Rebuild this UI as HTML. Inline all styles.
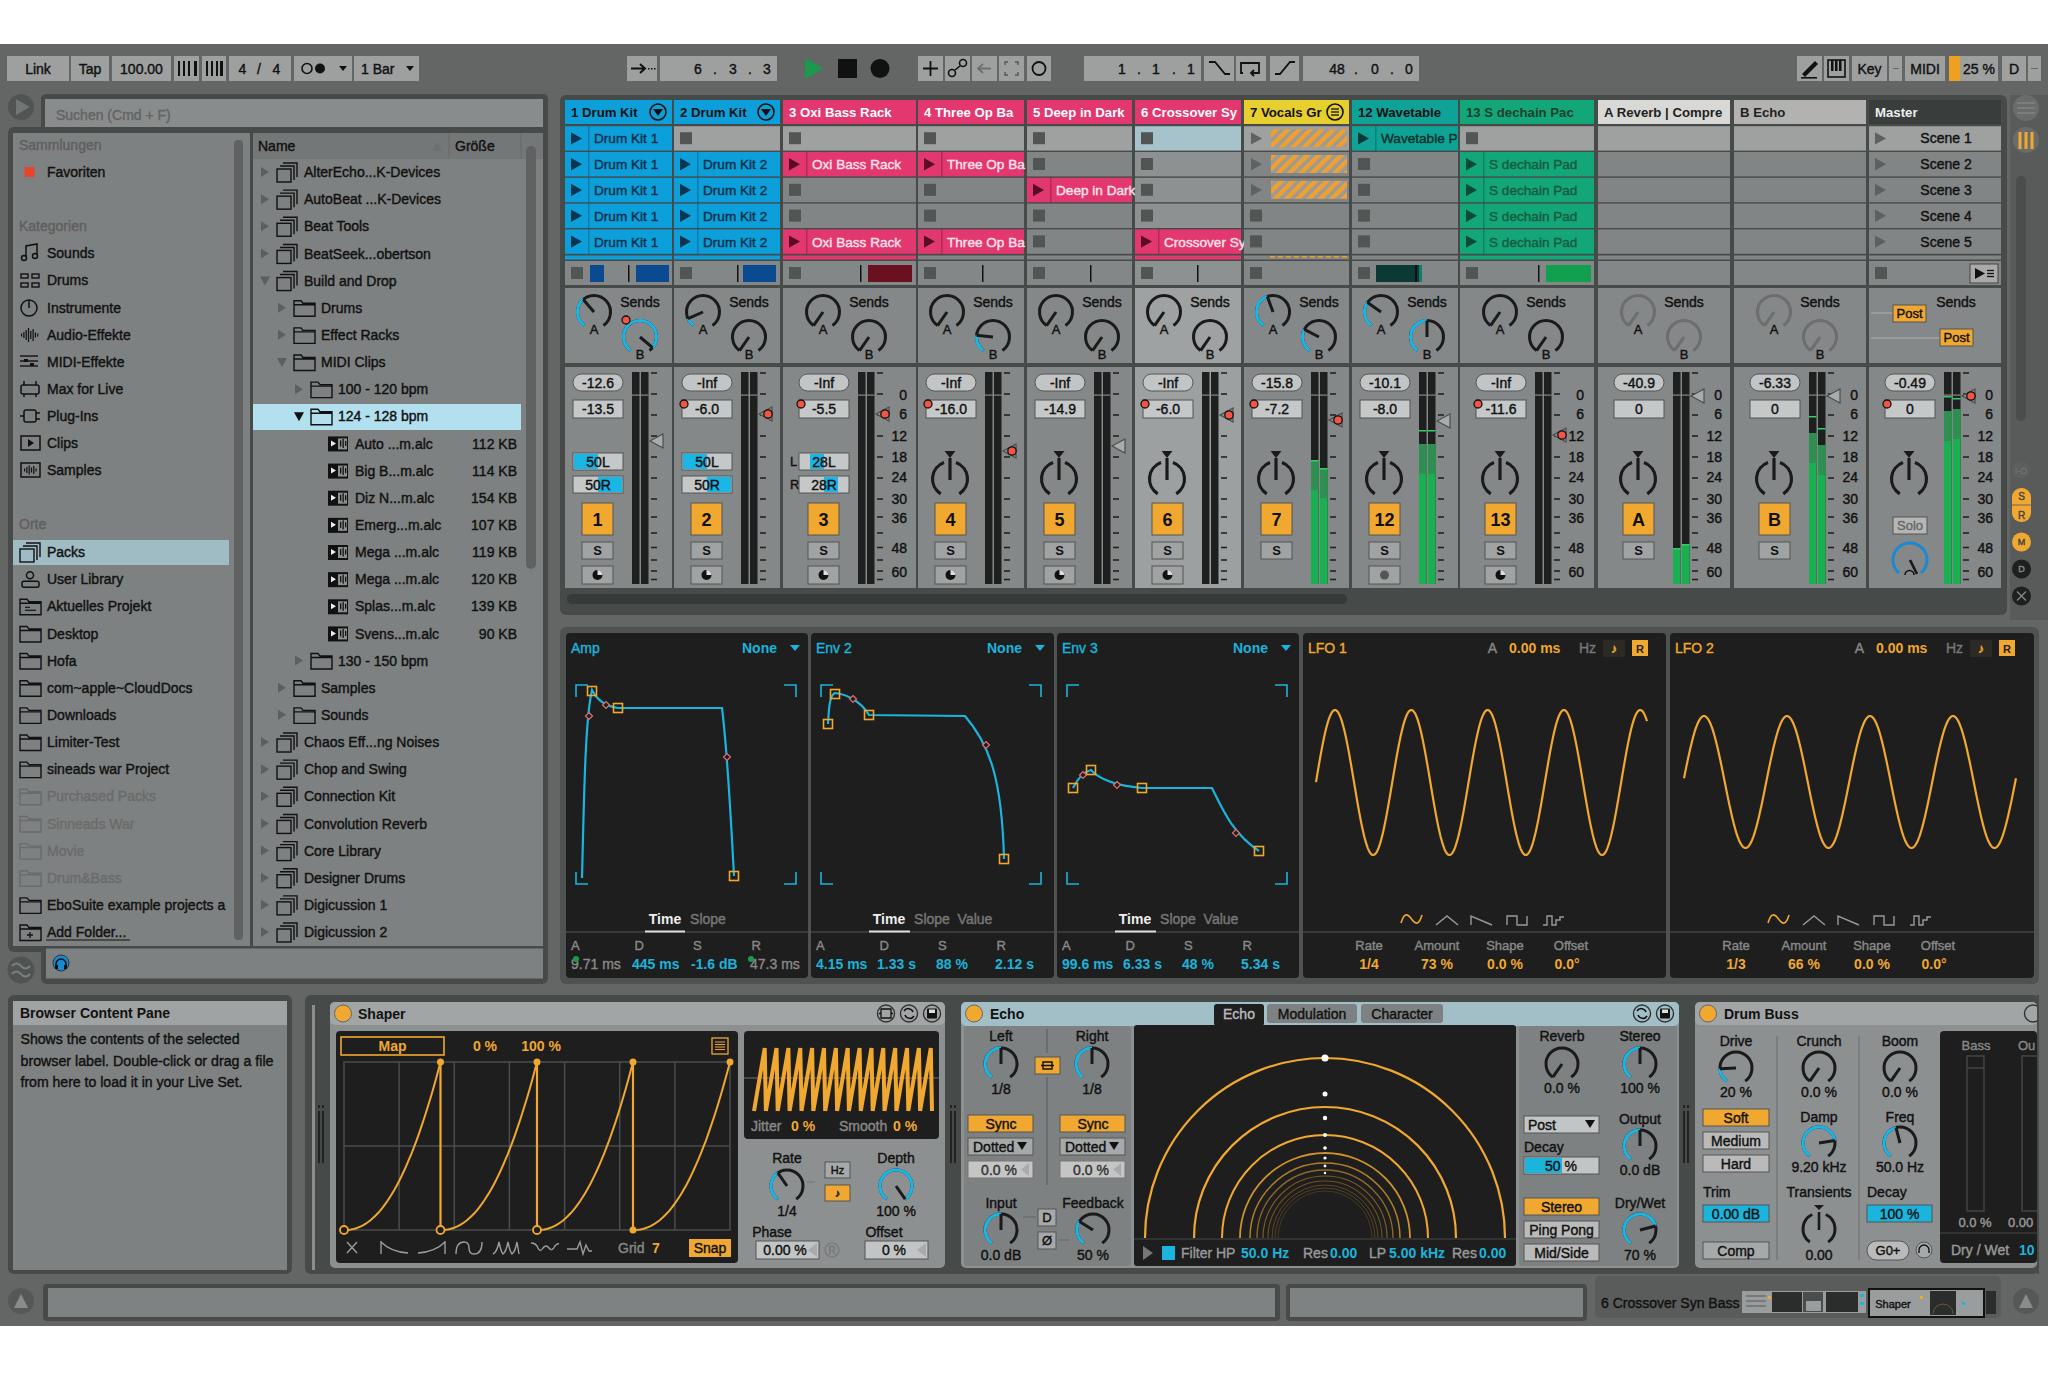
<!DOCTYPE html>
<html><head><meta charset="utf-8"><title>Live</title>
<style>
html,body{margin:0;padding:0;background:#fff;overflow:hidden;width:2048px;height:1374px}
svg{display:block;font-family:"Liberation Sans", sans-serif}
</style></head><body>
<svg width="2048" height="1374" viewBox="0 0 2048 1374">
<rect x="0" y="0" width="2048" height="1374" fill="#ffffff"/>
<rect x="0" y="44" width="2048" height="1282" fill="#636665" />
<rect x="7" y="56" width="62" height="25" fill="#9ea0a0" />
<text x="38.0" y="73.5" font-size="14" fill="#111" stroke="#111" stroke-width="0.4" font-weight="normal" text-anchor="middle" style="white-space:pre" >Link</text>
<rect x="71" y="56" width="38" height="25" fill="#9ea0a0" />
<text x="90.0" y="73.5" font-size="14" fill="#111" stroke="#111" stroke-width="0.4" font-weight="normal" text-anchor="middle" style="white-space:pre" >Tap</text>
<rect x="112" y="56" width="59" height="25" fill="#9ea0a0" />
<text x="141.5" y="73.5" font-size="14" fill="#111" stroke="#111" stroke-width="0.4" font-weight="normal" text-anchor="middle" style="white-space:pre" >100.00</text>
<rect x="174" y="56" width="25" height="25" fill="#9ea0a0" />
<rect x="202" y="56" width="24" height="25" fill="#9ea0a0" />
<rect x="178" y="61" width="2" height="15" fill="#111" />
<rect x="183" y="61" width="2" height="15" fill="#111" />
<rect x="188" y="61" width="2" height="15" fill="#111" />
<rect x="194" y="61" width="3" height="15" fill="#111" />
<rect x="206" y="61" width="2" height="15" fill="#111" />
<rect x="211" y="61" width="2" height="15" fill="#111" />
<rect x="216" y="61" width="2" height="15" fill="#111" />
<rect x="220" y="61" width="3" height="15" fill="#111" />
<rect x="229" y="56" width="62" height="25" fill="#9ea0a0" />
<text x="242.5" y="73.5" font-size="14" fill="#111" stroke="#111" stroke-width="0.4" font-weight="normal" text-anchor="middle" style="white-space:pre" >4</text>
<text x="259" y="73.5" font-size="14" fill="#111" stroke="#111" stroke-width="0.4" font-weight="normal" text-anchor="middle" style="white-space:pre" >/</text>
<text x="276.5" y="73.5" font-size="14" fill="#111" stroke="#111" stroke-width="0.4" font-weight="normal" text-anchor="middle" style="white-space:pre" >4</text>
<rect x="294" y="56" width="58" height="25" fill="#9ea0a0" />
<circle cx="307" cy="68.5" r="5" fill="none" stroke="#111" stroke-width="1.6" />
<circle cx="320" cy="68.5" r="5" fill="#111" />
<path d="M339,66 L347,66 L343,71 Z" stroke="none" stroke-width="1" fill="#111" />
<rect x="354" y="56" width="65" height="25" fill="#9ea0a0" />
<text x="361" y="73.5" font-size="14" fill="#111" stroke="#111" stroke-width="0.4" font-weight="normal" text-anchor="start" style="white-space:pre" >1 Bar</text>
<path d="M406,66 L414,66 L410,71 Z" stroke="none" stroke-width="1" fill="#111" />
<rect x="627" y="56" width="30" height="25" fill="#9ea0a0" />
<path d="M631,68.5 L645,68.5 M640,64 L645,68.5 L640,73" stroke="#111" stroke-width="2" fill="none" />
<rect x="648" y="68" width="1.5" height="1.5" fill="#111" />
<rect x="651" y="68" width="1.5" height="1.5" fill="#111" />
<rect x="654" y="68" width="1.5" height="1.5" fill="#111" />
<rect x="660" y="56" width="117" height="25" fill="#9ea0a0" />
<text x="698" y="73.5" font-size="14" fill="#111" stroke="#111" stroke-width="0.4" font-weight="normal" text-anchor="middle" style="white-space:pre" >6</text>
<text x="715" y="73.5" font-size="14" fill="#111" stroke="#111" stroke-width="0.4" font-weight="normal" text-anchor="middle" style="white-space:pre" >.</text>
<text x="733" y="73.5" font-size="14" fill="#111" stroke="#111" stroke-width="0.4" font-weight="normal" text-anchor="middle" style="white-space:pre" >3</text>
<text x="750" y="73.5" font-size="14" fill="#111" stroke="#111" stroke-width="0.4" font-weight="normal" text-anchor="middle" style="white-space:pre" >.</text>
<text x="767" y="73.5" font-size="14" fill="#111" stroke="#111" stroke-width="0.4" font-weight="normal" text-anchor="middle" style="white-space:pre" >3</text>
<path d="M805,58 L823,68.5 L805,79 Z" stroke="none" stroke-width="1" fill="#1a9a4a" />
<rect x="838" y="59" width="19" height="19" fill="#111" />
<circle cx="880" cy="68.5" r="9.5" fill="#111" />
<rect x="918" y="56" width="25" height="25" fill="#9ea0a0" />
<path d="M923,68.5 L938,68.5 M930.5,61 L930.5,76" stroke="#111" stroke-width="1.8" fill="none" />
<rect x="945" y="56" width="25" height="25" fill="#9ea0a0" />
<circle cx="952" cy="73" r="3.5" fill="none" stroke="#111" stroke-width="1.6" />
<circle cx="963" cy="63" r="3.5" fill="none" stroke="#111" stroke-width="1.6" />
<line x1="955" y1="70" x2="960" y2="66" stroke="#111" stroke-width="1.6" />
<rect x="972" y="56" width="25" height="25" fill="#9ea0a0" />
<path d="M978,68.5 L991,68.5 M983,64 L978,68.5 L983,73" stroke="#6f6f6f" stroke-width="1.8" fill="none" />
<rect x="999" y="56" width="25" height="25" fill="#9ea0a0" />
<path d="M1005,65 L1005,62 L1008,62 M1015,62 L1018,62 L1018,65 M1018,72 L1018,75 L1015,75 M1008,75 L1005,75 L1005,72" stroke="#555" stroke-width="1.4" fill="none" />
<rect x="1027" y="56" width="24" height="25" fill="#9ea0a0" />
<circle cx="1039" cy="68.5" r="6.5" fill="none" stroke="#111" stroke-width="1.8" />
<rect x="1084" y="56" width="117" height="25" fill="#9ea0a0" />
<text x="1122" y="73.5" font-size="14" fill="#111" stroke="#111" stroke-width="0.4" font-weight="normal" text-anchor="middle" style="white-space:pre" >1</text>
<text x="1139" y="73.5" font-size="14" fill="#111" stroke="#111" stroke-width="0.4" font-weight="normal" text-anchor="middle" style="white-space:pre" >.</text>
<text x="1156" y="73.5" font-size="14" fill="#111" stroke="#111" stroke-width="0.4" font-weight="normal" text-anchor="middle" style="white-space:pre" >1</text>
<text x="1174" y="73.5" font-size="14" fill="#111" stroke="#111" stroke-width="0.4" font-weight="normal" text-anchor="middle" style="white-space:pre" >.</text>
<text x="1191" y="73.5" font-size="14" fill="#111" stroke="#111" stroke-width="0.4" font-weight="normal" text-anchor="middle" style="white-space:pre" >1</text>
<rect x="1204" y="56" width="30" height="25" fill="#9ea0a0" />
<path d="M1209,62 L1215,62 L1225,74 L1230,74" stroke="#111" stroke-width="1.8" fill="none" />
<rect x="1236" y="56" width="30" height="25" fill="#9ea0a0" />
<path d="M1243,73 L1241,73 L1241,63 L1259,63 L1259,73 L1251,73 M1254,70 L1251,73 L1254,76" stroke="#111" stroke-width="1.8" fill="none" />
<rect x="1270" y="56" width="29" height="25" fill="#9ea0a0" />
<path d="M1275,74 L1280,74 L1290,62 L1295,62" stroke="#111" stroke-width="1.8" fill="none" />
<rect x="1303" y="56" width="116" height="25" fill="#9ea0a0" />
<text x="1337" y="73.5" font-size="14" fill="#111" stroke="#111" stroke-width="0.4" font-weight="normal" text-anchor="middle" style="white-space:pre" >48</text>
<text x="1356" y="73.5" font-size="14" fill="#111" stroke="#111" stroke-width="0.4" font-weight="normal" text-anchor="middle" style="white-space:pre" >.</text>
<text x="1375" y="73.5" font-size="14" fill="#111" stroke="#111" stroke-width="0.4" font-weight="normal" text-anchor="middle" style="white-space:pre" >0</text>
<text x="1392" y="73.5" font-size="14" fill="#111" stroke="#111" stroke-width="0.4" font-weight="normal" text-anchor="middle" style="white-space:pre" >.</text>
<text x="1409" y="73.5" font-size="14" fill="#111" stroke="#111" stroke-width="0.4" font-weight="normal" text-anchor="middle" style="white-space:pre" >0</text>
<rect x="1797" y="56" width="25" height="25" fill="#9ea0a0" />
<path d="M1802,74 L1815,61 L1818,64 L1805,77 Z" stroke="none" stroke-width="1" fill="#111" />
<rect x="1801" y="77" width="16" height="1.6" fill="#111" />
<rect x="1824" y="56" width="25" height="25" fill="#9ea0a0" />
<rect x="1828" y="60" width="17" height="17" fill="none" stroke="#111" stroke-width="1.6" />
<rect x="1831" y="60" width="2.5" height="11" fill="#111" />
<rect x="1835" y="60" width="2.5" height="11" fill="#111" />
<rect x="1839" y="60" width="2.5" height="11" fill="#111" />
<rect x="1852" y="56" width="35" height="25" fill="#9ea0a0" />
<text x="1869.5" y="73.5" font-size="14" fill="#111" stroke="#111" stroke-width="0.4" font-weight="normal" text-anchor="middle" style="white-space:pre" >Key</text>
<rect x="1889" y="56" width="13" height="25" fill="#9ea0a0" />
<rect x="1893" y="68" width="6" height="1" fill="#666" />
<rect x="1905" y="56" width="40" height="25" fill="#9ea0a0" />
<text x="1925.0" y="73.5" font-size="14" fill="#111" stroke="#111" stroke-width="0.4" font-weight="normal" text-anchor="middle" style="white-space:pre" >MIDI</text>
<rect x="1949" y="56" width="49" height="25" fill="#9ea0a0" />
<rect x="1949" y="56" width="11" height="25" fill="#f0a020" />
<text x="1979" y="73.5" font-size="14" fill="#111" stroke="#111" stroke-width="0.4" font-weight="normal" text-anchor="middle" style="white-space:pre" >25 %</text>
<rect x="2002" y="56" width="24" height="25" fill="#9ea0a0" />
<text x="2014.0" y="73.5" font-size="14" fill="#111" stroke="#111" stroke-width="0.4" font-weight="normal" text-anchor="middle" style="white-space:pre" >D</text>
<rect x="2028" y="56" width="13" height="25" fill="#9ea0a0" />
<rect x="2031" y="68" width="7" height="1" fill="#666" />
<circle cx="21" cy="107" r="13" fill="#505453" />
<path d="M16,99 L30,107 L16,115 Z" stroke="none" stroke-width="1" fill="#717574" />
<rect x="41" y="94" width="507" height="39" fill="#464a49" rx="5" />
<rect x="45" y="99" width="498" height="31" fill="#898c8c" />
<text x="56" y="120.0" font-size="14" fill="#636463" stroke="#636463" stroke-width="0.4" font-weight="normal" text-anchor="start" style="white-space:pre" >Suchen (Cmd + F)</text>
<rect x="8" y="127" width="540" height="825" fill="#464a49" rx="6" />
<rect x="41" y="900" width="507" height="84" fill="#464a49" rx="6" />
<rect x="41" y="900" width="507" height="20" fill="#464a49" />
<rect x="41" y="127" width="507" height="10" fill="#464a49" />
<rect x="13" y="133" width="237" height="813" fill="#7e8181" />
<rect x="253" y="133" width="290" height="813" fill="#7e8181" />
<rect x="253" y="133" width="290" height="26" fill="#747777" />
<line x1="449" y1="133" x2="449" y2="159" stroke="#6e6f6f" stroke-width="2" />
<line x1="521" y1="133" x2="521" y2="159" stroke="#6e6f6f" stroke-width="2" />
<text x="258" y="151.0" font-size="14" fill="#111" stroke="#111" stroke-width="0.4" font-weight="normal" text-anchor="start" style="white-space:pre" >Name</text>
<text x="455" y="151.0" font-size="14" fill="#111" stroke="#111" stroke-width="0.4" font-weight="normal" text-anchor="start" style="white-space:pre" >Größe</text>
<path d="M432,151 L442,151 L437,142 Z" stroke="none" stroke-width="1" fill="#6e6f6f" />
<rect x="234" y="140" width="9" height="800" fill="#5f6261" rx="4" />
<rect x="526" y="146" width="10" height="423" fill="#5f6261" rx="5" />
<rect x="46" y="948.5" width="497" height="30" fill="#7e8181" />
<circle cx="21" cy="970" r="13.5" fill="#4f5352" />
<path d="M12,966 q4.5,-5 9,0 t9,0 M12,974 q4.5,-5 9,0 t9,0" stroke="#7b7f7e" stroke-width="2" fill="none" />
<circle cx="61" cy="963" r="8" fill="#1a8ad0" stroke="#333" stroke-width="1" />
<path d="M56,967 v-3 a5,5 0 0 1 10,0 v3" stroke="#111" stroke-width="1.6" fill="none" />
<rect x="55" y="965" width="3" height="4" fill="#111" />
<rect x="64" y="965" width="3" height="4" fill="#111" />
<rect x="253" y="404" width="268" height="26" fill="#b3e0ee" />
<rect x="13" y="540" width="216" height="25" fill="#9fbcc4" />
<path d="M261,167.0 L269,172.0 L261,177.0 Z" stroke="none" stroke-width="1" fill="#5d5e5e" />
<path d="M283,163.0 h14 v14 M280,166.0 h14 v14" stroke="#111" stroke-width="1.4" fill="none" />
<rect x="277" y="169.0" width="14" height="13" fill="none" stroke="#111" stroke-width="1.4" />
<text x="304" y="177.0" font-size="14" fill="#111" stroke="#111" stroke-width="0.4" font-weight="normal" text-anchor="start" style="white-space:pre" >AlterEcho...K-Devices</text>
<path d="M261,194.143 L269,199.143 L261,204.143 Z" stroke="none" stroke-width="1" fill="#5d5e5e" />
<path d="M283,190.143 h14 v14 M280,193.143 h14 v14" stroke="#111" stroke-width="1.4" fill="none" />
<rect x="277" y="196.143" width="14" height="13" fill="none" stroke="#111" stroke-width="1.4" />
<text x="304" y="204.2" font-size="14" fill="#111" stroke="#111" stroke-width="0.4" font-weight="normal" text-anchor="start" style="white-space:pre" >AutoBeat ...K-Devices</text>
<path d="M261,221.286 L269,226.286 L261,231.286 Z" stroke="none" stroke-width="1" fill="#5d5e5e" />
<path d="M283,217.286 h14 v14 M280,220.286 h14 v14" stroke="#111" stroke-width="1.4" fill="none" />
<rect x="277" y="223.286" width="14" height="13" fill="none" stroke="#111" stroke-width="1.4" />
<text x="304" y="231.3" font-size="14" fill="#111" stroke="#111" stroke-width="0.4" font-weight="normal" text-anchor="start" style="white-space:pre" >Beat Tools</text>
<path d="M261,248.429 L269,253.429 L261,258.429 Z" stroke="none" stroke-width="1" fill="#5d5e5e" />
<path d="M283,244.429 h14 v14 M280,247.429 h14 v14" stroke="#111" stroke-width="1.4" fill="none" />
<rect x="277" y="250.429" width="14" height="13" fill="none" stroke="#111" stroke-width="1.4" />
<text x="304" y="258.5" font-size="14" fill="#111" stroke="#111" stroke-width="0.4" font-weight="normal" text-anchor="start" style="white-space:pre" >BeatSeek...obertson</text>
<path d="M260,276.572 L270,276.572 L265,285.572 Z" stroke="none" stroke-width="1" fill="#5d5e5e" />
<path d="M283,271.572 h14 v14 M280,274.572 h14 v14" stroke="#111" stroke-width="1.4" fill="none" />
<rect x="277" y="277.572" width="14" height="13" fill="none" stroke="#111" stroke-width="1.4" />
<text x="304" y="285.6" font-size="14" fill="#111" stroke="#111" stroke-width="0.4" font-weight="normal" text-anchor="start" style="white-space:pre" >Build and Drop</text>
<path d="M278,302.71500000000003 L286,307.71500000000003 L278,312.71500000000003 Z" stroke="none" stroke-width="1" fill="#5d5e5e" />
<path d="M294,300.71500000000003 h7 l2,2.5 h12 v13 h-21 z M294,304.71500000000003 h21" stroke="#111" stroke-width="1.4" fill="none" />
<text x="321" y="312.8" font-size="14" fill="#111" stroke="#111" stroke-width="0.4" font-weight="normal" text-anchor="start" style="white-space:pre" >Drums</text>
<path d="M278,329.858 L286,334.858 L278,339.858 Z" stroke="none" stroke-width="1" fill="#5d5e5e" />
<path d="M294,327.858 h7 l2,2.5 h12 v13 h-21 z M294,331.858 h21" stroke="#111" stroke-width="1.4" fill="none" />
<text x="321" y="339.9" font-size="14" fill="#111" stroke="#111" stroke-width="0.4" font-weight="normal" text-anchor="start" style="white-space:pre" >Effect Racks</text>
<path d="M277,358.001 L287,358.001 L282,367.001 Z" stroke="none" stroke-width="1" fill="#5d5e5e" />
<path d="M294,355.001 h7 l2,2.5 h12 v13 h-21 z M294,359.001 h21" stroke="#111" stroke-width="1.4" fill="none" />
<text x="321" y="367.0" font-size="14" fill="#111" stroke="#111" stroke-width="0.4" font-weight="normal" text-anchor="start" style="white-space:pre" >MIDI Clips</text>
<path d="M295,384.144 L303,389.144 L295,394.144 Z" stroke="none" stroke-width="1" fill="#5d5e5e" />
<path d="M311,382.144 h7 l2,2.5 h12 v13 h-21 z M311,386.144 h21" stroke="#111" stroke-width="1.4" fill="none" />
<text x="338" y="394.2" font-size="14" fill="#111" stroke="#111" stroke-width="0.4" font-weight="normal" text-anchor="start" style="white-space:pre" >100 - 120 bpm</text>
<path d="M294,412.28700000000003 L304,412.28700000000003 L299,421.28700000000003 Z" stroke="none" stroke-width="1" fill="#111" />
<path d="M311,409.28700000000003 h7 l2,2.5 h12 v13 h-21 z M311,413.28700000000003 h21" stroke="#111" stroke-width="1.4" fill="none" />
<text x="338" y="421.3" font-size="14" fill="#111" stroke="#111" stroke-width="0.4" font-weight="normal" text-anchor="start" style="white-space:pre" >124 - 128 bpm</text>
<rect x="328" y="436.43" width="20" height="15" fill="#111" />
<path d="M331,440.43 L336,443.43 L331,446.43 Z" stroke="none" stroke-width="1" fill="#eee" />
<rect x="338" y="438.43" width="9" height="11" fill="#8e8f8f" />
<rect x="340" y="440.43" width="1.3" height="6" fill="#111" />
<rect x="342.5" y="438.93" width="1.3" height="9" fill="#111" />
<rect x="345" y="440.93" width="1.3" height="5" fill="#111" />
<text x="355" y="448.5" font-size="14" fill="#111" stroke="#111" stroke-width="0.4" font-weight="normal" text-anchor="start" style="white-space:pre" >Auto ...m.alc</text>
<text x="517" y="448.5" font-size="14" fill="#111" stroke="#111" stroke-width="0.4" font-weight="normal" text-anchor="end" style="white-space:pre" >112 KB</text>
<rect x="328" y="463.573" width="20" height="15" fill="#111" />
<path d="M331,467.573 L336,470.573 L331,473.573 Z" stroke="none" stroke-width="1" fill="#eee" />
<rect x="338" y="465.573" width="9" height="11" fill="#8e8f8f" />
<rect x="340" y="467.573" width="1.3" height="6" fill="#111" />
<rect x="342.5" y="466.073" width="1.3" height="9" fill="#111" />
<rect x="345" y="468.073" width="1.3" height="5" fill="#111" />
<text x="355" y="475.6" font-size="14" fill="#111" stroke="#111" stroke-width="0.4" font-weight="normal" text-anchor="start" style="white-space:pre" >Big B...m.alc</text>
<text x="517" y="475.6" font-size="14" fill="#111" stroke="#111" stroke-width="0.4" font-weight="normal" text-anchor="end" style="white-space:pre" >114 KB</text>
<rect x="328" y="490.716" width="20" height="15" fill="#111" />
<path d="M331,494.716 L336,497.716 L331,500.716 Z" stroke="none" stroke-width="1" fill="#eee" />
<rect x="338" y="492.716" width="9" height="11" fill="#8e8f8f" />
<rect x="340" y="494.716" width="1.3" height="6" fill="#111" />
<rect x="342.5" y="493.216" width="1.3" height="9" fill="#111" />
<rect x="345" y="495.216" width="1.3" height="5" fill="#111" />
<text x="355" y="502.8" font-size="14" fill="#111" stroke="#111" stroke-width="0.4" font-weight="normal" text-anchor="start" style="white-space:pre" >Diz N...m.alc</text>
<text x="517" y="502.8" font-size="14" fill="#111" stroke="#111" stroke-width="0.4" font-weight="normal" text-anchor="end" style="white-space:pre" >154 KB</text>
<rect x="328" y="517.859" width="20" height="15" fill="#111" />
<path d="M331,521.859 L336,524.859 L331,527.859 Z" stroke="none" stroke-width="1" fill="#eee" />
<rect x="338" y="519.859" width="9" height="11" fill="#8e8f8f" />
<rect x="340" y="521.859" width="1.3" height="6" fill="#111" />
<rect x="342.5" y="520.359" width="1.3" height="9" fill="#111" />
<rect x="345" y="522.359" width="1.3" height="5" fill="#111" />
<text x="355" y="529.9" font-size="14" fill="#111" stroke="#111" stroke-width="0.4" font-weight="normal" text-anchor="start" style="white-space:pre" >Emerg...m.alc</text>
<text x="517" y="529.9" font-size="14" fill="#111" stroke="#111" stroke-width="0.4" font-weight="normal" text-anchor="end" style="white-space:pre" >107 KB</text>
<rect x="328" y="545.002" width="20" height="15" fill="#111" />
<path d="M331,549.002 L336,552.002 L331,555.002 Z" stroke="none" stroke-width="1" fill="#eee" />
<rect x="338" y="547.002" width="9" height="11" fill="#8e8f8f" />
<rect x="340" y="549.002" width="1.3" height="6" fill="#111" />
<rect x="342.5" y="547.502" width="1.3" height="9" fill="#111" />
<rect x="345" y="549.502" width="1.3" height="5" fill="#111" />
<text x="355" y="557.0" font-size="14" fill="#111" stroke="#111" stroke-width="0.4" font-weight="normal" text-anchor="start" style="white-space:pre" >Mega ...m.alc</text>
<text x="517" y="557.0" font-size="14" fill="#111" stroke="#111" stroke-width="0.4" font-weight="normal" text-anchor="end" style="white-space:pre" >119 KB</text>
<rect x="328" y="572.145" width="20" height="15" fill="#111" />
<path d="M331,576.145 L336,579.145 L331,582.145 Z" stroke="none" stroke-width="1" fill="#eee" />
<rect x="338" y="574.145" width="9" height="11" fill="#8e8f8f" />
<rect x="340" y="576.145" width="1.3" height="6" fill="#111" />
<rect x="342.5" y="574.645" width="1.3" height="9" fill="#111" />
<rect x="345" y="576.645" width="1.3" height="5" fill="#111" />
<text x="355" y="584.2" font-size="14" fill="#111" stroke="#111" stroke-width="0.4" font-weight="normal" text-anchor="start" style="white-space:pre" >Mega ...m.alc</text>
<text x="517" y="584.2" font-size="14" fill="#111" stroke="#111" stroke-width="0.4" font-weight="normal" text-anchor="end" style="white-space:pre" >120 KB</text>
<rect x="328" y="599.288" width="20" height="15" fill="#111" />
<path d="M331,603.288 L336,606.288 L331,609.288 Z" stroke="none" stroke-width="1" fill="#eee" />
<rect x="338" y="601.288" width="9" height="11" fill="#8e8f8f" />
<rect x="340" y="603.288" width="1.3" height="6" fill="#111" />
<rect x="342.5" y="601.788" width="1.3" height="9" fill="#111" />
<rect x="345" y="603.788" width="1.3" height="5" fill="#111" />
<text x="355" y="611.3" font-size="14" fill="#111" stroke="#111" stroke-width="0.4" font-weight="normal" text-anchor="start" style="white-space:pre" >Splas...m.alc</text>
<text x="517" y="611.3" font-size="14" fill="#111" stroke="#111" stroke-width="0.4" font-weight="normal" text-anchor="end" style="white-space:pre" >139 KB</text>
<rect x="328" y="626.431" width="20" height="15" fill="#111" />
<path d="M331,630.431 L336,633.431 L331,636.431 Z" stroke="none" stroke-width="1" fill="#eee" />
<rect x="338" y="628.431" width="9" height="11" fill="#8e8f8f" />
<rect x="340" y="630.431" width="1.3" height="6" fill="#111" />
<rect x="342.5" y="628.931" width="1.3" height="9" fill="#111" />
<rect x="345" y="630.931" width="1.3" height="5" fill="#111" />
<text x="355" y="638.5" font-size="14" fill="#111" stroke="#111" stroke-width="0.4" font-weight="normal" text-anchor="start" style="white-space:pre" >Svens...m.alc</text>
<text x="517" y="638.5" font-size="14" fill="#111" stroke="#111" stroke-width="0.4" font-weight="normal" text-anchor="end" style="white-space:pre" >90 KB</text>
<path d="M295,655.5740000000001 L303,660.5740000000001 L295,665.5740000000001 Z" stroke="none" stroke-width="1" fill="#5d5e5e" />
<path d="M311,653.5740000000001 h7 l2,2.5 h12 v13 h-21 z M311,657.5740000000001 h21" stroke="#111" stroke-width="1.4" fill="none" />
<text x="338" y="665.6" font-size="14" fill="#111" stroke="#111" stroke-width="0.4" font-weight="normal" text-anchor="start" style="white-space:pre" >130 - 150 bpm</text>
<path d="M278,682.717 L286,687.717 L278,692.717 Z" stroke="none" stroke-width="1" fill="#5d5e5e" />
<path d="M294,680.717 h7 l2,2.5 h12 v13 h-21 z M294,684.717 h21" stroke="#111" stroke-width="1.4" fill="none" />
<text x="321" y="692.8" font-size="14" fill="#111" stroke="#111" stroke-width="0.4" font-weight="normal" text-anchor="start" style="white-space:pre" >Samples</text>
<path d="M278,709.86 L286,714.86 L278,719.86 Z" stroke="none" stroke-width="1" fill="#5d5e5e" />
<path d="M294,707.86 h7 l2,2.5 h12 v13 h-21 z M294,711.86 h21" stroke="#111" stroke-width="1.4" fill="none" />
<text x="321" y="719.9" font-size="14" fill="#111" stroke="#111" stroke-width="0.4" font-weight="normal" text-anchor="start" style="white-space:pre" >Sounds</text>
<path d="M261,737.003 L269,742.003 L261,747.003 Z" stroke="none" stroke-width="1" fill="#5d5e5e" />
<path d="M283,733.003 h14 v14 M280,736.003 h14 v14" stroke="#111" stroke-width="1.4" fill="none" />
<rect x="277" y="739.003" width="14" height="13" fill="none" stroke="#111" stroke-width="1.4" />
<text x="304" y="747.0" font-size="14" fill="#111" stroke="#111" stroke-width="0.4" font-weight="normal" text-anchor="start" style="white-space:pre" >Chaos Eff...ng Noises</text>
<path d="M261,764.146 L269,769.146 L261,774.146 Z" stroke="none" stroke-width="1" fill="#5d5e5e" />
<path d="M283,760.146 h14 v14 M280,763.146 h14 v14" stroke="#111" stroke-width="1.4" fill="none" />
<rect x="277" y="766.146" width="14" height="13" fill="none" stroke="#111" stroke-width="1.4" />
<text x="304" y="774.2" font-size="14" fill="#111" stroke="#111" stroke-width="0.4" font-weight="normal" text-anchor="start" style="white-space:pre" >Chop and Swing</text>
<path d="M261,791.289 L269,796.289 L261,801.289 Z" stroke="none" stroke-width="1" fill="#5d5e5e" />
<path d="M283,787.289 h14 v14 M280,790.289 h14 v14" stroke="#111" stroke-width="1.4" fill="none" />
<rect x="277" y="793.289" width="14" height="13" fill="none" stroke="#111" stroke-width="1.4" />
<text x="304" y="801.3" font-size="14" fill="#111" stroke="#111" stroke-width="0.4" font-weight="normal" text-anchor="start" style="white-space:pre" >Connection Kit</text>
<path d="M261,818.432 L269,823.432 L261,828.432 Z" stroke="none" stroke-width="1" fill="#5d5e5e" />
<path d="M283,814.432 h14 v14 M280,817.432 h14 v14" stroke="#111" stroke-width="1.4" fill="none" />
<rect x="277" y="820.432" width="14" height="13" fill="none" stroke="#111" stroke-width="1.4" />
<text x="304" y="828.5" font-size="14" fill="#111" stroke="#111" stroke-width="0.4" font-weight="normal" text-anchor="start" style="white-space:pre" >Convolution Reverb</text>
<path d="M261,845.575 L269,850.575 L261,855.575 Z" stroke="none" stroke-width="1" fill="#5d5e5e" />
<path d="M283,841.575 h14 v14 M280,844.575 h14 v14" stroke="#111" stroke-width="1.4" fill="none" />
<rect x="277" y="847.575" width="14" height="13" fill="none" stroke="#111" stroke-width="1.4" />
<text x="304" y="855.6" font-size="14" fill="#111" stroke="#111" stroke-width="0.4" font-weight="normal" text-anchor="start" style="white-space:pre" >Core Library</text>
<path d="M261,872.7180000000001 L269,877.7180000000001 L261,882.7180000000001 Z" stroke="none" stroke-width="1" fill="#5d5e5e" />
<path d="M283,868.7180000000001 h14 v14 M280,871.7180000000001 h14 v14" stroke="#111" stroke-width="1.4" fill="none" />
<rect x="277" y="874.7180000000001" width="14" height="13" fill="none" stroke="#111" stroke-width="1.4" />
<text x="304" y="882.8" font-size="14" fill="#111" stroke="#111" stroke-width="0.4" font-weight="normal" text-anchor="start" style="white-space:pre" >Designer Drums</text>
<path d="M261,899.861 L269,904.861 L261,909.861 Z" stroke="none" stroke-width="1" fill="#5d5e5e" />
<path d="M283,895.861 h14 v14 M280,898.861 h14 v14" stroke="#111" stroke-width="1.4" fill="none" />
<rect x="277" y="901.861" width="14" height="13" fill="none" stroke="#111" stroke-width="1.4" />
<text x="304" y="909.9" font-size="14" fill="#111" stroke="#111" stroke-width="0.4" font-weight="normal" text-anchor="start" style="white-space:pre" >Digicussion 1</text>
<path d="M261,927.004 L269,932.004 L261,937.004 Z" stroke="none" stroke-width="1" fill="#5d5e5e" />
<path d="M283,923.004 h14 v14 M280,926.004 h14 v14" stroke="#111" stroke-width="1.4" fill="none" />
<rect x="277" y="929.004" width="14" height="13" fill="none" stroke="#111" stroke-width="1.4" />
<text x="304" y="937.0" font-size="14" fill="#111" stroke="#111" stroke-width="0.4" font-weight="normal" text-anchor="start" style="white-space:pre" >Digicussion 2</text>
<text x="19" y="150.0" font-size="14" fill="#5e5f5f" stroke="#5e5f5f" stroke-width="0.4" font-weight="normal" text-anchor="start" style="white-space:pre" >Sammlungen</text>
<text x="19" y="231.0" font-size="14" fill="#5e5f5f" stroke="#5e5f5f" stroke-width="0.4" font-weight="normal" text-anchor="start" style="white-space:pre" >Kategorien</text>
<text x="19" y="529.0" font-size="14" fill="#5e5f5f" stroke="#5e5f5f" stroke-width="0.4" font-weight="normal" text-anchor="start" style="white-space:pre" >Orte</text>
<rect x="24.5" y="167" width="10" height="10" fill="#e8442a" />
<text x="47" y="177.0" font-size="14" fill="#111" stroke="#111" stroke-width="0.4" font-weight="normal" text-anchor="start" style="white-space:pre" >Favoriten</text>
<path d="M26,257 v-11 l11,-2 v11" stroke="#111" stroke-width="1.5" fill="none" />
<circle cx="24" cy="258" r="2.5" fill="none" stroke="#111" stroke-width="1.5" />
<circle cx="35" cy="256" r="2.5" fill="none" stroke="#111" stroke-width="1.5" />
<text x="47" y="258.0" font-size="14" fill="#111" stroke="#111" stroke-width="0.4" font-weight="normal" text-anchor="start" style="white-space:pre" >Sounds</text>
<rect x="21" y="274" width="7" height="4" fill="none" stroke="#111" stroke-width="1.4" />
<rect x="21" y="283" width="7" height="4" fill="none" stroke="#111" stroke-width="1.4" />
<rect x="32" y="274" width="7" height="4" fill="none" stroke="#111" stroke-width="1.4" />
<rect x="32" y="283" width="7" height="4" fill="none" stroke="#111" stroke-width="1.4" />
<text x="47" y="285.0" font-size="14" fill="#111" stroke="#111" stroke-width="0.4" font-weight="normal" text-anchor="start" style="white-space:pre" >Drums</text>
<circle cx="29" cy="308" r="8" fill="none" stroke="#111" stroke-width="1.5" />
<line x1="29" y1="300" x2="29" y2="308" stroke="#111" stroke-width="1.5" />
<text x="47" y="313.0" font-size="14" fill="#111" stroke="#111" stroke-width="0.4" font-weight="normal" text-anchor="start" style="white-space:pre" >Instrumente</text>
<rect x="21.0" y="333.5" width="1.2" height="3" fill="#111" />
<rect x="23.3" y="332.0" width="1.2" height="6" fill="#111" />
<rect x="25.6" y="330.0" width="1.2" height="10" fill="#111" />
<rect x="27.9" y="328.0" width="1.2" height="14" fill="#111" />
<rect x="30.2" y="331.0" width="1.2" height="8" fill="#111" />
<rect x="32.5" y="329.0" width="1.2" height="12" fill="#111" />
<rect x="34.8" y="332.5" width="1.2" height="5" fill="#111" />
<rect x="37.099999999999994" y="333.5" width="1.2" height="3" fill="#111" />
<text x="47" y="340.0" font-size="14" fill="#111" stroke="#111" stroke-width="0.4" font-weight="normal" text-anchor="start" style="white-space:pre" >Audio-Effekte</text>
<line x1="20" y1="356" x2="38" y2="356" stroke="#111" stroke-width="1.4" />
<line x1="20" y1="361" x2="38" y2="361" stroke="#111" stroke-width="1.4" />
<line x1="20" y1="366" x2="38" y2="366" stroke="#111" stroke-width="1.4" />
<rect x="24" y="359" width="4" height="3" fill="#111" />
<rect x="30" y="363" width="4" height="3" fill="#111" />
<text x="47" y="367.0" font-size="14" fill="#111" stroke="#111" stroke-width="0.4" font-weight="normal" text-anchor="start" style="white-space:pre" >MIDI-Effekte</text>
<rect x="21" y="385" width="18" height="9" fill="none" rx="2" stroke="#111" stroke-width="1.5" />
<line x1="24" y1="381" x2="24" y2="385" stroke="#111" stroke-width="1.5" />
<line x1="36" y1="381" x2="36" y2="385" stroke="#111" stroke-width="1.5" />
<line x1="24" y1="394" x2="24" y2="397" stroke="#111" stroke-width="1.5" />
<line x1="36" y1="394" x2="36" y2="397" stroke="#111" stroke-width="1.5" />
<text x="47" y="394.0" font-size="14" fill="#111" stroke="#111" stroke-width="0.4" font-weight="normal" text-anchor="start" style="white-space:pre" >Max for Live</text>
<rect x="24" y="410" width="12" height="12" fill="none" rx="2" stroke="#111" stroke-width="1.5" />
<line x1="20" y1="416" x2="24" y2="416" stroke="#111" stroke-width="1.5" />
<line x1="36" y1="413" x2="40" y2="413" stroke="#111" stroke-width="1.5" />
<line x1="36" y1="419" x2="40" y2="419" stroke="#111" stroke-width="1.5" />
<text x="47" y="421.0" font-size="14" fill="#111" stroke="#111" stroke-width="0.4" font-weight="normal" text-anchor="start" style="white-space:pre" >Plug-Ins</text>
<rect x="21" y="436" width="19" height="14" fill="none" stroke="#111" stroke-width="1.5" />
<path d="M28,439 L34,443 L28,447 Z" stroke="none" stroke-width="1" fill="#111" />
<text x="47" y="448.0" font-size="14" fill="#111" stroke="#111" stroke-width="0.4" font-weight="normal" text-anchor="start" style="white-space:pre" >Clips</text>
<rect x="21" y="463" width="19" height="14" fill="none" stroke="#111" stroke-width="1.5" />
<rect x="24.0" y="468.5" width="1.2" height="3" fill="#111" />
<rect x="26.3" y="467.0" width="1.2" height="6" fill="#111" />
<rect x="28.6" y="465.5" width="1.2" height="9" fill="#111" />
<rect x="30.9" y="467.5" width="1.2" height="5" fill="#111" />
<rect x="33.2" y="466.0" width="1.2" height="8" fill="#111" />
<rect x="35.5" y="468.5" width="1.2" height="3" fill="#111" />
<text x="47" y="475.0" font-size="14" fill="#111" stroke="#111" stroke-width="0.4" font-weight="normal" text-anchor="start" style="white-space:pre" >Samples</text>
<path d="M26,543.002 h14 v14 M23,546.002 h14 v14" stroke="#111" stroke-width="1.4" fill="none" />
<rect x="20" y="549.002" width="14" height="13" fill="none" stroke="#111" stroke-width="1.4" />
<text x="47" y="557.0" font-size="14" fill="#111" stroke="#111" stroke-width="0.4" font-weight="normal" text-anchor="start" style="white-space:pre" >Packs</text>
<circle cx="30" cy="575.145" r="3.5" fill="none" stroke="#111" stroke-width="1.5" />
<rect x="22" y="581.145" width="17" height="6" fill="none" rx="2" stroke="#111" stroke-width="1.5" />
<text x="47" y="584.2" font-size="14" fill="#111" stroke="#111" stroke-width="0.4" font-weight="normal" text-anchor="start" style="white-space:pre" >User Library</text>
<path d="M20,599.288 h7 l2,2.5 h12 v13 h-21 z M20,603.288 h21" stroke="#111" stroke-width="1.4" fill="none" />
<line x1="25" y1="607.288" x2="30" y2="607.288" stroke="#111" stroke-width="1.2" />
<line x1="25" y1="610.288" x2="36" y2="610.288" stroke="#111" stroke-width="1.2" />
<text x="47" y="611.3" font-size="14" fill="#111" stroke="#111" stroke-width="0.4" font-weight="normal" text-anchor="start" style="white-space:pre" >Aktuelles Projekt</text>
<path d="M20,626.431 h7 l2,2.5 h12 v13 h-21 z M20,630.431 h21" stroke="#111" stroke-width="1.4" fill="none" />
<text x="47" y="638.5" font-size="14" fill="#111" stroke="#111" stroke-width="0.4" font-weight="normal" text-anchor="start" style="white-space:pre" >Desktop</text>
<path d="M20,653.5740000000001 h7 l2,2.5 h12 v13 h-21 z M20,657.5740000000001 h21" stroke="#111" stroke-width="1.4" fill="none" />
<text x="47" y="665.6" font-size="14" fill="#111" stroke="#111" stroke-width="0.4" font-weight="normal" text-anchor="start" style="white-space:pre" >Hofa</text>
<path d="M20,680.717 h7 l2,2.5 h12 v13 h-21 z M20,684.717 h21" stroke="#111" stroke-width="1.4" fill="none" />
<text x="47" y="692.8" font-size="14" fill="#111" stroke="#111" stroke-width="0.4" font-weight="normal" text-anchor="start" style="white-space:pre" >com~apple~CloudDocs</text>
<path d="M20,707.86 h7 l2,2.5 h12 v13 h-21 z M20,711.86 h21" stroke="#111" stroke-width="1.4" fill="none" />
<text x="47" y="719.9" font-size="14" fill="#111" stroke="#111" stroke-width="0.4" font-weight="normal" text-anchor="start" style="white-space:pre" >Downloads</text>
<path d="M20,735.003 h7 l2,2.5 h12 v13 h-21 z M20,739.003 h21" stroke="#111" stroke-width="1.4" fill="none" />
<text x="47" y="747.0" font-size="14" fill="#111" stroke="#111" stroke-width="0.4" font-weight="normal" text-anchor="start" style="white-space:pre" >Limiter-Test</text>
<path d="M20,762.146 h7 l2,2.5 h12 v13 h-21 z M20,766.146 h21" stroke="#111" stroke-width="1.4" fill="none" />
<text x="47" y="774.2" font-size="14" fill="#111" stroke="#111" stroke-width="0.4" font-weight="normal" text-anchor="start" style="white-space:pre" >sineads war Project</text>
<path d="M20,789.289 h7 l2,2.5 h12 v13 h-21 z M20,793.289 h21" stroke="#6a6b6b" stroke-width="1.4" fill="none" />
<text x="47" y="801.3" font-size="14" fill="#6a6b6b" stroke="#6a6b6b" stroke-width="0.4" font-weight="normal" text-anchor="start" style="white-space:pre" >Purchased Packs</text>
<path d="M20,816.432 h7 l2,2.5 h12 v13 h-21 z M20,820.432 h21" stroke="#6a6b6b" stroke-width="1.4" fill="none" />
<text x="47" y="828.5" font-size="14" fill="#6a6b6b" stroke="#6a6b6b" stroke-width="0.4" font-weight="normal" text-anchor="start" style="white-space:pre" >Sinneads War</text>
<path d="M20,843.575 h7 l2,2.5 h12 v13 h-21 z M20,847.575 h21" stroke="#6a6b6b" stroke-width="1.4" fill="none" />
<text x="47" y="855.6" font-size="14" fill="#6a6b6b" stroke="#6a6b6b" stroke-width="0.4" font-weight="normal" text-anchor="start" style="white-space:pre" >Movie</text>
<path d="M20,870.7180000000001 h7 l2,2.5 h12 v13 h-21 z M20,874.7180000000001 h21" stroke="#6a6b6b" stroke-width="1.4" fill="none" />
<text x="47" y="882.8" font-size="14" fill="#6a6b6b" stroke="#6a6b6b" stroke-width="0.4" font-weight="normal" text-anchor="start" style="white-space:pre" >Drum&amp;Bass</text>
<path d="M20,897.861 h7 l2,2.5 h12 v13 h-21 z M20,901.861 h21" stroke="#111" stroke-width="1.4" fill="none" />
<text x="47" y="909.9" font-size="14" fill="#111" stroke="#111" stroke-width="0.4" font-weight="normal" text-anchor="start" style="white-space:pre" >EboSuite example projects a</text>
<path d="M20,925.004 h7 l2,2.5 h12 v13 h-21 z M20,929.004 h21" stroke="#111" stroke-width="1.4" fill="none" />
<path d="M27,935.004 h6 M30,932.004 v6" stroke="#111" stroke-width="1.3" fill="none" />
<text x="47" y="937.0" font-size="14" fill="#111" stroke="#111" stroke-width="0.4" font-weight="normal" text-anchor="start" style="white-space:pre" >Add Folder...</text>
<line x1="46" y1="940" x2="130" y2="940" stroke="#111" stroke-width="1.2" />
<rect x="560" y="95" width="1447" height="520" fill="#464a49" rx="6" />
<rect x="2010" y="95" width="38" height="525" fill="#585b5a" />
<defs><pattern id="hatch" patternUnits="userSpaceOnUse" width="8" height="8" patternTransform="rotate(45)"><rect width="8" height="8" fill="#9a9a96"/><rect width="4.5" height="8" fill="#f0a030"/></pattern></defs>
<rect x="565" y="100" width="107" height="24" fill="#0d9fd9" />
<text x="571" y="117.3" font-size="13.2" fill="#111" font-weight="bold" text-anchor="start" style="white-space:pre" >1 Drum Kit</text>
<circle cx="658" cy="112" r="8" fill="none" stroke="#111" stroke-width="1.6" />
<path d="M653,109 L663,109 L658,116 Z" stroke="none" stroke-width="1" fill="#111" />
<rect x="565" y="126.2" width="107" height="24.4" fill="#0d9fd9" />
<rect x="588" y="126.2" width="1.5" height="24.4" fill="#00000038" />
<path d="M571,132.2 L582,138.4 L571,144.6 Z" stroke="none" stroke-width="1" fill="#0b3550" />
<text x="594" y="143.3" font-size="13.6" fill="#0b2f48" stroke="#0b2f48" stroke-width="0.4" font-weight="normal" text-anchor="start" style="white-space:pre" >Drum Kit 1</text>
<rect x="565" y="152" width="107" height="24.4" fill="#0d9fd9" />
<rect x="588" y="152" width="1.5" height="24.4" fill="#00000038" />
<path d="M571,158 L582,164.2 L571,170.4 Z" stroke="none" stroke-width="1" fill="#0b3550" />
<text x="594" y="169.1" font-size="13.6" fill="#0b2f48" stroke="#0b2f48" stroke-width="0.4" font-weight="normal" text-anchor="start" style="white-space:pre" >Drum Kit 1</text>
<rect x="565" y="177.8" width="107" height="24.4" fill="#0d9fd9" />
<rect x="588" y="177.8" width="1.5" height="24.4" fill="#00000038" />
<path d="M571,183.8 L582,190.0 L571,196.20000000000002 Z" stroke="none" stroke-width="1" fill="#0b3550" />
<text x="594" y="194.9" font-size="13.6" fill="#0b2f48" stroke="#0b2f48" stroke-width="0.4" font-weight="normal" text-anchor="start" style="white-space:pre" >Drum Kit 1</text>
<rect x="565" y="203.6" width="107" height="24.4" fill="#0d9fd9" />
<rect x="588" y="203.6" width="1.5" height="24.4" fill="#00000038" />
<path d="M571,209.6 L582,215.79999999999998 L571,222.0 Z" stroke="none" stroke-width="1" fill="#0b3550" />
<text x="594" y="220.7" font-size="13.6" fill="#0b2f48" stroke="#0b2f48" stroke-width="0.4" font-weight="normal" text-anchor="start" style="white-space:pre" >Drum Kit 1</text>
<rect x="565" y="229.4" width="107" height="24.4" fill="#0d9fd9" />
<rect x="588" y="229.4" width="1.5" height="24.4" fill="#00000038" />
<path d="M571,235.4 L582,241.6 L571,247.8 Z" stroke="none" stroke-width="1" fill="#0b3550" />
<text x="594" y="246.5" font-size="13.6" fill="#0b2f48" stroke="#0b2f48" stroke-width="0.4" font-weight="normal" text-anchor="start" style="white-space:pre" >Drum Kit 1</text>
<rect x="565" y="255.5" width="107" height="4" fill="#0d9fd9" />
<rect x="565" y="261" width="107" height="24" fill="#848787" />
<rect x="571" y="267" width="12" height="12" fill="#515554" />
<rect x="565" y="288" width="107" height="75" fill="#858888" />
<rect x="565" y="367" width="107" height="221" fill="#858888" />
<rect x="674" y="100" width="106" height="24" fill="#0d9fd9" />
<text x="680" y="117.3" font-size="13.2" fill="#111" font-weight="bold" text-anchor="start" style="white-space:pre" >2 Drum Kit</text>
<circle cx="766" cy="112" r="8" fill="none" stroke="#111" stroke-width="1.6" />
<path d="M761,109 L771,109 L766,116 Z" stroke="none" stroke-width="1" fill="#111" />
<rect x="674" y="126.2" width="106" height="24.4" fill="#9ea1a0" />
<rect x="680" y="132.2" width="12" height="12" fill="#515554" />
<rect x="674" y="152" width="106" height="24.4" fill="#0d9fd9" />
<rect x="697" y="152" width="1.5" height="24.4" fill="#00000038" />
<path d="M680,158 L691,164.2 L680,170.4 Z" stroke="none" stroke-width="1" fill="#0b3550" />
<text x="703" y="169.1" font-size="13.6" fill="#0b2f48" stroke="#0b2f48" stroke-width="0.4" font-weight="normal" text-anchor="start" style="white-space:pre" >Drum Kit 2</text>
<rect x="674" y="177.8" width="106" height="24.4" fill="#0d9fd9" />
<rect x="697" y="177.8" width="1.5" height="24.4" fill="#00000038" />
<path d="M680,183.8 L691,190.0 L680,196.20000000000002 Z" stroke="none" stroke-width="1" fill="#0b3550" />
<text x="703" y="194.9" font-size="13.6" fill="#0b2f48" stroke="#0b2f48" stroke-width="0.4" font-weight="normal" text-anchor="start" style="white-space:pre" >Drum Kit 2</text>
<rect x="674" y="203.6" width="106" height="24.4" fill="#0d9fd9" />
<rect x="697" y="203.6" width="1.5" height="24.4" fill="#00000038" />
<path d="M680,209.6 L691,215.79999999999998 L680,222.0 Z" stroke="none" stroke-width="1" fill="#0b3550" />
<text x="703" y="220.7" font-size="13.6" fill="#0b2f48" stroke="#0b2f48" stroke-width="0.4" font-weight="normal" text-anchor="start" style="white-space:pre" >Drum Kit 2</text>
<rect x="674" y="229.4" width="106" height="24.4" fill="#0d9fd9" />
<rect x="697" y="229.4" width="1.5" height="24.4" fill="#00000038" />
<path d="M680,235.4 L691,241.6 L680,247.8 Z" stroke="none" stroke-width="1" fill="#0b3550" />
<text x="703" y="246.5" font-size="13.6" fill="#0b2f48" stroke="#0b2f48" stroke-width="0.4" font-weight="normal" text-anchor="start" style="white-space:pre" >Drum Kit 2</text>
<rect x="674" y="255.5" width="106" height="4" fill="#0d9fd9" />
<rect x="674" y="261" width="106" height="24" fill="#848787" />
<rect x="680" y="267" width="12" height="12" fill="#515554" />
<rect x="674" y="288" width="106" height="75" fill="#858888" />
<rect x="674" y="367" width="106" height="221" fill="#858888" />
<rect x="783" y="100" width="133" height="24" fill="#e2386f" />
<text x="789" y="117.3" font-size="13.2" fill="#fff" font-weight="bold" text-anchor="start" style="white-space:pre" >3 Oxi Bass Rack</text>
<rect x="783" y="126.2" width="133" height="24.4" fill="#9ea1a0" />
<rect x="789" y="132.2" width="12" height="12" fill="#515554" />
<rect x="783" y="152" width="133" height="24.4" fill="#e2386f" />
<rect x="806" y="152" width="1.5" height="24.4" fill="#00000038" />
<path d="M789,158 L800,164.2 L789,170.4 Z" stroke="none" stroke-width="1" fill="#5a0c26" />
<text x="812" y="169.1" font-size="13.6" fill="#fbe3ea" stroke="#fbe3ea" stroke-width="0.4" font-weight="normal" text-anchor="start" style="white-space:pre" >Oxi Bass Rack</text>
<rect x="783" y="177.8" width="133" height="24.4" fill="#828585" />
<rect x="789" y="183.8" width="12" height="12" fill="#515554" />
<rect x="783" y="203.6" width="133" height="24.4" fill="#828585" />
<rect x="789" y="209.6" width="12" height="12" fill="#515554" />
<rect x="783" y="229.4" width="133" height="24.4" fill="#e2386f" />
<rect x="806" y="229.4" width="1.5" height="24.4" fill="#00000038" />
<path d="M789,235.4 L800,241.6 L789,247.8 Z" stroke="none" stroke-width="1" fill="#5a0c26" />
<text x="812" y="246.5" font-size="13.6" fill="#fbe3ea" stroke="#fbe3ea" stroke-width="0.4" font-weight="normal" text-anchor="start" style="white-space:pre" >Oxi Bass Rack</text>
<rect x="783" y="255.5" width="133" height="4" fill="#e2386f" />
<rect x="783" y="261" width="133" height="24" fill="#848787" />
<rect x="789" y="267" width="12" height="12" fill="#515554" />
<rect x="783" y="288" width="133" height="75" fill="#858888" />
<rect x="783" y="367" width="133" height="221" fill="#858888" />
<rect x="918" y="100" width="106" height="24" fill="#e2386f" />
<text x="924" y="117.3" font-size="13.2" fill="#fff" font-weight="bold" text-anchor="start" style="white-space:pre" >4 Three Op Ba</text>
<rect x="918" y="126.2" width="106" height="24.4" fill="#9ea1a0" />
<rect x="924" y="132.2" width="12" height="12" fill="#515554" />
<rect x="918" y="152" width="106" height="24.4" fill="#e2386f" />
<rect x="941" y="152" width="1.5" height="24.4" fill="#00000038" />
<path d="M924,158 L935,164.2 L924,170.4 Z" stroke="none" stroke-width="1" fill="#5a0c26" />
<text x="947" y="169.1" font-size="13.6" fill="#fbe3ea" stroke="#fbe3ea" stroke-width="0.4" font-weight="normal" text-anchor="start" style="white-space:pre" >Three Op Ba</text>
<rect x="918" y="177.8" width="106" height="24.4" fill="#828585" />
<rect x="924" y="183.8" width="12" height="12" fill="#515554" />
<rect x="918" y="203.6" width="106" height="24.4" fill="#828585" />
<rect x="924" y="209.6" width="12" height="12" fill="#515554" />
<rect x="918" y="229.4" width="106" height="24.4" fill="#e2386f" />
<rect x="941" y="229.4" width="1.5" height="24.4" fill="#00000038" />
<path d="M924,235.4 L935,241.6 L924,247.8 Z" stroke="none" stroke-width="1" fill="#5a0c26" />
<text x="947" y="246.5" font-size="13.6" fill="#fbe3ea" stroke="#fbe3ea" stroke-width="0.4" font-weight="normal" text-anchor="start" style="white-space:pre" >Three Op Ba</text>
<rect x="918" y="255.5" width="106" height="4" fill="#828585" />
<rect x="918" y="261" width="106" height="24" fill="#848787" />
<rect x="924" y="267" width="12" height="12" fill="#515554" />
<rect x="918" y="288" width="106" height="75" fill="#858888" />
<rect x="918" y="367" width="106" height="221" fill="#858888" />
<rect x="1027" y="100" width="105" height="24" fill="#e2386f" />
<text x="1033" y="117.3" font-size="13.2" fill="#fff" font-weight="bold" text-anchor="start" style="white-space:pre" >5 Deep in Dark</text>
<rect x="1027" y="126.2" width="105" height="24.4" fill="#9ea1a0" />
<rect x="1033" y="132.2" width="12" height="12" fill="#515554" />
<rect x="1027" y="152" width="105" height="24.4" fill="#828585" />
<rect x="1033" y="158" width="12" height="12" fill="#515554" />
<rect x="1027" y="177.8" width="105" height="24.4" fill="#e2386f" />
<rect x="1050" y="177.8" width="1.5" height="24.4" fill="#00000038" />
<path d="M1033,183.8 L1044,190.0 L1033,196.20000000000002 Z" stroke="none" stroke-width="1" fill="#5a0c26" />
<text x="1056" y="194.9" font-size="13.6" fill="#fbe3ea" stroke="#fbe3ea" stroke-width="0.4" font-weight="normal" text-anchor="start" style="white-space:pre" >Deep in Dark</text>
<rect x="1027" y="203.6" width="105" height="24.4" fill="#828585" />
<rect x="1033" y="209.6" width="12" height="12" fill="#515554" />
<rect x="1027" y="229.4" width="105" height="24.4" fill="#828585" />
<rect x="1033" y="235.4" width="12" height="12" fill="#515554" />
<rect x="1027" y="255.5" width="105" height="4" fill="#828585" />
<rect x="1027" y="261" width="105" height="24" fill="#848787" />
<rect x="1033" y="267" width="12" height="12" fill="#515554" />
<rect x="1027" y="288" width="105" height="75" fill="#858888" />
<rect x="1027" y="367" width="105" height="221" fill="#858888" />
<rect x="1135" y="100" width="106" height="24" fill="#e2386f" />
<text x="1141" y="117.3" font-size="13.2" fill="#fff" font-weight="bold" text-anchor="start" style="white-space:pre" >6 Crossover Sy</text>
<rect x="1135" y="126.2" width="106" height="24.4" fill="#a6c3cc" />
<rect x="1141" y="132.2" width="12" height="12" fill="#515554" />
<rect x="1135" y="152" width="106" height="24.4" fill="#8e9191" />
<rect x="1141" y="158" width="12" height="12" fill="#515554" />
<rect x="1135" y="177.8" width="106" height="24.4" fill="#8e9191" />
<rect x="1141" y="183.8" width="12" height="12" fill="#515554" />
<rect x="1135" y="203.6" width="106" height="24.4" fill="#8e9191" />
<rect x="1141" y="209.6" width="12" height="12" fill="#515554" />
<rect x="1135" y="229.4" width="106" height="24.4" fill="#e2386f" />
<rect x="1158" y="229.4" width="1.5" height="24.4" fill="#00000038" />
<path d="M1141,235.4 L1152,241.6 L1141,247.8 Z" stroke="none" stroke-width="1" fill="#5a0c26" />
<text x="1164" y="246.5" font-size="13.6" fill="#fbe3ea" stroke="#fbe3ea" stroke-width="0.4" font-weight="normal" text-anchor="start" style="white-space:pre" >Crossover Sy</text>
<rect x="1135" y="255.5" width="106" height="4" fill="#e2386f" />
<rect x="1135" y="261" width="106" height="24" fill="#8e9191" />
<rect x="1141" y="267" width="12" height="12" fill="#515554" />
<rect x="1135" y="288" width="106" height="75" fill="#9fa2a2" />
<rect x="1135" y="367" width="106" height="221" fill="#9ca0a0" />
<rect x="1244" y="100" width="105" height="24" fill="#e6cf2e" />
<text x="1250" y="117.3" font-size="13.2" fill="#111" font-weight="bold" text-anchor="start" style="white-space:pre" >7 Vocals Gr</text>
<circle cx="1335" cy="112" r="8" fill="none" stroke="#111" stroke-width="1.6" />
<line x1="1331" y1="109" x2="1339" y2="109" stroke="#111" stroke-width="1.3" />
<line x1="1331" y1="112" x2="1339" y2="112" stroke="#111" stroke-width="1.3" />
<line x1="1331" y1="115" x2="1339" y2="115" stroke="#111" stroke-width="1.3" />
<rect x="1244" y="126.2" width="105" height="24.4" fill="#9ea1a0" />
<path d="M1251,132.2 L1262,138.4 L1251,144.6 Z" stroke="none" stroke-width="1" fill="#5f6261" />
<rect x="1271" y="129.2" width="76" height="18" fill="url(#hatch)" />
<rect x="1244" y="152" width="105" height="24.4" fill="#828585" />
<path d="M1251,158 L1262,164.2 L1251,170.4 Z" stroke="none" stroke-width="1" fill="#5f6261" />
<rect x="1271" y="155" width="76" height="18" fill="url(#hatch)" />
<rect x="1244" y="177.8" width="105" height="24.4" fill="#828585" />
<path d="M1251,183.8 L1262,190.0 L1251,196.20000000000002 Z" stroke="none" stroke-width="1" fill="#5f6261" />
<rect x="1271" y="180.8" width="76" height="18" fill="url(#hatch)" />
<rect x="1244" y="203.6" width="105" height="24.4" fill="#828585" />
<rect x="1250" y="209.6" width="12" height="12" fill="#515554" />
<rect x="1244" y="229.4" width="105" height="24.4" fill="#828585" />
<rect x="1250" y="235.4" width="12" height="12" fill="#515554" />
<rect x="1244" y="255.5" width="105" height="4" fill="#828585" />
<rect x="1270" y="256" width="5" height="1.5" fill="#f0a030" />
<rect x="1278" y="256" width="5" height="1.5" fill="#f0a030" />
<rect x="1286" y="256" width="5" height="1.5" fill="#f0a030" />
<rect x="1294" y="256" width="5" height="1.5" fill="#f0a030" />
<rect x="1302" y="256" width="5" height="1.5" fill="#f0a030" />
<rect x="1310" y="256" width="5" height="1.5" fill="#f0a030" />
<rect x="1318" y="256" width="5" height="1.5" fill="#f0a030" />
<rect x="1326" y="256" width="5" height="1.5" fill="#f0a030" />
<rect x="1334" y="256" width="5" height="1.5" fill="#f0a030" />
<rect x="1342" y="256" width="5" height="1.5" fill="#f0a030" />
<rect x="1244" y="261" width="105" height="24" fill="#848787" />
<rect x="1250" y="267" width="12" height="12" fill="#515554" />
<rect x="1244" y="288" width="105" height="75" fill="#858888" />
<rect x="1244" y="367" width="105" height="221" fill="#858888" />
<rect x="1352" y="100" width="106" height="24" fill="#0fa398" />
<text x="1358" y="117.3" font-size="13.2" fill="#111" font-weight="bold" text-anchor="start" style="white-space:pre" >12 Wavetable</text>
<rect x="1352" y="126.2" width="106" height="24.4" fill="#0fa398" />
<rect x="1375" y="126.2" width="1.5" height="24.4" fill="#00000038" />
<path d="M1358,132.2 L1369,138.4 L1358,144.6 Z" stroke="none" stroke-width="1" fill="#0a3a35" />
<text x="1381" y="143.3" font-size="13.6" fill="#0b2f2a" stroke="#0b2f2a" stroke-width="0.4" font-weight="normal" text-anchor="start" style="white-space:pre" >Wavetable P</text>
<rect x="1352" y="152" width="106" height="24.4" fill="#828585" />
<rect x="1358" y="158" width="12" height="12" fill="#515554" />
<rect x="1352" y="177.8" width="106" height="24.4" fill="#828585" />
<rect x="1358" y="183.8" width="12" height="12" fill="#515554" />
<rect x="1352" y="203.6" width="106" height="24.4" fill="#828585" />
<rect x="1358" y="209.6" width="12" height="12" fill="#515554" />
<rect x="1352" y="229.4" width="106" height="24.4" fill="#828585" />
<rect x="1358" y="235.4" width="12" height="12" fill="#515554" />
<rect x="1352" y="255.5" width="106" height="4" fill="#828585" />
<rect x="1352" y="261" width="106" height="24" fill="#848787" />
<rect x="1358" y="267" width="12" height="12" fill="#515554" />
<rect x="1352" y="288" width="106" height="75" fill="#858888" />
<rect x="1352" y="367" width="106" height="221" fill="#858888" />
<rect x="1460" y="100" width="134" height="24" fill="#13a678" />
<text x="1466" y="117.3" font-size="13.2" fill="#1f3f30" font-weight="bold" text-anchor="start" style="white-space:pre" >13 S dechain Pac</text>
<rect x="1460" y="126.2" width="134" height="24.4" fill="#9ea1a0" />
<rect x="1466" y="132.2" width="12" height="12" fill="#515554" />
<rect x="1460" y="152" width="134" height="24.4" fill="#13a678" />
<rect x="1483" y="152" width="1.5" height="24.4" fill="#00000038" />
<path d="M1466,158 L1477,164.2 L1466,170.4 Z" stroke="none" stroke-width="1" fill="#0d4a35" />
<text x="1489" y="169.1" font-size="13.6" fill="#1a5a40" stroke="#1a5a40" stroke-width="0.4" font-weight="normal" text-anchor="start" style="white-space:pre" >S dechain Pad</text>
<rect x="1460" y="177.8" width="134" height="24.4" fill="#13a678" />
<rect x="1483" y="177.8" width="1.5" height="24.4" fill="#00000038" />
<path d="M1466,183.8 L1477,190.0 L1466,196.20000000000002 Z" stroke="none" stroke-width="1" fill="#0d4a35" />
<text x="1489" y="194.9" font-size="13.6" fill="#1a5a40" stroke="#1a5a40" stroke-width="0.4" font-weight="normal" text-anchor="start" style="white-space:pre" >S dechain Pad</text>
<rect x="1460" y="203.6" width="134" height="24.4" fill="#13a678" />
<rect x="1483" y="203.6" width="1.5" height="24.4" fill="#00000038" />
<path d="M1466,209.6 L1477,215.79999999999998 L1466,222.0 Z" stroke="none" stroke-width="1" fill="#0d4a35" />
<text x="1489" y="220.7" font-size="13.6" fill="#1a5a40" stroke="#1a5a40" stroke-width="0.4" font-weight="normal" text-anchor="start" style="white-space:pre" >S dechain Pad</text>
<rect x="1460" y="229.4" width="134" height="24.4" fill="#13a678" />
<rect x="1483" y="229.4" width="1.5" height="24.4" fill="#00000038" />
<path d="M1466,235.4 L1477,241.6 L1466,247.8 Z" stroke="none" stroke-width="1" fill="#0d4a35" />
<text x="1489" y="246.5" font-size="13.6" fill="#1a5a40" stroke="#1a5a40" stroke-width="0.4" font-weight="normal" text-anchor="start" style="white-space:pre" >S dechain Pad</text>
<rect x="1460" y="255.5" width="134" height="4" fill="#13a678" />
<rect x="1460" y="261" width="134" height="24" fill="#848787" />
<rect x="1466" y="267" width="12" height="12" fill="#515554" />
<rect x="1460" y="288" width="134" height="75" fill="#858888" />
<rect x="1460" y="367" width="134" height="221" fill="#858888" />
<rect x="1598" y="100" width="132" height="24" fill="#d8d9d5" />
<text x="1604" y="117.3" font-size="13.2" fill="#222" font-weight="bold" text-anchor="start" style="white-space:pre" >A Reverb | Compre</text>
<rect x="1598" y="126.2" width="132" height="24.4" fill="#9ea1a0" />
<rect x="1598" y="152" width="132" height="24.4" fill="#828585" />
<rect x="1598" y="177.8" width="132" height="24.4" fill="#828585" />
<rect x="1598" y="203.6" width="132" height="24.4" fill="#828585" />
<rect x="1598" y="229.4" width="132" height="24.4" fill="#828585" />
<rect x="1598" y="255.5" width="132" height="4" fill="#828585" />
<rect x="1598" y="261" width="132" height="24" fill="#848787" />
<rect x="1598" y="288" width="132" height="75" fill="#858888" />
<rect x="1598" y="367" width="132" height="221" fill="#858888" />
<rect x="1734" y="100" width="132" height="24" fill="#b2b3b1" />
<text x="1740" y="117.3" font-size="13.2" fill="#222" font-weight="bold" text-anchor="start" style="white-space:pre" >B Echo</text>
<rect x="1734" y="126.2" width="132" height="24.4" fill="#9ea1a0" />
<rect x="1734" y="152" width="132" height="24.4" fill="#828585" />
<rect x="1734" y="177.8" width="132" height="24.4" fill="#828585" />
<rect x="1734" y="203.6" width="132" height="24.4" fill="#828585" />
<rect x="1734" y="229.4" width="132" height="24.4" fill="#828585" />
<rect x="1734" y="255.5" width="132" height="4" fill="#828585" />
<rect x="1734" y="261" width="132" height="24" fill="#848787" />
<rect x="1734" y="288" width="132" height="75" fill="#858888" />
<rect x="1734" y="367" width="132" height="221" fill="#858888" />
<rect x="1869" y="100" width="132" height="24" fill="#393d3c" />
<text x="1875" y="117.3" font-size="13.2" fill="#eee" font-weight="bold" text-anchor="start" style="white-space:pre" >Master</text>
<rect x="1869" y="126.2" width="132" height="24.4" fill="#9ea1a0" />
<path d="M1875,132.2 L1886,138.4 L1875,144.6 Z" stroke="none" stroke-width="1" fill="#5d6060" />
<text x="1946" y="143.4" font-size="14" fill="#111" stroke="#111" stroke-width="0.4" font-weight="normal" text-anchor="middle" style="white-space:pre" >Scene 1</text>
<rect x="1869" y="152" width="132" height="24.4" fill="#828585" />
<path d="M1875,158 L1886,164.2 L1875,170.4 Z" stroke="none" stroke-width="1" fill="#5d6060" />
<text x="1946" y="169.2" font-size="14" fill="#111" stroke="#111" stroke-width="0.4" font-weight="normal" text-anchor="middle" style="white-space:pre" >Scene 2</text>
<rect x="1869" y="177.8" width="132" height="24.4" fill="#828585" />
<path d="M1875,183.8 L1886,190.0 L1875,196.20000000000002 Z" stroke="none" stroke-width="1" fill="#5d6060" />
<text x="1946" y="195.0" font-size="14" fill="#111" stroke="#111" stroke-width="0.4" font-weight="normal" text-anchor="middle" style="white-space:pre" >Scene 3</text>
<rect x="1869" y="203.6" width="132" height="24.4" fill="#828585" />
<path d="M1875,209.6 L1886,215.79999999999998 L1875,222.0 Z" stroke="none" stroke-width="1" fill="#5d6060" />
<text x="1946" y="220.8" font-size="14" fill="#111" stroke="#111" stroke-width="0.4" font-weight="normal" text-anchor="middle" style="white-space:pre" >Scene 4</text>
<rect x="1869" y="229.4" width="132" height="24.4" fill="#828585" />
<path d="M1875,235.4 L1886,241.6 L1875,247.8 Z" stroke="none" stroke-width="1" fill="#5d6060" />
<text x="1946" y="246.6" font-size="14" fill="#111" stroke="#111" stroke-width="0.4" font-weight="normal" text-anchor="middle" style="white-space:pre" >Scene 5</text>
<rect x="1869" y="255.5" width="132" height="4" fill="#828585" />
<rect x="1869" y="261" width="132" height="24" fill="#848787" />
<rect x="1875" y="267" width="12" height="12" fill="#515554" />
<rect x="1869" y="288" width="132" height="75" fill="#858888" />
<rect x="1869" y="367" width="132" height="221" fill="#858888" />
<rect x="590" y="265" width="14" height="17" fill="#0a4a90" />
<rect x="628" y="265" width="1.5" height="17" fill="#111" />
<rect x="636" y="265" width="33" height="17" fill="#0a4a90" />
<rect x="737" y="265" width="1.5" height="17" fill="#111" />
<rect x="743" y="265" width="33" height="17" fill="#0a4a90" />
<rect x="860" y="265" width="1.5" height="17" fill="#111" />
<rect x="868" y="265" width="44" height="17" fill="#6a1020" />
<rect x="982" y="265" width="1.5" height="17" fill="#111" />
<rect x="1090" y="265" width="1.5" height="17" fill="#111" />
<rect x="1197" y="265" width="1.5" height="17" fill="#111" />
<rect x="1376" y="265" width="46" height="17" fill="#0a3a33" />
<rect x="1415" y="265" width="2" height="17" fill="#111" />
<rect x="1419" y="265" width="3" height="17" fill="#157a70" />
<rect x="1538" y="265" width="1.5" height="17" fill="#111" />
<rect x="1546" y="265" width="45" height="17" fill="#11a050" />
<rect x="1970" y="264" width="28" height="19" fill="#a9aaa9" stroke="#444" stroke-width="1" />
<path d="M1975,268 L1985,273.5 L1975,279 Z" stroke="none" stroke-width="1" fill="#111" />
<line x1="1987" y1="270.5" x2="1994" y2="270.5" stroke="#111" stroke-width="1.3" />
<line x1="1987" y1="273.5" x2="1994" y2="273.5" stroke="#111" stroke-width="1.3" />
<line x1="1987" y1="276.5" x2="1994" y2="276.5" stroke="#111" stroke-width="1.3" />
<text x="640" y="307.0" font-size="14" fill="#111" stroke="#111" stroke-width="0.4" font-weight="normal" text-anchor="middle" style="white-space:pre" >Sends</text>
<path d="M584.54,325.52 A16.5,16.5 0 1 1 603.46,325.52" stroke="#1a1a1a" stroke-width="3" fill="none" stroke-linecap="butt"/>
<path d="M584.54,325.52 A16.5,16.5 0 0 1 583.26,299.47" stroke="#1ab6e6" stroke-width="3" fill="none" />
<line x1="594.00" y1="312.00" x2="583.26" y2="299.47" stroke="#1a1a1a" stroke-width="3" />
<path d="M630.54,350.52 A16.5,16.5 0 1 1 649.46,350.52" stroke="#1a1a1a" stroke-width="3" fill="none" stroke-linecap="butt"/>
<path d="M630.54,350.52 A16.5,16.5 0 1 1 652.55,347.72" stroke="#1ab6e6" stroke-width="3" fill="none" />
<line x1="640.00" y1="337.00" x2="652.55" y2="347.72" stroke="#1a1a1a" stroke-width="3" />
<text x="594" y="333.7" font-size="13" fill="#111" stroke="#111" stroke-width="0.4" font-weight="normal" text-anchor="middle" style="white-space:pre" >A</text>
<text x="640" y="358.7" font-size="13" fill="#111" stroke="#111" stroke-width="0.4" font-weight="normal" text-anchor="middle" style="white-space:pre" >B</text>
<text x="749" y="307.0" font-size="14" fill="#111" stroke="#111" stroke-width="0.4" font-weight="normal" text-anchor="middle" style="white-space:pre" >Sends</text>
<path d="M693.54,325.52 A16.5,16.5 0 1 1 712.46,325.52" stroke="#1a1a1a" stroke-width="3" fill="none" stroke-linecap="butt"/>
<path d="M693.54,325.52 A16.5,16.5 0 0 1 687.92,318.70" stroke="#1ab6e6" stroke-width="3" fill="none" />
<line x1="703.00" y1="312.00" x2="687.92" y2="318.70" stroke="#1a1a1a" stroke-width="3" />
<path d="M739.54,350.52 A16.5,16.5 0 1 1 758.46,350.52" stroke="#1a1a1a" stroke-width="3" fill="none" stroke-linecap="butt"/>
<line x1="749.00" y1="337.00" x2="739.54" y2="350.52" stroke="#1a1a1a" stroke-width="3" />
<text x="703" y="333.7" font-size="13" fill="#111" stroke="#111" stroke-width="0.4" font-weight="normal" text-anchor="middle" style="white-space:pre" >A</text>
<text x="749" y="358.7" font-size="13" fill="#111" stroke="#111" stroke-width="0.4" font-weight="normal" text-anchor="middle" style="white-space:pre" >B</text>
<text x="869" y="307.0" font-size="14" fill="#111" stroke="#111" stroke-width="0.4" font-weight="normal" text-anchor="middle" style="white-space:pre" >Sends</text>
<path d="M813.54,325.52 A16.5,16.5 0 1 1 832.46,325.52" stroke="#1a1a1a" stroke-width="3" fill="none" stroke-linecap="butt"/>
<line x1="823.00" y1="312.00" x2="813.54" y2="325.52" stroke="#1a1a1a" stroke-width="3" />
<path d="M859.54,350.52 A16.5,16.5 0 1 1 878.46,350.52" stroke="#1a1a1a" stroke-width="3" fill="none" stroke-linecap="butt"/>
<line x1="869.00" y1="337.00" x2="859.54" y2="350.52" stroke="#1a1a1a" stroke-width="3" />
<text x="823" y="333.7" font-size="13" fill="#111" stroke="#111" stroke-width="0.4" font-weight="normal" text-anchor="middle" style="white-space:pre" >A</text>
<text x="869" y="358.7" font-size="13" fill="#111" stroke="#111" stroke-width="0.4" font-weight="normal" text-anchor="middle" style="white-space:pre" >B</text>
<text x="993" y="307.0" font-size="14" fill="#111" stroke="#111" stroke-width="0.4" font-weight="normal" text-anchor="middle" style="white-space:pre" >Sends</text>
<path d="M937.54,325.52 A16.5,16.5 0 1 1 956.46,325.52" stroke="#1a1a1a" stroke-width="3" fill="none" stroke-linecap="butt"/>
<line x1="947.00" y1="312.00" x2="937.54" y2="325.52" stroke="#1a1a1a" stroke-width="3" />
<path d="M983.54,350.52 A16.5,16.5 0 1 1 1002.46,350.52" stroke="#1a1a1a" stroke-width="3" fill="none" stroke-linecap="butt"/>
<path d="M983.54,350.52 A16.5,16.5 0 0 1 976.59,335.30" stroke="#1ab6e6" stroke-width="3" fill="none" />
<line x1="993.00" y1="337.00" x2="976.59" y2="335.30" stroke="#1a1a1a" stroke-width="3" />
<text x="947" y="333.7" font-size="13" fill="#111" stroke="#111" stroke-width="0.4" font-weight="normal" text-anchor="middle" style="white-space:pre" >A</text>
<text x="993" y="358.7" font-size="13" fill="#111" stroke="#111" stroke-width="0.4" font-weight="normal" text-anchor="middle" style="white-space:pre" >B</text>
<text x="1102" y="307.0" font-size="14" fill="#111" stroke="#111" stroke-width="0.4" font-weight="normal" text-anchor="middle" style="white-space:pre" >Sends</text>
<path d="M1046.54,325.52 A16.5,16.5 0 1 1 1065.46,325.52" stroke="#1a1a1a" stroke-width="3" fill="none" stroke-linecap="butt"/>
<line x1="1056.00" y1="312.00" x2="1046.54" y2="325.52" stroke="#1a1a1a" stroke-width="3" />
<path d="M1092.54,350.52 A16.5,16.5 0 1 1 1111.46,350.52" stroke="#1a1a1a" stroke-width="3" fill="none" stroke-linecap="butt"/>
<line x1="1102.00" y1="337.00" x2="1092.54" y2="350.52" stroke="#1a1a1a" stroke-width="3" />
<text x="1056" y="333.7" font-size="13" fill="#111" stroke="#111" stroke-width="0.4" font-weight="normal" text-anchor="middle" style="white-space:pre" >A</text>
<text x="1102" y="358.7" font-size="13" fill="#111" stroke="#111" stroke-width="0.4" font-weight="normal" text-anchor="middle" style="white-space:pre" >B</text>
<text x="1210" y="307.0" font-size="14" fill="#111" stroke="#111" stroke-width="0.4" font-weight="normal" text-anchor="middle" style="white-space:pre" >Sends</text>
<path d="M1154.54,325.52 A16.5,16.5 0 1 1 1173.46,325.52" stroke="#1a1a1a" stroke-width="3" fill="none" stroke-linecap="butt"/>
<line x1="1164.00" y1="312.00" x2="1154.54" y2="325.52" stroke="#1a1a1a" stroke-width="3" />
<path d="M1200.54,350.52 A16.5,16.5 0 1 1 1219.46,350.52" stroke="#1a1a1a" stroke-width="3" fill="none" stroke-linecap="butt"/>
<line x1="1210.00" y1="337.00" x2="1200.54" y2="350.52" stroke="#1a1a1a" stroke-width="3" />
<text x="1164" y="333.7" font-size="13" fill="#111" stroke="#111" stroke-width="0.4" font-weight="normal" text-anchor="middle" style="white-space:pre" >A</text>
<text x="1210" y="358.7" font-size="13" fill="#111" stroke="#111" stroke-width="0.4" font-weight="normal" text-anchor="middle" style="white-space:pre" >B</text>
<text x="1319" y="307.0" font-size="14" fill="#111" stroke="#111" stroke-width="0.4" font-weight="normal" text-anchor="middle" style="white-space:pre" >Sends</text>
<path d="M1263.54,325.52 A16.5,16.5 0 1 1 1282.46,325.52" stroke="#1a1a1a" stroke-width="3" fill="none" stroke-linecap="butt"/>
<path d="M1263.54,325.52 A16.5,16.5 0 0 1 1267.28,296.52" stroke="#1ab6e6" stroke-width="3" fill="none" />
<line x1="1273.00" y1="312.00" x2="1267.28" y2="296.52" stroke="#1a1a1a" stroke-width="3" />
<path d="M1309.54,350.52 A16.5,16.5 0 1 1 1328.46,350.52" stroke="#1a1a1a" stroke-width="3" fill="none" stroke-linecap="butt"/>
<path d="M1309.54,350.52 A16.5,16.5 0 0 1 1304.35,329.42" stroke="#1ab6e6" stroke-width="3" fill="none" />
<line x1="1319.00" y1="337.00" x2="1304.35" y2="329.42" stroke="#1a1a1a" stroke-width="3" />
<text x="1273" y="333.7" font-size="13" fill="#111" stroke="#111" stroke-width="0.4" font-weight="normal" text-anchor="middle" style="white-space:pre" >A</text>
<text x="1319" y="358.7" font-size="13" fill="#111" stroke="#111" stroke-width="0.4" font-weight="normal" text-anchor="middle" style="white-space:pre" >B</text>
<text x="1427" y="307.0" font-size="14" fill="#111" stroke="#111" stroke-width="0.4" font-weight="normal" text-anchor="middle" style="white-space:pre" >Sends</text>
<path d="M1371.54,325.52 A16.5,16.5 0 1 1 1390.46,325.52" stroke="#1a1a1a" stroke-width="3" fill="none" stroke-linecap="butt"/>
<path d="M1371.54,325.52 A16.5,16.5 0 0 1 1367.47,302.56" stroke="#1ab6e6" stroke-width="3" fill="none" />
<line x1="1381.00" y1="312.00" x2="1367.47" y2="302.56" stroke="#1a1a1a" stroke-width="3" />
<path d="M1417.54,350.52 A16.5,16.5 0 1 1 1436.46,350.52" stroke="#1a1a1a" stroke-width="3" fill="none" stroke-linecap="butt"/>
<path d="M1417.54,350.52 A16.5,16.5 0 0 1 1427.00,320.50" stroke="#1ab6e6" stroke-width="3" fill="none" />
<line x1="1427.00" y1="337.00" x2="1427.00" y2="320.50" stroke="#1a1a1a" stroke-width="3" />
<text x="1381" y="333.7" font-size="13" fill="#111" stroke="#111" stroke-width="0.4" font-weight="normal" text-anchor="middle" style="white-space:pre" >A</text>
<text x="1427" y="358.7" font-size="13" fill="#111" stroke="#111" stroke-width="0.4" font-weight="normal" text-anchor="middle" style="white-space:pre" >B</text>
<text x="1546" y="307.0" font-size="14" fill="#111" stroke="#111" stroke-width="0.4" font-weight="normal" text-anchor="middle" style="white-space:pre" >Sends</text>
<path d="M1490.54,325.52 A16.5,16.5 0 1 1 1509.46,325.52" stroke="#1a1a1a" stroke-width="3" fill="none" stroke-linecap="butt"/>
<line x1="1500.00" y1="312.00" x2="1490.54" y2="325.52" stroke="#1a1a1a" stroke-width="3" />
<path d="M1536.54,350.52 A16.5,16.5 0 1 1 1555.46,350.52" stroke="#1a1a1a" stroke-width="3" fill="none" stroke-linecap="butt"/>
<line x1="1546.00" y1="337.00" x2="1536.54" y2="350.52" stroke="#1a1a1a" stroke-width="3" />
<text x="1500" y="333.7" font-size="13" fill="#111" stroke="#111" stroke-width="0.4" font-weight="normal" text-anchor="middle" style="white-space:pre" >A</text>
<text x="1546" y="358.7" font-size="13" fill="#111" stroke="#111" stroke-width="0.4" font-weight="normal" text-anchor="middle" style="white-space:pre" >B</text>
<text x="1684" y="307.0" font-size="14" fill="#111" stroke="#111" stroke-width="0.4" font-weight="normal" text-anchor="middle" style="white-space:pre" >Sends</text>
<path d="M1628.54,325.52 A16.5,16.5 0 1 1 1647.46,325.52" stroke="#6c6d6c" stroke-width="3" fill="none" stroke-linecap="butt"/>
<line x1="1638.00" y1="312.00" x2="1628.54" y2="325.52" stroke="#6c6d6c" stroke-width="3" />
<path d="M1674.54,350.52 A16.5,16.5 0 1 1 1693.46,350.52" stroke="#6c6d6c" stroke-width="3" fill="none" stroke-linecap="butt"/>
<line x1="1684.00" y1="337.00" x2="1674.54" y2="350.52" stroke="#6c6d6c" stroke-width="3" />
<text x="1638" y="333.7" font-size="13" fill="#111" stroke="#111" stroke-width="0.4" font-weight="normal" text-anchor="middle" style="white-space:pre" >A</text>
<text x="1684" y="358.7" font-size="13" fill="#111" stroke="#111" stroke-width="0.4" font-weight="normal" text-anchor="middle" style="white-space:pre" >B</text>
<text x="1820" y="307.0" font-size="14" fill="#111" stroke="#111" stroke-width="0.4" font-weight="normal" text-anchor="middle" style="white-space:pre" >Sends</text>
<path d="M1764.54,325.52 A16.5,16.5 0 1 1 1783.46,325.52" stroke="#6c6d6c" stroke-width="3" fill="none" stroke-linecap="butt"/>
<line x1="1774.00" y1="312.00" x2="1764.54" y2="325.52" stroke="#6c6d6c" stroke-width="3" />
<path d="M1810.54,350.52 A16.5,16.5 0 1 1 1829.46,350.52" stroke="#6c6d6c" stroke-width="3" fill="none" stroke-linecap="butt"/>
<line x1="1820.00" y1="337.00" x2="1810.54" y2="350.52" stroke="#6c6d6c" stroke-width="3" />
<text x="1774" y="333.7" font-size="13" fill="#111" stroke="#111" stroke-width="0.4" font-weight="normal" text-anchor="middle" style="white-space:pre" >A</text>
<text x="1820" y="358.7" font-size="13" fill="#111" stroke="#111" stroke-width="0.4" font-weight="normal" text-anchor="middle" style="white-space:pre" >B</text>
<text x="1956" y="307.0" font-size="14" fill="#111" stroke="#111" stroke-width="0.4" font-weight="normal" text-anchor="middle" style="white-space:pre" >Sends</text>
<line x1="1871" y1="313" x2="1893" y2="313" stroke="#b0b0b0" stroke-width="1" />
<rect x="1893" y="305" width="33" height="17" fill="#f0a830" stroke="#555" stroke-width="1" />
<text x="1909.5" y="318.2" font-size="13" fill="#111" stroke="#111" stroke-width="0.4" font-weight="normal" text-anchor="middle" style="white-space:pre" >Post</text>
<line x1="1871" y1="338" x2="1940" y2="338" stroke="#b0b0b0" stroke-width="1" />
<rect x="1940" y="329" width="33" height="17" fill="#f0a830" stroke="#555" stroke-width="1" />
<text x="1956.5" y="342.2" font-size="13" fill="#111" stroke="#111" stroke-width="0.4" font-weight="normal" text-anchor="middle" style="white-space:pre" >Post</text>
<circle cx="626" cy="320" r="4" fill="#f25545" stroke="#111" stroke-width="1.3" />
<rect x="573" y="374" width="50" height="17" fill="#c2c5c5" rx="8.5" stroke="#555" stroke-width="1" />
<text x="598" y="387.5" font-size="14" fill="#111" stroke="#111" stroke-width="0.4" font-weight="normal" text-anchor="middle" style="white-space:pre" >-12.6</text>
<rect x="573" y="400" width="50" height="18" fill="#c5c8c8" stroke="#555" stroke-width="1" />
<text x="598" y="414.0" font-size="14" fill="#111" stroke="#111" stroke-width="0.4" font-weight="normal" text-anchor="middle" style="white-space:pre" >-13.5</text>
<rect x="573" y="453" width="50" height="17" fill="#c5c8c8" stroke="#555" stroke-width="1" />
<rect x="573" y="476" width="50" height="17" fill="#c5c8c8" stroke="#555" stroke-width="1" />
<rect x="574" y="454" width="24" height="15" fill="#1ab6e6" />
<rect x="598" y="477" width="24" height="15" fill="#1ab6e6" />
<text x="598" y="466.5" font-size="14" fill="#111" stroke="#111" stroke-width="0.4" font-weight="normal" text-anchor="middle" style="white-space:pre" >50L</text>
<text x="598" y="489.5" font-size="14" fill="#111" stroke="#111" stroke-width="0.4" font-weight="normal" text-anchor="middle" style="white-space:pre" >50R</text>
<rect x="582" y="503" width="31" height="32" fill="#f0a830" stroke="#555" stroke-width="1" />
<text x="597.5" y="525.5" font-size="18" fill="#111" font-weight="bold" text-anchor="middle" style="white-space:pre" >1</text>
<rect x="582" y="542" width="31" height="17" fill="#a0a3a3" stroke="#555" stroke-width="1" />
<text x="597.5" y="555.2" font-size="13" fill="#111" font-weight="bold" text-anchor="middle" style="white-space:pre" >S</text>
<rect x="582" y="566" width="31" height="18" fill="#a0a3a3" stroke="#555" stroke-width="1" />
<circle cx="597.5" cy="575" r="5" fill="#111" />
<path d="M597.5,570 A5,5 0 0 1 602.5,575 L597.5,575 Z" stroke="none" stroke-width="1" fill="#ddd" />
<rect x="632" y="372" width="7.5" height="212" fill="#1e1f1f" />
<rect x="641" y="372" width="7.5" height="212" fill="#1e1f1f" />
<rect x="632" y="394.5" width="16.5" height="1.2" fill="#858888" />
<line x1="651" y1="373" x2="657" y2="373" stroke="#222" stroke-width="1.6" />
<line x1="651" y1="394" x2="657" y2="394" stroke="#222" stroke-width="1.6" />
<line x1="651" y1="415" x2="657" y2="415" stroke="#222" stroke-width="1.6" />
<line x1="651" y1="436" x2="657" y2="436" stroke="#222" stroke-width="1.6" />
<line x1="651" y1="457" x2="657" y2="457" stroke="#222" stroke-width="1.6" />
<line x1="651" y1="478" x2="657" y2="478" stroke="#222" stroke-width="1.6" />
<line x1="651" y1="499" x2="657" y2="499" stroke="#222" stroke-width="1.6" />
<line x1="651" y1="517" x2="657" y2="517" stroke="#222" stroke-width="1.6" />
<line x1="651" y1="533" x2="657" y2="533" stroke="#222" stroke-width="1.6" />
<line x1="651" y1="547.5" x2="657" y2="547.5" stroke="#222" stroke-width="1.6" />
<line x1="651" y1="560" x2="657" y2="560" stroke="#222" stroke-width="1.6" />
<line x1="651" y1="571" x2="657" y2="571" stroke="#222" stroke-width="1.6" />
<line x1="651" y1="579.5" x2="657" y2="579.5" stroke="#222" stroke-width="1.6" />
<path d="M663,434 L650,441 L663,448 Z" stroke="#4a4e4d" stroke-width="1.2" fill="#a9acac" />
<rect x="682" y="374" width="50" height="17" fill="#c2c5c5" rx="8.5" stroke="#555" stroke-width="1" />
<text x="707" y="387.5" font-size="14" fill="#111" stroke="#111" stroke-width="0.4" font-weight="normal" text-anchor="middle" style="white-space:pre" >-Inf</text>
<rect x="682" y="400" width="50" height="18" fill="#c5c8c8" stroke="#555" stroke-width="1" />
<text x="707" y="414.0" font-size="14" fill="#111" stroke="#111" stroke-width="0.4" font-weight="normal" text-anchor="middle" style="white-space:pre" >-6.0</text>
<circle cx="684" cy="404" r="4" fill="#f25545" stroke="#111" stroke-width="1.3" />
<rect x="682" y="453" width="50" height="17" fill="#c5c8c8" stroke="#555" stroke-width="1" />
<rect x="682" y="476" width="50" height="17" fill="#c5c8c8" stroke="#555" stroke-width="1" />
<rect x="683" y="454" width="24" height="15" fill="#1ab6e6" />
<rect x="707" y="477" width="24" height="15" fill="#1ab6e6" />
<text x="707" y="466.5" font-size="14" fill="#111" stroke="#111" stroke-width="0.4" font-weight="normal" text-anchor="middle" style="white-space:pre" >50L</text>
<text x="707" y="489.5" font-size="14" fill="#111" stroke="#111" stroke-width="0.4" font-weight="normal" text-anchor="middle" style="white-space:pre" >50R</text>
<rect x="691" y="503" width="31" height="32" fill="#f0a830" stroke="#555" stroke-width="1" />
<text x="706.5" y="525.5" font-size="18" fill="#111" font-weight="bold" text-anchor="middle" style="white-space:pre" >2</text>
<rect x="691" y="542" width="31" height="17" fill="#a0a3a3" stroke="#555" stroke-width="1" />
<text x="706.5" y="555.2" font-size="13" fill="#111" font-weight="bold" text-anchor="middle" style="white-space:pre" >S</text>
<rect x="691" y="566" width="31" height="18" fill="#a0a3a3" stroke="#555" stroke-width="1" />
<circle cx="706.5" cy="575" r="5" fill="#111" />
<path d="M706.5,570 A5,5 0 0 1 711.5,575 L706.5,575 Z" stroke="none" stroke-width="1" fill="#ddd" />
<rect x="741" y="372" width="7.5" height="212" fill="#1e1f1f" />
<rect x="750" y="372" width="7.5" height="212" fill="#1e1f1f" />
<rect x="741" y="394.5" width="16.5" height="1.2" fill="#858888" />
<line x1="760" y1="373" x2="766" y2="373" stroke="#222" stroke-width="1.6" />
<line x1="760" y1="394" x2="766" y2="394" stroke="#222" stroke-width="1.6" />
<line x1="760" y1="415" x2="766" y2="415" stroke="#222" stroke-width="1.6" />
<line x1="760" y1="436" x2="766" y2="436" stroke="#222" stroke-width="1.6" />
<line x1="760" y1="457" x2="766" y2="457" stroke="#222" stroke-width="1.6" />
<line x1="760" y1="478" x2="766" y2="478" stroke="#222" stroke-width="1.6" />
<line x1="760" y1="499" x2="766" y2="499" stroke="#222" stroke-width="1.6" />
<line x1="760" y1="517" x2="766" y2="517" stroke="#222" stroke-width="1.6" />
<line x1="760" y1="533" x2="766" y2="533" stroke="#222" stroke-width="1.6" />
<line x1="760" y1="547.5" x2="766" y2="547.5" stroke="#222" stroke-width="1.6" />
<line x1="760" y1="560" x2="766" y2="560" stroke="#222" stroke-width="1.6" />
<line x1="760" y1="571" x2="766" y2="571" stroke="#222" stroke-width="1.6" />
<line x1="760" y1="579.5" x2="766" y2="579.5" stroke="#222" stroke-width="1.6" />
<path d="M772,407 L759,414 L772,421 Z" stroke="#4a4e4d" stroke-width="1.2" fill="#8a8d8d" />
<circle cx="768" cy="414" r="4.2" fill="#f25545" stroke="#111" stroke-width="1.3" />
<rect x="799" y="374" width="50" height="17" fill="#c2c5c5" rx="8.5" stroke="#555" stroke-width="1" />
<text x="824" y="387.5" font-size="14" fill="#111" stroke="#111" stroke-width="0.4" font-weight="normal" text-anchor="middle" style="white-space:pre" >-Inf</text>
<rect x="799" y="400" width="50" height="18" fill="#c5c8c8" stroke="#555" stroke-width="1" />
<text x="824" y="414.0" font-size="14" fill="#111" stroke="#111" stroke-width="0.4" font-weight="normal" text-anchor="middle" style="white-space:pre" >-5.5</text>
<circle cx="801" cy="404" r="4" fill="#f25545" stroke="#111" stroke-width="1.3" />
<text x="790" y="465.7" font-size="13" fill="#111" stroke="#111" stroke-width="0.4" font-weight="normal" text-anchor="start" style="white-space:pre" >L</text>
<text x="790" y="489.2" font-size="13" fill="#111" stroke="#111" stroke-width="0.4" font-weight="normal" text-anchor="start" style="white-space:pre" >R</text>
<rect x="799" y="453" width="50" height="17" fill="#c5c8c8" stroke="#555" stroke-width="1" />
<rect x="799" y="476" width="50" height="17" fill="#c5c8c8" stroke="#555" stroke-width="1" />
<rect x="810" y="454" width="14" height="15" fill="#1ab6e6" />
<rect x="824" y="477" width="14" height="15" fill="#1ab6e6" />
<text x="824" y="466.5" font-size="14" fill="#111" stroke="#111" stroke-width="0.4" font-weight="normal" text-anchor="middle" style="white-space:pre" >28L</text>
<text x="824" y="489.5" font-size="14" fill="#111" stroke="#111" stroke-width="0.4" font-weight="normal" text-anchor="middle" style="white-space:pre" >28R</text>
<rect x="808" y="503" width="31" height="32" fill="#f0a830" stroke="#555" stroke-width="1" />
<text x="823.5" y="525.5" font-size="18" fill="#111" font-weight="bold" text-anchor="middle" style="white-space:pre" >3</text>
<rect x="808" y="542" width="31" height="17" fill="#a0a3a3" stroke="#555" stroke-width="1" />
<text x="823.5" y="555.2" font-size="13" fill="#111" font-weight="bold" text-anchor="middle" style="white-space:pre" >S</text>
<rect x="808" y="566" width="31" height="18" fill="#a0a3a3" stroke="#555" stroke-width="1" />
<circle cx="823.5" cy="575" r="5" fill="#111" />
<path d="M823.5,570 A5,5 0 0 1 828.5,575 L823.5,575 Z" stroke="none" stroke-width="1" fill="#ddd" />
<rect x="858" y="372" width="7.5" height="212" fill="#1e1f1f" />
<rect x="867" y="372" width="7.5" height="212" fill="#1e1f1f" />
<rect x="858" y="394.5" width="16.5" height="1.2" fill="#858888" />
<line x1="877" y1="373" x2="883" y2="373" stroke="#222" stroke-width="1.6" />
<line x1="877" y1="394" x2="883" y2="394" stroke="#222" stroke-width="1.6" />
<line x1="877" y1="415" x2="883" y2="415" stroke="#222" stroke-width="1.6" />
<line x1="877" y1="436" x2="883" y2="436" stroke="#222" stroke-width="1.6" />
<line x1="877" y1="457" x2="883" y2="457" stroke="#222" stroke-width="1.6" />
<line x1="877" y1="478" x2="883" y2="478" stroke="#222" stroke-width="1.6" />
<line x1="877" y1="499" x2="883" y2="499" stroke="#222" stroke-width="1.6" />
<line x1="877" y1="517" x2="883" y2="517" stroke="#222" stroke-width="1.6" />
<line x1="877" y1="533" x2="883" y2="533" stroke="#222" stroke-width="1.6" />
<line x1="877" y1="547.5" x2="883" y2="547.5" stroke="#222" stroke-width="1.6" />
<line x1="877" y1="560" x2="883" y2="560" stroke="#222" stroke-width="1.6" />
<line x1="877" y1="571" x2="883" y2="571" stroke="#222" stroke-width="1.6" />
<line x1="877" y1="579.5" x2="883" y2="579.5" stroke="#222" stroke-width="1.6" />
<text x="907" y="400.0" font-size="14" fill="#111" stroke="#111" stroke-width="0.4" font-weight="normal" text-anchor="end" style="white-space:pre" >0</text>
<text x="907" y="419.0" font-size="14" fill="#111" stroke="#111" stroke-width="0.4" font-weight="normal" text-anchor="end" style="white-space:pre" >6</text>
<text x="907" y="441.0" font-size="14" fill="#111" stroke="#111" stroke-width="0.4" font-weight="normal" text-anchor="end" style="white-space:pre" >12</text>
<text x="907" y="462.0" font-size="14" fill="#111" stroke="#111" stroke-width="0.4" font-weight="normal" text-anchor="end" style="white-space:pre" >18</text>
<text x="907" y="482.0" font-size="14" fill="#111" stroke="#111" stroke-width="0.4" font-weight="normal" text-anchor="end" style="white-space:pre" >24</text>
<text x="907" y="504.0" font-size="14" fill="#111" stroke="#111" stroke-width="0.4" font-weight="normal" text-anchor="end" style="white-space:pre" >30</text>
<text x="907" y="523.0" font-size="14" fill="#111" stroke="#111" stroke-width="0.4" font-weight="normal" text-anchor="end" style="white-space:pre" >36</text>
<text x="907" y="553.0" font-size="14" fill="#111" stroke="#111" stroke-width="0.4" font-weight="normal" text-anchor="end" style="white-space:pre" >48</text>
<text x="907" y="577.0" font-size="14" fill="#111" stroke="#111" stroke-width="0.4" font-weight="normal" text-anchor="end" style="white-space:pre" >60</text>
<path d="M889,407 L876,414 L889,421 Z" stroke="#4a4e4d" stroke-width="1.2" fill="#8a8d8d" />
<circle cx="885" cy="414" r="4.2" fill="#f25545" stroke="#111" stroke-width="1.3" />
<rect x="926" y="374" width="50" height="17" fill="#c2c5c5" rx="8.5" stroke="#555" stroke-width="1" />
<text x="951" y="387.5" font-size="14" fill="#111" stroke="#111" stroke-width="0.4" font-weight="normal" text-anchor="middle" style="white-space:pre" >-Inf</text>
<rect x="926" y="400" width="50" height="18" fill="#c5c8c8" stroke="#555" stroke-width="1" />
<text x="951" y="414.0" font-size="14" fill="#111" stroke="#111" stroke-width="0.4" font-weight="normal" text-anchor="middle" style="white-space:pre" >-16.0</text>
<circle cx="928" cy="404" r="4" fill="#f25545" stroke="#111" stroke-width="1.3" />
<path d="M940.73,493.84 A17.5,17.5 0 0 1 944.01,462.56" stroke="#1a1a1a" stroke-width="3.2" fill="none" />
<path d="M955.99,462.56 A17.5,17.5 0 0 1 959.27,493.84" stroke="#1a1a1a" stroke-width="3.2" fill="none" />
<line x1="950" y1="458" x2="950" y2="480" stroke="#1a1a1a" stroke-width="3.2" />
<path d="M944.5,451 L955.5,451 L950,458 Z" stroke="none" stroke-width="1" fill="#1a1a1a" />
<rect x="935" y="503" width="31" height="32" fill="#f0a830" stroke="#555" stroke-width="1" />
<text x="950.5" y="525.5" font-size="18" fill="#111" font-weight="bold" text-anchor="middle" style="white-space:pre" >4</text>
<rect x="935" y="542" width="31" height="17" fill="#a0a3a3" stroke="#555" stroke-width="1" />
<text x="950.5" y="555.2" font-size="13" fill="#111" font-weight="bold" text-anchor="middle" style="white-space:pre" >S</text>
<rect x="935" y="566" width="31" height="18" fill="#a0a3a3" stroke="#555" stroke-width="1" />
<circle cx="950.5" cy="575" r="5" fill="#111" />
<path d="M950.5,570 A5,5 0 0 1 955.5,575 L950.5,575 Z" stroke="none" stroke-width="1" fill="#ddd" />
<rect x="985" y="372" width="7.5" height="212" fill="#1e1f1f" />
<rect x="994" y="372" width="7.5" height="212" fill="#1e1f1f" />
<rect x="985" y="394.5" width="16.5" height="1.2" fill="#858888" />
<line x1="1004" y1="373" x2="1010" y2="373" stroke="#222" stroke-width="1.6" />
<line x1="1004" y1="394" x2="1010" y2="394" stroke="#222" stroke-width="1.6" />
<line x1="1004" y1="415" x2="1010" y2="415" stroke="#222" stroke-width="1.6" />
<line x1="1004" y1="436" x2="1010" y2="436" stroke="#222" stroke-width="1.6" />
<line x1="1004" y1="457" x2="1010" y2="457" stroke="#222" stroke-width="1.6" />
<line x1="1004" y1="478" x2="1010" y2="478" stroke="#222" stroke-width="1.6" />
<line x1="1004" y1="499" x2="1010" y2="499" stroke="#222" stroke-width="1.6" />
<line x1="1004" y1="517" x2="1010" y2="517" stroke="#222" stroke-width="1.6" />
<line x1="1004" y1="533" x2="1010" y2="533" stroke="#222" stroke-width="1.6" />
<line x1="1004" y1="547.5" x2="1010" y2="547.5" stroke="#222" stroke-width="1.6" />
<line x1="1004" y1="560" x2="1010" y2="560" stroke="#222" stroke-width="1.6" />
<line x1="1004" y1="571" x2="1010" y2="571" stroke="#222" stroke-width="1.6" />
<line x1="1004" y1="579.5" x2="1010" y2="579.5" stroke="#222" stroke-width="1.6" />
<path d="M1016,444 L1003,451 L1016,458 Z" stroke="#4a4e4d" stroke-width="1.2" fill="#8a8d8d" />
<circle cx="1012" cy="451" r="4.2" fill="#f25545" stroke="#111" stroke-width="1.3" />
<rect x="1035" y="374" width="50" height="17" fill="#c2c5c5" rx="8.5" stroke="#555" stroke-width="1" />
<text x="1060" y="387.5" font-size="14" fill="#111" stroke="#111" stroke-width="0.4" font-weight="normal" text-anchor="middle" style="white-space:pre" >-Inf</text>
<rect x="1035" y="400" width="50" height="18" fill="#c5c8c8" stroke="#555" stroke-width="1" />
<text x="1060" y="414.0" font-size="14" fill="#111" stroke="#111" stroke-width="0.4" font-weight="normal" text-anchor="middle" style="white-space:pre" >-14.9</text>
<path d="M1049.73,493.84 A17.5,17.5 0 0 1 1053.01,462.56" stroke="#1a1a1a" stroke-width="3.2" fill="none" />
<path d="M1064.99,462.56 A17.5,17.5 0 0 1 1068.27,493.84" stroke="#1a1a1a" stroke-width="3.2" fill="none" />
<line x1="1059" y1="458" x2="1059" y2="480" stroke="#1a1a1a" stroke-width="3.2" />
<path d="M1053.5,451 L1064.5,451 L1059,458 Z" stroke="none" stroke-width="1" fill="#1a1a1a" />
<rect x="1044" y="503" width="31" height="32" fill="#f0a830" stroke="#555" stroke-width="1" />
<text x="1059.5" y="525.5" font-size="18" fill="#111" font-weight="bold" text-anchor="middle" style="white-space:pre" >5</text>
<rect x="1044" y="542" width="31" height="17" fill="#a0a3a3" stroke="#555" stroke-width="1" />
<text x="1059.5" y="555.2" font-size="13" fill="#111" font-weight="bold" text-anchor="middle" style="white-space:pre" >S</text>
<rect x="1044" y="566" width="31" height="18" fill="#a0a3a3" stroke="#555" stroke-width="1" />
<circle cx="1059.5" cy="575" r="5" fill="#111" />
<path d="M1059.5,570 A5,5 0 0 1 1064.5,575 L1059.5,575 Z" stroke="none" stroke-width="1" fill="#ddd" />
<rect x="1094" y="372" width="7.5" height="212" fill="#1e1f1f" />
<rect x="1103" y="372" width="7.5" height="212" fill="#1e1f1f" />
<rect x="1094" y="394.5" width="16.5" height="1.2" fill="#858888" />
<line x1="1113" y1="373" x2="1119" y2="373" stroke="#222" stroke-width="1.6" />
<line x1="1113" y1="394" x2="1119" y2="394" stroke="#222" stroke-width="1.6" />
<line x1="1113" y1="415" x2="1119" y2="415" stroke="#222" stroke-width="1.6" />
<line x1="1113" y1="436" x2="1119" y2="436" stroke="#222" stroke-width="1.6" />
<line x1="1113" y1="457" x2="1119" y2="457" stroke="#222" stroke-width="1.6" />
<line x1="1113" y1="478" x2="1119" y2="478" stroke="#222" stroke-width="1.6" />
<line x1="1113" y1="499" x2="1119" y2="499" stroke="#222" stroke-width="1.6" />
<line x1="1113" y1="517" x2="1119" y2="517" stroke="#222" stroke-width="1.6" />
<line x1="1113" y1="533" x2="1119" y2="533" stroke="#222" stroke-width="1.6" />
<line x1="1113" y1="547.5" x2="1119" y2="547.5" stroke="#222" stroke-width="1.6" />
<line x1="1113" y1="560" x2="1119" y2="560" stroke="#222" stroke-width="1.6" />
<line x1="1113" y1="571" x2="1119" y2="571" stroke="#222" stroke-width="1.6" />
<line x1="1113" y1="579.5" x2="1119" y2="579.5" stroke="#222" stroke-width="1.6" />
<path d="M1125,439 L1112,446 L1125,453 Z" stroke="#4a4e4d" stroke-width="1.2" fill="#a9acac" />
<rect x="1143" y="374" width="50" height="17" fill="#c2c5c5" rx="8.5" stroke="#555" stroke-width="1" />
<text x="1168" y="387.5" font-size="14" fill="#111" stroke="#111" stroke-width="0.4" font-weight="normal" text-anchor="middle" style="white-space:pre" >-Inf</text>
<rect x="1143" y="400" width="50" height="18" fill="#c5c8c8" stroke="#555" stroke-width="1" />
<text x="1168" y="414.0" font-size="14" fill="#111" stroke="#111" stroke-width="0.4" font-weight="normal" text-anchor="middle" style="white-space:pre" >-6.0</text>
<circle cx="1145" cy="404" r="4" fill="#f25545" stroke="#111" stroke-width="1.3" />
<path d="M1157.73,493.84 A17.5,17.5 0 0 1 1161.01,462.56" stroke="#1a1a1a" stroke-width="3.2" fill="none" />
<path d="M1172.99,462.56 A17.5,17.5 0 0 1 1176.27,493.84" stroke="#1a1a1a" stroke-width="3.2" fill="none" />
<line x1="1167" y1="458" x2="1167" y2="480" stroke="#1a1a1a" stroke-width="3.2" />
<path d="M1161.5,451 L1172.5,451 L1167,458 Z" stroke="none" stroke-width="1" fill="#1a1a1a" />
<rect x="1152" y="503" width="31" height="32" fill="#f0a830" stroke="#555" stroke-width="1" />
<text x="1167.5" y="525.5" font-size="18" fill="#111" font-weight="bold" text-anchor="middle" style="white-space:pre" >6</text>
<rect x="1152" y="542" width="31" height="17" fill="#a0a3a3" stroke="#555" stroke-width="1" />
<text x="1167.5" y="555.2" font-size="13" fill="#111" font-weight="bold" text-anchor="middle" style="white-space:pre" >S</text>
<rect x="1152" y="566" width="31" height="18" fill="#a0a3a3" stroke="#555" stroke-width="1" />
<circle cx="1167.5" cy="575" r="5" fill="#111" />
<path d="M1167.5,570 A5,5 0 0 1 1172.5,575 L1167.5,575 Z" stroke="none" stroke-width="1" fill="#ddd" />
<rect x="1202" y="372" width="7.5" height="212" fill="#1e1f1f" />
<rect x="1211" y="372" width="7.5" height="212" fill="#1e1f1f" />
<rect x="1202" y="394.5" width="16.5" height="1.2" fill="#858888" />
<line x1="1221" y1="373" x2="1227" y2="373" stroke="#222" stroke-width="1.6" />
<line x1="1221" y1="394" x2="1227" y2="394" stroke="#222" stroke-width="1.6" />
<line x1="1221" y1="415" x2="1227" y2="415" stroke="#222" stroke-width="1.6" />
<line x1="1221" y1="436" x2="1227" y2="436" stroke="#222" stroke-width="1.6" />
<line x1="1221" y1="457" x2="1227" y2="457" stroke="#222" stroke-width="1.6" />
<line x1="1221" y1="478" x2="1227" y2="478" stroke="#222" stroke-width="1.6" />
<line x1="1221" y1="499" x2="1227" y2="499" stroke="#222" stroke-width="1.6" />
<line x1="1221" y1="517" x2="1227" y2="517" stroke="#222" stroke-width="1.6" />
<line x1="1221" y1="533" x2="1227" y2="533" stroke="#222" stroke-width="1.6" />
<line x1="1221" y1="547.5" x2="1227" y2="547.5" stroke="#222" stroke-width="1.6" />
<line x1="1221" y1="560" x2="1227" y2="560" stroke="#222" stroke-width="1.6" />
<line x1="1221" y1="571" x2="1227" y2="571" stroke="#222" stroke-width="1.6" />
<line x1="1221" y1="579.5" x2="1227" y2="579.5" stroke="#222" stroke-width="1.6" />
<path d="M1233,408 L1220,415 L1233,422 Z" stroke="#4a4e4d" stroke-width="1.2" fill="#8a8d8d" />
<circle cx="1229" cy="415" r="4.2" fill="#f25545" stroke="#111" stroke-width="1.3" />
<rect x="1252" y="374" width="50" height="17" fill="#c2c5c5" rx="8.5" stroke="#555" stroke-width="1" />
<text x="1277" y="387.5" font-size="14" fill="#111" stroke="#111" stroke-width="0.4" font-weight="normal" text-anchor="middle" style="white-space:pre" >-15.8</text>
<rect x="1252" y="400" width="50" height="18" fill="#c5c8c8" stroke="#555" stroke-width="1" />
<text x="1277" y="414.0" font-size="14" fill="#111" stroke="#111" stroke-width="0.4" font-weight="normal" text-anchor="middle" style="white-space:pre" >-7.2</text>
<circle cx="1254" cy="404" r="4" fill="#f25545" stroke="#111" stroke-width="1.3" />
<path d="M1266.73,493.84 A17.5,17.5 0 0 1 1270.01,462.56" stroke="#1a1a1a" stroke-width="3.2" fill="none" />
<path d="M1281.99,462.56 A17.5,17.5 0 0 1 1285.27,493.84" stroke="#1a1a1a" stroke-width="3.2" fill="none" />
<line x1="1276" y1="458" x2="1276" y2="480" stroke="#1a1a1a" stroke-width="3.2" />
<path d="M1270.5,451 L1281.5,451 L1276,458 Z" stroke="none" stroke-width="1" fill="#1a1a1a" />
<rect x="1261" y="503" width="31" height="32" fill="#f0a830" stroke="#555" stroke-width="1" />
<text x="1276.5" y="525.5" font-size="18" fill="#111" font-weight="bold" text-anchor="middle" style="white-space:pre" >7</text>
<rect x="1261" y="542" width="31" height="17" fill="#a0a3a3" stroke="#555" stroke-width="1" />
<text x="1276.5" y="555.2" font-size="13" fill="#111" font-weight="bold" text-anchor="middle" style="white-space:pre" >S</text>
<rect x="1311" y="372" width="7.5" height="212" fill="#1e1f1f" />
<rect x="1320" y="372" width="7.5" height="212" fill="#1e1f1f" />
<rect x="1311" y="394.5" width="16.5" height="1.2" fill="#858888" />
<rect x="1311" y="460" width="7.5" height="124" fill="#18b050" />
<rect x="1320" y="468" width="7.5" height="116" fill="#18b050" />
<rect x="1311" y="460" width="7.5" height="30" fill="#2f8f52" />
<rect x="1320" y="468" width="7.5" height="30" fill="#2f8f52" />
<rect x="1311" y="460" width="7.5" height="1.5" fill="#30d060" />
<rect x="1320" y="468" width="7.5" height="1.5" fill="#30d060" />
<line x1="1330" y1="373" x2="1336" y2="373" stroke="#222" stroke-width="1.6" />
<line x1="1330" y1="394" x2="1336" y2="394" stroke="#222" stroke-width="1.6" />
<line x1="1330" y1="415" x2="1336" y2="415" stroke="#222" stroke-width="1.6" />
<line x1="1330" y1="436" x2="1336" y2="436" stroke="#222" stroke-width="1.6" />
<line x1="1330" y1="457" x2="1336" y2="457" stroke="#222" stroke-width="1.6" />
<line x1="1330" y1="478" x2="1336" y2="478" stroke="#222" stroke-width="1.6" />
<line x1="1330" y1="499" x2="1336" y2="499" stroke="#222" stroke-width="1.6" />
<line x1="1330" y1="517" x2="1336" y2="517" stroke="#222" stroke-width="1.6" />
<line x1="1330" y1="533" x2="1336" y2="533" stroke="#222" stroke-width="1.6" />
<line x1="1330" y1="547.5" x2="1336" y2="547.5" stroke="#222" stroke-width="1.6" />
<line x1="1330" y1="560" x2="1336" y2="560" stroke="#222" stroke-width="1.6" />
<line x1="1330" y1="571" x2="1336" y2="571" stroke="#222" stroke-width="1.6" />
<line x1="1330" y1="579.5" x2="1336" y2="579.5" stroke="#222" stroke-width="1.6" />
<path d="M1342,413 L1329,420 L1342,427 Z" stroke="#4a4e4d" stroke-width="1.2" fill="#8a8d8d" />
<circle cx="1338" cy="420" r="4.2" fill="#f25545" stroke="#111" stroke-width="1.3" />
<rect x="1360" y="374" width="50" height="17" fill="#c2c5c5" rx="8.5" stroke="#555" stroke-width="1" />
<text x="1385" y="387.5" font-size="14" fill="#111" stroke="#111" stroke-width="0.4" font-weight="normal" text-anchor="middle" style="white-space:pre" >-10.1</text>
<rect x="1360" y="400" width="50" height="18" fill="#c5c8c8" stroke="#555" stroke-width="1" />
<text x="1385" y="414.0" font-size="14" fill="#111" stroke="#111" stroke-width="0.4" font-weight="normal" text-anchor="middle" style="white-space:pre" >-8.0</text>
<path d="M1374.73,493.84 A17.5,17.5 0 0 1 1378.01,462.56" stroke="#1a1a1a" stroke-width="3.2" fill="none" />
<path d="M1389.99,462.56 A17.5,17.5 0 0 1 1393.27,493.84" stroke="#1a1a1a" stroke-width="3.2" fill="none" />
<line x1="1384" y1="458" x2="1384" y2="480" stroke="#1a1a1a" stroke-width="3.2" />
<path d="M1378.5,451 L1389.5,451 L1384,458 Z" stroke="none" stroke-width="1" fill="#1a1a1a" />
<rect x="1369" y="503" width="31" height="32" fill="#f0a830" stroke="#555" stroke-width="1" />
<text x="1384.5" y="525.5" font-size="18" fill="#111" font-weight="bold" text-anchor="middle" style="white-space:pre" >12</text>
<rect x="1369" y="542" width="31" height="17" fill="#a0a3a3" stroke="#555" stroke-width="1" />
<text x="1384.5" y="555.2" font-size="13" fill="#111" font-weight="bold" text-anchor="middle" style="white-space:pre" >S</text>
<rect x="1369" y="566" width="31" height="18" fill="#a0a3a3" stroke="#555" stroke-width="1" />
<circle cx="1384.5" cy="575" r="4.5" fill="#555" />
<rect x="1419" y="372" width="7.5" height="212" fill="#1e1f1f" />
<rect x="1428" y="372" width="7.5" height="212" fill="#1e1f1f" />
<rect x="1419" y="394.5" width="16.5" height="1.2" fill="#858888" />
<rect x="1419" y="444" width="7.5" height="140" fill="#18b050" />
<rect x="1428" y="444" width="7.5" height="140" fill="#18b050" />
<rect x="1419" y="444" width="7.5" height="30" fill="#2f8f52" />
<rect x="1428" y="444" width="7.5" height="30" fill="#2f8f52" />
<rect x="1419" y="430" width="7.5" height="1.5" fill="#30d060" />
<rect x="1428" y="430" width="7.5" height="1.5" fill="#30d060" />
<line x1="1438" y1="373" x2="1444" y2="373" stroke="#222" stroke-width="1.6" />
<line x1="1438" y1="394" x2="1444" y2="394" stroke="#222" stroke-width="1.6" />
<line x1="1438" y1="415" x2="1444" y2="415" stroke="#222" stroke-width="1.6" />
<line x1="1438" y1="436" x2="1444" y2="436" stroke="#222" stroke-width="1.6" />
<line x1="1438" y1="457" x2="1444" y2="457" stroke="#222" stroke-width="1.6" />
<line x1="1438" y1="478" x2="1444" y2="478" stroke="#222" stroke-width="1.6" />
<line x1="1438" y1="499" x2="1444" y2="499" stroke="#222" stroke-width="1.6" />
<line x1="1438" y1="517" x2="1444" y2="517" stroke="#222" stroke-width="1.6" />
<line x1="1438" y1="533" x2="1444" y2="533" stroke="#222" stroke-width="1.6" />
<line x1="1438" y1="547.5" x2="1444" y2="547.5" stroke="#222" stroke-width="1.6" />
<line x1="1438" y1="560" x2="1444" y2="560" stroke="#222" stroke-width="1.6" />
<line x1="1438" y1="571" x2="1444" y2="571" stroke="#222" stroke-width="1.6" />
<line x1="1438" y1="579.5" x2="1444" y2="579.5" stroke="#222" stroke-width="1.6" />
<path d="M1450,414 L1437,421 L1450,428 Z" stroke="#4a4e4d" stroke-width="1.2" fill="#a9acac" />
<rect x="1476" y="374" width="50" height="17" fill="#c2c5c5" rx="8.5" stroke="#555" stroke-width="1" />
<text x="1501" y="387.5" font-size="14" fill="#111" stroke="#111" stroke-width="0.4" font-weight="normal" text-anchor="middle" style="white-space:pre" >-Inf</text>
<rect x="1476" y="400" width="50" height="18" fill="#c5c8c8" stroke="#555" stroke-width="1" />
<text x="1501" y="414.0" font-size="14" fill="#111" stroke="#111" stroke-width="0.4" font-weight="normal" text-anchor="middle" style="white-space:pre" >-11.6</text>
<circle cx="1478" cy="404" r="4" fill="#f25545" stroke="#111" stroke-width="1.3" />
<path d="M1490.73,493.84 A17.5,17.5 0 0 1 1494.01,462.56" stroke="#1a1a1a" stroke-width="3.2" fill="none" />
<path d="M1505.99,462.56 A17.5,17.5 0 0 1 1509.27,493.84" stroke="#1a1a1a" stroke-width="3.2" fill="none" />
<line x1="1500" y1="458" x2="1500" y2="480" stroke="#1a1a1a" stroke-width="3.2" />
<path d="M1494.5,451 L1505.5,451 L1500,458 Z" stroke="none" stroke-width="1" fill="#1a1a1a" />
<rect x="1485" y="503" width="31" height="32" fill="#f0a830" stroke="#555" stroke-width="1" />
<text x="1500.5" y="525.5" font-size="18" fill="#111" font-weight="bold" text-anchor="middle" style="white-space:pre" >13</text>
<rect x="1485" y="542" width="31" height="17" fill="#a0a3a3" stroke="#555" stroke-width="1" />
<text x="1500.5" y="555.2" font-size="13" fill="#111" font-weight="bold" text-anchor="middle" style="white-space:pre" >S</text>
<rect x="1485" y="566" width="31" height="18" fill="#a0a3a3" stroke="#555" stroke-width="1" />
<circle cx="1500.5" cy="575" r="5" fill="#111" />
<path d="M1500.5,570 A5,5 0 0 1 1505.5,575 L1500.5,575 Z" stroke="none" stroke-width="1" fill="#ddd" />
<rect x="1535" y="372" width="7.5" height="212" fill="#1e1f1f" />
<rect x="1544" y="372" width="7.5" height="212" fill="#1e1f1f" />
<rect x="1535" y="394.5" width="16.5" height="1.2" fill="#858888" />
<line x1="1554" y1="373" x2="1560" y2="373" stroke="#222" stroke-width="1.6" />
<line x1="1554" y1="394" x2="1560" y2="394" stroke="#222" stroke-width="1.6" />
<line x1="1554" y1="415" x2="1560" y2="415" stroke="#222" stroke-width="1.6" />
<line x1="1554" y1="436" x2="1560" y2="436" stroke="#222" stroke-width="1.6" />
<line x1="1554" y1="457" x2="1560" y2="457" stroke="#222" stroke-width="1.6" />
<line x1="1554" y1="478" x2="1560" y2="478" stroke="#222" stroke-width="1.6" />
<line x1="1554" y1="499" x2="1560" y2="499" stroke="#222" stroke-width="1.6" />
<line x1="1554" y1="517" x2="1560" y2="517" stroke="#222" stroke-width="1.6" />
<line x1="1554" y1="533" x2="1560" y2="533" stroke="#222" stroke-width="1.6" />
<line x1="1554" y1="547.5" x2="1560" y2="547.5" stroke="#222" stroke-width="1.6" />
<line x1="1554" y1="560" x2="1560" y2="560" stroke="#222" stroke-width="1.6" />
<line x1="1554" y1="571" x2="1560" y2="571" stroke="#222" stroke-width="1.6" />
<line x1="1554" y1="579.5" x2="1560" y2="579.5" stroke="#222" stroke-width="1.6" />
<text x="1584" y="400.0" font-size="14" fill="#111" stroke="#111" stroke-width="0.4" font-weight="normal" text-anchor="end" style="white-space:pre" >0</text>
<text x="1584" y="419.0" font-size="14" fill="#111" stroke="#111" stroke-width="0.4" font-weight="normal" text-anchor="end" style="white-space:pre" >6</text>
<text x="1584" y="441.0" font-size="14" fill="#111" stroke="#111" stroke-width="0.4" font-weight="normal" text-anchor="end" style="white-space:pre" >12</text>
<text x="1584" y="462.0" font-size="14" fill="#111" stroke="#111" stroke-width="0.4" font-weight="normal" text-anchor="end" style="white-space:pre" >18</text>
<text x="1584" y="482.0" font-size="14" fill="#111" stroke="#111" stroke-width="0.4" font-weight="normal" text-anchor="end" style="white-space:pre" >24</text>
<text x="1584" y="504.0" font-size="14" fill="#111" stroke="#111" stroke-width="0.4" font-weight="normal" text-anchor="end" style="white-space:pre" >30</text>
<text x="1584" y="523.0" font-size="14" fill="#111" stroke="#111" stroke-width="0.4" font-weight="normal" text-anchor="end" style="white-space:pre" >36</text>
<text x="1584" y="553.0" font-size="14" fill="#111" stroke="#111" stroke-width="0.4" font-weight="normal" text-anchor="end" style="white-space:pre" >48</text>
<text x="1584" y="577.0" font-size="14" fill="#111" stroke="#111" stroke-width="0.4" font-weight="normal" text-anchor="end" style="white-space:pre" >60</text>
<path d="M1566,428 L1553,435 L1566,442 Z" stroke="#4a4e4d" stroke-width="1.2" fill="#8a8d8d" />
<circle cx="1562" cy="435" r="4.2" fill="#f25545" stroke="#111" stroke-width="1.3" />
<rect x="1614" y="374" width="50" height="17" fill="#c2c5c5" rx="8.5" stroke="#555" stroke-width="1" />
<text x="1639" y="387.5" font-size="14" fill="#111" stroke="#111" stroke-width="0.4" font-weight="normal" text-anchor="middle" style="white-space:pre" >-40.9</text>
<rect x="1614" y="400" width="50" height="18" fill="#c5c8c8" stroke="#555" stroke-width="1" />
<text x="1639" y="414.0" font-size="14" fill="#111" stroke="#111" stroke-width="0.4" font-weight="normal" text-anchor="middle" style="white-space:pre" >0</text>
<path d="M1628.73,493.84 A17.5,17.5 0 0 1 1632.01,462.56" stroke="#1a1a1a" stroke-width="3.2" fill="none" />
<path d="M1643.99,462.56 A17.5,17.5 0 0 1 1647.27,493.84" stroke="#1a1a1a" stroke-width="3.2" fill="none" />
<line x1="1638" y1="458" x2="1638" y2="480" stroke="#1a1a1a" stroke-width="3.2" />
<path d="M1632.5,451 L1643.5,451 L1638,458 Z" stroke="none" stroke-width="1" fill="#1a1a1a" />
<rect x="1623" y="503" width="31" height="32" fill="#f0a830" stroke="#555" stroke-width="1" />
<text x="1638.5" y="525.5" font-size="18" fill="#111" font-weight="bold" text-anchor="middle" style="white-space:pre" >A</text>
<rect x="1623" y="542" width="31" height="17" fill="#a0a3a3" stroke="#555" stroke-width="1" />
<text x="1638.5" y="555.2" font-size="13" fill="#111" font-weight="bold" text-anchor="middle" style="white-space:pre" >S</text>
<rect x="1673" y="372" width="7.5" height="212" fill="#1e1f1f" />
<rect x="1682" y="372" width="7.5" height="212" fill="#1e1f1f" />
<rect x="1673" y="394.5" width="16.5" height="1.2" fill="#858888" />
<rect x="1673" y="548" width="7.5" height="36" fill="#18b050" />
<rect x="1682" y="544" width="7.5" height="40" fill="#18b050" />
<rect x="1673" y="548" width="7.5" height="1.5" fill="#30d060" />
<rect x="1682" y="544" width="7.5" height="1.5" fill="#30d060" />
<line x1="1692" y1="373" x2="1698" y2="373" stroke="#222" stroke-width="1.6" />
<line x1="1692" y1="394" x2="1698" y2="394" stroke="#222" stroke-width="1.6" />
<line x1="1692" y1="415" x2="1698" y2="415" stroke="#222" stroke-width="1.6" />
<line x1="1692" y1="436" x2="1698" y2="436" stroke="#222" stroke-width="1.6" />
<line x1="1692" y1="457" x2="1698" y2="457" stroke="#222" stroke-width="1.6" />
<line x1="1692" y1="478" x2="1698" y2="478" stroke="#222" stroke-width="1.6" />
<line x1="1692" y1="499" x2="1698" y2="499" stroke="#222" stroke-width="1.6" />
<line x1="1692" y1="517" x2="1698" y2="517" stroke="#222" stroke-width="1.6" />
<line x1="1692" y1="533" x2="1698" y2="533" stroke="#222" stroke-width="1.6" />
<line x1="1692" y1="547.5" x2="1698" y2="547.5" stroke="#222" stroke-width="1.6" />
<line x1="1692" y1="560" x2="1698" y2="560" stroke="#222" stroke-width="1.6" />
<line x1="1692" y1="571" x2="1698" y2="571" stroke="#222" stroke-width="1.6" />
<line x1="1692" y1="579.5" x2="1698" y2="579.5" stroke="#222" stroke-width="1.6" />
<text x="1722" y="400.0" font-size="14" fill="#111" stroke="#111" stroke-width="0.4" font-weight="normal" text-anchor="end" style="white-space:pre" >0</text>
<text x="1722" y="419.0" font-size="14" fill="#111" stroke="#111" stroke-width="0.4" font-weight="normal" text-anchor="end" style="white-space:pre" >6</text>
<text x="1722" y="441.0" font-size="14" fill="#111" stroke="#111" stroke-width="0.4" font-weight="normal" text-anchor="end" style="white-space:pre" >12</text>
<text x="1722" y="462.0" font-size="14" fill="#111" stroke="#111" stroke-width="0.4" font-weight="normal" text-anchor="end" style="white-space:pre" >18</text>
<text x="1722" y="482.0" font-size="14" fill="#111" stroke="#111" stroke-width="0.4" font-weight="normal" text-anchor="end" style="white-space:pre" >24</text>
<text x="1722" y="504.0" font-size="14" fill="#111" stroke="#111" stroke-width="0.4" font-weight="normal" text-anchor="end" style="white-space:pre" >30</text>
<text x="1722" y="523.0" font-size="14" fill="#111" stroke="#111" stroke-width="0.4" font-weight="normal" text-anchor="end" style="white-space:pre" >36</text>
<text x="1722" y="553.0" font-size="14" fill="#111" stroke="#111" stroke-width="0.4" font-weight="normal" text-anchor="end" style="white-space:pre" >48</text>
<text x="1722" y="577.0" font-size="14" fill="#111" stroke="#111" stroke-width="0.4" font-weight="normal" text-anchor="end" style="white-space:pre" >60</text>
<path d="M1704,389 L1691,396 L1704,403 Z" stroke="#4a4e4d" stroke-width="1.2" fill="#a9acac" />
<rect x="1750" y="374" width="50" height="17" fill="#c2c5c5" rx="8.5" stroke="#555" stroke-width="1" />
<text x="1775" y="387.5" font-size="14" fill="#111" stroke="#111" stroke-width="0.4" font-weight="normal" text-anchor="middle" style="white-space:pre" >-6.33</text>
<rect x="1750" y="400" width="50" height="18" fill="#c5c8c8" stroke="#555" stroke-width="1" />
<text x="1775" y="414.0" font-size="14" fill="#111" stroke="#111" stroke-width="0.4" font-weight="normal" text-anchor="middle" style="white-space:pre" >0</text>
<path d="M1764.73,493.84 A17.5,17.5 0 0 1 1768.01,462.56" stroke="#1a1a1a" stroke-width="3.2" fill="none" />
<path d="M1779.99,462.56 A17.5,17.5 0 0 1 1783.27,493.84" stroke="#1a1a1a" stroke-width="3.2" fill="none" />
<line x1="1774" y1="458" x2="1774" y2="480" stroke="#1a1a1a" stroke-width="3.2" />
<path d="M1768.5,451 L1779.5,451 L1774,458 Z" stroke="none" stroke-width="1" fill="#1a1a1a" />
<rect x="1759" y="503" width="31" height="32" fill="#f0a830" stroke="#555" stroke-width="1" />
<text x="1774.5" y="525.5" font-size="18" fill="#111" font-weight="bold" text-anchor="middle" style="white-space:pre" >B</text>
<rect x="1759" y="542" width="31" height="17" fill="#a0a3a3" stroke="#555" stroke-width="1" />
<text x="1774.5" y="555.2" font-size="13" fill="#111" font-weight="bold" text-anchor="middle" style="white-space:pre" >S</text>
<rect x="1809" y="372" width="7.5" height="212" fill="#1e1f1f" />
<rect x="1818" y="372" width="7.5" height="212" fill="#1e1f1f" />
<rect x="1809" y="394.5" width="16.5" height="1.2" fill="#858888" />
<rect x="1809" y="433" width="7.5" height="151" fill="#18b050" />
<rect x="1818" y="445" width="7.5" height="139" fill="#18b050" />
<rect x="1809" y="433" width="7.5" height="30" fill="#2f8f52" />
<rect x="1818" y="445" width="7.5" height="30" fill="#2f8f52" />
<rect x="1809" y="416" width="7.5" height="1.5" fill="#30d060" />
<rect x="1818" y="428" width="7.5" height="1.5" fill="#30d060" />
<line x1="1828" y1="373" x2="1834" y2="373" stroke="#222" stroke-width="1.6" />
<line x1="1828" y1="394" x2="1834" y2="394" stroke="#222" stroke-width="1.6" />
<line x1="1828" y1="415" x2="1834" y2="415" stroke="#222" stroke-width="1.6" />
<line x1="1828" y1="436" x2="1834" y2="436" stroke="#222" stroke-width="1.6" />
<line x1="1828" y1="457" x2="1834" y2="457" stroke="#222" stroke-width="1.6" />
<line x1="1828" y1="478" x2="1834" y2="478" stroke="#222" stroke-width="1.6" />
<line x1="1828" y1="499" x2="1834" y2="499" stroke="#222" stroke-width="1.6" />
<line x1="1828" y1="517" x2="1834" y2="517" stroke="#222" stroke-width="1.6" />
<line x1="1828" y1="533" x2="1834" y2="533" stroke="#222" stroke-width="1.6" />
<line x1="1828" y1="547.5" x2="1834" y2="547.5" stroke="#222" stroke-width="1.6" />
<line x1="1828" y1="560" x2="1834" y2="560" stroke="#222" stroke-width="1.6" />
<line x1="1828" y1="571" x2="1834" y2="571" stroke="#222" stroke-width="1.6" />
<line x1="1828" y1="579.5" x2="1834" y2="579.5" stroke="#222" stroke-width="1.6" />
<text x="1858" y="400.0" font-size="14" fill="#111" stroke="#111" stroke-width="0.4" font-weight="normal" text-anchor="end" style="white-space:pre" >0</text>
<text x="1858" y="419.0" font-size="14" fill="#111" stroke="#111" stroke-width="0.4" font-weight="normal" text-anchor="end" style="white-space:pre" >6</text>
<text x="1858" y="441.0" font-size="14" fill="#111" stroke="#111" stroke-width="0.4" font-weight="normal" text-anchor="end" style="white-space:pre" >12</text>
<text x="1858" y="462.0" font-size="14" fill="#111" stroke="#111" stroke-width="0.4" font-weight="normal" text-anchor="end" style="white-space:pre" >18</text>
<text x="1858" y="482.0" font-size="14" fill="#111" stroke="#111" stroke-width="0.4" font-weight="normal" text-anchor="end" style="white-space:pre" >24</text>
<text x="1858" y="504.0" font-size="14" fill="#111" stroke="#111" stroke-width="0.4" font-weight="normal" text-anchor="end" style="white-space:pre" >30</text>
<text x="1858" y="523.0" font-size="14" fill="#111" stroke="#111" stroke-width="0.4" font-weight="normal" text-anchor="end" style="white-space:pre" >36</text>
<text x="1858" y="553.0" font-size="14" fill="#111" stroke="#111" stroke-width="0.4" font-weight="normal" text-anchor="end" style="white-space:pre" >48</text>
<text x="1858" y="577.0" font-size="14" fill="#111" stroke="#111" stroke-width="0.4" font-weight="normal" text-anchor="end" style="white-space:pre" >60</text>
<path d="M1840,389 L1827,396 L1840,403 Z" stroke="#4a4e4d" stroke-width="1.2" fill="#a9acac" />
<rect x="1885" y="374" width="50" height="17" fill="#c2c5c5" rx="8.5" stroke="#555" stroke-width="1" />
<text x="1910" y="387.5" font-size="14" fill="#111" stroke="#111" stroke-width="0.4" font-weight="normal" text-anchor="middle" style="white-space:pre" >-0.49</text>
<rect x="1885" y="400" width="50" height="18" fill="#c5c8c8" stroke="#555" stroke-width="1" />
<text x="1910" y="414.0" font-size="14" fill="#111" stroke="#111" stroke-width="0.4" font-weight="normal" text-anchor="middle" style="white-space:pre" >0</text>
<circle cx="1887" cy="404" r="4" fill="#f25545" stroke="#111" stroke-width="1.3" />
<path d="M1899.73,493.84 A17.5,17.5 0 0 1 1903.01,462.56" stroke="#1a1a1a" stroke-width="3.2" fill="none" />
<path d="M1914.99,462.56 A17.5,17.5 0 0 1 1918.27,493.84" stroke="#1a1a1a" stroke-width="3.2" fill="none" />
<line x1="1909" y1="458" x2="1909" y2="480" stroke="#1a1a1a" stroke-width="3.2" />
<path d="M1903.5,451 L1914.5,451 L1909,458 Z" stroke="none" stroke-width="1" fill="#1a1a1a" />
<rect x="1893" y="517" width="34" height="17" fill="#b5b6b5" stroke="#555" stroke-width="1" />
<text x="1910" y="530.2" font-size="13" fill="#666" stroke="#666" stroke-width="0.4" font-weight="normal" text-anchor="middle" style="white-space:pre" >Solo</text>
<path d="M1899.07,573.02 A17,17 0 1 1 1920.93,573.02" stroke="#1a8ad0" stroke-width="3" fill="none" />
<line x1="1910" y1="560" x2="1917" y2="574" stroke="#1a1a1a" stroke-width="2.6" />
<path d="M1905,575 a4.5,4.5 0 0 1 9,0" stroke="#111" stroke-width="1.6" fill="none" />
<rect x="1944" y="372" width="7.5" height="212" fill="#1e1f1f" />
<rect x="1953" y="372" width="7.5" height="212" fill="#1e1f1f" />
<rect x="1944" y="394.5" width="16.5" height="1.2" fill="#858888" />
<rect x="1944" y="411" width="7.5" height="173" fill="#18b050" />
<rect x="1953" y="409" width="7.5" height="175" fill="#18b050" />
<rect x="1944" y="411" width="7.5" height="30" fill="#2f8f52" />
<rect x="1953" y="409" width="7.5" height="30" fill="#2f8f52" />
<rect x="1944" y="396" width="7.5" height="1.5" fill="#30d060" />
<rect x="1953" y="398" width="7.5" height="1.5" fill="#30d060" />
<line x1="1963" y1="373" x2="1969" y2="373" stroke="#222" stroke-width="1.6" />
<line x1="1963" y1="394" x2="1969" y2="394" stroke="#222" stroke-width="1.6" />
<line x1="1963" y1="415" x2="1969" y2="415" stroke="#222" stroke-width="1.6" />
<line x1="1963" y1="436" x2="1969" y2="436" stroke="#222" stroke-width="1.6" />
<line x1="1963" y1="457" x2="1969" y2="457" stroke="#222" stroke-width="1.6" />
<line x1="1963" y1="478" x2="1969" y2="478" stroke="#222" stroke-width="1.6" />
<line x1="1963" y1="499" x2="1969" y2="499" stroke="#222" stroke-width="1.6" />
<line x1="1963" y1="517" x2="1969" y2="517" stroke="#222" stroke-width="1.6" />
<line x1="1963" y1="533" x2="1969" y2="533" stroke="#222" stroke-width="1.6" />
<line x1="1963" y1="547.5" x2="1969" y2="547.5" stroke="#222" stroke-width="1.6" />
<line x1="1963" y1="560" x2="1969" y2="560" stroke="#222" stroke-width="1.6" />
<line x1="1963" y1="571" x2="1969" y2="571" stroke="#222" stroke-width="1.6" />
<line x1="1963" y1="579.5" x2="1969" y2="579.5" stroke="#222" stroke-width="1.6" />
<text x="1993" y="400.0" font-size="14" fill="#111" stroke="#111" stroke-width="0.4" font-weight="normal" text-anchor="end" style="white-space:pre" >0</text>
<text x="1993" y="419.0" font-size="14" fill="#111" stroke="#111" stroke-width="0.4" font-weight="normal" text-anchor="end" style="white-space:pre" >6</text>
<text x="1993" y="441.0" font-size="14" fill="#111" stroke="#111" stroke-width="0.4" font-weight="normal" text-anchor="end" style="white-space:pre" >12</text>
<text x="1993" y="462.0" font-size="14" fill="#111" stroke="#111" stroke-width="0.4" font-weight="normal" text-anchor="end" style="white-space:pre" >18</text>
<text x="1993" y="482.0" font-size="14" fill="#111" stroke="#111" stroke-width="0.4" font-weight="normal" text-anchor="end" style="white-space:pre" >24</text>
<text x="1993" y="504.0" font-size="14" fill="#111" stroke="#111" stroke-width="0.4" font-weight="normal" text-anchor="end" style="white-space:pre" >30</text>
<text x="1993" y="523.0" font-size="14" fill="#111" stroke="#111" stroke-width="0.4" font-weight="normal" text-anchor="end" style="white-space:pre" >36</text>
<text x="1993" y="553.0" font-size="14" fill="#111" stroke="#111" stroke-width="0.4" font-weight="normal" text-anchor="end" style="white-space:pre" >48</text>
<text x="1993" y="577.0" font-size="14" fill="#111" stroke="#111" stroke-width="0.4" font-weight="normal" text-anchor="end" style="white-space:pre" >60</text>
<path d="M1975,389 L1962,396 L1975,403 Z" stroke="#4a4e4d" stroke-width="1.2" fill="#8a8d8d" />
<circle cx="1971" cy="396" r="4.2" fill="#f25545" stroke="#111" stroke-width="1.3" />
<rect x="567" y="594" width="780" height="10" fill="#363a39" rx="5" />
<circle cx="2026" cy="108" r="13" fill="#6a6c6b" />
<line x1="2017" y1="103" x2="2035" y2="103" stroke="#7c7e7d" stroke-width="2" />
<line x1="2017" y1="108" x2="2035" y2="108" stroke="#7c7e7d" stroke-width="2" />
<line x1="2017" y1="113" x2="2035" y2="113" stroke="#7c7e7d" stroke-width="2" />
<circle cx="2026" cy="140" r="13" fill="#6a6c6b" />
<rect x="2018.5" y="132" width="3" height="17" fill="#f0a830" />
<rect x="2024.5" y="132" width="3" height="17" fill="#f0a830" />
<rect x="2030.5" y="132" width="3" height="17" fill="#f0a830" />
<rect x="2016" y="176" width="10" height="245" fill="#4a4d4c" rx="5" />
<circle cx="2021" cy="470" r="9" fill="#5d5f5e" />
<text x="2021" y="474" font-size="9" fill="#777" text-anchor="middle">I-O</text>
<rect x="2012" y="488" width="19" height="34" fill="#f0a830" rx="9" />
<line x1="2012" y1="505" x2="2031" y2="505" stroke="#666" stroke-width="1" />
<text x="2021.5" y="499.6" font-size="10" fill="#444" stroke="#444" stroke-width="0.4" font-weight="normal" text-anchor="middle" style="white-space:pre" >S</text>
<text x="2021.5" y="518.6" font-size="10" fill="#444" stroke="#444" stroke-width="0.4" font-weight="normal" text-anchor="middle" style="white-space:pre" >R</text>
<circle cx="2021.5" cy="542" r="9.5" fill="#f0a830" />
<text x="2021.5" y="545.2" font-size="9" fill="#444" stroke="#444" stroke-width="0.4" font-weight="normal" text-anchor="middle" style="white-space:pre" >M</text>
<circle cx="2021.5" cy="569" r="9.5" fill="#1e1f1f" />
<text x="2021.5" y="572.2" font-size="9" fill="#888" stroke="#888" stroke-width="0.4" font-weight="normal" text-anchor="middle" style="white-space:pre" >D</text>
<circle cx="2021.5" cy="596" r="9.5" fill="#1e1f1f" />
<path d="M2017,591.5 L2026,600.5 M2026,591.5 L2017,600.5" stroke="#888" stroke-width="1.3" fill="none" />
<rect x="560" y="627" width="1479" height="357" fill="#4e5251" rx="6" />
<rect x="566" y="633" width="242" height="345" fill="#1e1e1e" rx="4" />
<rect x="811" y="633" width="243" height="345" fill="#1e1e1e" rx="4" />
<rect x="1057" y="633" width="242" height="345" fill="#1e1e1e" rx="4" />
<rect x="1303" y="633" width="363" height="345" fill="#1e1e1e" rx="4" />
<rect x="1670" y="633" width="364" height="345" fill="#1e1e1e" rx="4" />
<line x1="566" y1="932" x2="808" y2="932" stroke="#444" stroke-width="1.5" />
<line x1="811" y1="932" x2="1054" y2="932" stroke="#444" stroke-width="1.5" />
<line x1="1057" y1="932" x2="1299" y2="932" stroke="#444" stroke-width="1.5" />
<line x1="1303" y1="932" x2="1666" y2="932" stroke="#444" stroke-width="1.5" />
<line x1="1670" y1="932" x2="2034" y2="932" stroke="#444" stroke-width="1.5" />
<text x="571" y="653.0" font-size="14" fill="#1ab4dc" stroke="#1ab4dc" stroke-width="0.4" font-weight="normal" text-anchor="start" style="white-space:pre" >Amp</text>
<text x="777" y="653.0" font-size="14" fill="#1ab4dc" font-weight="bold" text-anchor="end" style="white-space:pre" >None</text>
<path d="M790,645 L800,645 L795,651 Z" stroke="none" stroke-width="1" fill="#1ab4dc" />
<path d="M576,697 L576,685 L588,685" stroke="#1ab4dc" stroke-width="1.6" fill="none" />
<path d="M796,697 L796,685 L784,685" stroke="#1ab4dc" stroke-width="1.6" fill="none" />
<path d="M576,872 L576,884 L588,884" stroke="#1ab4dc" stroke-width="1.6" fill="none" />
<path d="M796,872 L796,884 L784,884" stroke="#1ab4dc" stroke-width="1.6" fill="none" />
<text x="665" y="924.0" font-size="14" fill="#eee" font-weight="bold" text-anchor="middle" style="white-space:pre" >Time</text>
<text x="708" y="924.0" font-size="14" fill="#777" stroke="#777" stroke-width="0.4" font-weight="normal" text-anchor="middle" style="white-space:pre" >Slope</text>
<line x1="645" y1="931.5" x2="685" y2="931.5" stroke="#ddd" stroke-width="2" />
<text x="571.0" y="949.7" font-size="13" fill="#888" stroke="#888" stroke-width="0.4" font-weight="normal" text-anchor="start" style="white-space:pre" >A</text>
<text x="634.5" y="949.7" font-size="13" fill="#888" stroke="#888" stroke-width="0.4" font-weight="normal" text-anchor="start" style="white-space:pre" >D</text>
<text x="693.0" y="949.7" font-size="13" fill="#888" stroke="#888" stroke-width="0.4" font-weight="normal" text-anchor="start" style="white-space:pre" >S</text>
<text x="751.5" y="949.7" font-size="13" fill="#888" stroke="#888" stroke-width="0.4" font-weight="normal" text-anchor="start" style="white-space:pre" >R</text>
<text x="571" y="969.0" font-size="14" fill="#888" stroke="#888" stroke-width="0.4" font-weight="normal" text-anchor="start" style="white-space:pre" >9.71 ms</text>
<text x="632" y="969.0" font-size="14" fill="#1ab4dc" font-weight="bold" text-anchor="start" style="white-space:pre" >445 ms</text>
<text x="691" y="969.0" font-size="14" fill="#1ab4dc" font-weight="bold" text-anchor="start" style="white-space:pre" >-1.6 dB</text>
<text x="750" y="969.0" font-size="14" fill="#888" stroke="#888" stroke-width="0.4" font-weight="normal" text-anchor="start" style="white-space:pre" >47.3 ms</text>
<circle cx="576" cy="959" r="3" fill="#1a9a4a" />
<circle cx="751" cy="959" r="3" fill="#1a9a4a" />
<text x="816" y="653.0" font-size="14" fill="#1ab4dc" stroke="#1ab4dc" stroke-width="0.4" font-weight="normal" text-anchor="start" style="white-space:pre" >Env 2</text>
<text x="1022" y="653.0" font-size="14" fill="#1ab4dc" font-weight="bold" text-anchor="end" style="white-space:pre" >None</text>
<path d="M1035,645 L1045,645 L1040,651 Z" stroke="none" stroke-width="1" fill="#1ab4dc" />
<path d="M821,697 L821,685 L833,685" stroke="#1ab4dc" stroke-width="1.6" fill="none" />
<path d="M1041,697 L1041,685 L1029,685" stroke="#1ab4dc" stroke-width="1.6" fill="none" />
<path d="M821,872 L821,884 L833,884" stroke="#1ab4dc" stroke-width="1.6" fill="none" />
<path d="M1041,872 L1041,884 L1029,884" stroke="#1ab4dc" stroke-width="1.6" fill="none" />
<text x="889" y="924.0" font-size="14" fill="#eee" font-weight="bold" text-anchor="middle" style="white-space:pre" >Time</text>
<text x="932" y="924.0" font-size="14" fill="#777" stroke="#777" stroke-width="0.4" font-weight="normal" text-anchor="middle" style="white-space:pre" >Slope</text>
<text x="975" y="924.0" font-size="14" fill="#777" stroke="#777" stroke-width="0.4" font-weight="normal" text-anchor="middle" style="white-space:pre" >Value</text>
<line x1="869" y1="931.5" x2="910" y2="931.5" stroke="#ddd" stroke-width="2" />
<text x="816.0" y="949.7" font-size="13" fill="#888" stroke="#888" stroke-width="0.4" font-weight="normal" text-anchor="start" style="white-space:pre" >A</text>
<text x="879.5" y="949.7" font-size="13" fill="#888" stroke="#888" stroke-width="0.4" font-weight="normal" text-anchor="start" style="white-space:pre" >D</text>
<text x="938.0" y="949.7" font-size="13" fill="#888" stroke="#888" stroke-width="0.4" font-weight="normal" text-anchor="start" style="white-space:pre" >S</text>
<text x="996.5" y="949.7" font-size="13" fill="#888" stroke="#888" stroke-width="0.4" font-weight="normal" text-anchor="start" style="white-space:pre" >R</text>
<text x="816" y="969.0" font-size="14" fill="#1ab4dc" font-weight="bold" text-anchor="start" style="white-space:pre" >4.15 ms</text>
<text x="877" y="969.0" font-size="14" fill="#1ab4dc" font-weight="bold" text-anchor="start" style="white-space:pre" >1.33 s</text>
<text x="936" y="969.0" font-size="14" fill="#1ab4dc" font-weight="bold" text-anchor="start" style="white-space:pre" >88 %</text>
<text x="995" y="969.0" font-size="14" fill="#1ab4dc" font-weight="bold" text-anchor="start" style="white-space:pre" >2.12 s</text>
<text x="1062" y="653.0" font-size="14" fill="#1ab4dc" stroke="#1ab4dc" stroke-width="0.4" font-weight="normal" text-anchor="start" style="white-space:pre" >Env 3</text>
<text x="1268" y="653.0" font-size="14" fill="#1ab4dc" font-weight="bold" text-anchor="end" style="white-space:pre" >None</text>
<path d="M1281,645 L1291,645 L1286,651 Z" stroke="none" stroke-width="1" fill="#1ab4dc" />
<path d="M1067,697 L1067,685 L1079,685" stroke="#1ab4dc" stroke-width="1.6" fill="none" />
<path d="M1287,697 L1287,685 L1275,685" stroke="#1ab4dc" stroke-width="1.6" fill="none" />
<path d="M1067,872 L1067,884 L1079,884" stroke="#1ab4dc" stroke-width="1.6" fill="none" />
<path d="M1287,872 L1287,884 L1275,884" stroke="#1ab4dc" stroke-width="1.6" fill="none" />
<text x="1135" y="924.0" font-size="14" fill="#eee" font-weight="bold" text-anchor="middle" style="white-space:pre" >Time</text>
<text x="1178" y="924.0" font-size="14" fill="#777" stroke="#777" stroke-width="0.4" font-weight="normal" text-anchor="middle" style="white-space:pre" >Slope</text>
<text x="1221" y="924.0" font-size="14" fill="#777" stroke="#777" stroke-width="0.4" font-weight="normal" text-anchor="middle" style="white-space:pre" >Value</text>
<line x1="1115" y1="931.5" x2="1156" y2="931.5" stroke="#ddd" stroke-width="2" />
<text x="1062.0" y="949.7" font-size="13" fill="#888" stroke="#888" stroke-width="0.4" font-weight="normal" text-anchor="start" style="white-space:pre" >A</text>
<text x="1125.5" y="949.7" font-size="13" fill="#888" stroke="#888" stroke-width="0.4" font-weight="normal" text-anchor="start" style="white-space:pre" >D</text>
<text x="1184.0" y="949.7" font-size="13" fill="#888" stroke="#888" stroke-width="0.4" font-weight="normal" text-anchor="start" style="white-space:pre" >S</text>
<text x="1242.5" y="949.7" font-size="13" fill="#888" stroke="#888" stroke-width="0.4" font-weight="normal" text-anchor="start" style="white-space:pre" >R</text>
<text x="1062" y="969.0" font-size="14" fill="#1ab4dc" font-weight="bold" text-anchor="start" style="white-space:pre" >99.6 ms</text>
<text x="1123" y="969.0" font-size="14" fill="#1ab4dc" font-weight="bold" text-anchor="start" style="white-space:pre" >6.33 s</text>
<text x="1182" y="969.0" font-size="14" fill="#1ab4dc" font-weight="bold" text-anchor="start" style="white-space:pre" >48 %</text>
<text x="1241" y="969.0" font-size="14" fill="#1ab4dc" font-weight="bold" text-anchor="start" style="white-space:pre" >5.34 s</text>
<path d="M582,878 C584,800 585,720 592,690 C596,698 604,706 618,708 L722,708 C726,740 730,800 734,876" stroke="#1ab4dc" stroke-width="2.2" fill="none" />
<rect x="587.5" y="686.5" width="9" height="9" fill="none" stroke="#f0a830" stroke-width="1.6" />
<rect x="613.5" y="703.5" width="9" height="9" fill="none" stroke="#f0a830" stroke-width="1.6" />
<rect x="729.5" y="871.5" width="9" height="9" fill="none" stroke="#f0a830" stroke-width="1.6" />
<path d="M589,712.5 L592.5,716 L589,719.5 L585.5,716 Z" stroke="#e07070" stroke-width="1.2" fill="#1e1e1e" />
<path d="M606,701.5 L609.5,705 L606,708.5 L602.5,705 Z" stroke="#e07070" stroke-width="1.2" fill="#1e1e1e" />
<path d="M727,753.5 L730.5,757 L727,760.5 L723.5,757 Z" stroke="#e07070" stroke-width="1.2" fill="#1e1e1e" />
<path d="M828,724 C829,705 830,695 835,693 C845,694 860,700 869,715 L965,716 C990,745 1002,780 1004,859" stroke="#1ab4dc" stroke-width="2.2" fill="none" />
<rect x="830.5" y="689.5" width="9" height="9" fill="none" stroke="#f0a830" stroke-width="1.6" />
<rect x="823.5" y="719.5" width="9" height="9" fill="none" stroke="#f0a830" stroke-width="1.6" />
<rect x="864.5" y="710.5" width="9" height="9" fill="none" stroke="#f0a830" stroke-width="1.6" />
<rect x="999.5" y="854.5" width="9" height="9" fill="none" stroke="#f0a830" stroke-width="1.6" />
<path d="M853,695.5 L856.5,699 L853,702.5 L849.5,699 Z" stroke="#e07070" stroke-width="1.2" fill="#1e1e1e" />
<path d="M986,741.5 L989.5,745 L986,748.5 L982.5,745 Z" stroke="#e07070" stroke-width="1.2" fill="#1e1e1e" />
<path d="M1073,788 C1078,778 1083,772 1091,770 C1100,780 1120,786 1142,788 L1212,788 C1225,815 1235,835 1259,851" stroke="#1ab4dc" stroke-width="2.2" fill="none" />
<rect x="1068.5" y="783.5" width="9" height="9" fill="none" stroke="#f0a830" stroke-width="1.6" />
<rect x="1086.5" y="765.5" width="9" height="9" fill="none" stroke="#f0a830" stroke-width="1.6" />
<rect x="1137.5" y="783.5" width="9" height="9" fill="none" stroke="#f0a830" stroke-width="1.6" />
<rect x="1254.5" y="846.5" width="9" height="9" fill="none" stroke="#f0a830" stroke-width="1.6" />
<path d="M1083,771.5 L1086.5,775 L1083,778.5 L1079.5,775 Z" stroke="#e07070" stroke-width="1.2" fill="#1e1e1e" />
<path d="M1117,781.5 L1120.5,785 L1117,788.5 L1113.5,785 Z" stroke="#e07070" stroke-width="1.2" fill="#1e1e1e" />
<path d="M1236,829.5 L1239.5,833 L1236,836.5 L1232.5,833 Z" stroke="#e07070" stroke-width="1.2" fill="#1e1e1e" />
<path d="M1316.0,782.1 L1316.5,779.1 L1317.0,776.1 L1317.5,773.1 L1318.0,770.2 L1318.5,767.2 L1319.0,764.3 L1319.5,761.5 L1320.0,758.6 L1320.5,755.8 L1321.0,753.1 L1321.5,750.4 L1322.0,747.7 L1322.5,745.1 L1323.0,742.6 L1323.5,740.2 L1324.0,737.8 L1324.5,735.5 L1325.0,733.2 L1325.5,731.1 L1326.0,729.0 L1326.5,727.0 L1327.0,725.2 L1327.5,723.4 L1328.0,721.7 L1328.5,720.1 L1329.0,718.7 L1329.5,717.3 L1330.0,716.1 L1330.5,714.9 L1331.0,713.9 L1331.5,713.0 L1332.0,712.2 L1332.5,711.5 L1333.0,711.0 L1333.5,710.6 L1334.0,710.2 L1334.5,710.1 L1335.0,710.0 L1335.5,710.1 L1336.0,710.2 L1336.5,710.6 L1337.0,711.0 L1337.5,711.5 L1338.0,712.2 L1338.5,713.0 L1339.0,713.9 L1339.5,714.9 L1340.0,716.1 L1340.5,717.3 L1341.0,718.7 L1341.5,720.1 L1342.0,721.7 L1342.5,723.4 L1343.0,725.2 L1343.5,727.0 L1344.0,729.0 L1344.5,731.1 L1345.0,733.2 L1345.5,735.5 L1346.0,737.8 L1346.5,740.2 L1347.0,742.6 L1347.5,745.1 L1348.0,747.7 L1348.5,750.4 L1349.0,753.1 L1349.5,755.8 L1350.0,758.6 L1350.5,761.5 L1351.0,764.3 L1351.5,767.2 L1352.0,770.2 L1352.5,773.1 L1353.0,776.1 L1353.5,779.1 L1354.0,782.1 L1354.5,785.0 L1355.0,788.0 L1355.5,791.0 L1356.0,793.9 L1356.5,796.9 L1357.0,799.8 L1357.5,802.7 L1358.0,805.5 L1358.5,808.3 L1359.0,811.1 L1359.5,813.8 L1360.0,816.5 L1360.5,819.1 L1361.0,821.6 L1361.5,824.1 L1362.0,826.5 L1362.5,828.9 L1363.0,831.1 L1363.5,833.3 L1364.0,835.4 L1364.5,837.4 L1365.0,839.3 L1365.5,841.1 L1366.0,842.8 L1366.5,844.4 L1367.0,845.9 L1367.5,847.3 L1368.0,848.6 L1368.5,849.7 L1369.0,850.8 L1369.5,851.7 L1370.0,852.6 L1370.5,853.3 L1371.0,853.9 L1371.5,854.3 L1372.0,854.7 L1372.5,854.9 L1373.0,855.0 L1373.5,855.0 L1374.0,854.8 L1374.5,854.6 L1375.0,854.2 L1375.5,853.6 L1376.0,853.0 L1376.5,852.3 L1377.0,851.4 L1377.5,850.4 L1378.0,849.3 L1378.5,848.1 L1379.0,846.7 L1379.5,845.3 L1380.0,843.8 L1380.5,842.1 L1381.0,840.4 L1381.5,838.5 L1382.0,836.6 L1382.5,834.6 L1383.0,832.4 L1383.5,830.2 L1384.0,827.9 L1384.5,825.6 L1385.0,823.1 L1385.5,820.6 L1386.0,818.1 L1386.5,815.4 L1387.0,812.7 L1387.5,810.0 L1388.0,807.2 L1388.5,804.4 L1389.0,801.5 L1389.5,798.6 L1390.0,795.7 L1390.5,792.8 L1391.0,789.8 L1391.5,786.8 L1392.0,783.8 L1392.5,780.9 L1393.0,777.9 L1393.5,774.9 L1394.0,771.9 L1394.5,769.0 L1395.0,766.1 L1395.5,763.2 L1396.0,760.3 L1396.5,757.5 L1397.0,754.7 L1397.5,752.0 L1398.0,749.3 L1398.5,746.7 L1399.0,744.1 L1399.5,741.6 L1400.0,739.2 L1400.5,736.8 L1401.0,734.6 L1401.5,732.4 L1402.0,730.2 L1402.5,728.2 L1403.0,726.3 L1403.5,724.4 L1404.0,722.7 L1404.5,721.1 L1405.0,719.5 L1405.5,718.1 L1406.0,716.8 L1406.5,715.6 L1407.0,714.5 L1407.5,713.5 L1408.0,712.7 L1408.5,711.9 L1409.0,711.3 L1409.5,710.8 L1410.0,710.4 L1410.5,710.2 L1411.0,710.0 L1411.5,710.0 L1412.0,710.1 L1412.5,710.4 L1413.0,710.7 L1413.5,711.2 L1414.0,711.8 L1414.5,712.5 L1415.0,713.3 L1415.5,714.3 L1416.0,715.4 L1416.5,716.5 L1417.0,717.8 L1417.5,719.2 L1418.0,720.8 L1418.5,722.4 L1419.0,724.1 L1419.5,725.9 L1420.0,727.8 L1420.5,729.8 L1421.0,731.9 L1421.5,734.1 L1422.0,736.4 L1422.5,738.7 L1423.0,741.1 L1423.5,743.6 L1424.0,746.2 L1424.5,748.8 L1425.0,751.4 L1425.5,754.2 L1426.0,756.9 L1426.5,759.8 L1427.0,762.6 L1427.5,765.5 L1428.0,768.4 L1428.5,771.4 L1429.0,774.3 L1429.5,777.3 L1430.0,780.3 L1430.5,783.2 L1431.0,786.2 L1431.5,789.2 L1432.0,792.2 L1432.5,795.1 L1433.0,798.1 L1433.5,801.0 L1434.0,803.8 L1434.5,806.7 L1435.0,809.4 L1435.5,812.2 L1436.0,814.9 L1436.5,817.5 L1437.0,820.1 L1437.5,822.6 L1438.0,825.1 L1438.5,827.5 L1439.0,829.8 L1439.5,832.0 L1440.0,834.1 L1440.5,836.2 L1441.0,838.1 L1441.5,840.0 L1442.0,841.8 L1442.5,843.4 L1443.0,845.0 L1443.5,846.5 L1444.0,847.8 L1444.5,849.1 L1445.0,850.2 L1445.5,851.2 L1446.0,852.1 L1446.5,852.9 L1447.0,853.5 L1447.5,854.1 L1448.0,854.5 L1448.5,854.8 L1449.0,855.0 L1449.5,855.0 L1450.0,854.9 L1450.5,854.7 L1451.0,854.4 L1451.5,854.0 L1452.0,853.4 L1452.5,852.7 L1453.0,851.9 L1453.5,851.0 L1454.0,850.0 L1454.5,848.8 L1455.0,847.6 L1455.5,846.2 L1456.0,844.7 L1456.5,843.1 L1457.0,841.4 L1457.5,839.6 L1458.0,837.8 L1458.5,835.8 L1459.0,833.7 L1459.5,831.6 L1460.0,829.3 L1460.5,827.0 L1461.0,824.6 L1461.5,822.1 L1462.0,819.6 L1462.5,817.0 L1463.0,814.4 L1463.5,811.7 L1464.0,808.9 L1464.5,806.1 L1465.0,803.3 L1465.5,800.4 L1466.0,797.5 L1466.5,794.5 L1467.0,791.6 L1467.5,788.6 L1468.0,785.6 L1468.5,782.6 L1469.0,779.7 L1469.5,776.7 L1470.0,773.7 L1470.5,770.8 L1471.0,767.8 L1471.5,764.9 L1472.0,762.0 L1472.5,759.2 L1473.0,756.4 L1473.5,753.6 L1474.0,750.9 L1474.5,748.2 L1475.0,745.6 L1475.5,743.1 L1476.0,740.6 L1476.5,738.2 L1477.0,735.9 L1477.5,733.7 L1478.0,731.5 L1478.5,729.4 L1479.0,727.4 L1479.5,725.5 L1480.0,723.7 L1480.5,722.0 L1481.0,720.4 L1481.5,719.0 L1482.0,717.6 L1482.5,716.3 L1483.0,715.1 L1483.5,714.1 L1484.0,713.2 L1484.5,712.3 L1485.0,711.7 L1485.5,711.1 L1486.0,710.6 L1486.5,710.3 L1487.0,710.1 L1487.5,710.0 L1488.0,710.0 L1488.5,710.2 L1489.0,710.5 L1489.5,710.9 L1490.0,711.4 L1490.5,712.1 L1491.0,712.8 L1491.5,713.7 L1492.0,714.7 L1492.5,715.8 L1493.0,717.1 L1493.5,718.4 L1494.0,719.8 L1494.5,721.4 L1495.0,723.0 L1495.5,724.8 L1496.0,726.7 L1496.5,728.6 L1497.0,730.7 L1497.5,732.8 L1498.0,735.0 L1498.5,737.3 L1499.0,739.7 L1499.5,742.1 L1500.0,744.6 L1500.5,747.2 L1501.0,749.8 L1501.5,752.5 L1502.0,755.3 L1502.5,758.1 L1503.0,760.9 L1503.5,763.8 L1504.0,766.7 L1504.5,769.6 L1505.0,772.5 L1505.5,775.5 L1506.0,778.5 L1506.5,781.5 L1507.0,784.4 L1507.5,787.4 L1508.0,790.4 L1508.5,793.4 L1509.0,796.3 L1509.5,799.2 L1510.0,802.1 L1510.5,805.0 L1511.0,807.8 L1511.5,810.6 L1512.0,813.3 L1512.5,816.0 L1513.0,818.6 L1513.5,821.1 L1514.0,823.6 L1514.5,826.1 L1515.0,828.4 L1515.5,830.7 L1516.0,832.9 L1516.5,835.0 L1517.0,837.0 L1517.5,838.9 L1518.0,840.7 L1518.5,842.5 L1519.0,844.1 L1519.5,845.6 L1520.0,847.0 L1520.5,848.3 L1521.0,849.5 L1521.5,850.6 L1522.0,851.6 L1522.5,852.4 L1523.0,853.1 L1523.5,853.8 L1524.0,854.2 L1524.5,854.6 L1525.0,854.9 L1525.5,855.0 L1526.0,855.0 L1526.5,854.9 L1527.0,854.6 L1527.5,854.2 L1528.0,853.8 L1528.5,853.1 L1529.0,852.4 L1529.5,851.6 L1530.0,850.6 L1530.5,849.5 L1531.0,848.3 L1531.5,847.0 L1532.0,845.6 L1532.5,844.1 L1533.0,842.5 L1533.5,840.7 L1534.0,838.9 L1534.5,837.0 L1535.0,835.0 L1535.5,832.9 L1536.0,830.7 L1536.5,828.4 L1537.0,826.1 L1537.5,823.6 L1538.0,821.1 L1538.5,818.6 L1539.0,816.0 L1539.5,813.3 L1540.0,810.6 L1540.5,807.8 L1541.0,805.0 L1541.5,802.1 L1542.0,799.2 L1542.5,796.3 L1543.0,793.4 L1543.5,790.4 L1544.0,787.4 L1544.5,784.4 L1545.0,781.5 L1545.5,778.5 L1546.0,775.5 L1546.5,772.5 L1547.0,769.6 L1547.5,766.7 L1548.0,763.8 L1548.5,760.9 L1549.0,758.1 L1549.5,755.3 L1550.0,752.5 L1550.5,749.8 L1551.0,747.2 L1551.5,744.6 L1552.0,742.1 L1552.5,739.7 L1553.0,737.3 L1553.5,735.0 L1554.0,732.8 L1554.5,730.7 L1555.0,728.6 L1555.5,726.7 L1556.0,724.8 L1556.5,723.0 L1557.0,721.4 L1557.5,719.8 L1558.0,718.4 L1558.5,717.1 L1559.0,715.8 L1559.5,714.7 L1560.0,713.7 L1560.5,712.8 L1561.0,712.1 L1561.5,711.4 L1562.0,710.9 L1562.5,710.5 L1563.0,710.2 L1563.5,710.0 L1564.0,710.0 L1564.5,710.1 L1565.0,710.3 L1565.5,710.6 L1566.0,711.1 L1566.5,711.7 L1567.0,712.3 L1567.5,713.2 L1568.0,714.1 L1568.5,715.1 L1569.0,716.3 L1569.5,717.6 L1570.0,719.0 L1570.5,720.4 L1571.0,722.0 L1571.5,723.7 L1572.0,725.5 L1572.5,727.4 L1573.0,729.4 L1573.5,731.5 L1574.0,733.7 L1574.5,735.9 L1575.0,738.2 L1575.5,740.6 L1576.0,743.1 L1576.5,745.6 L1577.0,748.2 L1577.5,750.9 L1578.0,753.6 L1578.5,756.4 L1579.0,759.2 L1579.5,762.0 L1580.0,764.9 L1580.5,767.8 L1581.0,770.8 L1581.5,773.7 L1582.0,776.7 L1582.5,779.7 L1583.0,782.6 L1583.5,785.6 L1584.0,788.6 L1584.5,791.6 L1585.0,794.5 L1585.5,797.5 L1586.0,800.4 L1586.5,803.3 L1587.0,806.1 L1587.5,808.9 L1588.0,811.7 L1588.5,814.4 L1589.0,817.0 L1589.5,819.6 L1590.0,822.1 L1590.5,824.6 L1591.0,827.0 L1591.5,829.3 L1592.0,831.6 L1592.5,833.7 L1593.0,835.8 L1593.5,837.8 L1594.0,839.6 L1594.5,841.4 L1595.0,843.1 L1595.5,844.7 L1596.0,846.2 L1596.5,847.6 L1597.0,848.8 L1597.5,850.0 L1598.0,851.0 L1598.5,851.9 L1599.0,852.7 L1599.5,853.4 L1600.0,854.0 L1600.5,854.4 L1601.0,854.7 L1601.5,854.9 L1602.0,855.0 L1602.5,855.0 L1603.0,854.8 L1603.5,854.5 L1604.0,854.1 L1604.5,853.5 L1605.0,852.9 L1605.5,852.1 L1606.0,851.2 L1606.5,850.2 L1607.0,849.1 L1607.5,847.8 L1608.0,846.5 L1608.5,845.0 L1609.0,843.4 L1609.5,841.8 L1610.0,840.0 L1610.5,838.1 L1611.0,836.2 L1611.5,834.1 L1612.0,832.0 L1612.5,829.8 L1613.0,827.5 L1613.5,825.1 L1614.0,822.6 L1614.5,820.1 L1615.0,817.5 L1615.5,814.9 L1616.0,812.2 L1616.5,809.4 L1617.0,806.7 L1617.5,803.8 L1618.0,801.0 L1618.5,798.1 L1619.0,795.1 L1619.5,792.2 L1620.0,789.2 L1620.5,786.2 L1621.0,783.2 L1621.5,780.3 L1622.0,777.3 L1622.5,774.3 L1623.0,771.4 L1623.5,768.4 L1624.0,765.5 L1624.5,762.6 L1625.0,759.8 L1625.5,756.9 L1626.0,754.2 L1626.5,751.4 L1627.0,748.8 L1627.5,746.2 L1628.0,743.6 L1628.5,741.1 L1629.0,738.7 L1629.5,736.4 L1630.0,734.1 L1630.5,731.9 L1631.0,729.8 L1631.5,727.8 L1632.0,725.9 L1632.5,724.1 L1633.0,722.4 L1633.5,720.8 L1634.0,719.2 L1634.5,717.8 L1635.0,716.5 L1635.5,715.4 L1636.0,714.3 L1636.5,713.3 L1637.0,712.5 L1637.5,711.8 L1638.0,711.2 L1638.5,710.7 L1639.0,710.4 L1639.5,710.1 L1640.0,710.0 L1640.5,710.0 L1641.0,710.2 L1641.5,710.4 L1642.0,710.8 L1642.5,711.3 L1643.0,711.9 L1643.5,712.7 L1644.0,713.5 L1644.5,714.5 L1645.0,715.6 L1645.5,716.8 L1646.0,718.1 L1646.5,719.5 L1647.0,721.1" stroke="#f0a830" stroke-width="2.2" fill="none" />
<path d="M1684.0,778.3 L1684.5,775.8 L1685.0,773.3 L1685.5,770.8 L1686.0,768.4 L1686.5,765.9 L1687.0,763.5 L1687.5,761.1 L1688.0,758.8 L1688.5,756.5 L1689.0,754.2 L1689.5,751.9 L1690.0,749.7 L1690.5,747.6 L1691.0,745.5 L1691.5,743.4 L1692.0,741.4 L1692.5,739.5 L1693.0,737.6 L1693.5,735.8 L1694.0,734.0 L1694.5,732.3 L1695.0,730.7 L1695.5,729.2 L1696.0,727.7 L1696.5,726.4 L1697.0,725.1 L1697.5,723.8 L1698.0,722.7 L1698.5,721.6 L1699.0,720.7 L1699.5,719.8 L1700.0,719.0 L1700.5,718.3 L1701.0,717.7 L1701.5,717.2 L1702.0,716.8 L1702.5,716.4 L1703.0,716.2 L1703.5,716.0 L1704.0,716.0 L1704.5,716.0 L1705.0,716.2 L1705.5,716.4 L1706.0,716.8 L1706.5,717.2 L1707.0,717.7 L1707.5,718.3 L1708.0,719.0 L1708.5,719.8 L1709.0,720.7 L1709.5,721.6 L1710.0,722.7 L1710.5,723.8 L1711.0,725.1 L1711.5,726.4 L1712.0,727.7 L1712.5,729.2 L1713.0,730.7 L1713.5,732.3 L1714.0,734.0 L1714.5,735.8 L1715.0,737.6 L1715.5,739.5 L1716.0,741.4 L1716.5,743.4 L1717.0,745.5 L1717.5,747.6 L1718.0,749.7 L1718.5,751.9 L1719.0,754.2 L1719.5,756.5 L1720.0,758.8 L1720.5,761.1 L1721.0,763.5 L1721.5,765.9 L1722.0,768.4 L1722.5,770.8 L1723.0,773.3 L1723.5,775.8 L1724.0,778.3 L1724.5,780.8 L1725.0,783.2 L1725.5,785.7 L1726.0,788.2 L1726.5,790.7 L1727.0,793.2 L1727.5,795.6 L1728.0,798.1 L1728.5,800.5 L1729.0,802.9 L1729.5,805.2 L1730.0,807.5 L1730.5,809.8 L1731.0,812.1 L1731.5,814.3 L1732.0,816.4 L1732.5,818.5 L1733.0,820.6 L1733.5,822.6 L1734.0,824.5 L1734.5,826.4 L1735.0,828.2 L1735.5,830.0 L1736.0,831.7 L1736.5,833.3 L1737.0,834.8 L1737.5,836.3 L1738.0,837.6 L1738.5,838.9 L1739.0,840.2 L1739.5,841.3 L1740.0,842.4 L1740.5,843.3 L1741.0,844.2 L1741.5,845.0 L1742.0,845.7 L1742.5,846.3 L1743.0,846.8 L1743.5,847.2 L1744.0,847.6 L1744.5,847.8 L1745.0,848.0 L1745.5,848.0 L1746.0,848.0 L1746.5,847.8 L1747.0,847.6 L1747.5,847.2 L1748.0,846.8 L1748.5,846.3 L1749.0,845.7 L1749.5,845.0 L1750.0,844.2 L1750.5,843.3 L1751.0,842.4 L1751.5,841.3 L1752.0,840.2 L1752.5,838.9 L1753.0,837.6 L1753.5,836.3 L1754.0,834.8 L1754.5,833.3 L1755.0,831.7 L1755.5,830.0 L1756.0,828.2 L1756.5,826.4 L1757.0,824.5 L1757.5,822.6 L1758.0,820.6 L1758.5,818.5 L1759.0,816.4 L1759.5,814.3 L1760.0,812.1 L1760.5,809.8 L1761.0,807.5 L1761.5,805.2 L1762.0,802.9 L1762.5,800.5 L1763.0,798.1 L1763.5,795.6 L1764.0,793.2 L1764.5,790.7 L1765.0,788.2 L1765.5,785.7 L1766.0,783.2 L1766.5,780.8 L1767.0,778.3 L1767.5,775.8 L1768.0,773.3 L1768.5,770.8 L1769.0,768.4 L1769.5,765.9 L1770.0,763.5 L1770.5,761.1 L1771.0,758.8 L1771.5,756.5 L1772.0,754.2 L1772.5,751.9 L1773.0,749.7 L1773.5,747.6 L1774.0,745.5 L1774.5,743.4 L1775.0,741.4 L1775.5,739.5 L1776.0,737.6 L1776.5,735.8 L1777.0,734.0 L1777.5,732.3 L1778.0,730.7 L1778.5,729.2 L1779.0,727.7 L1779.5,726.4 L1780.0,725.1 L1780.5,723.8 L1781.0,722.7 L1781.5,721.6 L1782.0,720.7 L1782.5,719.8 L1783.0,719.0 L1783.5,718.3 L1784.0,717.7 L1784.5,717.2 L1785.0,716.8 L1785.5,716.4 L1786.0,716.2 L1786.5,716.0 L1787.0,716.0 L1787.5,716.0 L1788.0,716.2 L1788.5,716.4 L1789.0,716.8 L1789.5,717.2 L1790.0,717.7 L1790.5,718.3 L1791.0,719.0 L1791.5,719.8 L1792.0,720.7 L1792.5,721.6 L1793.0,722.7 L1793.5,723.8 L1794.0,725.1 L1794.5,726.4 L1795.0,727.7 L1795.5,729.2 L1796.0,730.7 L1796.5,732.3 L1797.0,734.0 L1797.5,735.8 L1798.0,737.6 L1798.5,739.5 L1799.0,741.4 L1799.5,743.4 L1800.0,745.5 L1800.5,747.6 L1801.0,749.7 L1801.5,751.9 L1802.0,754.2 L1802.5,756.5 L1803.0,758.8 L1803.5,761.1 L1804.0,763.5 L1804.5,765.9 L1805.0,768.4 L1805.5,770.8 L1806.0,773.3 L1806.5,775.8 L1807.0,778.3 L1807.5,780.8 L1808.0,783.2 L1808.5,785.7 L1809.0,788.2 L1809.5,790.7 L1810.0,793.2 L1810.5,795.6 L1811.0,798.1 L1811.5,800.5 L1812.0,802.9 L1812.5,805.2 L1813.0,807.5 L1813.5,809.8 L1814.0,812.1 L1814.5,814.3 L1815.0,816.4 L1815.5,818.5 L1816.0,820.6 L1816.5,822.6 L1817.0,824.5 L1817.5,826.4 L1818.0,828.2 L1818.5,830.0 L1819.0,831.7 L1819.5,833.3 L1820.0,834.8 L1820.5,836.3 L1821.0,837.6 L1821.5,838.9 L1822.0,840.2 L1822.5,841.3 L1823.0,842.4 L1823.5,843.3 L1824.0,844.2 L1824.5,845.0 L1825.0,845.7 L1825.5,846.3 L1826.0,846.8 L1826.5,847.2 L1827.0,847.6 L1827.5,847.8 L1828.0,848.0 L1828.5,848.0 L1829.0,848.0 L1829.5,847.8 L1830.0,847.6 L1830.5,847.2 L1831.0,846.8 L1831.5,846.3 L1832.0,845.7 L1832.5,845.0 L1833.0,844.2 L1833.5,843.3 L1834.0,842.4 L1834.5,841.3 L1835.0,840.2 L1835.5,838.9 L1836.0,837.6 L1836.5,836.3 L1837.0,834.8 L1837.5,833.3 L1838.0,831.7 L1838.5,830.0 L1839.0,828.2 L1839.5,826.4 L1840.0,824.5 L1840.5,822.6 L1841.0,820.6 L1841.5,818.5 L1842.0,816.4 L1842.5,814.3 L1843.0,812.1 L1843.5,809.8 L1844.0,807.5 L1844.5,805.2 L1845.0,802.9 L1845.5,800.5 L1846.0,798.1 L1846.5,795.6 L1847.0,793.2 L1847.5,790.7 L1848.0,788.2 L1848.5,785.7 L1849.0,783.2 L1849.5,780.8 L1850.0,778.3 L1850.5,775.8 L1851.0,773.3 L1851.5,770.8 L1852.0,768.4 L1852.5,765.9 L1853.0,763.5 L1853.5,761.1 L1854.0,758.8 L1854.5,756.5 L1855.0,754.2 L1855.5,751.9 L1856.0,749.7 L1856.5,747.6 L1857.0,745.5 L1857.5,743.4 L1858.0,741.4 L1858.5,739.5 L1859.0,737.6 L1859.5,735.8 L1860.0,734.0 L1860.5,732.3 L1861.0,730.7 L1861.5,729.2 L1862.0,727.7 L1862.5,726.4 L1863.0,725.1 L1863.5,723.8 L1864.0,722.7 L1864.5,721.6 L1865.0,720.7 L1865.5,719.8 L1866.0,719.0 L1866.5,718.3 L1867.0,717.7 L1867.5,717.2 L1868.0,716.8 L1868.5,716.4 L1869.0,716.2 L1869.5,716.0 L1870.0,716.0 L1870.5,716.0 L1871.0,716.2 L1871.5,716.4 L1872.0,716.8 L1872.5,717.2 L1873.0,717.7 L1873.5,718.3 L1874.0,719.0 L1874.5,719.8 L1875.0,720.7 L1875.5,721.6 L1876.0,722.7 L1876.5,723.8 L1877.0,725.1 L1877.5,726.4 L1878.0,727.7 L1878.5,729.2 L1879.0,730.7 L1879.5,732.3 L1880.0,734.0 L1880.5,735.8 L1881.0,737.6 L1881.5,739.5 L1882.0,741.4 L1882.5,743.4 L1883.0,745.5 L1883.5,747.6 L1884.0,749.7 L1884.5,751.9 L1885.0,754.2 L1885.5,756.5 L1886.0,758.8 L1886.5,761.1 L1887.0,763.5 L1887.5,765.9 L1888.0,768.4 L1888.5,770.8 L1889.0,773.3 L1889.5,775.8 L1890.0,778.3 L1890.5,780.8 L1891.0,783.2 L1891.5,785.7 L1892.0,788.2 L1892.5,790.7 L1893.0,793.2 L1893.5,795.6 L1894.0,798.1 L1894.5,800.5 L1895.0,802.9 L1895.5,805.2 L1896.0,807.5 L1896.5,809.8 L1897.0,812.1 L1897.5,814.3 L1898.0,816.4 L1898.5,818.5 L1899.0,820.6 L1899.5,822.6 L1900.0,824.5 L1900.5,826.4 L1901.0,828.2 L1901.5,830.0 L1902.0,831.7 L1902.5,833.3 L1903.0,834.8 L1903.5,836.3 L1904.0,837.6 L1904.5,838.9 L1905.0,840.2 L1905.5,841.3 L1906.0,842.4 L1906.5,843.3 L1907.0,844.2 L1907.5,845.0 L1908.0,845.7 L1908.5,846.3 L1909.0,846.8 L1909.5,847.2 L1910.0,847.6 L1910.5,847.8 L1911.0,848.0 L1911.5,848.0 L1912.0,848.0 L1912.5,847.8 L1913.0,847.6 L1913.5,847.2 L1914.0,846.8 L1914.5,846.3 L1915.0,845.7 L1915.5,845.0 L1916.0,844.2 L1916.5,843.3 L1917.0,842.4 L1917.5,841.3 L1918.0,840.2 L1918.5,838.9 L1919.0,837.6 L1919.5,836.3 L1920.0,834.8 L1920.5,833.3 L1921.0,831.7 L1921.5,830.0 L1922.0,828.2 L1922.5,826.4 L1923.0,824.5 L1923.5,822.6 L1924.0,820.6 L1924.5,818.5 L1925.0,816.4 L1925.5,814.3 L1926.0,812.1 L1926.5,809.8 L1927.0,807.5 L1927.5,805.2 L1928.0,802.9 L1928.5,800.5 L1929.0,798.1 L1929.5,795.6 L1930.0,793.2 L1930.5,790.7 L1931.0,788.2 L1931.5,785.7 L1932.0,783.2 L1932.5,780.8 L1933.0,778.3 L1933.5,775.8 L1934.0,773.3 L1934.5,770.8 L1935.0,768.4 L1935.5,765.9 L1936.0,763.5 L1936.5,761.1 L1937.0,758.8 L1937.5,756.5 L1938.0,754.2 L1938.5,751.9 L1939.0,749.7 L1939.5,747.6 L1940.0,745.5 L1940.5,743.4 L1941.0,741.4 L1941.5,739.5 L1942.0,737.6 L1942.5,735.8 L1943.0,734.0 L1943.5,732.3 L1944.0,730.7 L1944.5,729.2 L1945.0,727.7 L1945.5,726.4 L1946.0,725.1 L1946.5,723.8 L1947.0,722.7 L1947.5,721.6 L1948.0,720.7 L1948.5,719.8 L1949.0,719.0 L1949.5,718.3 L1950.0,717.7 L1950.5,717.2 L1951.0,716.8 L1951.5,716.4 L1952.0,716.2 L1952.5,716.0 L1953.0,716.0 L1953.5,716.0 L1954.0,716.2 L1954.5,716.4 L1955.0,716.8 L1955.5,717.2 L1956.0,717.7 L1956.5,718.3 L1957.0,719.0 L1957.5,719.8 L1958.0,720.7 L1958.5,721.6 L1959.0,722.7 L1959.5,723.8 L1960.0,725.1 L1960.5,726.4 L1961.0,727.7 L1961.5,729.2 L1962.0,730.7 L1962.5,732.3 L1963.0,734.0 L1963.5,735.8 L1964.0,737.6 L1964.5,739.5 L1965.0,741.4 L1965.5,743.4 L1966.0,745.5 L1966.5,747.6 L1967.0,749.7 L1967.5,751.9 L1968.0,754.2 L1968.5,756.5 L1969.0,758.8 L1969.5,761.1 L1970.0,763.5 L1970.5,765.9 L1971.0,768.4 L1971.5,770.8 L1972.0,773.3 L1972.5,775.8 L1973.0,778.3 L1973.5,780.8 L1974.0,783.2 L1974.5,785.7 L1975.0,788.2 L1975.5,790.7 L1976.0,793.2 L1976.5,795.6 L1977.0,798.1 L1977.5,800.5 L1978.0,802.9 L1978.5,805.2 L1979.0,807.5 L1979.5,809.8 L1980.0,812.1 L1980.5,814.3 L1981.0,816.4 L1981.5,818.5 L1982.0,820.6 L1982.5,822.6 L1983.0,824.5 L1983.5,826.4 L1984.0,828.2 L1984.5,830.0 L1985.0,831.7 L1985.5,833.3 L1986.0,834.8 L1986.5,836.3 L1987.0,837.6 L1987.5,838.9 L1988.0,840.2 L1988.5,841.3 L1989.0,842.4 L1989.5,843.3 L1990.0,844.2 L1990.5,845.0 L1991.0,845.7 L1991.5,846.3 L1992.0,846.8 L1992.5,847.2 L1993.0,847.6 L1993.5,847.8 L1994.0,848.0 L1994.5,848.0 L1995.0,848.0 L1995.5,847.8 L1996.0,847.6 L1996.5,847.2 L1997.0,846.8 L1997.5,846.3 L1998.0,845.7 L1998.5,845.0 L1999.0,844.2 L1999.5,843.3 L2000.0,842.4 L2000.5,841.3 L2001.0,840.2 L2001.5,838.9 L2002.0,837.6 L2002.5,836.3 L2003.0,834.8 L2003.5,833.3 L2004.0,831.7 L2004.5,830.0 L2005.0,828.2 L2005.5,826.4 L2006.0,824.5 L2006.5,822.6 L2007.0,820.6 L2007.5,818.5 L2008.0,816.4 L2008.5,814.3 L2009.0,812.1 L2009.5,809.8 L2010.0,807.5 L2010.5,805.2 L2011.0,802.9 L2011.5,800.5 L2012.0,798.1 L2012.5,795.6 L2013.0,793.2 L2013.5,790.7 L2014.0,788.2 L2014.5,785.7 L2015.0,783.2 L2015.5,780.8 L2016.0,778.3" stroke="#f0a830" stroke-width="2.2" fill="none" />
<text x="1308" y="653.0" font-size="14" fill="#f0a830" stroke="#f0a830" stroke-width="0.4" font-weight="normal" text-anchor="start" style="white-space:pre" >LFO 1</text>
<text x="1497" y="653.0" font-size="14" fill="#888" stroke="#888" stroke-width="0.4" font-weight="normal" text-anchor="end" style="white-space:pre" >A</text>
<text x="1509" y="653.0" font-size="14" fill="#f0a830" font-weight="bold" text-anchor="start" style="white-space:pre" >0.00 ms</text>
<text x="1579" y="653.0" font-size="14" fill="#777" stroke="#777" stroke-width="0.4" font-weight="normal" text-anchor="start" style="white-space:pre" >Hz</text>
<rect x="1603" y="640" width="22" height="17" fill="#2c2a25" />
<text x="1614" y="653.2" font-size="13" fill="#f0a830" stroke="#f0a830" stroke-width="0.4" font-weight="normal" text-anchor="middle" style="white-space:pre" >♪</text>
<rect x="1632" y="640" width="16" height="16" fill="#f0a830" />
<text x="1640" y="652.5" font-size="11" fill="#222" font-weight="bold" text-anchor="middle" style="white-space:pre" >R</text>
<path d="M1401,923 C1404,913 1407,913 1411.5,919 C1416,925 1419,925 1422,915" stroke="#f0a830" stroke-width="1.6" fill="none" />
<path d="M1436,925 l11,-9 l11,9" stroke="#999" stroke-width="1.4" fill="none" />
<path d="M1471,925 v-9 l21,9" stroke="#999" stroke-width="1.4" fill="none" />
<path d="M1507,925 v-9 h10 v9 h10 v-9" stroke="#999" stroke-width="1.4" fill="none" />
<path d="M1543,925 h4 v-9 h5 v9 h4 v-5 h4 v-3 h4" stroke="#999" stroke-width="1.4" fill="none" />
<text x="1369" y="949.7" font-size="13" fill="#888" stroke="#888" stroke-width="0.4" font-weight="normal" text-anchor="middle" style="white-space:pre" >Rate</text>
<text x="1437" y="949.7" font-size="13" fill="#888" stroke="#888" stroke-width="0.4" font-weight="normal" text-anchor="middle" style="white-space:pre" >Amount</text>
<text x="1505" y="949.7" font-size="13" fill="#888" stroke="#888" stroke-width="0.4" font-weight="normal" text-anchor="middle" style="white-space:pre" >Shape</text>
<text x="1571" y="949.7" font-size="13" fill="#888" stroke="#888" stroke-width="0.4" font-weight="normal" text-anchor="middle" style="white-space:pre" >Offset</text>
<text x="1369" y="969.0" font-size="14" fill="#f0a830" font-weight="bold" text-anchor="middle" style="white-space:pre" >1/4</text>
<text x="1437" y="969.0" font-size="14" fill="#f0a830" font-weight="bold" text-anchor="middle" style="white-space:pre" >73 %</text>
<text x="1505" y="969.0" font-size="14" fill="#f0a830" font-weight="bold" text-anchor="middle" style="white-space:pre" >0.0 %</text>
<text x="1567" y="969.0" font-size="14" fill="#f0a830" font-weight="bold" text-anchor="middle" style="white-space:pre" >0.0°</text>
<text x="1675" y="653.0" font-size="14" fill="#f0a830" stroke="#f0a830" stroke-width="0.4" font-weight="normal" text-anchor="start" style="white-space:pre" >LFO 2</text>
<text x="1864" y="653.0" font-size="14" fill="#888" stroke="#888" stroke-width="0.4" font-weight="normal" text-anchor="end" style="white-space:pre" >A</text>
<text x="1876" y="653.0" font-size="14" fill="#f0a830" font-weight="bold" text-anchor="start" style="white-space:pre" >0.00 ms</text>
<text x="1946" y="653.0" font-size="14" fill="#777" stroke="#777" stroke-width="0.4" font-weight="normal" text-anchor="start" style="white-space:pre" >Hz</text>
<rect x="1970" y="640" width="22" height="17" fill="#2c2a25" />
<text x="1981" y="653.2" font-size="13" fill="#f0a830" stroke="#f0a830" stroke-width="0.4" font-weight="normal" text-anchor="middle" style="white-space:pre" >♪</text>
<rect x="1999" y="640" width="16" height="16" fill="#f0a830" />
<text x="2007" y="652.5" font-size="11" fill="#222" font-weight="bold" text-anchor="middle" style="white-space:pre" >R</text>
<path d="M1768,923 C1771,913 1774,913 1778.5,919 C1783,925 1786,925 1789,915" stroke="#f0a830" stroke-width="1.6" fill="none" />
<path d="M1803,925 l11,-9 l11,9" stroke="#999" stroke-width="1.4" fill="none" />
<path d="M1838,925 v-9 l21,9" stroke="#999" stroke-width="1.4" fill="none" />
<path d="M1874,925 v-9 h10 v9 h10 v-9" stroke="#999" stroke-width="1.4" fill="none" />
<path d="M1910,925 h4 v-9 h5 v9 h4 v-5 h4 v-3 h4" stroke="#999" stroke-width="1.4" fill="none" />
<text x="1736" y="949.7" font-size="13" fill="#888" stroke="#888" stroke-width="0.4" font-weight="normal" text-anchor="middle" style="white-space:pre" >Rate</text>
<text x="1804" y="949.7" font-size="13" fill="#888" stroke="#888" stroke-width="0.4" font-weight="normal" text-anchor="middle" style="white-space:pre" >Amount</text>
<text x="1872" y="949.7" font-size="13" fill="#888" stroke="#888" stroke-width="0.4" font-weight="normal" text-anchor="middle" style="white-space:pre" >Shape</text>
<text x="1938" y="949.7" font-size="13" fill="#888" stroke="#888" stroke-width="0.4" font-weight="normal" text-anchor="middle" style="white-space:pre" >Offset</text>
<text x="1736" y="969.0" font-size="14" fill="#f0a830" font-weight="bold" text-anchor="middle" style="white-space:pre" >1/3</text>
<text x="1804" y="969.0" font-size="14" fill="#f0a830" font-weight="bold" text-anchor="middle" style="white-space:pre" >66 %</text>
<text x="1872" y="969.0" font-size="14" fill="#f0a830" font-weight="bold" text-anchor="middle" style="white-space:pre" >0.0 %</text>
<text x="1934" y="969.0" font-size="14" fill="#f0a830" font-weight="bold" text-anchor="middle" style="white-space:pre" >0.0°</text>
<rect x="8" y="995" width="284" height="279" fill="#464a49" rx="6" />
<rect x="13" y="1001" width="274" height="24" fill="#a0a3a3" />
<rect x="13" y="1025" width="274" height="245" fill="#7e8181" />
<text x="20" y="1018.0" font-size="14" fill="#111" font-weight="bold" text-anchor="start" style="white-space:pre" >Browser Content Pane</text>
<text x="20.5" y="1044.0" font-size="14" fill="#111" stroke="#111" stroke-width="0.4" font-weight="normal" text-anchor="start" style="white-space:pre" textLength="219" lengthAdjust="spacingAndGlyphs">Shows the contents of the selected</text>
<text x="20.5" y="1065.5" font-size="14" fill="#111" stroke="#111" stroke-width="0.4" font-weight="normal" text-anchor="start" style="white-space:pre" textLength="253" lengthAdjust="spacingAndGlyphs">browser label. Double-click or drag a file</text>
<text x="20.5" y="1087.0" font-size="14" fill="#111" stroke="#111" stroke-width="0.4" font-weight="normal" text-anchor="start" style="white-space:pre" textLength="222" lengthAdjust="spacingAndGlyphs">from here to load it in your Live Set.</text>
<rect x="305" y="995" width="1734" height="279" fill="#464a49" rx="6" />
<rect x="318" y="1111" width="2" height="52" fill="#222" />
<rect x="322" y="1111" width="2" height="52" fill="#222" />
<rect x="318" y="1105" width="2" height="3" fill="#222" />
<rect x="322" y="1105" width="2" height="3" fill="#222" />
<rect x="950" y="1111" width="2" height="52" fill="#222" />
<rect x="954" y="1111" width="2" height="52" fill="#222" />
<rect x="950" y="1105" width="2" height="3" fill="#222" />
<rect x="954" y="1105" width="2" height="3" fill="#222" />
<rect x="1683" y="1111" width="2" height="52" fill="#222" />
<rect x="1687" y="1111" width="2" height="52" fill="#222" />
<rect x="1683" y="1105" width="2" height="3" fill="#222" />
<rect x="1687" y="1105" width="2" height="3" fill="#222" />
<rect x="312" y="1005" width="3" height="265" fill="#8c8d8c" />
<rect x="330" y="1002" width="615" height="266" fill="#8d9090" rx="5" />
<rect x="330" y="1002" width="615" height="23" fill="#a2a5a5" rx="5" />
<circle cx="343" cy="1013.5" r="8.5" fill="#f0a830" stroke="#666" stroke-width="1" />
<text x="358" y="1018.5" font-size="14" fill="#111" font-weight="bold" text-anchor="start" style="white-space:pre" >Shaper</text>
<circle cx="886" cy="1013.5" r="8.5" fill="#a2a5a5" stroke="#333" stroke-width="1.4" />
<circle cx="909" cy="1013.5" r="8.5" fill="#a2a5a5" stroke="#333" stroke-width="1.4" />
<circle cx="932" cy="1013.5" r="8.5" fill="#a2a5a5" stroke="#333" stroke-width="1.4" />
<path d="M881,1009 h10 v9 h-10 z M879,1013.5 h2 M891,1013.5 h2" stroke="#111" stroke-width="1.3" fill="none" />
<path d="M904,1011 a5,5 0 0 1 9,1 M914,1016 a5,5 0 0 1 -9,-1" stroke="#111" stroke-width="1.5" fill="none" />
<rect x="927" y="1008.5" width="10" height="10" fill="#111" rx="1" />
<rect x="929" y="1009.5" width="6" height="3.5" fill="#ddd" />
<rect x="336" y="1031" width="402" height="232" fill="#1e1e1e" rx="4" />
<rect x="341" y="1037" width="103" height="18" fill="none" stroke="#f0a830" stroke-width="1.6" />
<text x="392.5" y="1051.0" font-size="14" fill="#f0a830" font-weight="bold" text-anchor="middle" style="white-space:pre" >Map</text>
<text x="485" y="1051.0" font-size="14" fill="#f0a830" font-weight="bold" text-anchor="middle" style="white-space:pre" >0 %</text>
<text x="541" y="1051.0" font-size="14" fill="#f0a830" font-weight="bold" text-anchor="middle" style="white-space:pre" >100 %</text>
<rect x="712" y="1038" width="16" height="16" fill="none" stroke="#f0a830" stroke-width="1.3" />
<line x1="715" y1="1042" x2="725" y2="1042" stroke="#f0a830" stroke-width="1" />
<line x1="715" y1="1044.5" x2="725" y2="1044.5" stroke="#f0a830" stroke-width="1" />
<line x1="715" y1="1047" x2="725" y2="1047" stroke="#f0a830" stroke-width="1" />
<line x1="715" y1="1049.5" x2="725" y2="1049.5" stroke="#f0a830" stroke-width="1" />
<rect x="344" y="1062" width="386" height="168" fill="none" stroke="#4a4d4d" stroke-width="1.5" />
<line x1="399.1" y1="1062" x2="399.1" y2="1230" stroke="#4a4d4d" stroke-width="1.5" />
<line x1="454.3" y1="1062" x2="454.3" y2="1230" stroke="#4a4d4d" stroke-width="1.5" />
<line x1="509.4" y1="1062" x2="509.4" y2="1230" stroke="#4a4d4d" stroke-width="1.5" />
<line x1="564.6" y1="1062" x2="564.6" y2="1230" stroke="#4a4d4d" stroke-width="1.5" />
<line x1="619.7" y1="1062" x2="619.7" y2="1230" stroke="#4a4d4d" stroke-width="1.5" />
<line x1="674.9" y1="1062" x2="674.9" y2="1230" stroke="#4a4d4d" stroke-width="1.5" />
<line x1="344" y1="1146" x2="730" y2="1146" stroke="#4a4d4d" stroke-width="1.5" />
<path d="M344.0,1230.0 L346.4,1229.9 L348.8,1229.8 L351.2,1229.4 L353.6,1228.9 L356.1,1228.3 L358.5,1227.4 L360.9,1226.4 L363.3,1225.1 L365.7,1223.7 L368.1,1222.0 L370.5,1220.2 L372.9,1218.1 L375.4,1215.8 L377.8,1213.3 L380.2,1210.6 L382.6,1207.6 L385.0,1204.4 L387.4,1201.0 L389.8,1197.3 L392.2,1193.4 L394.7,1189.3 L397.1,1184.9 L399.5,1180.3 L401.9,1175.4 L404.3,1170.3 L406.7,1164.9 L409.1,1159.2 L411.6,1153.3 L414.0,1147.2 L416.4,1140.8 L418.8,1134.1 L421.2,1127.2 L423.6,1120.0 L426.0,1112.5 L428.4,1104.8 L430.9,1096.8 L433.3,1088.5 L435.7,1079.9 L438.1,1071.1 L440.5,1062.0" stroke="#f0a830" stroke-width="2" fill="none" />
<line x1="440.5" y1="1062" x2="440.5" y2="1230" stroke="#f0a830" stroke-width="2.2" />
<circle cx="440.5" cy="1062" r="3.5" fill="#f0a830" />
<path d="M440.5,1230.0 L442.9,1229.9 L445.3,1229.8 L447.7,1229.4 L450.1,1228.9 L452.6,1228.3 L455.0,1227.4 L457.4,1226.4 L459.8,1225.1 L462.2,1223.7 L464.6,1222.0 L467.0,1220.2 L469.4,1218.1 L471.9,1215.8 L474.3,1213.3 L476.7,1210.6 L479.1,1207.6 L481.5,1204.4 L483.9,1201.0 L486.3,1197.3 L488.8,1193.4 L491.2,1189.3 L493.6,1184.9 L496.0,1180.3 L498.4,1175.4 L500.8,1170.3 L503.2,1164.9 L505.6,1159.2 L508.1,1153.3 L510.5,1147.2 L512.9,1140.8 L515.3,1134.1 L517.7,1127.2 L520.1,1120.0 L522.5,1112.5 L524.9,1104.8 L527.4,1096.8 L529.8,1088.5 L532.2,1079.9 L534.6,1071.1 L537.0,1062.0" stroke="#f0a830" stroke-width="2" fill="none" />
<line x1="537" y1="1062" x2="537" y2="1230" stroke="#f0a830" stroke-width="2.2" />
<circle cx="537" cy="1062" r="3.5" fill="#f0a830" />
<path d="M537.0,1230.0 L539.4,1229.9 L541.8,1229.8 L544.2,1229.4 L546.6,1228.9 L549.0,1228.3 L551.4,1227.4 L553.8,1226.4 L556.2,1225.1 L558.6,1223.7 L561.0,1222.0 L563.4,1220.2 L565.8,1218.1 L568.2,1215.8 L570.6,1213.3 L573.0,1210.6 L575.4,1207.6 L577.8,1204.4 L580.2,1201.0 L582.6,1197.3 L585.0,1193.4 L587.4,1189.3 L589.8,1184.9 L592.2,1180.3 L594.6,1175.4 L597.0,1170.3 L599.4,1164.9 L601.8,1159.2 L604.2,1153.3 L606.6,1147.2 L609.0,1140.8 L611.4,1134.1 L613.8,1127.2 L616.2,1120.0 L618.6,1112.5 L621.0,1104.8 L623.4,1096.8 L625.8,1088.5 L628.2,1079.9 L630.6,1071.1 L633.0,1062.0" stroke="#f0a830" stroke-width="2" fill="none" />
<line x1="633" y1="1062" x2="633" y2="1230" stroke="#f0a830" stroke-width="2.2" />
<circle cx="633" cy="1062" r="3.5" fill="#f0a830" />
<path d="M633.0,1230.0 L635.4,1229.9 L637.9,1229.8 L640.3,1229.4 L642.7,1228.9 L645.1,1228.3 L647.5,1227.4 L650.0,1226.4 L652.4,1225.1 L654.8,1223.7 L657.2,1222.0 L659.7,1220.2 L662.1,1218.1 L664.5,1215.8 L667.0,1213.3 L669.4,1210.6 L671.8,1207.6 L674.2,1204.4 L676.6,1201.0 L679.1,1197.3 L681.5,1193.4 L683.9,1189.3 L686.4,1184.9 L688.8,1180.3 L691.2,1175.4 L693.6,1170.3 L696.0,1164.9 L698.5,1159.2 L700.9,1153.3 L703.3,1147.2 L705.8,1140.8 L708.2,1134.1 L710.6,1127.2 L713.0,1120.0 L715.5,1112.5 L717.9,1104.8 L720.3,1096.8 L722.7,1088.5 L725.1,1079.9 L727.6,1071.1 L730.0,1062.0" stroke="#f0a830" stroke-width="2" fill="none" />
<circle cx="730" cy="1062" r="3.5" fill="#f0a830" />
<circle cx="344" cy="1230" r="4" fill="#1e1e1e" stroke="#f0a830" stroke-width="1.8" />
<circle cx="440.5" cy="1230" r="4" fill="#1e1e1e" stroke="#f0a830" stroke-width="1.8" />
<circle cx="537" cy="1230" r="4" fill="#1e1e1e" stroke="#f0a830" stroke-width="1.8" />
<circle cx="633" cy="1230" r="3.5" fill="#f0a830" />
<path d="M347,1242 l10,11 M357,1242 l-10,11" stroke="#9a9d9d" stroke-width="1.4" fill="none" />
<path d="M381,1241 v13 M381,1242 q10,10 27,11" stroke="#9a9d9d" stroke-width="1.4" fill="none" />
<path d="M418,1253 q17,-1 27,-11 M445,1241 v13" stroke="#9a9d9d" stroke-width="1.4" fill="none" />
<path d="M456,1254 q0,-12 8,-12 q5,0 5,6 q0,6 5,6 q8,0 8,-12" stroke="#9a9d9d" stroke-width="1.4" fill="none" />
<path d="M493,1254 q4,-2 6,-12 q2,10 4,12 q3,-2 5,-12 q2,10 4,12 q3,-2 5,-12 l2,12" stroke="#9a9d9d" stroke-width="1.4" fill="none" />
<path d="M531,1243 q5,0 7,5 q2,5 5,0 q3,-4 6,0 q3,4 6,-2 q2,-3 4,-2" stroke="#9a9d9d" stroke-width="1.4" fill="none" />
<path d="M567,1249 h10 l3,-7 l3,12 l3,-9 l3,6 h3" stroke="#9a9d9d" stroke-width="1.4" fill="none" />
<text x="618" y="1253.0" font-size="14" fill="#888" stroke="#888" stroke-width="0.4" font-weight="normal" text-anchor="start" style="white-space:pre" >Grid</text>
<text x="652" y="1253.0" font-size="14" fill="#f0a830" font-weight="bold" text-anchor="start" style="white-space:pre" >7</text>
<rect x="689" y="1239" width="42" height="18" fill="#f0a830" />
<text x="710" y="1253.0" font-size="14" fill="#111" stroke="#111" stroke-width="0.4" font-weight="normal" text-anchor="middle" style="white-space:pre" >Snap</text>
<rect x="744" y="1031" width="195" height="108" fill="#1e1e1e" rx="4" />
<line x1="744" y1="1078" x2="939" y2="1078" stroke="#555" stroke-width="1.5" />
<path d="M754.0,1111 L764.7,1048 L765.9,1111 M765.9,1111 L776.5,1048 L777.7,1111 M777.7,1111 L788.4,1048 L789.6,1111 M789.6,1111 L800.3,1048 L801.5,1111 M801.5,1111 L812.1,1048 L813.3,1111 M813.3,1111 L824.0,1048 L825.2,1111 M825.2,1111 L835.9,1048 L837.1,1111 M837.1,1111 L847.7,1048 L848.9,1111 M848.9,1111 L859.6,1048 L860.8,1111 M860.8,1111 L871.5,1048 L872.7,1111 M872.7,1111 L883.3,1048 L884.5,1111 M884.5,1111 L895.2,1048 L896.4,1111 M896.4,1111 L907.1,1048 L908.3,1111 M908.3,1111 L918.9,1048 L920.1,1111 M920.1,1111 L930.8,1048 L932.0,1111" stroke="#f0a830" stroke-width="4" fill="none" stroke-linejoin="miter"/>
<text x="751" y="1131.0" font-size="14" fill="#888" stroke="#888" stroke-width="0.4" font-weight="normal" text-anchor="start" style="white-space:pre" >Jitter</text>
<text x="791" y="1131.0" font-size="14" fill="#f0a830" font-weight="bold" text-anchor="start" style="white-space:pre" >0 %</text>
<text x="839" y="1131.0" font-size="14" fill="#888" stroke="#888" stroke-width="0.4" font-weight="normal" text-anchor="start" style="white-space:pre" >Smooth</text>
<text x="893" y="1131.0" font-size="14" fill="#f0a830" font-weight="bold" text-anchor="start" style="white-space:pre" >0 %</text>
<text x="787" y="1163.0" font-size="14" fill="#111" stroke="#111" stroke-width="0.4" font-weight="normal" text-anchor="middle" style="white-space:pre" >Rate</text>
<path d="M777.82,1199.11 A16,16 0 1 1 796.18,1199.11" stroke="#1a1a1a" stroke-width="3" fill="none" stroke-linecap="butt"/>
<path d="M777.82,1199.11 A16,16 0 0 1 777.87,1172.86" stroke="#1ab6e6" stroke-width="3" fill="none" />
<line x1="787.00" y1="1186.00" x2="777.87" y2="1172.86" stroke="#1a1a1a" stroke-width="3" />
<text x="787" y="1216.0" font-size="14" fill="#111" stroke="#111" stroke-width="0.4" font-weight="normal" text-anchor="middle" style="white-space:pre" >1/4</text>
<line x1="807" y1="1182" x2="815" y2="1182" stroke="#777" stroke-width="1" />
<rect x="825" y="1162" width="25" height="16" fill="#a6a9a9" stroke="#555" stroke-width="1" />
<text x="837.5" y="1174.0" font-size="11" fill="#111" stroke="#111" stroke-width="0.4" font-weight="normal" text-anchor="middle" style="white-space:pre" >Hz</text>
<rect x="825" y="1185" width="25" height="16" fill="#f0a830" stroke="#555" stroke-width="1" />
<text x="837.5" y="1197.0" font-size="11" fill="#111" stroke="#111" stroke-width="0.4" font-weight="normal" text-anchor="middle" style="white-space:pre" >♪</text>
<text x="896" y="1163.0" font-size="14" fill="#111" stroke="#111" stroke-width="0.4" font-weight="normal" text-anchor="middle" style="white-space:pre" >Depth</text>
<path d="M886.82,1199.11 A16,16 0 1 1 905.18,1199.11" stroke="#1a1a1a" stroke-width="3" fill="none" stroke-linecap="butt"/>
<path d="M886.82,1199.11 A16,16 0 1 1 905.18,1199.11" stroke="#1ab6e6" stroke-width="3" fill="none" />
<line x1="896.00" y1="1186.00" x2="905.18" y2="1199.11" stroke="#1a1a1a" stroke-width="3" />
<text x="896" y="1216.0" font-size="14" fill="#111" stroke="#111" stroke-width="0.4" font-weight="normal" text-anchor="middle" style="white-space:pre" >100 %</text>
<text x="772" y="1237.0" font-size="14" fill="#111" stroke="#111" stroke-width="0.4" font-weight="normal" text-anchor="middle" style="white-space:pre" >Phase</text>
<rect x="756" y="1241" width="63" height="18" fill="#c2c5c5" stroke="#555" stroke-width="1" />
<text x="785" y="1255.0" font-size="14" fill="#111" stroke="#111" stroke-width="0.4" font-weight="normal" text-anchor="middle" style="white-space:pre" >0.00 %</text>
<path d="M817,1243 L808,1250 L817,1257 Z" stroke="none" stroke-width="1" fill="#aaa" />
<circle cx="832" cy="1250" r="7" fill="none" stroke="#777" stroke-width="1.2" />
<text x="832" y="1253.6" font-size="10" fill="#777" stroke="#777" stroke-width="0.4" font-weight="normal" text-anchor="middle" style="white-space:pre" >R</text>
<text x="884" y="1237.0" font-size="14" fill="#111" stroke="#111" stroke-width="0.4" font-weight="normal" text-anchor="middle" style="white-space:pre" >Offset</text>
<rect x="865" y="1241" width="63" height="18" fill="#c2c5c5" stroke="#555" stroke-width="1" />
<text x="894" y="1255.0" font-size="14" fill="#111" stroke="#111" stroke-width="0.4" font-weight="normal" text-anchor="middle" style="white-space:pre" >0 %</text>
<path d="M926,1243 L917,1250 L926,1257 Z" stroke="none" stroke-width="1" fill="#aaa" />
<rect x="961" y="1002" width="718" height="266" fill="#8d9090" rx="5" />
<rect x="961" y="1002" width="718" height="24" fill="#a2bec6" rx="5" />
<circle cx="974" cy="1013.5" r="8.5" fill="#f0a830" stroke="#666" stroke-width="1" />
<text x="990" y="1018.5" font-size="14" fill="#111" font-weight="bold" text-anchor="start" style="white-space:pre" >Echo</text>
<rect x="1214" y="1004" width="50" height="22" fill="#1e1e1e" rx="3" />
<text x="1239" y="1019.0" font-size="14" fill="#bbb" stroke="#bbb" stroke-width="0.4" font-weight="normal" text-anchor="middle" style="white-space:pre" >Echo</text>
<rect x="1267" y="1004" width="90" height="19" fill="#7e8181" rx="3" />
<text x="1312" y="1018.5" font-size="14" fill="#111" stroke="#111" stroke-width="0.4" font-weight="normal" text-anchor="middle" style="white-space:pre" >Modulation</text>
<rect x="1361" y="1004" width="82" height="19" fill="#7e8181" rx="3" />
<text x="1402" y="1018.5" font-size="14" fill="#111" stroke="#111" stroke-width="0.4" font-weight="normal" text-anchor="middle" style="white-space:pre" >Character</text>
<circle cx="1642" cy="1013.5" r="8.5" fill="#a2bec6" stroke="#333" stroke-width="1.4" />
<path d="M1637,1011 a5,5 0 0 1 9,1 M1647,1016 a5,5 0 0 1 -9,-1" stroke="#111" stroke-width="1.5" fill="none" />
<circle cx="1665" cy="1013.5" r="8.5" fill="#a2bec6" stroke="#333" stroke-width="1.4" />
<rect x="1660" y="1008.5" width="10" height="10" fill="#111" rx="1" />
<rect x="1662" y="1009.5" width="6" height="3.5" fill="#ddd" />
<rect x="964" y="1026" width="167" height="240" fill="#7e8181" rx="3" />
<line x1="1047" y1="1029" x2="1047" y2="1053" stroke="#666" stroke-width="1.5" />
<line x1="1047" y1="1077" x2="1047" y2="1185" stroke="#666" stroke-width="1.5" />
<text x="1001" y="1041.0" font-size="14" fill="#111" stroke="#111" stroke-width="0.4" font-weight="normal" text-anchor="middle" style="white-space:pre" >Left</text>
<path d="M991.82,1077.11 A16,16 0 1 1 1010.18,1077.11" stroke="#1a1a1a" stroke-width="3" fill="none" stroke-linecap="butt"/>
<path d="M991.82,1077.11 A16,16 0 0 1 1001.00,1048.00" stroke="#1ab6e6" stroke-width="3" fill="none" />
<line x1="1001.00" y1="1064.00" x2="1001.00" y2="1048.00" stroke="#1a1a1a" stroke-width="3" />
<text x="1001" y="1094.0" font-size="14" fill="#111" stroke="#111" stroke-width="0.4" font-weight="normal" text-anchor="middle" style="white-space:pre" >1/8</text>
<text x="1092" y="1041.0" font-size="14" fill="#111" stroke="#111" stroke-width="0.4" font-weight="normal" text-anchor="middle" style="white-space:pre" >Right</text>
<path d="M1082.82,1077.11 A16,16 0 1 1 1101.18,1077.11" stroke="#1a1a1a" stroke-width="3" fill="none" stroke-linecap="butt"/>
<path d="M1082.82,1077.11 A16,16 0 0 1 1092.00,1048.00" stroke="#1ab6e6" stroke-width="3" fill="none" />
<line x1="1092.00" y1="1064.00" x2="1092.00" y2="1048.00" stroke="#1a1a1a" stroke-width="3" />
<text x="1092" y="1094.0" font-size="14" fill="#111" stroke="#111" stroke-width="0.4" font-weight="normal" text-anchor="middle" style="white-space:pre" >1/8</text>
<rect x="1035" y="1057" width="25" height="17" fill="#f0a830" stroke="#555" stroke-width="1" />
<path d="M1041,1065.5 h13 M1043,1062 h9 v7 h-9 z" stroke="#111" stroke-width="1.4" fill="none" />
<rect x="968" y="1115" width="65" height="17" fill="#f0a830" stroke="#555" stroke-width="1" />
<text x="1001" y="1128.5" font-size="14" fill="#111" stroke="#111" stroke-width="0.4" font-weight="normal" text-anchor="middle" style="white-space:pre" >Sync</text>
<rect x="968" y="1138" width="65" height="17" fill="#a6a9a9" stroke="#555" stroke-width="1" />
<text x="973" y="1151.5" font-size="14" fill="#111" stroke="#111" stroke-width="0.4" font-weight="normal" text-anchor="start" style="white-space:pre" >Dotted</text>
<path d="M1017,1142 L1027,1142 L1022,1150 Z" stroke="none" stroke-width="1" fill="#111" />
<rect x="968" y="1161" width="65" height="17" fill="#c4c5c4" stroke="#777" stroke-width="1" />
<text x="999" y="1174.5" font-size="14" fill="#333" stroke="#333" stroke-width="0.4" font-weight="normal" text-anchor="middle" style="white-space:pre" >0.0 %</text>
<path d="M1029,1163 L1021,1169.5 L1029,1176 Z" stroke="none" stroke-width="1" fill="#aaa" />
<rect x="1060" y="1115" width="65" height="17" fill="#f0a830" stroke="#555" stroke-width="1" />
<text x="1093" y="1128.5" font-size="14" fill="#111" stroke="#111" stroke-width="0.4" font-weight="normal" text-anchor="middle" style="white-space:pre" >Sync</text>
<rect x="1060" y="1138" width="65" height="17" fill="#a6a9a9" stroke="#555" stroke-width="1" />
<text x="1065" y="1151.5" font-size="14" fill="#111" stroke="#111" stroke-width="0.4" font-weight="normal" text-anchor="start" style="white-space:pre" >Dotted</text>
<path d="M1109,1142 L1119,1142 L1114,1150 Z" stroke="none" stroke-width="1" fill="#111" />
<rect x="1060" y="1161" width="65" height="17" fill="#c4c5c4" stroke="#777" stroke-width="1" />
<text x="1091" y="1174.5" font-size="14" fill="#333" stroke="#333" stroke-width="0.4" font-weight="normal" text-anchor="middle" style="white-space:pre" >0.0 %</text>
<path d="M1121,1163 L1113,1169.5 L1121,1176 Z" stroke="none" stroke-width="1" fill="#aaa" />
<text x="1001" y="1208.0" font-size="14" fill="#111" stroke="#111" stroke-width="0.4" font-weight="normal" text-anchor="middle" style="white-space:pre" >Input</text>
<path d="M991.82,1243.11 A16,16 0 1 1 1010.18,1243.11" stroke="#1a1a1a" stroke-width="3" fill="none" stroke-linecap="butt"/>
<path d="M991.82,1243.11 A16,16 0 0 1 1001.00,1214.00" stroke="#1ab6e6" stroke-width="3" fill="none" />
<line x1="1001.00" y1="1230.00" x2="1001.00" y2="1214.00" stroke="#1a1a1a" stroke-width="3" />
<text x="1001" y="1260.0" font-size="14" fill="#111" stroke="#111" stroke-width="0.4" font-weight="normal" text-anchor="middle" style="white-space:pre" >0.0 dB</text>
<text x="1093" y="1208.0" font-size="14" fill="#111" stroke="#111" stroke-width="0.4" font-weight="normal" text-anchor="middle" style="white-space:pre" >Feedback</text>
<path d="M1083.82,1243.11 A16,16 0 1 1 1102.18,1243.11" stroke="#1a1a1a" stroke-width="3" fill="none" stroke-linecap="butt"/>
<path d="M1083.82,1243.11 A16,16 0 0 1 1079.43,1221.52" stroke="#1ab6e6" stroke-width="3" fill="none" />
<line x1="1093.00" y1="1230.00" x2="1079.43" y2="1221.52" stroke="#1a1a1a" stroke-width="3" />
<text x="1093" y="1260.0" font-size="14" fill="#111" stroke="#111" stroke-width="0.4" font-weight="normal" text-anchor="middle" style="white-space:pre" >50 %</text>
<rect x="1038" y="1209" width="18" height="17" fill="#a6a9a9" stroke="#555" stroke-width="1" />
<text x="1047" y="1222.2" font-size="13" fill="#111" stroke="#111" stroke-width="0.4" font-weight="normal" text-anchor="middle" style="white-space:pre" >D</text>
<rect x="1038" y="1232" width="18" height="17" fill="#a6a9a9" stroke="#555" stroke-width="1" />
<text x="1047" y="1245.2" font-size="13" fill="#111" stroke="#111" stroke-width="0.4" font-weight="normal" text-anchor="middle" style="white-space:pre" >Ø</text>
<line x1="1023" y1="1217" x2="1036" y2="1217" stroke="#666" stroke-width="1" />
<line x1="1058" y1="1240" x2="1070" y2="1240" stroke="#666" stroke-width="1" />
<rect x="1134" y="1025" width="382" height="241" fill="#1e1e1e" rx="3" />
<path d="M1145,1238 A180,180 0 0 1 1505,1238" stroke="#f0a830" stroke-width="2.2" fill="none" stroke-opacity="1.0"/>
<path d="M1194,1238 A131,131 0 0 1 1456,1238" stroke="#f0a830" stroke-width="2.2" fill="none" stroke-opacity="1.0"/>
<path d="M1222,1238 A103,103 0 0 1 1428,1238" stroke="#f0a830" stroke-width="2.0" fill="none" stroke-opacity="1.0"/>
<path d="M1240,1238 A85,85 0 0 1 1410,1238" stroke="#f0a830" stroke-width="1.8" fill="none" stroke-opacity="0.85"/>
<path d="M1250,1238 A75,75 0 0 1 1400,1238" stroke="#f0a830" stroke-width="1.5" fill="none" stroke-opacity="0.7"/>
<path d="M1257,1238 A68,68 0 0 1 1393,1238" stroke="#f0a830" stroke-width="1.3" fill="none" stroke-opacity="0.55"/>
<path d="M1263,1238 A62,62 0 0 1 1387,1238" stroke="#f0a830" stroke-width="1.2" fill="none" stroke-opacity="0.45"/>
<path d="M1268,1238 A57,57 0 0 1 1382,1238" stroke="#f0a830" stroke-width="1.1" fill="none" stroke-opacity="0.38"/>
<path d="M1272,1238 A53,53 0 0 1 1378,1238" stroke="#f0a830" stroke-width="1.0" fill="none" stroke-opacity="0.3"/>
<path d="M1275,1238 A50,50 0 0 1 1375,1238" stroke="#f0a830" stroke-width="1.0" fill="none" stroke-opacity="0.25"/>
<path d="M1278,1238 A47,47 0 0 1 1372,1238" stroke="#f0a830" stroke-width="1.0" fill="none" stroke-opacity="0.2"/>
<circle cx="1325" cy="1058" r="3.5" fill="#fff" />
<circle cx="1325" cy="1094" r="2.5" fill="#fff" />
<circle cx="1325" cy="1118" r="2.2" fill="#fff" />
<circle cx="1325" cy="1135" r="2" fill="#fff" />
<circle cx="1325" cy="1148" r="1.8" fill="#fff" />
<circle cx="1325" cy="1158" r="1.6" fill="#fff" />
<circle cx="1325" cy="1166" r="1.4" fill="#fff" />
<circle cx="1325" cy="1173" r="1.2" fill="#fff" />
<line x1="1134" y1="1239" x2="1516" y2="1239" stroke="#3a3a3a" stroke-width="1.5" />
<path d="M1143,1246 L1153,1253 L1143,1260 Z" stroke="none" stroke-width="1" fill="#777" />
<rect x="1162" y="1246" width="13" height="14" fill="#1ab4dc" />
<text x="1181" y="1258.0" font-size="14" fill="#999" stroke="#999" stroke-width="0.4" font-weight="normal" text-anchor="start" style="white-space:pre" >Filter HP</text>
<text x="1241" y="1258.0" font-size="14" fill="#1ab4dc" font-weight="bold" text-anchor="start" style="white-space:pre" >50.0 Hz</text>
<text x="1303" y="1258.0" font-size="14" fill="#999" stroke="#999" stroke-width="0.4" font-weight="normal" text-anchor="start" style="white-space:pre" >Res</text>
<text x="1330" y="1258.0" font-size="14" fill="#1ab4dc" font-weight="bold" text-anchor="start" style="white-space:pre" >0.00</text>
<text x="1369" y="1258.0" font-size="14" fill="#999" stroke="#999" stroke-width="0.4" font-weight="normal" text-anchor="start" style="white-space:pre" >LP</text>
<text x="1389" y="1258.0" font-size="14" fill="#1ab4dc" font-weight="bold" text-anchor="start" style="white-space:pre" >5.00 kHz</text>
<text x="1452" y="1258.0" font-size="14" fill="#999" stroke="#999" stroke-width="0.4" font-weight="normal" text-anchor="start" style="white-space:pre" >Res</text>
<text x="1479" y="1258.0" font-size="14" fill="#1ab4dc" font-weight="bold" text-anchor="start" style="white-space:pre" >0.00</text>
<rect x="1519" y="1026" width="158" height="240" fill="#7e8181" rx="3" />
<text x="1562" y="1041.0" font-size="14" fill="#111" stroke="#111" stroke-width="0.4" font-weight="normal" text-anchor="middle" style="white-space:pre" >Reverb</text>
<path d="M1552.82,1077.11 A16,16 0 1 1 1571.18,1077.11" stroke="#1a1a1a" stroke-width="3" fill="none" stroke-linecap="butt"/>
<line x1="1562.00" y1="1064.00" x2="1552.82" y2="1077.11" stroke="#1a1a1a" stroke-width="3" />
<text x="1562" y="1093.0" font-size="14" fill="#111" stroke="#111" stroke-width="0.4" font-weight="normal" text-anchor="middle" style="white-space:pre" >0.0 %</text>
<text x="1640" y="1041.0" font-size="14" fill="#111" stroke="#111" stroke-width="0.4" font-weight="normal" text-anchor="middle" style="white-space:pre" >Stereo</text>
<path d="M1630.82,1077.11 A16,16 0 1 1 1649.18,1077.11" stroke="#1a1a1a" stroke-width="3" fill="none" stroke-linecap="butt"/>
<path d="M1630.82,1077.11 A16,16 0 0 1 1640.00,1048.00" stroke="#1ab6e6" stroke-width="3" fill="none" />
<line x1="1640.00" y1="1064.00" x2="1640.00" y2="1048.00" stroke="#1a1a1a" stroke-width="3" />
<text x="1640" y="1093.0" font-size="14" fill="#111" stroke="#111" stroke-width="0.4" font-weight="normal" text-anchor="middle" style="white-space:pre" >100 %</text>
<rect x="1524" y="1116" width="75" height="17" fill="#c2c5c5" stroke="#555" stroke-width="1" />
<text x="1528" y="1129.5" font-size="14" fill="#111" stroke="#111" stroke-width="0.4" font-weight="normal" text-anchor="start" style="white-space:pre" >Post</text>
<path d="M1585,1120 L1595,1120 L1590,1128 Z" stroke="none" stroke-width="1" fill="#111" />
<text x="1524" y="1152.0" font-size="14" fill="#111" stroke="#111" stroke-width="0.4" font-weight="normal" text-anchor="start" style="white-space:pre" >Decay</text>
<rect x="1524" y="1157" width="75" height="17" fill="#c2c5c5" stroke="#555" stroke-width="1" />
<rect x="1525" y="1158" width="37" height="15" fill="#1ab4dc" />
<text x="1561" y="1170.5" font-size="14" fill="#111" stroke="#111" stroke-width="0.4" font-weight="normal" text-anchor="middle" style="white-space:pre" >50 %</text>
<text x="1640" y="1124.0" font-size="14" fill="#111" stroke="#111" stroke-width="0.4" font-weight="normal" text-anchor="middle" style="white-space:pre" >Output</text>
<path d="M1630.82,1159.11 A16,16 0 1 1 1649.18,1159.11" stroke="#1a1a1a" stroke-width="3" fill="none" stroke-linecap="butt"/>
<path d="M1630.82,1159.11 A16,16 0 0 1 1640.00,1130.00" stroke="#1ab6e6" stroke-width="3" fill="none" />
<line x1="1640.00" y1="1146.00" x2="1640.00" y2="1130.00" stroke="#1a1a1a" stroke-width="3" />
<text x="1640" y="1175.0" font-size="14" fill="#111" stroke="#111" stroke-width="0.4" font-weight="normal" text-anchor="middle" style="white-space:pre" >0.0 dB</text>
<rect x="1524" y="1198" width="75" height="17" fill="#f0a830" stroke="#555" stroke-width="1" />
<text x="1561.5" y="1211.5" font-size="14" fill="#111" stroke="#111" stroke-width="0.4" font-weight="normal" text-anchor="middle" style="white-space:pre" >Stereo</text>
<rect x="1524" y="1221" width="75" height="17" fill="#b9bab9" stroke="#555" stroke-width="1" />
<text x="1561.5" y="1234.5" font-size="14" fill="#111" stroke="#111" stroke-width="0.4" font-weight="normal" text-anchor="middle" style="white-space:pre" >Ping Pong</text>
<rect x="1524" y="1244" width="75" height="17" fill="#b9bab9" stroke="#555" stroke-width="1" />
<text x="1561.5" y="1257.5" font-size="14" fill="#111" stroke="#111" stroke-width="0.4" font-weight="normal" text-anchor="middle" style="white-space:pre" >Mid/Side</text>
<text x="1640" y="1208.0" font-size="14" fill="#111" stroke="#111" stroke-width="0.4" font-weight="normal" text-anchor="middle" style="white-space:pre" >Dry/Wet</text>
<path d="M1630.82,1243.11 A16,16 0 1 1 1649.18,1243.11" stroke="#1a1a1a" stroke-width="3" fill="none" stroke-linecap="butt"/>
<path d="M1630.82,1243.11 A16,16 0 1 1 1655.48,1225.97" stroke="#1ab6e6" stroke-width="3" fill="none" />
<line x1="1640.00" y1="1230.00" x2="1655.48" y2="1225.97" stroke="#1a1a1a" stroke-width="3" />
<text x="1640" y="1260.0" font-size="14" fill="#111" stroke="#111" stroke-width="0.4" font-weight="normal" text-anchor="middle" style="white-space:pre" >70 %</text>
<rect x="1695" y="1002" width="342" height="266" fill="#8d9090" rx="5" />
<rect x="1695" y="1002" width="342" height="23" fill="#a2a5a5" rx="5" />
<circle cx="1708" cy="1013.5" r="8.5" fill="#f0a830" stroke="#666" stroke-width="1" />
<text x="1724" y="1018.5" font-size="14" fill="#111" font-weight="bold" text-anchor="start" style="white-space:pre" >Drum Buss</text>
<circle cx="2033" cy="1013.5" r="8.5" fill="#a2a5a5" stroke="#333" stroke-width="1.4" />
<line x1="1777" y1="1036" x2="1777" y2="1260" stroke="#777" stroke-width="1.5" />
<line x1="1859" y1="1036" x2="1859" y2="1260" stroke="#777" stroke-width="1.5" />
<text x="1736" y="1046.0" font-size="14" fill="#111" stroke="#111" stroke-width="0.4" font-weight="normal" text-anchor="middle" style="white-space:pre" >Drive</text>
<path d="M1726.82,1081.11 A16,16 0 1 1 1745.18,1081.11" stroke="#1a1a1a" stroke-width="3" fill="none" stroke-linecap="butt"/>
<path d="M1726.82,1081.11 A16,16 0 0 1 1720.02,1068.78" stroke="#1ab6e6" stroke-width="3" fill="none" />
<line x1="1736.00" y1="1068.00" x2="1720.02" y2="1068.78" stroke="#1a1a1a" stroke-width="3" />
<text x="1736" y="1097.0" font-size="14" fill="#111" stroke="#111" stroke-width="0.4" font-weight="normal" text-anchor="middle" style="white-space:pre" >20 %</text>
<rect x="1703" y="1109" width="66" height="17" fill="#f0a830" stroke="#555" stroke-width="1" />
<text x="1736" y="1122.5" font-size="14" fill="#111" stroke="#111" stroke-width="0.4" font-weight="normal" text-anchor="middle" style="white-space:pre" >Soft</text>
<rect x="1703" y="1132" width="66" height="17" fill="#b9bab9" stroke="#555" stroke-width="1" />
<text x="1736" y="1145.5" font-size="14" fill="#111" stroke="#111" stroke-width="0.4" font-weight="normal" text-anchor="middle" style="white-space:pre" >Medium</text>
<rect x="1703" y="1155" width="66" height="17" fill="#b9bab9" stroke="#555" stroke-width="1" />
<text x="1736" y="1168.5" font-size="14" fill="#111" stroke="#111" stroke-width="0.4" font-weight="normal" text-anchor="middle" style="white-space:pre" >Hard</text>
<text x="1703" y="1197.0" font-size="14" fill="#111" stroke="#111" stroke-width="0.4" font-weight="normal" text-anchor="start" style="white-space:pre" >Trim</text>
<rect x="1703" y="1205" width="66" height="17" fill="#1ab4dc" stroke="#555" stroke-width="1" />
<text x="1736" y="1218.5" font-size="14" fill="#111" stroke="#111" stroke-width="0.4" font-weight="normal" text-anchor="middle" style="white-space:pre" >0.00 dB</text>
<rect x="1703" y="1242" width="66" height="17" fill="#a6a9a9" stroke="#555" stroke-width="1" />
<text x="1736" y="1255.5" font-size="14" fill="#111" stroke="#111" stroke-width="0.4" font-weight="normal" text-anchor="middle" style="white-space:pre" >Comp</text>
<text x="1819" y="1046.0" font-size="14" fill="#111" stroke="#111" stroke-width="0.4" font-weight="normal" text-anchor="middle" style="white-space:pre" >Crunch</text>
<path d="M1809.82,1081.11 A16,16 0 1 1 1828.18,1081.11" stroke="#1a1a1a" stroke-width="3" fill="none" stroke-linecap="butt"/>
<line x1="1819.00" y1="1068.00" x2="1809.82" y2="1081.11" stroke="#1a1a1a" stroke-width="3" />
<text x="1819" y="1097.0" font-size="14" fill="#111" stroke="#111" stroke-width="0.4" font-weight="normal" text-anchor="middle" style="white-space:pre" >0.0 %</text>
<text x="1819" y="1122.0" font-size="14" fill="#111" stroke="#111" stroke-width="0.4" font-weight="normal" text-anchor="middle" style="white-space:pre" >Damp</text>
<path d="M1809.82,1156.11 A16,16 0 1 1 1828.18,1156.11" stroke="#1a1a1a" stroke-width="3" fill="none" stroke-linecap="butt"/>
<path d="M1809.82,1156.11 A16,16 0 1 1 1834.81,1140.55" stroke="#1ab6e6" stroke-width="3" fill="none" />
<line x1="1819.00" y1="1143.00" x2="1834.81" y2="1140.55" stroke="#1a1a1a" stroke-width="3" />
<text x="1819" y="1172.0" font-size="14" fill="#111" stroke="#111" stroke-width="0.4" font-weight="normal" text-anchor="middle" style="white-space:pre" >9.20 kHz</text>
<text x="1819" y="1197.0" font-size="14" fill="#111" stroke="#111" stroke-width="0.4" font-weight="normal" text-anchor="middle" style="white-space:pre" >Transients</text>
<path d="M1809.82,1242.11 A16,16 0 0 1 1812.24,1214.50" stroke="#1a1a1a" stroke-width="3" fill="none" />
<path d="M1825.76,1214.50 A16,16 0 0 1 1828.18,1242.11" stroke="#1a1a1a" stroke-width="3" fill="none" />
<line x1="1819" y1="1212" x2="1819" y2="1230" stroke="#1a1a1a" stroke-width="2.6" />
<path d="M1814,1205 L1824,1205 L1819,1210 Z" stroke="none" stroke-width="1" fill="#1a1a1a" />
<text x="1819" y="1260.0" font-size="14" fill="#111" stroke="#111" stroke-width="0.4" font-weight="normal" text-anchor="middle" style="white-space:pre" >0.00</text>
<text x="1900" y="1046.0" font-size="14" fill="#111" stroke="#111" stroke-width="0.4" font-weight="normal" text-anchor="middle" style="white-space:pre" >Boom</text>
<path d="M1890.82,1081.11 A16,16 0 1 1 1909.18,1081.11" stroke="#1a1a1a" stroke-width="3" fill="none" stroke-linecap="butt"/>
<line x1="1900.00" y1="1068.00" x2="1890.82" y2="1081.11" stroke="#1a1a1a" stroke-width="3" />
<text x="1900" y="1097.0" font-size="14" fill="#111" stroke="#111" stroke-width="0.4" font-weight="normal" text-anchor="middle" style="white-space:pre" >0.0 %</text>
<text x="1900" y="1122.0" font-size="14" fill="#111" stroke="#111" stroke-width="0.4" font-weight="normal" text-anchor="middle" style="white-space:pre" >Freq</text>
<path d="M1890.82,1156.11 A16,16 0 1 1 1909.18,1156.11" stroke="#1a1a1a" stroke-width="3" fill="none" stroke-linecap="butt"/>
<path d="M1890.82,1156.11 A16,16 0 0 1 1895.99,1127.51" stroke="#1ab6e6" stroke-width="3" fill="none" />
<line x1="1900.00" y1="1143.00" x2="1895.99" y2="1127.51" stroke="#1a1a1a" stroke-width="3" />
<text x="1900" y="1172.0" font-size="14" fill="#111" stroke="#111" stroke-width="0.4" font-weight="normal" text-anchor="middle" style="white-space:pre" >50.0 Hz</text>
<text x="1867" y="1197.0" font-size="14" fill="#111" stroke="#111" stroke-width="0.4" font-weight="normal" text-anchor="start" style="white-space:pre" >Decay</text>
<rect x="1867" y="1205" width="65" height="17" fill="#1ab4dc" stroke="#555" stroke-width="1" />
<text x="1899.5" y="1218.5" font-size="14" fill="#111" stroke="#111" stroke-width="0.4" font-weight="normal" text-anchor="middle" style="white-space:pre" >100 %</text>
<rect x="1867" y="1241" width="42" height="19" fill="#b9bab9" rx="9.5" stroke="#555" stroke-width="1" />
<text x="1888" y="1255.2" font-size="13" fill="#111" stroke="#111" stroke-width="0.4" font-weight="normal" text-anchor="middle" style="white-space:pre" >G0+</text>
<circle cx="1924" cy="1250" r="8" fill="#a6a9a9" stroke="#555" stroke-width="1" />
<path d="M1919,1253 v-3 a5,5 0 0 1 10,0 v3" stroke="#111" stroke-width="1.4" fill="none" />
<rect x="1940" y="1031" width="97" height="232" fill="#1e1e1e" rx="4" />
<text x="1976" y="1049.7" font-size="13" fill="#888" stroke="#888" stroke-width="0.4" font-weight="normal" text-anchor="middle" style="white-space:pre" >Bass</text>
<text x="2018" y="1049.7" font-size="13" fill="#888" stroke="#888" stroke-width="0.4" font-weight="normal" text-anchor="start" style="white-space:pre" >Ou</text>
<rect x="1967" y="1056" width="17" height="155" fill="none" stroke="#444" stroke-width="1.5" />
<line x1="1967" y1="1068" x2="1984" y2="1068" stroke="#444" stroke-width="1.5" />
<rect x="2022" y="1056" width="17" height="155" fill="none" stroke="#444" stroke-width="1.5" />
<text x="1975" y="1226.7" font-size="13" fill="#999" stroke="#999" stroke-width="0.4" font-weight="normal" text-anchor="middle" style="white-space:pre" >0.0 %</text>
<text x="2008" y="1226.7" font-size="13" fill="#999" stroke="#999" stroke-width="0.4" font-weight="normal" text-anchor="start" style="white-space:pre" >0.00</text>
<line x1="1940" y1="1233" x2="2037" y2="1233" stroke="#3a3a3a" stroke-width="1.5" />
<text x="1951" y="1255.0" font-size="14" fill="#999" stroke="#999" stroke-width="0.4" font-weight="normal" text-anchor="start" style="white-space:pre" >Dry / Wet</text>
<text x="2019" y="1255.0" font-size="14" fill="#1ab4dc" font-weight="bold" text-anchor="start" style="white-space:pre" >10</text>
<rect x="2037" y="995" width="11" height="279" fill="#636665" />
<rect x="2037" y="995" width="2" height="279" fill="#464a49" />
<circle cx="21" cy="1301" r="13" fill="#555857" />
<path d="M14,1308 L21,1294 L28,1308 Z" stroke="none" stroke-width="1" fill="#8a8b8a" />
<rect x="43" y="1284" width="1237" height="37" fill="#464a49" rx="4" />
<rect x="48" y="1288" width="1227" height="29" fill="#7f8282" />
<rect x="1286" y="1284" width="301" height="37" fill="#464a49" rx="4" />
<rect x="1290" y="1288" width="293" height="29" fill="#7f8282" />
<rect x="1595" y="1276" width="406" height="42" fill="#5a5c5b" rx="5" />
<text x="1601" y="1308.0" font-size="14" fill="#111" stroke="#111" stroke-width="0.4" font-weight="normal" text-anchor="start" style="white-space:pre" >6 Crossover Syn Bass</text>
<rect x="1742" y="1291" width="124" height="22" fill="#9a9d9d" />
<rect x="1772" y="1292" width="30" height="20" fill="#2b2c2c" />
<rect x="1803" y="1292" width="20" height="20" fill="#4a4d4d" />
<rect x="1806" y="1301" width="15" height="10" fill="#9a9d9d" />
<rect x="1826" y="1292" width="32" height="20" fill="#2b2c2c" />
<rect x="1746" y="1295" width="20" height="2" fill="#777a7a" />
<rect x="1746" y="1300" width="20" height="2" fill="#777a7a" />
<rect x="1746" y="1305" width="20" height="2" fill="#777a7a" />
<rect x="1768" y="1296" width="3" height="3" fill="#f0a830" />
<rect x="1860" y="1294" width="4" height="3" fill="#1ab4dc" />
<rect x="1860" y="1302" width="4" height="3" fill="#1ab4dc" />
<rect x="1868" y="1288" width="117" height="30" fill="#111" />
<rect x="1870" y="1290" width="113" height="26" fill="#9a9d9d" />
<text x="1893" y="1308.0" font-size="11" fill="#111" stroke="#111" stroke-width="0.4" font-weight="normal" text-anchor="middle" style="white-space:pre" >Shaper</text>
<rect x="1930" y="1291" width="26" height="24" fill="#2b2c2c" />
<path d="M1933,1314 a10,10 0 0 1 20,0" stroke="#6a5a30" stroke-width="1" fill="none" />
<rect x="1920" y="1296" width="3" height="3" fill="#f0a830" />
<rect x="1962" y="1302" width="3" height="3" fill="#1ab4dc" />
<rect x="1986" y="1291" width="10" height="23" fill="#2b2c2c" />
<circle cx="2026" cy="1301" r="13" fill="#555857" />
<path d="M2019,1308 L2026,1294 L2033,1308 Z" stroke="none" stroke-width="1" fill="#8a8b8a" />
<rect x="0" y="0" width="2048" height="1374" fill="#ffffff"/>
<rect x="0" y="44" width="2048" height="1282" fill="#636665" />
<rect x="7" y="56" width="62" height="25" fill="#9ea0a0" />
<text x="38.0" y="73.5" font-size="14" fill="#111" stroke="#111" stroke-width="0.4" font-weight="normal" text-anchor="middle" style="white-space:pre" >Link</text>
<rect x="71" y="56" width="38" height="25" fill="#9ea0a0" />
<text x="90.0" y="73.5" font-size="14" fill="#111" stroke="#111" stroke-width="0.4" font-weight="normal" text-anchor="middle" style="white-space:pre" >Tap</text>
<rect x="112" y="56" width="59" height="25" fill="#9ea0a0" />
<text x="141.5" y="73.5" font-size="14" fill="#111" stroke="#111" stroke-width="0.4" font-weight="normal" text-anchor="middle" style="white-space:pre" >100.00</text>
<rect x="174" y="56" width="25" height="25" fill="#9ea0a0" />
<rect x="202" y="56" width="24" height="25" fill="#9ea0a0" />
<rect x="178" y="61" width="2" height="15" fill="#111" />
<rect x="183" y="61" width="2" height="15" fill="#111" />
<rect x="188" y="61" width="2" height="15" fill="#111" />
<rect x="194" y="61" width="3" height="15" fill="#111" />
<rect x="206" y="61" width="2" height="15" fill="#111" />
<rect x="211" y="61" width="2" height="15" fill="#111" />
<rect x="216" y="61" width="2" height="15" fill="#111" />
<rect x="220" y="61" width="3" height="15" fill="#111" />
<rect x="229" y="56" width="62" height="25" fill="#9ea0a0" />
<text x="242.5" y="73.5" font-size="14" fill="#111" stroke="#111" stroke-width="0.4" font-weight="normal" text-anchor="middle" style="white-space:pre" >4</text>
<text x="259" y="73.5" font-size="14" fill="#111" stroke="#111" stroke-width="0.4" font-weight="normal" text-anchor="middle" style="white-space:pre" >/</text>
<text x="276.5" y="73.5" font-size="14" fill="#111" stroke="#111" stroke-width="0.4" font-weight="normal" text-anchor="middle" style="white-space:pre" >4</text>
<rect x="294" y="56" width="58" height="25" fill="#9ea0a0" />
<circle cx="307" cy="68.5" r="5" fill="none" stroke="#111" stroke-width="1.6" />
<circle cx="320" cy="68.5" r="5" fill="#111" />
<path d="M339,66 L347,66 L343,71 Z" stroke="none" stroke-width="1" fill="#111" />
<rect x="354" y="56" width="65" height="25" fill="#9ea0a0" />
<text x="361" y="73.5" font-size="14" fill="#111" stroke="#111" stroke-width="0.4" font-weight="normal" text-anchor="start" style="white-space:pre" >1 Bar</text>
<path d="M406,66 L414,66 L410,71 Z" stroke="none" stroke-width="1" fill="#111" />
<rect x="627" y="56" width="30" height="25" fill="#9ea0a0" />
<path d="M631,68.5 L645,68.5 M640,64 L645,68.5 L640,73" stroke="#111" stroke-width="2" fill="none" />
<rect x="648" y="68" width="1.5" height="1.5" fill="#111" />
<rect x="651" y="68" width="1.5" height="1.5" fill="#111" />
<rect x="654" y="68" width="1.5" height="1.5" fill="#111" />
<rect x="660" y="56" width="117" height="25" fill="#9ea0a0" />
<text x="698" y="73.5" font-size="14" fill="#111" stroke="#111" stroke-width="0.4" font-weight="normal" text-anchor="middle" style="white-space:pre" >6</text>
<text x="715" y="73.5" font-size="14" fill="#111" stroke="#111" stroke-width="0.4" font-weight="normal" text-anchor="middle" style="white-space:pre" >.</text>
<text x="733" y="73.5" font-size="14" fill="#111" stroke="#111" stroke-width="0.4" font-weight="normal" text-anchor="middle" style="white-space:pre" >3</text>
<text x="750" y="73.5" font-size="14" fill="#111" stroke="#111" stroke-width="0.4" font-weight="normal" text-anchor="middle" style="white-space:pre" >.</text>
<text x="767" y="73.5" font-size="14" fill="#111" stroke="#111" stroke-width="0.4" font-weight="normal" text-anchor="middle" style="white-space:pre" >3</text>
<path d="M805,58 L823,68.5 L805,79 Z" stroke="none" stroke-width="1" fill="#1a9a4a" />
<rect x="838" y="59" width="19" height="19" fill="#111" />
<circle cx="880" cy="68.5" r="9.5" fill="#111" />
<rect x="918" y="56" width="25" height="25" fill="#9ea0a0" />
<path d="M923,68.5 L938,68.5 M930.5,61 L930.5,76" stroke="#111" stroke-width="1.8" fill="none" />
<rect x="945" y="56" width="25" height="25" fill="#9ea0a0" />
<circle cx="952" cy="73" r="3.5" fill="none" stroke="#111" stroke-width="1.6" />
<circle cx="963" cy="63" r="3.5" fill="none" stroke="#111" stroke-width="1.6" />
<line x1="955" y1="70" x2="960" y2="66" stroke="#111" stroke-width="1.6" />
<rect x="972" y="56" width="25" height="25" fill="#9ea0a0" />
<path d="M978,68.5 L991,68.5 M983,64 L978,68.5 L983,73" stroke="#6f6f6f" stroke-width="1.8" fill="none" />
<rect x="999" y="56" width="25" height="25" fill="#9ea0a0" />
<path d="M1005,65 L1005,62 L1008,62 M1015,62 L1018,62 L1018,65 M1018,72 L1018,75 L1015,75 M1008,75 L1005,75 L1005,72" stroke="#555" stroke-width="1.4" fill="none" />
<rect x="1027" y="56" width="24" height="25" fill="#9ea0a0" />
<circle cx="1039" cy="68.5" r="6.5" fill="none" stroke="#111" stroke-width="1.8" />
<rect x="1084" y="56" width="117" height="25" fill="#9ea0a0" />
<text x="1122" y="73.5" font-size="14" fill="#111" stroke="#111" stroke-width="0.4" font-weight="normal" text-anchor="middle" style="white-space:pre" >1</text>
<text x="1139" y="73.5" font-size="14" fill="#111" stroke="#111" stroke-width="0.4" font-weight="normal" text-anchor="middle" style="white-space:pre" >.</text>
<text x="1156" y="73.5" font-size="14" fill="#111" stroke="#111" stroke-width="0.4" font-weight="normal" text-anchor="middle" style="white-space:pre" >1</text>
<text x="1174" y="73.5" font-size="14" fill="#111" stroke="#111" stroke-width="0.4" font-weight="normal" text-anchor="middle" style="white-space:pre" >.</text>
<text x="1191" y="73.5" font-size="14" fill="#111" stroke="#111" stroke-width="0.4" font-weight="normal" text-anchor="middle" style="white-space:pre" >1</text>
<rect x="1204" y="56" width="30" height="25" fill="#9ea0a0" />
<path d="M1209,62 L1215,62 L1225,74 L1230,74" stroke="#111" stroke-width="1.8" fill="none" />
<rect x="1236" y="56" width="30" height="25" fill="#9ea0a0" />
<path d="M1243,73 L1241,73 L1241,63 L1259,63 L1259,73 L1251,73 M1254,70 L1251,73 L1254,76" stroke="#111" stroke-width="1.8" fill="none" />
<rect x="1270" y="56" width="29" height="25" fill="#9ea0a0" />
<path d="M1275,74 L1280,74 L1290,62 L1295,62" stroke="#111" stroke-width="1.8" fill="none" />
<rect x="1303" y="56" width="116" height="25" fill="#9ea0a0" />
<text x="1337" y="73.5" font-size="14" fill="#111" stroke="#111" stroke-width="0.4" font-weight="normal" text-anchor="middle" style="white-space:pre" >48</text>
<text x="1356" y="73.5" font-size="14" fill="#111" stroke="#111" stroke-width="0.4" font-weight="normal" text-anchor="middle" style="white-space:pre" >.</text>
<text x="1375" y="73.5" font-size="14" fill="#111" stroke="#111" stroke-width="0.4" font-weight="normal" text-anchor="middle" style="white-space:pre" >0</text>
<text x="1392" y="73.5" font-size="14" fill="#111" stroke="#111" stroke-width="0.4" font-weight="normal" text-anchor="middle" style="white-space:pre" >.</text>
<text x="1409" y="73.5" font-size="14" fill="#111" stroke="#111" stroke-width="0.4" font-weight="normal" text-anchor="middle" style="white-space:pre" >0</text>
<rect x="1797" y="56" width="25" height="25" fill="#9ea0a0" />
<path d="M1802,74 L1815,61 L1818,64 L1805,77 Z" stroke="none" stroke-width="1" fill="#111" />
<rect x="1801" y="77" width="16" height="1.6" fill="#111" />
<rect x="1824" y="56" width="25" height="25" fill="#9ea0a0" />
<rect x="1828" y="60" width="17" height="17" fill="none" stroke="#111" stroke-width="1.6" />
<rect x="1831" y="60" width="2.5" height="11" fill="#111" />
<rect x="1835" y="60" width="2.5" height="11" fill="#111" />
<rect x="1839" y="60" width="2.5" height="11" fill="#111" />
<rect x="1852" y="56" width="35" height="25" fill="#9ea0a0" />
<text x="1869.5" y="73.5" font-size="14" fill="#111" stroke="#111" stroke-width="0.4" font-weight="normal" text-anchor="middle" style="white-space:pre" >Key</text>
<rect x="1889" y="56" width="13" height="25" fill="#9ea0a0" />
<rect x="1893" y="68" width="6" height="1" fill="#666" />
<rect x="1905" y="56" width="40" height="25" fill="#9ea0a0" />
<text x="1925.0" y="73.5" font-size="14" fill="#111" stroke="#111" stroke-width="0.4" font-weight="normal" text-anchor="middle" style="white-space:pre" >MIDI</text>
<rect x="1949" y="56" width="49" height="25" fill="#9ea0a0" />
<rect x="1949" y="56" width="11" height="25" fill="#f0a020" />
<text x="1979" y="73.5" font-size="14" fill="#111" stroke="#111" stroke-width="0.4" font-weight="normal" text-anchor="middle" style="white-space:pre" >25 %</text>
<rect x="2002" y="56" width="24" height="25" fill="#9ea0a0" />
<text x="2014.0" y="73.5" font-size="14" fill="#111" stroke="#111" stroke-width="0.4" font-weight="normal" text-anchor="middle" style="white-space:pre" >D</text>
<rect x="2028" y="56" width="13" height="25" fill="#9ea0a0" />
<rect x="2031" y="68" width="7" height="1" fill="#666" />
<circle cx="21" cy="107" r="13" fill="#505453" />
<path d="M16,99 L30,107 L16,115 Z" stroke="none" stroke-width="1" fill="#717574" />
<rect x="41" y="94" width="507" height="39" fill="#464a49" rx="5" />
<rect x="45" y="99" width="498" height="31" fill="#898c8c" />
<text x="56" y="120.0" font-size="14" fill="#636463" stroke="#636463" stroke-width="0.4" font-weight="normal" text-anchor="start" style="white-space:pre" >Suchen (Cmd + F)</text>
<rect x="8" y="127" width="540" height="825" fill="#464a49" rx="6" />
<rect x="41" y="900" width="507" height="84" fill="#464a49" rx="6" />
<rect x="41" y="900" width="507" height="20" fill="#464a49" />
<rect x="41" y="127" width="507" height="10" fill="#464a49" />
<rect x="13" y="133" width="237" height="813" fill="#7e8181" />
<rect x="253" y="133" width="290" height="813" fill="#7e8181" />
<rect x="253" y="133" width="290" height="26" fill="#747777" />
<line x1="449" y1="133" x2="449" y2="159" stroke="#6e6f6f" stroke-width="2" />
<line x1="521" y1="133" x2="521" y2="159" stroke="#6e6f6f" stroke-width="2" />
<text x="258" y="151.0" font-size="14" fill="#111" stroke="#111" stroke-width="0.4" font-weight="normal" text-anchor="start" style="white-space:pre" >Name</text>
<text x="455" y="151.0" font-size="14" fill="#111" stroke="#111" stroke-width="0.4" font-weight="normal" text-anchor="start" style="white-space:pre" >Größe</text>
<path d="M432,151 L442,151 L437,142 Z" stroke="none" stroke-width="1" fill="#6e6f6f" />
<rect x="234" y="140" width="9" height="800" fill="#5f6261" rx="4" />
<rect x="526" y="146" width="10" height="423" fill="#5f6261" rx="5" />
<rect x="46" y="948.5" width="497" height="30" fill="#7e8181" />
<circle cx="21" cy="970" r="13.5" fill="#4f5352" />
<path d="M12,966 q4.5,-5 9,0 t9,0 M12,974 q4.5,-5 9,0 t9,0" stroke="#7b7f7e" stroke-width="2" fill="none" />
<circle cx="61" cy="963" r="8" fill="#1a8ad0" stroke="#333" stroke-width="1" />
<path d="M56,967 v-3 a5,5 0 0 1 10,0 v3" stroke="#111" stroke-width="1.6" fill="none" />
<rect x="55" y="965" width="3" height="4" fill="#111" />
<rect x="64" y="965" width="3" height="4" fill="#111" />
<rect x="253" y="404" width="268" height="26" fill="#b3e0ee" />
<rect x="13" y="540" width="216" height="25" fill="#9fbcc4" />
<path d="M261,167.0 L269,172.0 L261,177.0 Z" stroke="none" stroke-width="1" fill="#5d5e5e" />
<path d="M283,163.0 h14 v14 M280,166.0 h14 v14" stroke="#111" stroke-width="1.4" fill="none" />
<rect x="277" y="169.0" width="14" height="13" fill="none" stroke="#111" stroke-width="1.4" />
<text x="304" y="177.0" font-size="14" fill="#111" stroke="#111" stroke-width="0.4" font-weight="normal" text-anchor="start" style="white-space:pre" >AlterEcho...K-Devices</text>
<path d="M261,194.143 L269,199.143 L261,204.143 Z" stroke="none" stroke-width="1" fill="#5d5e5e" />
<path d="M283,190.143 h14 v14 M280,193.143 h14 v14" stroke="#111" stroke-width="1.4" fill="none" />
<rect x="277" y="196.143" width="14" height="13" fill="none" stroke="#111" stroke-width="1.4" />
<text x="304" y="204.2" font-size="14" fill="#111" stroke="#111" stroke-width="0.4" font-weight="normal" text-anchor="start" style="white-space:pre" >AutoBeat ...K-Devices</text>
<path d="M261,221.286 L269,226.286 L261,231.286 Z" stroke="none" stroke-width="1" fill="#5d5e5e" />
<path d="M283,217.286 h14 v14 M280,220.286 h14 v14" stroke="#111" stroke-width="1.4" fill="none" />
<rect x="277" y="223.286" width="14" height="13" fill="none" stroke="#111" stroke-width="1.4" />
<text x="304" y="231.3" font-size="14" fill="#111" stroke="#111" stroke-width="0.4" font-weight="normal" text-anchor="start" style="white-space:pre" >Beat Tools</text>
<path d="M261,248.429 L269,253.429 L261,258.429 Z" stroke="none" stroke-width="1" fill="#5d5e5e" />
<path d="M283,244.429 h14 v14 M280,247.429 h14 v14" stroke="#111" stroke-width="1.4" fill="none" />
<rect x="277" y="250.429" width="14" height="13" fill="none" stroke="#111" stroke-width="1.4" />
<text x="304" y="258.5" font-size="14" fill="#111" stroke="#111" stroke-width="0.4" font-weight="normal" text-anchor="start" style="white-space:pre" >BeatSeek...obertson</text>
<path d="M260,276.572 L270,276.572 L265,285.572 Z" stroke="none" stroke-width="1" fill="#5d5e5e" />
<path d="M283,271.572 h14 v14 M280,274.572 h14 v14" stroke="#111" stroke-width="1.4" fill="none" />
<rect x="277" y="277.572" width="14" height="13" fill="none" stroke="#111" stroke-width="1.4" />
<text x="304" y="285.6" font-size="14" fill="#111" stroke="#111" stroke-width="0.4" font-weight="normal" text-anchor="start" style="white-space:pre" >Build and Drop</text>
<path d="M278,302.71500000000003 L286,307.71500000000003 L278,312.71500000000003 Z" stroke="none" stroke-width="1" fill="#5d5e5e" />
<path d="M294,300.71500000000003 h7 l2,2.5 h12 v13 h-21 z M294,304.71500000000003 h21" stroke="#111" stroke-width="1.4" fill="none" />
<text x="321" y="312.8" font-size="14" fill="#111" stroke="#111" stroke-width="0.4" font-weight="normal" text-anchor="start" style="white-space:pre" >Drums</text>
<path d="M278,329.858 L286,334.858 L278,339.858 Z" stroke="none" stroke-width="1" fill="#5d5e5e" />
<path d="M294,327.858 h7 l2,2.5 h12 v13 h-21 z M294,331.858 h21" stroke="#111" stroke-width="1.4" fill="none" />
<text x="321" y="339.9" font-size="14" fill="#111" stroke="#111" stroke-width="0.4" font-weight="normal" text-anchor="start" style="white-space:pre" >Effect Racks</text>
<path d="M277,358.001 L287,358.001 L282,367.001 Z" stroke="none" stroke-width="1" fill="#5d5e5e" />
<path d="M294,355.001 h7 l2,2.5 h12 v13 h-21 z M294,359.001 h21" stroke="#111" stroke-width="1.4" fill="none" />
<text x="321" y="367.0" font-size="14" fill="#111" stroke="#111" stroke-width="0.4" font-weight="normal" text-anchor="start" style="white-space:pre" >MIDI Clips</text>
<path d="M295,384.144 L303,389.144 L295,394.144 Z" stroke="none" stroke-width="1" fill="#5d5e5e" />
<path d="M311,382.144 h7 l2,2.5 h12 v13 h-21 z M311,386.144 h21" stroke="#111" stroke-width="1.4" fill="none" />
<text x="338" y="394.2" font-size="14" fill="#111" stroke="#111" stroke-width="0.4" font-weight="normal" text-anchor="start" style="white-space:pre" >100 - 120 bpm</text>
<path d="M294,412.28700000000003 L304,412.28700000000003 L299,421.28700000000003 Z" stroke="none" stroke-width="1" fill="#111" />
<path d="M311,409.28700000000003 h7 l2,2.5 h12 v13 h-21 z M311,413.28700000000003 h21" stroke="#111" stroke-width="1.4" fill="none" />
<text x="338" y="421.3" font-size="14" fill="#111" stroke="#111" stroke-width="0.4" font-weight="normal" text-anchor="start" style="white-space:pre" >124 - 128 bpm</text>
<rect x="328" y="436.43" width="20" height="15" fill="#111" />
<path d="M331,440.43 L336,443.43 L331,446.43 Z" stroke="none" stroke-width="1" fill="#eee" />
<rect x="338" y="438.43" width="9" height="11" fill="#8e8f8f" />
<rect x="340" y="440.43" width="1.3" height="6" fill="#111" />
<rect x="342.5" y="438.93" width="1.3" height="9" fill="#111" />
<rect x="345" y="440.93" width="1.3" height="5" fill="#111" />
<text x="355" y="448.5" font-size="14" fill="#111" stroke="#111" stroke-width="0.4" font-weight="normal" text-anchor="start" style="white-space:pre" >Auto ...m.alc</text>
<text x="517" y="448.5" font-size="14" fill="#111" stroke="#111" stroke-width="0.4" font-weight="normal" text-anchor="end" style="white-space:pre" >112 KB</text>
<rect x="328" y="463.573" width="20" height="15" fill="#111" />
<path d="M331,467.573 L336,470.573 L331,473.573 Z" stroke="none" stroke-width="1" fill="#eee" />
<rect x="338" y="465.573" width="9" height="11" fill="#8e8f8f" />
<rect x="340" y="467.573" width="1.3" height="6" fill="#111" />
<rect x="342.5" y="466.073" width="1.3" height="9" fill="#111" />
<rect x="345" y="468.073" width="1.3" height="5" fill="#111" />
<text x="355" y="475.6" font-size="14" fill="#111" stroke="#111" stroke-width="0.4" font-weight="normal" text-anchor="start" style="white-space:pre" >Big B...m.alc</text>
<text x="517" y="475.6" font-size="14" fill="#111" stroke="#111" stroke-width="0.4" font-weight="normal" text-anchor="end" style="white-space:pre" >114 KB</text>
<rect x="328" y="490.716" width="20" height="15" fill="#111" />
<path d="M331,494.716 L336,497.716 L331,500.716 Z" stroke="none" stroke-width="1" fill="#eee" />
<rect x="338" y="492.716" width="9" height="11" fill="#8e8f8f" />
<rect x="340" y="494.716" width="1.3" height="6" fill="#111" />
<rect x="342.5" y="493.216" width="1.3" height="9" fill="#111" />
<rect x="345" y="495.216" width="1.3" height="5" fill="#111" />
<text x="355" y="502.8" font-size="14" fill="#111" stroke="#111" stroke-width="0.4" font-weight="normal" text-anchor="start" style="white-space:pre" >Diz N...m.alc</text>
<text x="517" y="502.8" font-size="14" fill="#111" stroke="#111" stroke-width="0.4" font-weight="normal" text-anchor="end" style="white-space:pre" >154 KB</text>
<rect x="328" y="517.859" width="20" height="15" fill="#111" />
<path d="M331,521.859 L336,524.859 L331,527.859 Z" stroke="none" stroke-width="1" fill="#eee" />
<rect x="338" y="519.859" width="9" height="11" fill="#8e8f8f" />
<rect x="340" y="521.859" width="1.3" height="6" fill="#111" />
<rect x="342.5" y="520.359" width="1.3" height="9" fill="#111" />
<rect x="345" y="522.359" width="1.3" height="5" fill="#111" />
<text x="355" y="529.9" font-size="14" fill="#111" stroke="#111" stroke-width="0.4" font-weight="normal" text-anchor="start" style="white-space:pre" >Emerg...m.alc</text>
<text x="517" y="529.9" font-size="14" fill="#111" stroke="#111" stroke-width="0.4" font-weight="normal" text-anchor="end" style="white-space:pre" >107 KB</text>
<rect x="328" y="545.002" width="20" height="15" fill="#111" />
<path d="M331,549.002 L336,552.002 L331,555.002 Z" stroke="none" stroke-width="1" fill="#eee" />
<rect x="338" y="547.002" width="9" height="11" fill="#8e8f8f" />
<rect x="340" y="549.002" width="1.3" height="6" fill="#111" />
<rect x="342.5" y="547.502" width="1.3" height="9" fill="#111" />
<rect x="345" y="549.502" width="1.3" height="5" fill="#111" />
<text x="355" y="557.0" font-size="14" fill="#111" stroke="#111" stroke-width="0.4" font-weight="normal" text-anchor="start" style="white-space:pre" >Mega ...m.alc</text>
<text x="517" y="557.0" font-size="14" fill="#111" stroke="#111" stroke-width="0.4" font-weight="normal" text-anchor="end" style="white-space:pre" >119 KB</text>
<rect x="328" y="572.145" width="20" height="15" fill="#111" />
<path d="M331,576.145 L336,579.145 L331,582.145 Z" stroke="none" stroke-width="1" fill="#eee" />
<rect x="338" y="574.145" width="9" height="11" fill="#8e8f8f" />
<rect x="340" y="576.145" width="1.3" height="6" fill="#111" />
<rect x="342.5" y="574.645" width="1.3" height="9" fill="#111" />
<rect x="345" y="576.645" width="1.3" height="5" fill="#111" />
<text x="355" y="584.2" font-size="14" fill="#111" stroke="#111" stroke-width="0.4" font-weight="normal" text-anchor="start" style="white-space:pre" >Mega ...m.alc</text>
<text x="517" y="584.2" font-size="14" fill="#111" stroke="#111" stroke-width="0.4" font-weight="normal" text-anchor="end" style="white-space:pre" >120 KB</text>
<rect x="328" y="599.288" width="20" height="15" fill="#111" />
<path d="M331,603.288 L336,606.288 L331,609.288 Z" stroke="none" stroke-width="1" fill="#eee" />
<rect x="338" y="601.288" width="9" height="11" fill="#8e8f8f" />
<rect x="340" y="603.288" width="1.3" height="6" fill="#111" />
<rect x="342.5" y="601.788" width="1.3" height="9" fill="#111" />
<rect x="345" y="603.788" width="1.3" height="5" fill="#111" />
<text x="355" y="611.3" font-size="14" fill="#111" stroke="#111" stroke-width="0.4" font-weight="normal" text-anchor="start" style="white-space:pre" >Splas...m.alc</text>
<text x="517" y="611.3" font-size="14" fill="#111" stroke="#111" stroke-width="0.4" font-weight="normal" text-anchor="end" style="white-space:pre" >139 KB</text>
<rect x="328" y="626.431" width="20" height="15" fill="#111" />
<path d="M331,630.431 L336,633.431 L331,636.431 Z" stroke="none" stroke-width="1" fill="#eee" />
<rect x="338" y="628.431" width="9" height="11" fill="#8e8f8f" />
<rect x="340" y="630.431" width="1.3" height="6" fill="#111" />
<rect x="342.5" y="628.931" width="1.3" height="9" fill="#111" />
<rect x="345" y="630.931" width="1.3" height="5" fill="#111" />
<text x="355" y="638.5" font-size="14" fill="#111" stroke="#111" stroke-width="0.4" font-weight="normal" text-anchor="start" style="white-space:pre" >Svens...m.alc</text>
<text x="517" y="638.5" font-size="14" fill="#111" stroke="#111" stroke-width="0.4" font-weight="normal" text-anchor="end" style="white-space:pre" >90 KB</text>
<path d="M295,655.5740000000001 L303,660.5740000000001 L295,665.5740000000001 Z" stroke="none" stroke-width="1" fill="#5d5e5e" />
<path d="M311,653.5740000000001 h7 l2,2.5 h12 v13 h-21 z M311,657.5740000000001 h21" stroke="#111" stroke-width="1.4" fill="none" />
<text x="338" y="665.6" font-size="14" fill="#111" stroke="#111" stroke-width="0.4" font-weight="normal" text-anchor="start" style="white-space:pre" >130 - 150 bpm</text>
<path d="M278,682.717 L286,687.717 L278,692.717 Z" stroke="none" stroke-width="1" fill="#5d5e5e" />
<path d="M294,680.717 h7 l2,2.5 h12 v13 h-21 z M294,684.717 h21" stroke="#111" stroke-width="1.4" fill="none" />
<text x="321" y="692.8" font-size="14" fill="#111" stroke="#111" stroke-width="0.4" font-weight="normal" text-anchor="start" style="white-space:pre" >Samples</text>
<path d="M278,709.86 L286,714.86 L278,719.86 Z" stroke="none" stroke-width="1" fill="#5d5e5e" />
<path d="M294,707.86 h7 l2,2.5 h12 v13 h-21 z M294,711.86 h21" stroke="#111" stroke-width="1.4" fill="none" />
<text x="321" y="719.9" font-size="14" fill="#111" stroke="#111" stroke-width="0.4" font-weight="normal" text-anchor="start" style="white-space:pre" >Sounds</text>
<path d="M261,737.003 L269,742.003 L261,747.003 Z" stroke="none" stroke-width="1" fill="#5d5e5e" />
<path d="M283,733.003 h14 v14 M280,736.003 h14 v14" stroke="#111" stroke-width="1.4" fill="none" />
<rect x="277" y="739.003" width="14" height="13" fill="none" stroke="#111" stroke-width="1.4" />
<text x="304" y="747.0" font-size="14" fill="#111" stroke="#111" stroke-width="0.4" font-weight="normal" text-anchor="start" style="white-space:pre" >Chaos Eff...ng Noises</text>
<path d="M261,764.146 L269,769.146 L261,774.146 Z" stroke="none" stroke-width="1" fill="#5d5e5e" />
<path d="M283,760.146 h14 v14 M280,763.146 h14 v14" stroke="#111" stroke-width="1.4" fill="none" />
<rect x="277" y="766.146" width="14" height="13" fill="none" stroke="#111" stroke-width="1.4" />
<text x="304" y="774.2" font-size="14" fill="#111" stroke="#111" stroke-width="0.4" font-weight="normal" text-anchor="start" style="white-space:pre" >Chop and Swing</text>
<path d="M261,791.289 L269,796.289 L261,801.289 Z" stroke="none" stroke-width="1" fill="#5d5e5e" />
<path d="M283,787.289 h14 v14 M280,790.289 h14 v14" stroke="#111" stroke-width="1.4" fill="none" />
<rect x="277" y="793.289" width="14" height="13" fill="none" stroke="#111" stroke-width="1.4" />
<text x="304" y="801.3" font-size="14" fill="#111" stroke="#111" stroke-width="0.4" font-weight="normal" text-anchor="start" style="white-space:pre" >Connection Kit</text>
<path d="M261,818.432 L269,823.432 L261,828.432 Z" stroke="none" stroke-width="1" fill="#5d5e5e" />
<path d="M283,814.432 h14 v14 M280,817.432 h14 v14" stroke="#111" stroke-width="1.4" fill="none" />
<rect x="277" y="820.432" width="14" height="13" fill="none" stroke="#111" stroke-width="1.4" />
<text x="304" y="828.5" font-size="14" fill="#111" stroke="#111" stroke-width="0.4" font-weight="normal" text-anchor="start" style="white-space:pre" >Convolution Reverb</text>
<path d="M261,845.575 L269,850.575 L261,855.575 Z" stroke="none" stroke-width="1" fill="#5d5e5e" />
<path d="M283,841.575 h14 v14 M280,844.575 h14 v14" stroke="#111" stroke-width="1.4" fill="none" />
<rect x="277" y="847.575" width="14" height="13" fill="none" stroke="#111" stroke-width="1.4" />
<text x="304" y="855.6" font-size="14" fill="#111" stroke="#111" stroke-width="0.4" font-weight="normal" text-anchor="start" style="white-space:pre" >Core Library</text>
<path d="M261,872.7180000000001 L269,877.7180000000001 L261,882.7180000000001 Z" stroke="none" stroke-width="1" fill="#5d5e5e" />
<path d="M283,868.7180000000001 h14 v14 M280,871.7180000000001 h14 v14" stroke="#111" stroke-width="1.4" fill="none" />
<rect x="277" y="874.7180000000001" width="14" height="13" fill="none" stroke="#111" stroke-width="1.4" />
<text x="304" y="882.8" font-size="14" fill="#111" stroke="#111" stroke-width="0.4" font-weight="normal" text-anchor="start" style="white-space:pre" >Designer Drums</text>
<path d="M261,899.861 L269,904.861 L261,909.861 Z" stroke="none" stroke-width="1" fill="#5d5e5e" />
<path d="M283,895.861 h14 v14 M280,898.861 h14 v14" stroke="#111" stroke-width="1.4" fill="none" />
<rect x="277" y="901.861" width="14" height="13" fill="none" stroke="#111" stroke-width="1.4" />
<text x="304" y="909.9" font-size="14" fill="#111" stroke="#111" stroke-width="0.4" font-weight="normal" text-anchor="start" style="white-space:pre" >Digicussion 1</text>
<path d="M261,927.004 L269,932.004 L261,937.004 Z" stroke="none" stroke-width="1" fill="#5d5e5e" />
<path d="M283,923.004 h14 v14 M280,926.004 h14 v14" stroke="#111" stroke-width="1.4" fill="none" />
<rect x="277" y="929.004" width="14" height="13" fill="none" stroke="#111" stroke-width="1.4" />
<text x="304" y="937.0" font-size="14" fill="#111" stroke="#111" stroke-width="0.4" font-weight="normal" text-anchor="start" style="white-space:pre" >Digicussion 2</text>
<text x="19" y="150.0" font-size="14" fill="#5e5f5f" stroke="#5e5f5f" stroke-width="0.4" font-weight="normal" text-anchor="start" style="white-space:pre" >Sammlungen</text>
<text x="19" y="231.0" font-size="14" fill="#5e5f5f" stroke="#5e5f5f" stroke-width="0.4" font-weight="normal" text-anchor="start" style="white-space:pre" >Kategorien</text>
<text x="19" y="529.0" font-size="14" fill="#5e5f5f" stroke="#5e5f5f" stroke-width="0.4" font-weight="normal" text-anchor="start" style="white-space:pre" >Orte</text>
<rect x="24.5" y="167" width="10" height="10" fill="#e8442a" />
<text x="47" y="177.0" font-size="14" fill="#111" stroke="#111" stroke-width="0.4" font-weight="normal" text-anchor="start" style="white-space:pre" >Favoriten</text>
<path d="M26,257 v-11 l11,-2 v11" stroke="#111" stroke-width="1.5" fill="none" />
<circle cx="24" cy="258" r="2.5" fill="none" stroke="#111" stroke-width="1.5" />
<circle cx="35" cy="256" r="2.5" fill="none" stroke="#111" stroke-width="1.5" />
<text x="47" y="258.0" font-size="14" fill="#111" stroke="#111" stroke-width="0.4" font-weight="normal" text-anchor="start" style="white-space:pre" >Sounds</text>
<rect x="21" y="274" width="7" height="4" fill="none" stroke="#111" stroke-width="1.4" />
<rect x="21" y="283" width="7" height="4" fill="none" stroke="#111" stroke-width="1.4" />
<rect x="32" y="274" width="7" height="4" fill="none" stroke="#111" stroke-width="1.4" />
<rect x="32" y="283" width="7" height="4" fill="none" stroke="#111" stroke-width="1.4" />
<text x="47" y="285.0" font-size="14" fill="#111" stroke="#111" stroke-width="0.4" font-weight="normal" text-anchor="start" style="white-space:pre" >Drums</text>
<circle cx="29" cy="308" r="8" fill="none" stroke="#111" stroke-width="1.5" />
<line x1="29" y1="300" x2="29" y2="308" stroke="#111" stroke-width="1.5" />
<text x="47" y="313.0" font-size="14" fill="#111" stroke="#111" stroke-width="0.4" font-weight="normal" text-anchor="start" style="white-space:pre" >Instrumente</text>
<rect x="21.0" y="333.5" width="1.2" height="3" fill="#111" />
<rect x="23.3" y="332.0" width="1.2" height="6" fill="#111" />
<rect x="25.6" y="330.0" width="1.2" height="10" fill="#111" />
<rect x="27.9" y="328.0" width="1.2" height="14" fill="#111" />
<rect x="30.2" y="331.0" width="1.2" height="8" fill="#111" />
<rect x="32.5" y="329.0" width="1.2" height="12" fill="#111" />
<rect x="34.8" y="332.5" width="1.2" height="5" fill="#111" />
<rect x="37.099999999999994" y="333.5" width="1.2" height="3" fill="#111" />
<text x="47" y="340.0" font-size="14" fill="#111" stroke="#111" stroke-width="0.4" font-weight="normal" text-anchor="start" style="white-space:pre" >Audio-Effekte</text>
<line x1="20" y1="356" x2="38" y2="356" stroke="#111" stroke-width="1.4" />
<line x1="20" y1="361" x2="38" y2="361" stroke="#111" stroke-width="1.4" />
<line x1="20" y1="366" x2="38" y2="366" stroke="#111" stroke-width="1.4" />
<rect x="24" y="359" width="4" height="3" fill="#111" />
<rect x="30" y="363" width="4" height="3" fill="#111" />
<text x="47" y="367.0" font-size="14" fill="#111" stroke="#111" stroke-width="0.4" font-weight="normal" text-anchor="start" style="white-space:pre" >MIDI-Effekte</text>
<rect x="21" y="385" width="18" height="9" fill="none" rx="2" stroke="#111" stroke-width="1.5" />
<line x1="24" y1="381" x2="24" y2="385" stroke="#111" stroke-width="1.5" />
<line x1="36" y1="381" x2="36" y2="385" stroke="#111" stroke-width="1.5" />
<line x1="24" y1="394" x2="24" y2="397" stroke="#111" stroke-width="1.5" />
<line x1="36" y1="394" x2="36" y2="397" stroke="#111" stroke-width="1.5" />
<text x="47" y="394.0" font-size="14" fill="#111" stroke="#111" stroke-width="0.4" font-weight="normal" text-anchor="start" style="white-space:pre" >Max for Live</text>
<rect x="24" y="410" width="12" height="12" fill="none" rx="2" stroke="#111" stroke-width="1.5" />
<line x1="20" y1="416" x2="24" y2="416" stroke="#111" stroke-width="1.5" />
<line x1="36" y1="413" x2="40" y2="413" stroke="#111" stroke-width="1.5" />
<line x1="36" y1="419" x2="40" y2="419" stroke="#111" stroke-width="1.5" />
<text x="47" y="421.0" font-size="14" fill="#111" stroke="#111" stroke-width="0.4" font-weight="normal" text-anchor="start" style="white-space:pre" >Plug-Ins</text>
<rect x="21" y="436" width="19" height="14" fill="none" stroke="#111" stroke-width="1.5" />
<path d="M28,439 L34,443 L28,447 Z" stroke="none" stroke-width="1" fill="#111" />
<text x="47" y="448.0" font-size="14" fill="#111" stroke="#111" stroke-width="0.4" font-weight="normal" text-anchor="start" style="white-space:pre" >Clips</text>
<rect x="21" y="463" width="19" height="14" fill="none" stroke="#111" stroke-width="1.5" />
<rect x="24.0" y="468.5" width="1.2" height="3" fill="#111" />
<rect x="26.3" y="467.0" width="1.2" height="6" fill="#111" />
<rect x="28.6" y="465.5" width="1.2" height="9" fill="#111" />
<rect x="30.9" y="467.5" width="1.2" height="5" fill="#111" />
<rect x="33.2" y="466.0" width="1.2" height="8" fill="#111" />
<rect x="35.5" y="468.5" width="1.2" height="3" fill="#111" />
<text x="47" y="475.0" font-size="14" fill="#111" stroke="#111" stroke-width="0.4" font-weight="normal" text-anchor="start" style="white-space:pre" >Samples</text>
<path d="M26,543.002 h14 v14 M23,546.002 h14 v14" stroke="#111" stroke-width="1.4" fill="none" />
<rect x="20" y="549.002" width="14" height="13" fill="none" stroke="#111" stroke-width="1.4" />
<text x="47" y="557.0" font-size="14" fill="#111" stroke="#111" stroke-width="0.4" font-weight="normal" text-anchor="start" style="white-space:pre" >Packs</text>
<circle cx="30" cy="575.145" r="3.5" fill="none" stroke="#111" stroke-width="1.5" />
<rect x="22" y="581.145" width="17" height="6" fill="none" rx="2" stroke="#111" stroke-width="1.5" />
<text x="47" y="584.2" font-size="14" fill="#111" stroke="#111" stroke-width="0.4" font-weight="normal" text-anchor="start" style="white-space:pre" >User Library</text>
<path d="M20,599.288 h7 l2,2.5 h12 v13 h-21 z M20,603.288 h21" stroke="#111" stroke-width="1.4" fill="none" />
<line x1="25" y1="607.288" x2="30" y2="607.288" stroke="#111" stroke-width="1.2" />
<line x1="25" y1="610.288" x2="36" y2="610.288" stroke="#111" stroke-width="1.2" />
<text x="47" y="611.3" font-size="14" fill="#111" stroke="#111" stroke-width="0.4" font-weight="normal" text-anchor="start" style="white-space:pre" >Aktuelles Projekt</text>
<path d="M20,626.431 h7 l2,2.5 h12 v13 h-21 z M20,630.431 h21" stroke="#111" stroke-width="1.4" fill="none" />
<text x="47" y="638.5" font-size="14" fill="#111" stroke="#111" stroke-width="0.4" font-weight="normal" text-anchor="start" style="white-space:pre" >Desktop</text>
<path d="M20,653.5740000000001 h7 l2,2.5 h12 v13 h-21 z M20,657.5740000000001 h21" stroke="#111" stroke-width="1.4" fill="none" />
<text x="47" y="665.6" font-size="14" fill="#111" stroke="#111" stroke-width="0.4" font-weight="normal" text-anchor="start" style="white-space:pre" >Hofa</text>
<path d="M20,680.717 h7 l2,2.5 h12 v13 h-21 z M20,684.717 h21" stroke="#111" stroke-width="1.4" fill="none" />
<text x="47" y="692.8" font-size="14" fill="#111" stroke="#111" stroke-width="0.4" font-weight="normal" text-anchor="start" style="white-space:pre" >com~apple~CloudDocs</text>
<path d="M20,707.86 h7 l2,2.5 h12 v13 h-21 z M20,711.86 h21" stroke="#111" stroke-width="1.4" fill="none" />
<text x="47" y="719.9" font-size="14" fill="#111" stroke="#111" stroke-width="0.4" font-weight="normal" text-anchor="start" style="white-space:pre" >Downloads</text>
<path d="M20,735.003 h7 l2,2.5 h12 v13 h-21 z M20,739.003 h21" stroke="#111" stroke-width="1.4" fill="none" />
<text x="47" y="747.0" font-size="14" fill="#111" stroke="#111" stroke-width="0.4" font-weight="normal" text-anchor="start" style="white-space:pre" >Limiter-Test</text>
<path d="M20,762.146 h7 l2,2.5 h12 v13 h-21 z M20,766.146 h21" stroke="#111" stroke-width="1.4" fill="none" />
<text x="47" y="774.2" font-size="14" fill="#111" stroke="#111" stroke-width="0.4" font-weight="normal" text-anchor="start" style="white-space:pre" >sineads war Project</text>
<path d="M20,789.289 h7 l2,2.5 h12 v13 h-21 z M20,793.289 h21" stroke="#6a6b6b" stroke-width="1.4" fill="none" />
<text x="47" y="801.3" font-size="14" fill="#6a6b6b" stroke="#6a6b6b" stroke-width="0.4" font-weight="normal" text-anchor="start" style="white-space:pre" >Purchased Packs</text>
<path d="M20,816.432 h7 l2,2.5 h12 v13 h-21 z M20,820.432 h21" stroke="#6a6b6b" stroke-width="1.4" fill="none" />
<text x="47" y="828.5" font-size="14" fill="#6a6b6b" stroke="#6a6b6b" stroke-width="0.4" font-weight="normal" text-anchor="start" style="white-space:pre" >Sinneads War</text>
<path d="M20,843.575 h7 l2,2.5 h12 v13 h-21 z M20,847.575 h21" stroke="#6a6b6b" stroke-width="1.4" fill="none" />
<text x="47" y="855.6" font-size="14" fill="#6a6b6b" stroke="#6a6b6b" stroke-width="0.4" font-weight="normal" text-anchor="start" style="white-space:pre" >Movie</text>
<path d="M20,870.7180000000001 h7 l2,2.5 h12 v13 h-21 z M20,874.7180000000001 h21" stroke="#6a6b6b" stroke-width="1.4" fill="none" />
<text x="47" y="882.8" font-size="14" fill="#6a6b6b" stroke="#6a6b6b" stroke-width="0.4" font-weight="normal" text-anchor="start" style="white-space:pre" >Drum&amp;Bass</text>
<path d="M20,897.861 h7 l2,2.5 h12 v13 h-21 z M20,901.861 h21" stroke="#111" stroke-width="1.4" fill="none" />
<text x="47" y="909.9" font-size="14" fill="#111" stroke="#111" stroke-width="0.4" font-weight="normal" text-anchor="start" style="white-space:pre" >EboSuite example projects a</text>
<path d="M20,925.004 h7 l2,2.5 h12 v13 h-21 z M20,929.004 h21" stroke="#111" stroke-width="1.4" fill="none" />
<path d="M27,935.004 h6 M30,932.004 v6" stroke="#111" stroke-width="1.3" fill="none" />
<text x="47" y="937.0" font-size="14" fill="#111" stroke="#111" stroke-width="0.4" font-weight="normal" text-anchor="start" style="white-space:pre" >Add Folder...</text>
<line x1="46" y1="940" x2="130" y2="940" stroke="#111" stroke-width="1.2" />
<rect x="560" y="95" width="1447" height="520" fill="#464a49" rx="6" />
<rect x="2010" y="95" width="38" height="525" fill="#585b5a" />
<defs><pattern id="hatch" patternUnits="userSpaceOnUse" width="8" height="8" patternTransform="rotate(45)"><rect width="8" height="8" fill="#9a9a96"/><rect width="4.5" height="8" fill="#f0a030"/></pattern></defs>
<rect x="565" y="100" width="107" height="24" fill="#0d9fd9" />
<text x="571" y="117.3" font-size="13.2" fill="#111" font-weight="bold" text-anchor="start" style="white-space:pre" >1 Drum Kit</text>
<circle cx="658" cy="112" r="8" fill="none" stroke="#111" stroke-width="1.6" />
<path d="M653,109 L663,109 L658,116 Z" stroke="none" stroke-width="1" fill="#111" />
<rect x="565" y="126.2" width="107" height="24.4" fill="#0d9fd9" />
<rect x="588" y="126.2" width="1.5" height="24.4" fill="#00000038" />
<path d="M571,132.2 L582,138.4 L571,144.6 Z" stroke="none" stroke-width="1" fill="#0b3550" />
<text x="594" y="143.3" font-size="13.6" fill="#0b2f48" stroke="#0b2f48" stroke-width="0.4" font-weight="normal" text-anchor="start" style="white-space:pre" >Drum Kit 1</text>
<rect x="565" y="152" width="107" height="24.4" fill="#0d9fd9" />
<rect x="588" y="152" width="1.5" height="24.4" fill="#00000038" />
<path d="M571,158 L582,164.2 L571,170.4 Z" stroke="none" stroke-width="1" fill="#0b3550" />
<text x="594" y="169.1" font-size="13.6" fill="#0b2f48" stroke="#0b2f48" stroke-width="0.4" font-weight="normal" text-anchor="start" style="white-space:pre" >Drum Kit 1</text>
<rect x="565" y="177.8" width="107" height="24.4" fill="#0d9fd9" />
<rect x="588" y="177.8" width="1.5" height="24.4" fill="#00000038" />
<path d="M571,183.8 L582,190.0 L571,196.20000000000002 Z" stroke="none" stroke-width="1" fill="#0b3550" />
<text x="594" y="194.9" font-size="13.6" fill="#0b2f48" stroke="#0b2f48" stroke-width="0.4" font-weight="normal" text-anchor="start" style="white-space:pre" >Drum Kit 1</text>
<rect x="565" y="203.6" width="107" height="24.4" fill="#0d9fd9" />
<rect x="588" y="203.6" width="1.5" height="24.4" fill="#00000038" />
<path d="M571,209.6 L582,215.79999999999998 L571,222.0 Z" stroke="none" stroke-width="1" fill="#0b3550" />
<text x="594" y="220.7" font-size="13.6" fill="#0b2f48" stroke="#0b2f48" stroke-width="0.4" font-weight="normal" text-anchor="start" style="white-space:pre" >Drum Kit 1</text>
<rect x="565" y="229.4" width="107" height="24.4" fill="#0d9fd9" />
<rect x="588" y="229.4" width="1.5" height="24.4" fill="#00000038" />
<path d="M571,235.4 L582,241.6 L571,247.8 Z" stroke="none" stroke-width="1" fill="#0b3550" />
<text x="594" y="246.5" font-size="13.6" fill="#0b2f48" stroke="#0b2f48" stroke-width="0.4" font-weight="normal" text-anchor="start" style="white-space:pre" >Drum Kit 1</text>
<rect x="565" y="255.5" width="107" height="4" fill="#0d9fd9" />
<rect x="565" y="261" width="107" height="24" fill="#848787" />
<rect x="571" y="267" width="12" height="12" fill="#515554" />
<rect x="565" y="288" width="107" height="75" fill="#858888" />
<rect x="565" y="367" width="107" height="221" fill="#858888" />
<rect x="674" y="100" width="106" height="24" fill="#0d9fd9" />
<text x="680" y="117.3" font-size="13.2" fill="#111" font-weight="bold" text-anchor="start" style="white-space:pre" >2 Drum Kit</text>
<circle cx="766" cy="112" r="8" fill="none" stroke="#111" stroke-width="1.6" />
<path d="M761,109 L771,109 L766,116 Z" stroke="none" stroke-width="1" fill="#111" />
<rect x="674" y="126.2" width="106" height="24.4" fill="#9ea1a0" />
<rect x="680" y="132.2" width="12" height="12" fill="#515554" />
<rect x="674" y="152" width="106" height="24.4" fill="#0d9fd9" />
<rect x="697" y="152" width="1.5" height="24.4" fill="#00000038" />
<path d="M680,158 L691,164.2 L680,170.4 Z" stroke="none" stroke-width="1" fill="#0b3550" />
<text x="703" y="169.1" font-size="13.6" fill="#0b2f48" stroke="#0b2f48" stroke-width="0.4" font-weight="normal" text-anchor="start" style="white-space:pre" >Drum Kit 2</text>
<rect x="674" y="177.8" width="106" height="24.4" fill="#0d9fd9" />
<rect x="697" y="177.8" width="1.5" height="24.4" fill="#00000038" />
<path d="M680,183.8 L691,190.0 L680,196.20000000000002 Z" stroke="none" stroke-width="1" fill="#0b3550" />
<text x="703" y="194.9" font-size="13.6" fill="#0b2f48" stroke="#0b2f48" stroke-width="0.4" font-weight="normal" text-anchor="start" style="white-space:pre" >Drum Kit 2</text>
<rect x="674" y="203.6" width="106" height="24.4" fill="#0d9fd9" />
<rect x="697" y="203.6" width="1.5" height="24.4" fill="#00000038" />
<path d="M680,209.6 L691,215.79999999999998 L680,222.0 Z" stroke="none" stroke-width="1" fill="#0b3550" />
<text x="703" y="220.7" font-size="13.6" fill="#0b2f48" stroke="#0b2f48" stroke-width="0.4" font-weight="normal" text-anchor="start" style="white-space:pre" >Drum Kit 2</text>
<rect x="674" y="229.4" width="106" height="24.4" fill="#0d9fd9" />
<rect x="697" y="229.4" width="1.5" height="24.4" fill="#00000038" />
<path d="M680,235.4 L691,241.6 L680,247.8 Z" stroke="none" stroke-width="1" fill="#0b3550" />
<text x="703" y="246.5" font-size="13.6" fill="#0b2f48" stroke="#0b2f48" stroke-width="0.4" font-weight="normal" text-anchor="start" style="white-space:pre" >Drum Kit 2</text>
<rect x="674" y="255.5" width="106" height="4" fill="#0d9fd9" />
<rect x="674" y="261" width="106" height="24" fill="#848787" />
<rect x="680" y="267" width="12" height="12" fill="#515554" />
<rect x="674" y="288" width="106" height="75" fill="#858888" />
<rect x="674" y="367" width="106" height="221" fill="#858888" />
<rect x="783" y="100" width="133" height="24" fill="#e2386f" />
<text x="789" y="117.3" font-size="13.2" fill="#fff" font-weight="bold" text-anchor="start" style="white-space:pre" >3 Oxi Bass Rack</text>
<rect x="783" y="126.2" width="133" height="24.4" fill="#9ea1a0" />
<rect x="789" y="132.2" width="12" height="12" fill="#515554" />
<rect x="783" y="152" width="133" height="24.4" fill="#e2386f" />
<rect x="806" y="152" width="1.5" height="24.4" fill="#00000038" />
<path d="M789,158 L800,164.2 L789,170.4 Z" stroke="none" stroke-width="1" fill="#5a0c26" />
<text x="812" y="169.1" font-size="13.6" fill="#fbe3ea" stroke="#fbe3ea" stroke-width="0.4" font-weight="normal" text-anchor="start" style="white-space:pre" >Oxi Bass Rack</text>
<rect x="783" y="177.8" width="133" height="24.4" fill="#828585" />
<rect x="789" y="183.8" width="12" height="12" fill="#515554" />
<rect x="783" y="203.6" width="133" height="24.4" fill="#828585" />
<rect x="789" y="209.6" width="12" height="12" fill="#515554" />
<rect x="783" y="229.4" width="133" height="24.4" fill="#e2386f" />
<rect x="806" y="229.4" width="1.5" height="24.4" fill="#00000038" />
<path d="M789,235.4 L800,241.6 L789,247.8 Z" stroke="none" stroke-width="1" fill="#5a0c26" />
<text x="812" y="246.5" font-size="13.6" fill="#fbe3ea" stroke="#fbe3ea" stroke-width="0.4" font-weight="normal" text-anchor="start" style="white-space:pre" >Oxi Bass Rack</text>
<rect x="783" y="255.5" width="133" height="4" fill="#e2386f" />
<rect x="783" y="261" width="133" height="24" fill="#848787" />
<rect x="789" y="267" width="12" height="12" fill="#515554" />
<rect x="783" y="288" width="133" height="75" fill="#858888" />
<rect x="783" y="367" width="133" height="221" fill="#858888" />
<rect x="918" y="100" width="106" height="24" fill="#e2386f" />
<text x="924" y="117.3" font-size="13.2" fill="#fff" font-weight="bold" text-anchor="start" style="white-space:pre" >4 Three Op Ba</text>
<rect x="918" y="126.2" width="106" height="24.4" fill="#9ea1a0" />
<rect x="924" y="132.2" width="12" height="12" fill="#515554" />
<rect x="918" y="152" width="106" height="24.4" fill="#e2386f" />
<rect x="941" y="152" width="1.5" height="24.4" fill="#00000038" />
<path d="M924,158 L935,164.2 L924,170.4 Z" stroke="none" stroke-width="1" fill="#5a0c26" />
<text x="947" y="169.1" font-size="13.6" fill="#fbe3ea" stroke="#fbe3ea" stroke-width="0.4" font-weight="normal" text-anchor="start" style="white-space:pre" >Three Op Ba</text>
<rect x="918" y="177.8" width="106" height="24.4" fill="#828585" />
<rect x="924" y="183.8" width="12" height="12" fill="#515554" />
<rect x="918" y="203.6" width="106" height="24.4" fill="#828585" />
<rect x="924" y="209.6" width="12" height="12" fill="#515554" />
<rect x="918" y="229.4" width="106" height="24.4" fill="#e2386f" />
<rect x="941" y="229.4" width="1.5" height="24.4" fill="#00000038" />
<path d="M924,235.4 L935,241.6 L924,247.8 Z" stroke="none" stroke-width="1" fill="#5a0c26" />
<text x="947" y="246.5" font-size="13.6" fill="#fbe3ea" stroke="#fbe3ea" stroke-width="0.4" font-weight="normal" text-anchor="start" style="white-space:pre" >Three Op Ba</text>
<rect x="918" y="255.5" width="106" height="4" fill="#828585" />
<rect x="918" y="261" width="106" height="24" fill="#848787" />
<rect x="924" y="267" width="12" height="12" fill="#515554" />
<rect x="918" y="288" width="106" height="75" fill="#858888" />
<rect x="918" y="367" width="106" height="221" fill="#858888" />
<rect x="1027" y="100" width="105" height="24" fill="#e2386f" />
<text x="1033" y="117.3" font-size="13.2" fill="#fff" font-weight="bold" text-anchor="start" style="white-space:pre" >5 Deep in Dark</text>
<rect x="1027" y="126.2" width="105" height="24.4" fill="#9ea1a0" />
<rect x="1033" y="132.2" width="12" height="12" fill="#515554" />
<rect x="1027" y="152" width="105" height="24.4" fill="#828585" />
<rect x="1033" y="158" width="12" height="12" fill="#515554" />
<rect x="1027" y="177.8" width="105" height="24.4" fill="#e2386f" />
<rect x="1050" y="177.8" width="1.5" height="24.4" fill="#00000038" />
<path d="M1033,183.8 L1044,190.0 L1033,196.20000000000002 Z" stroke="none" stroke-width="1" fill="#5a0c26" />
<text x="1056" y="194.9" font-size="13.6" fill="#fbe3ea" stroke="#fbe3ea" stroke-width="0.4" font-weight="normal" text-anchor="start" style="white-space:pre" >Deep in Dark</text>
<rect x="1027" y="203.6" width="105" height="24.4" fill="#828585" />
<rect x="1033" y="209.6" width="12" height="12" fill="#515554" />
<rect x="1027" y="229.4" width="105" height="24.4" fill="#828585" />
<rect x="1033" y="235.4" width="12" height="12" fill="#515554" />
<rect x="1027" y="255.5" width="105" height="4" fill="#828585" />
<rect x="1027" y="261" width="105" height="24" fill="#848787" />
<rect x="1033" y="267" width="12" height="12" fill="#515554" />
<rect x="1027" y="288" width="105" height="75" fill="#858888" />
<rect x="1027" y="367" width="105" height="221" fill="#858888" />
<rect x="1135" y="100" width="106" height="24" fill="#e2386f" />
<text x="1141" y="117.3" font-size="13.2" fill="#fff" font-weight="bold" text-anchor="start" style="white-space:pre" >6 Crossover Sy</text>
<rect x="1135" y="126.2" width="106" height="24.4" fill="#a6c3cc" />
<rect x="1141" y="132.2" width="12" height="12" fill="#515554" />
<rect x="1135" y="152" width="106" height="24.4" fill="#8e9191" />
<rect x="1141" y="158" width="12" height="12" fill="#515554" />
<rect x="1135" y="177.8" width="106" height="24.4" fill="#8e9191" />
<rect x="1141" y="183.8" width="12" height="12" fill="#515554" />
<rect x="1135" y="203.6" width="106" height="24.4" fill="#8e9191" />
<rect x="1141" y="209.6" width="12" height="12" fill="#515554" />
<rect x="1135" y="229.4" width="106" height="24.4" fill="#e2386f" />
<rect x="1158" y="229.4" width="1.5" height="24.4" fill="#00000038" />
<path d="M1141,235.4 L1152,241.6 L1141,247.8 Z" stroke="none" stroke-width="1" fill="#5a0c26" />
<text x="1164" y="246.5" font-size="13.6" fill="#fbe3ea" stroke="#fbe3ea" stroke-width="0.4" font-weight="normal" text-anchor="start" style="white-space:pre" >Crossover Sy</text>
<rect x="1135" y="255.5" width="106" height="4" fill="#e2386f" />
<rect x="1135" y="261" width="106" height="24" fill="#8e9191" />
<rect x="1141" y="267" width="12" height="12" fill="#515554" />
<rect x="1135" y="288" width="106" height="75" fill="#9fa2a2" />
<rect x="1135" y="367" width="106" height="221" fill="#9ca0a0" />
<rect x="1244" y="100" width="105" height="24" fill="#e6cf2e" />
<text x="1250" y="117.3" font-size="13.2" fill="#111" font-weight="bold" text-anchor="start" style="white-space:pre" >7 Vocals Gr</text>
<circle cx="1335" cy="112" r="8" fill="none" stroke="#111" stroke-width="1.6" />
<line x1="1331" y1="109" x2="1339" y2="109" stroke="#111" stroke-width="1.3" />
<line x1="1331" y1="112" x2="1339" y2="112" stroke="#111" stroke-width="1.3" />
<line x1="1331" y1="115" x2="1339" y2="115" stroke="#111" stroke-width="1.3" />
<rect x="1244" y="126.2" width="105" height="24.4" fill="#9ea1a0" />
<path d="M1251,132.2 L1262,138.4 L1251,144.6 Z" stroke="none" stroke-width="1" fill="#5f6261" />
<rect x="1271" y="129.2" width="76" height="18" fill="url(#hatch)" />
<rect x="1244" y="152" width="105" height="24.4" fill="#828585" />
<path d="M1251,158 L1262,164.2 L1251,170.4 Z" stroke="none" stroke-width="1" fill="#5f6261" />
<rect x="1271" y="155" width="76" height="18" fill="url(#hatch)" />
<rect x="1244" y="177.8" width="105" height="24.4" fill="#828585" />
<path d="M1251,183.8 L1262,190.0 L1251,196.20000000000002 Z" stroke="none" stroke-width="1" fill="#5f6261" />
<rect x="1271" y="180.8" width="76" height="18" fill="url(#hatch)" />
<rect x="1244" y="203.6" width="105" height="24.4" fill="#828585" />
<rect x="1250" y="209.6" width="12" height="12" fill="#515554" />
<rect x="1244" y="229.4" width="105" height="24.4" fill="#828585" />
<rect x="1250" y="235.4" width="12" height="12" fill="#515554" />
<rect x="1244" y="255.5" width="105" height="4" fill="#828585" />
<rect x="1270" y="256" width="5" height="1.5" fill="#f0a030" />
<rect x="1278" y="256" width="5" height="1.5" fill="#f0a030" />
<rect x="1286" y="256" width="5" height="1.5" fill="#f0a030" />
<rect x="1294" y="256" width="5" height="1.5" fill="#f0a030" />
<rect x="1302" y="256" width="5" height="1.5" fill="#f0a030" />
<rect x="1310" y="256" width="5" height="1.5" fill="#f0a030" />
<rect x="1318" y="256" width="5" height="1.5" fill="#f0a030" />
<rect x="1326" y="256" width="5" height="1.5" fill="#f0a030" />
<rect x="1334" y="256" width="5" height="1.5" fill="#f0a030" />
<rect x="1342" y="256" width="5" height="1.5" fill="#f0a030" />
<rect x="1244" y="261" width="105" height="24" fill="#848787" />
<rect x="1250" y="267" width="12" height="12" fill="#515554" />
<rect x="1244" y="288" width="105" height="75" fill="#858888" />
<rect x="1244" y="367" width="105" height="221" fill="#858888" />
<rect x="1352" y="100" width="106" height="24" fill="#0fa398" />
<text x="1358" y="117.3" font-size="13.2" fill="#111" font-weight="bold" text-anchor="start" style="white-space:pre" >12 Wavetable</text>
<rect x="1352" y="126.2" width="106" height="24.4" fill="#0fa398" />
<rect x="1375" y="126.2" width="1.5" height="24.4" fill="#00000038" />
<path d="M1358,132.2 L1369,138.4 L1358,144.6 Z" stroke="none" stroke-width="1" fill="#0a3a35" />
<text x="1381" y="143.3" font-size="13.6" fill="#0b2f2a" stroke="#0b2f2a" stroke-width="0.4" font-weight="normal" text-anchor="start" style="white-space:pre" >Wavetable P</text>
<rect x="1352" y="152" width="106" height="24.4" fill="#828585" />
<rect x="1358" y="158" width="12" height="12" fill="#515554" />
<rect x="1352" y="177.8" width="106" height="24.4" fill="#828585" />
<rect x="1358" y="183.8" width="12" height="12" fill="#515554" />
<rect x="1352" y="203.6" width="106" height="24.4" fill="#828585" />
<rect x="1358" y="209.6" width="12" height="12" fill="#515554" />
<rect x="1352" y="229.4" width="106" height="24.4" fill="#828585" />
<rect x="1358" y="235.4" width="12" height="12" fill="#515554" />
<rect x="1352" y="255.5" width="106" height="4" fill="#828585" />
<rect x="1352" y="261" width="106" height="24" fill="#848787" />
<rect x="1358" y="267" width="12" height="12" fill="#515554" />
<rect x="1352" y="288" width="106" height="75" fill="#858888" />
<rect x="1352" y="367" width="106" height="221" fill="#858888" />
<rect x="1460" y="100" width="134" height="24" fill="#13a678" />
<text x="1466" y="117.3" font-size="13.2" fill="#1f3f30" font-weight="bold" text-anchor="start" style="white-space:pre" >13 S dechain Pac</text>
<rect x="1460" y="126.2" width="134" height="24.4" fill="#9ea1a0" />
<rect x="1466" y="132.2" width="12" height="12" fill="#515554" />
<rect x="1460" y="152" width="134" height="24.4" fill="#13a678" />
<rect x="1483" y="152" width="1.5" height="24.4" fill="#00000038" />
<path d="M1466,158 L1477,164.2 L1466,170.4 Z" stroke="none" stroke-width="1" fill="#0d4a35" />
<text x="1489" y="169.1" font-size="13.6" fill="#1a5a40" stroke="#1a5a40" stroke-width="0.4" font-weight="normal" text-anchor="start" style="white-space:pre" >S dechain Pad</text>
<rect x="1460" y="177.8" width="134" height="24.4" fill="#13a678" />
<rect x="1483" y="177.8" width="1.5" height="24.4" fill="#00000038" />
<path d="M1466,183.8 L1477,190.0 L1466,196.20000000000002 Z" stroke="none" stroke-width="1" fill="#0d4a35" />
<text x="1489" y="194.9" font-size="13.6" fill="#1a5a40" stroke="#1a5a40" stroke-width="0.4" font-weight="normal" text-anchor="start" style="white-space:pre" >S dechain Pad</text>
<rect x="1460" y="203.6" width="134" height="24.4" fill="#13a678" />
<rect x="1483" y="203.6" width="1.5" height="24.4" fill="#00000038" />
<path d="M1466,209.6 L1477,215.79999999999998 L1466,222.0 Z" stroke="none" stroke-width="1" fill="#0d4a35" />
<text x="1489" y="220.7" font-size="13.6" fill="#1a5a40" stroke="#1a5a40" stroke-width="0.4" font-weight="normal" text-anchor="start" style="white-space:pre" >S dechain Pad</text>
<rect x="1460" y="229.4" width="134" height="24.4" fill="#13a678" />
<rect x="1483" y="229.4" width="1.5" height="24.4" fill="#00000038" />
<path d="M1466,235.4 L1477,241.6 L1466,247.8 Z" stroke="none" stroke-width="1" fill="#0d4a35" />
<text x="1489" y="246.5" font-size="13.6" fill="#1a5a40" stroke="#1a5a40" stroke-width="0.4" font-weight="normal" text-anchor="start" style="white-space:pre" >S dechain Pad</text>
<rect x="1460" y="255.5" width="134" height="4" fill="#13a678" />
<rect x="1460" y="261" width="134" height="24" fill="#848787" />
<rect x="1466" y="267" width="12" height="12" fill="#515554" />
<rect x="1460" y="288" width="134" height="75" fill="#858888" />
<rect x="1460" y="367" width="134" height="221" fill="#858888" />
<rect x="1598" y="100" width="132" height="24" fill="#d8d9d5" />
<text x="1604" y="117.3" font-size="13.2" fill="#222" font-weight="bold" text-anchor="start" style="white-space:pre" >A Reverb | Compre</text>
<rect x="1598" y="126.2" width="132" height="24.4" fill="#9ea1a0" />
<rect x="1598" y="152" width="132" height="24.4" fill="#828585" />
<rect x="1598" y="177.8" width="132" height="24.4" fill="#828585" />
<rect x="1598" y="203.6" width="132" height="24.4" fill="#828585" />
<rect x="1598" y="229.4" width="132" height="24.4" fill="#828585" />
<rect x="1598" y="255.5" width="132" height="4" fill="#828585" />
<rect x="1598" y="261" width="132" height="24" fill="#848787" />
<rect x="1598" y="288" width="132" height="75" fill="#858888" />
<rect x="1598" y="367" width="132" height="221" fill="#858888" />
<rect x="1734" y="100" width="132" height="24" fill="#b2b3b1" />
<text x="1740" y="117.3" font-size="13.2" fill="#222" font-weight="bold" text-anchor="start" style="white-space:pre" >B Echo</text>
<rect x="1734" y="126.2" width="132" height="24.4" fill="#9ea1a0" />
<rect x="1734" y="152" width="132" height="24.4" fill="#828585" />
<rect x="1734" y="177.8" width="132" height="24.4" fill="#828585" />
<rect x="1734" y="203.6" width="132" height="24.4" fill="#828585" />
<rect x="1734" y="229.4" width="132" height="24.4" fill="#828585" />
<rect x="1734" y="255.5" width="132" height="4" fill="#828585" />
<rect x="1734" y="261" width="132" height="24" fill="#848787" />
<rect x="1734" y="288" width="132" height="75" fill="#858888" />
<rect x="1734" y="367" width="132" height="221" fill="#858888" />
<rect x="1869" y="100" width="132" height="24" fill="#393d3c" />
<text x="1875" y="117.3" font-size="13.2" fill="#eee" font-weight="bold" text-anchor="start" style="white-space:pre" >Master</text>
<rect x="1869" y="126.2" width="132" height="24.4" fill="#9ea1a0" />
<path d="M1875,132.2 L1886,138.4 L1875,144.6 Z" stroke="none" stroke-width="1" fill="#5d6060" />
<text x="1946" y="143.4" font-size="14" fill="#111" stroke="#111" stroke-width="0.4" font-weight="normal" text-anchor="middle" style="white-space:pre" >Scene 1</text>
<rect x="1869" y="152" width="132" height="24.4" fill="#828585" />
<path d="M1875,158 L1886,164.2 L1875,170.4 Z" stroke="none" stroke-width="1" fill="#5d6060" />
<text x="1946" y="169.2" font-size="14" fill="#111" stroke="#111" stroke-width="0.4" font-weight="normal" text-anchor="middle" style="white-space:pre" >Scene 2</text>
<rect x="1869" y="177.8" width="132" height="24.4" fill="#828585" />
<path d="M1875,183.8 L1886,190.0 L1875,196.20000000000002 Z" stroke="none" stroke-width="1" fill="#5d6060" />
<text x="1946" y="195.0" font-size="14" fill="#111" stroke="#111" stroke-width="0.4" font-weight="normal" text-anchor="middle" style="white-space:pre" >Scene 3</text>
<rect x="1869" y="203.6" width="132" height="24.4" fill="#828585" />
<path d="M1875,209.6 L1886,215.79999999999998 L1875,222.0 Z" stroke="none" stroke-width="1" fill="#5d6060" />
<text x="1946" y="220.8" font-size="14" fill="#111" stroke="#111" stroke-width="0.4" font-weight="normal" text-anchor="middle" style="white-space:pre" >Scene 4</text>
<rect x="1869" y="229.4" width="132" height="24.4" fill="#828585" />
<path d="M1875,235.4 L1886,241.6 L1875,247.8 Z" stroke="none" stroke-width="1" fill="#5d6060" />
<text x="1946" y="246.6" font-size="14" fill="#111" stroke="#111" stroke-width="0.4" font-weight="normal" text-anchor="middle" style="white-space:pre" >Scene 5</text>
<rect x="1869" y="255.5" width="132" height="4" fill="#828585" />
<rect x="1869" y="261" width="132" height="24" fill="#848787" />
<rect x="1875" y="267" width="12" height="12" fill="#515554" />
<rect x="1869" y="288" width="132" height="75" fill="#858888" />
<rect x="1869" y="367" width="132" height="221" fill="#858888" />
<rect x="590" y="265" width="14" height="17" fill="#0a4a90" />
<rect x="628" y="265" width="1.5" height="17" fill="#111" />
<rect x="636" y="265" width="33" height="17" fill="#0a4a90" />
<rect x="737" y="265" width="1.5" height="17" fill="#111" />
<rect x="743" y="265" width="33" height="17" fill="#0a4a90" />
<rect x="860" y="265" width="1.5" height="17" fill="#111" />
<rect x="868" y="265" width="44" height="17" fill="#6a1020" />
<rect x="982" y="265" width="1.5" height="17" fill="#111" />
<rect x="1090" y="265" width="1.5" height="17" fill="#111" />
<rect x="1197" y="265" width="1.5" height="17" fill="#111" />
<rect x="1376" y="265" width="46" height="17" fill="#0a3a33" />
<rect x="1415" y="265" width="2" height="17" fill="#111" />
<rect x="1419" y="265" width="3" height="17" fill="#157a70" />
<rect x="1538" y="265" width="1.5" height="17" fill="#111" />
<rect x="1546" y="265" width="45" height="17" fill="#11a050" />
<rect x="1970" y="264" width="28" height="19" fill="#a9aaa9" stroke="#444" stroke-width="1" />
<path d="M1975,268 L1985,273.5 L1975,279 Z" stroke="none" stroke-width="1" fill="#111" />
<line x1="1987" y1="270.5" x2="1994" y2="270.5" stroke="#111" stroke-width="1.3" />
<line x1="1987" y1="273.5" x2="1994" y2="273.5" stroke="#111" stroke-width="1.3" />
<line x1="1987" y1="276.5" x2="1994" y2="276.5" stroke="#111" stroke-width="1.3" />
<text x="640" y="307.0" font-size="14" fill="#111" stroke="#111" stroke-width="0.4" font-weight="normal" text-anchor="middle" style="white-space:pre" >Sends</text>
<path d="M584.54,325.52 A16.5,16.5 0 1 1 603.46,325.52" stroke="#1a1a1a" stroke-width="3" fill="none" stroke-linecap="butt"/>
<path d="M584.54,325.52 A16.5,16.5 0 0 1 583.26,299.47" stroke="#1ab6e6" stroke-width="3" fill="none" />
<line x1="594.00" y1="312.00" x2="583.26" y2="299.47" stroke="#1a1a1a" stroke-width="3" />
<path d="M630.54,350.52 A16.5,16.5 0 1 1 649.46,350.52" stroke="#1a1a1a" stroke-width="3" fill="none" stroke-linecap="butt"/>
<path d="M630.54,350.52 A16.5,16.5 0 1 1 652.55,347.72" stroke="#1ab6e6" stroke-width="3" fill="none" />
<line x1="640.00" y1="337.00" x2="652.55" y2="347.72" stroke="#1a1a1a" stroke-width="3" />
<text x="594" y="333.7" font-size="13" fill="#111" stroke="#111" stroke-width="0.4" font-weight="normal" text-anchor="middle" style="white-space:pre" >A</text>
<text x="640" y="358.7" font-size="13" fill="#111" stroke="#111" stroke-width="0.4" font-weight="normal" text-anchor="middle" style="white-space:pre" >B</text>
<text x="749" y="307.0" font-size="14" fill="#111" stroke="#111" stroke-width="0.4" font-weight="normal" text-anchor="middle" style="white-space:pre" >Sends</text>
<path d="M693.54,325.52 A16.5,16.5 0 1 1 712.46,325.52" stroke="#1a1a1a" stroke-width="3" fill="none" stroke-linecap="butt"/>
<path d="M693.54,325.52 A16.5,16.5 0 0 1 687.92,318.70" stroke="#1ab6e6" stroke-width="3" fill="none" />
<line x1="703.00" y1="312.00" x2="687.92" y2="318.70" stroke="#1a1a1a" stroke-width="3" />
<path d="M739.54,350.52 A16.5,16.5 0 1 1 758.46,350.52" stroke="#1a1a1a" stroke-width="3" fill="none" stroke-linecap="butt"/>
<line x1="749.00" y1="337.00" x2="739.54" y2="350.52" stroke="#1a1a1a" stroke-width="3" />
<text x="703" y="333.7" font-size="13" fill="#111" stroke="#111" stroke-width="0.4" font-weight="normal" text-anchor="middle" style="white-space:pre" >A</text>
<text x="749" y="358.7" font-size="13" fill="#111" stroke="#111" stroke-width="0.4" font-weight="normal" text-anchor="middle" style="white-space:pre" >B</text>
<text x="869" y="307.0" font-size="14" fill="#111" stroke="#111" stroke-width="0.4" font-weight="normal" text-anchor="middle" style="white-space:pre" >Sends</text>
<path d="M813.54,325.52 A16.5,16.5 0 1 1 832.46,325.52" stroke="#1a1a1a" stroke-width="3" fill="none" stroke-linecap="butt"/>
<line x1="823.00" y1="312.00" x2="813.54" y2="325.52" stroke="#1a1a1a" stroke-width="3" />
<path d="M859.54,350.52 A16.5,16.5 0 1 1 878.46,350.52" stroke="#1a1a1a" stroke-width="3" fill="none" stroke-linecap="butt"/>
<line x1="869.00" y1="337.00" x2="859.54" y2="350.52" stroke="#1a1a1a" stroke-width="3" />
<text x="823" y="333.7" font-size="13" fill="#111" stroke="#111" stroke-width="0.4" font-weight="normal" text-anchor="middle" style="white-space:pre" >A</text>
<text x="869" y="358.7" font-size="13" fill="#111" stroke="#111" stroke-width="0.4" font-weight="normal" text-anchor="middle" style="white-space:pre" >B</text>
<text x="993" y="307.0" font-size="14" fill="#111" stroke="#111" stroke-width="0.4" font-weight="normal" text-anchor="middle" style="white-space:pre" >Sends</text>
<path d="M937.54,325.52 A16.5,16.5 0 1 1 956.46,325.52" stroke="#1a1a1a" stroke-width="3" fill="none" stroke-linecap="butt"/>
<line x1="947.00" y1="312.00" x2="937.54" y2="325.52" stroke="#1a1a1a" stroke-width="3" />
<path d="M983.54,350.52 A16.5,16.5 0 1 1 1002.46,350.52" stroke="#1a1a1a" stroke-width="3" fill="none" stroke-linecap="butt"/>
<path d="M983.54,350.52 A16.5,16.5 0 0 1 976.59,335.30" stroke="#1ab6e6" stroke-width="3" fill="none" />
<line x1="993.00" y1="337.00" x2="976.59" y2="335.30" stroke="#1a1a1a" stroke-width="3" />
<text x="947" y="333.7" font-size="13" fill="#111" stroke="#111" stroke-width="0.4" font-weight="normal" text-anchor="middle" style="white-space:pre" >A</text>
<text x="993" y="358.7" font-size="13" fill="#111" stroke="#111" stroke-width="0.4" font-weight="normal" text-anchor="middle" style="white-space:pre" >B</text>
<text x="1102" y="307.0" font-size="14" fill="#111" stroke="#111" stroke-width="0.4" font-weight="normal" text-anchor="middle" style="white-space:pre" >Sends</text>
<path d="M1046.54,325.52 A16.5,16.5 0 1 1 1065.46,325.52" stroke="#1a1a1a" stroke-width="3" fill="none" stroke-linecap="butt"/>
<line x1="1056.00" y1="312.00" x2="1046.54" y2="325.52" stroke="#1a1a1a" stroke-width="3" />
<path d="M1092.54,350.52 A16.5,16.5 0 1 1 1111.46,350.52" stroke="#1a1a1a" stroke-width="3" fill="none" stroke-linecap="butt"/>
<line x1="1102.00" y1="337.00" x2="1092.54" y2="350.52" stroke="#1a1a1a" stroke-width="3" />
<text x="1056" y="333.7" font-size="13" fill="#111" stroke="#111" stroke-width="0.4" font-weight="normal" text-anchor="middle" style="white-space:pre" >A</text>
<text x="1102" y="358.7" font-size="13" fill="#111" stroke="#111" stroke-width="0.4" font-weight="normal" text-anchor="middle" style="white-space:pre" >B</text>
<text x="1210" y="307.0" font-size="14" fill="#111" stroke="#111" stroke-width="0.4" font-weight="normal" text-anchor="middle" style="white-space:pre" >Sends</text>
<path d="M1154.54,325.52 A16.5,16.5 0 1 1 1173.46,325.52" stroke="#1a1a1a" stroke-width="3" fill="none" stroke-linecap="butt"/>
<line x1="1164.00" y1="312.00" x2="1154.54" y2="325.52" stroke="#1a1a1a" stroke-width="3" />
<path d="M1200.54,350.52 A16.5,16.5 0 1 1 1219.46,350.52" stroke="#1a1a1a" stroke-width="3" fill="none" stroke-linecap="butt"/>
<line x1="1210.00" y1="337.00" x2="1200.54" y2="350.52" stroke="#1a1a1a" stroke-width="3" />
<text x="1164" y="333.7" font-size="13" fill="#111" stroke="#111" stroke-width="0.4" font-weight="normal" text-anchor="middle" style="white-space:pre" >A</text>
<text x="1210" y="358.7" font-size="13" fill="#111" stroke="#111" stroke-width="0.4" font-weight="normal" text-anchor="middle" style="white-space:pre" >B</text>
<text x="1319" y="307.0" font-size="14" fill="#111" stroke="#111" stroke-width="0.4" font-weight="normal" text-anchor="middle" style="white-space:pre" >Sends</text>
<path d="M1263.54,325.52 A16.5,16.5 0 1 1 1282.46,325.52" stroke="#1a1a1a" stroke-width="3" fill="none" stroke-linecap="butt"/>
<path d="M1263.54,325.52 A16.5,16.5 0 0 1 1267.28,296.52" stroke="#1ab6e6" stroke-width="3" fill="none" />
<line x1="1273.00" y1="312.00" x2="1267.28" y2="296.52" stroke="#1a1a1a" stroke-width="3" />
<path d="M1309.54,350.52 A16.5,16.5 0 1 1 1328.46,350.52" stroke="#1a1a1a" stroke-width="3" fill="none" stroke-linecap="butt"/>
<path d="M1309.54,350.52 A16.5,16.5 0 0 1 1304.35,329.42" stroke="#1ab6e6" stroke-width="3" fill="none" />
<line x1="1319.00" y1="337.00" x2="1304.35" y2="329.42" stroke="#1a1a1a" stroke-width="3" />
<text x="1273" y="333.7" font-size="13" fill="#111" stroke="#111" stroke-width="0.4" font-weight="normal" text-anchor="middle" style="white-space:pre" >A</text>
<text x="1319" y="358.7" font-size="13" fill="#111" stroke="#111" stroke-width="0.4" font-weight="normal" text-anchor="middle" style="white-space:pre" >B</text>
<text x="1427" y="307.0" font-size="14" fill="#111" stroke="#111" stroke-width="0.4" font-weight="normal" text-anchor="middle" style="white-space:pre" >Sends</text>
<path d="M1371.54,325.52 A16.5,16.5 0 1 1 1390.46,325.52" stroke="#1a1a1a" stroke-width="3" fill="none" stroke-linecap="butt"/>
<path d="M1371.54,325.52 A16.5,16.5 0 0 1 1367.47,302.56" stroke="#1ab6e6" stroke-width="3" fill="none" />
<line x1="1381.00" y1="312.00" x2="1367.47" y2="302.56" stroke="#1a1a1a" stroke-width="3" />
<path d="M1417.54,350.52 A16.5,16.5 0 1 1 1436.46,350.52" stroke="#1a1a1a" stroke-width="3" fill="none" stroke-linecap="butt"/>
<path d="M1417.54,350.52 A16.5,16.5 0 0 1 1427.00,320.50" stroke="#1ab6e6" stroke-width="3" fill="none" />
<line x1="1427.00" y1="337.00" x2="1427.00" y2="320.50" stroke="#1a1a1a" stroke-width="3" />
<text x="1381" y="333.7" font-size="13" fill="#111" stroke="#111" stroke-width="0.4" font-weight="normal" text-anchor="middle" style="white-space:pre" >A</text>
<text x="1427" y="358.7" font-size="13" fill="#111" stroke="#111" stroke-width="0.4" font-weight="normal" text-anchor="middle" style="white-space:pre" >B</text>
<text x="1546" y="307.0" font-size="14" fill="#111" stroke="#111" stroke-width="0.4" font-weight="normal" text-anchor="middle" style="white-space:pre" >Sends</text>
<path d="M1490.54,325.52 A16.5,16.5 0 1 1 1509.46,325.52" stroke="#1a1a1a" stroke-width="3" fill="none" stroke-linecap="butt"/>
<line x1="1500.00" y1="312.00" x2="1490.54" y2="325.52" stroke="#1a1a1a" stroke-width="3" />
<path d="M1536.54,350.52 A16.5,16.5 0 1 1 1555.46,350.52" stroke="#1a1a1a" stroke-width="3" fill="none" stroke-linecap="butt"/>
<line x1="1546.00" y1="337.00" x2="1536.54" y2="350.52" stroke="#1a1a1a" stroke-width="3" />
<text x="1500" y="333.7" font-size="13" fill="#111" stroke="#111" stroke-width="0.4" font-weight="normal" text-anchor="middle" style="white-space:pre" >A</text>
<text x="1546" y="358.7" font-size="13" fill="#111" stroke="#111" stroke-width="0.4" font-weight="normal" text-anchor="middle" style="white-space:pre" >B</text>
<text x="1684" y="307.0" font-size="14" fill="#111" stroke="#111" stroke-width="0.4" font-weight="normal" text-anchor="middle" style="white-space:pre" >Sends</text>
<path d="M1628.54,325.52 A16.5,16.5 0 1 1 1647.46,325.52" stroke="#6c6d6c" stroke-width="3" fill="none" stroke-linecap="butt"/>
<line x1="1638.00" y1="312.00" x2="1628.54" y2="325.52" stroke="#6c6d6c" stroke-width="3" />
<path d="M1674.54,350.52 A16.5,16.5 0 1 1 1693.46,350.52" stroke="#6c6d6c" stroke-width="3" fill="none" stroke-linecap="butt"/>
<line x1="1684.00" y1="337.00" x2="1674.54" y2="350.52" stroke="#6c6d6c" stroke-width="3" />
<text x="1638" y="333.7" font-size="13" fill="#111" stroke="#111" stroke-width="0.4" font-weight="normal" text-anchor="middle" style="white-space:pre" >A</text>
<text x="1684" y="358.7" font-size="13" fill="#111" stroke="#111" stroke-width="0.4" font-weight="normal" text-anchor="middle" style="white-space:pre" >B</text>
<text x="1820" y="307.0" font-size="14" fill="#111" stroke="#111" stroke-width="0.4" font-weight="normal" text-anchor="middle" style="white-space:pre" >Sends</text>
<path d="M1764.54,325.52 A16.5,16.5 0 1 1 1783.46,325.52" stroke="#6c6d6c" stroke-width="3" fill="none" stroke-linecap="butt"/>
<line x1="1774.00" y1="312.00" x2="1764.54" y2="325.52" stroke="#6c6d6c" stroke-width="3" />
<path d="M1810.54,350.52 A16.5,16.5 0 1 1 1829.46,350.52" stroke="#6c6d6c" stroke-width="3" fill="none" stroke-linecap="butt"/>
<line x1="1820.00" y1="337.00" x2="1810.54" y2="350.52" stroke="#6c6d6c" stroke-width="3" />
<text x="1774" y="333.7" font-size="13" fill="#111" stroke="#111" stroke-width="0.4" font-weight="normal" text-anchor="middle" style="white-space:pre" >A</text>
<text x="1820" y="358.7" font-size="13" fill="#111" stroke="#111" stroke-width="0.4" font-weight="normal" text-anchor="middle" style="white-space:pre" >B</text>
<text x="1956" y="307.0" font-size="14" fill="#111" stroke="#111" stroke-width="0.4" font-weight="normal" text-anchor="middle" style="white-space:pre" >Sends</text>
<line x1="1871" y1="313" x2="1893" y2="313" stroke="#b0b0b0" stroke-width="1" />
<rect x="1893" y="305" width="33" height="17" fill="#f0a830" stroke="#555" stroke-width="1" />
<text x="1909.5" y="318.2" font-size="13" fill="#111" stroke="#111" stroke-width="0.4" font-weight="normal" text-anchor="middle" style="white-space:pre" >Post</text>
<line x1="1871" y1="338" x2="1940" y2="338" stroke="#b0b0b0" stroke-width="1" />
<rect x="1940" y="329" width="33" height="17" fill="#f0a830" stroke="#555" stroke-width="1" />
<text x="1956.5" y="342.2" font-size="13" fill="#111" stroke="#111" stroke-width="0.4" font-weight="normal" text-anchor="middle" style="white-space:pre" >Post</text>
<circle cx="626" cy="320" r="4" fill="#f25545" stroke="#111" stroke-width="1.3" />
<rect x="573" y="374" width="50" height="17" fill="#c2c5c5" rx="8.5" stroke="#555" stroke-width="1" />
<text x="598" y="387.5" font-size="14" fill="#111" stroke="#111" stroke-width="0.4" font-weight="normal" text-anchor="middle" style="white-space:pre" >-12.6</text>
<rect x="573" y="400" width="50" height="18" fill="#c5c8c8" stroke="#555" stroke-width="1" />
<text x="598" y="414.0" font-size="14" fill="#111" stroke="#111" stroke-width="0.4" font-weight="normal" text-anchor="middle" style="white-space:pre" >-13.5</text>
<rect x="573" y="453" width="50" height="17" fill="#c5c8c8" stroke="#555" stroke-width="1" />
<rect x="573" y="476" width="50" height="17" fill="#c5c8c8" stroke="#555" stroke-width="1" />
<rect x="574" y="454" width="24" height="15" fill="#1ab6e6" />
<rect x="598" y="477" width="24" height="15" fill="#1ab6e6" />
<text x="598" y="466.5" font-size="14" fill="#111" stroke="#111" stroke-width="0.4" font-weight="normal" text-anchor="middle" style="white-space:pre" >50L</text>
<text x="598" y="489.5" font-size="14" fill="#111" stroke="#111" stroke-width="0.4" font-weight="normal" text-anchor="middle" style="white-space:pre" >50R</text>
<rect x="582" y="503" width="31" height="32" fill="#f0a830" stroke="#555" stroke-width="1" />
<text x="597.5" y="525.5" font-size="18" fill="#111" font-weight="bold" text-anchor="middle" style="white-space:pre" >1</text>
<rect x="582" y="542" width="31" height="17" fill="#a0a3a3" stroke="#555" stroke-width="1" />
<text x="597.5" y="555.2" font-size="13" fill="#111" font-weight="bold" text-anchor="middle" style="white-space:pre" >S</text>
<rect x="582" y="566" width="31" height="18" fill="#a0a3a3" stroke="#555" stroke-width="1" />
<circle cx="597.5" cy="575" r="5" fill="#111" />
<path d="M597.5,570 A5,5 0 0 1 602.5,575 L597.5,575 Z" stroke="none" stroke-width="1" fill="#ddd" />
<rect x="632" y="372" width="7.5" height="212" fill="#1e1f1f" />
<rect x="641" y="372" width="7.5" height="212" fill="#1e1f1f" />
<rect x="632" y="394.5" width="16.5" height="1.2" fill="#858888" />
<line x1="651" y1="373" x2="657" y2="373" stroke="#222" stroke-width="1.6" />
<line x1="651" y1="394" x2="657" y2="394" stroke="#222" stroke-width="1.6" />
<line x1="651" y1="415" x2="657" y2="415" stroke="#222" stroke-width="1.6" />
<line x1="651" y1="436" x2="657" y2="436" stroke="#222" stroke-width="1.6" />
<line x1="651" y1="457" x2="657" y2="457" stroke="#222" stroke-width="1.6" />
<line x1="651" y1="478" x2="657" y2="478" stroke="#222" stroke-width="1.6" />
<line x1="651" y1="499" x2="657" y2="499" stroke="#222" stroke-width="1.6" />
<line x1="651" y1="517" x2="657" y2="517" stroke="#222" stroke-width="1.6" />
<line x1="651" y1="533" x2="657" y2="533" stroke="#222" stroke-width="1.6" />
<line x1="651" y1="547.5" x2="657" y2="547.5" stroke="#222" stroke-width="1.6" />
<line x1="651" y1="560" x2="657" y2="560" stroke="#222" stroke-width="1.6" />
<line x1="651" y1="571" x2="657" y2="571" stroke="#222" stroke-width="1.6" />
<line x1="651" y1="579.5" x2="657" y2="579.5" stroke="#222" stroke-width="1.6" />
<path d="M663,434 L650,441 L663,448 Z" stroke="#4a4e4d" stroke-width="1.2" fill="#a9acac" />
<rect x="682" y="374" width="50" height="17" fill="#c2c5c5" rx="8.5" stroke="#555" stroke-width="1" />
<text x="707" y="387.5" font-size="14" fill="#111" stroke="#111" stroke-width="0.4" font-weight="normal" text-anchor="middle" style="white-space:pre" >-Inf</text>
<rect x="682" y="400" width="50" height="18" fill="#c5c8c8" stroke="#555" stroke-width="1" />
<text x="707" y="414.0" font-size="14" fill="#111" stroke="#111" stroke-width="0.4" font-weight="normal" text-anchor="middle" style="white-space:pre" >-6.0</text>
<circle cx="684" cy="404" r="4" fill="#f25545" stroke="#111" stroke-width="1.3" />
<rect x="682" y="453" width="50" height="17" fill="#c5c8c8" stroke="#555" stroke-width="1" />
<rect x="682" y="476" width="50" height="17" fill="#c5c8c8" stroke="#555" stroke-width="1" />
<rect x="683" y="454" width="24" height="15" fill="#1ab6e6" />
<rect x="707" y="477" width="24" height="15" fill="#1ab6e6" />
<text x="707" y="466.5" font-size="14" fill="#111" stroke="#111" stroke-width="0.4" font-weight="normal" text-anchor="middle" style="white-space:pre" >50L</text>
<text x="707" y="489.5" font-size="14" fill="#111" stroke="#111" stroke-width="0.4" font-weight="normal" text-anchor="middle" style="white-space:pre" >50R</text>
<rect x="691" y="503" width="31" height="32" fill="#f0a830" stroke="#555" stroke-width="1" />
<text x="706.5" y="525.5" font-size="18" fill="#111" font-weight="bold" text-anchor="middle" style="white-space:pre" >2</text>
<rect x="691" y="542" width="31" height="17" fill="#a0a3a3" stroke="#555" stroke-width="1" />
<text x="706.5" y="555.2" font-size="13" fill="#111" font-weight="bold" text-anchor="middle" style="white-space:pre" >S</text>
<rect x="691" y="566" width="31" height="18" fill="#a0a3a3" stroke="#555" stroke-width="1" />
<circle cx="706.5" cy="575" r="5" fill="#111" />
<path d="M706.5,570 A5,5 0 0 1 711.5,575 L706.5,575 Z" stroke="none" stroke-width="1" fill="#ddd" />
<rect x="741" y="372" width="7.5" height="212" fill="#1e1f1f" />
<rect x="750" y="372" width="7.5" height="212" fill="#1e1f1f" />
<rect x="741" y="394.5" width="16.5" height="1.2" fill="#858888" />
<line x1="760" y1="373" x2="766" y2="373" stroke="#222" stroke-width="1.6" />
<line x1="760" y1="394" x2="766" y2="394" stroke="#222" stroke-width="1.6" />
<line x1="760" y1="415" x2="766" y2="415" stroke="#222" stroke-width="1.6" />
<line x1="760" y1="436" x2="766" y2="436" stroke="#222" stroke-width="1.6" />
<line x1="760" y1="457" x2="766" y2="457" stroke="#222" stroke-width="1.6" />
<line x1="760" y1="478" x2="766" y2="478" stroke="#222" stroke-width="1.6" />
<line x1="760" y1="499" x2="766" y2="499" stroke="#222" stroke-width="1.6" />
<line x1="760" y1="517" x2="766" y2="517" stroke="#222" stroke-width="1.6" />
<line x1="760" y1="533" x2="766" y2="533" stroke="#222" stroke-width="1.6" />
<line x1="760" y1="547.5" x2="766" y2="547.5" stroke="#222" stroke-width="1.6" />
<line x1="760" y1="560" x2="766" y2="560" stroke="#222" stroke-width="1.6" />
<line x1="760" y1="571" x2="766" y2="571" stroke="#222" stroke-width="1.6" />
<line x1="760" y1="579.5" x2="766" y2="579.5" stroke="#222" stroke-width="1.6" />
<path d="M772,407 L759,414 L772,421 Z" stroke="#4a4e4d" stroke-width="1.2" fill="#8a8d8d" />
<circle cx="768" cy="414" r="4.2" fill="#f25545" stroke="#111" stroke-width="1.3" />
<rect x="799" y="374" width="50" height="17" fill="#c2c5c5" rx="8.5" stroke="#555" stroke-width="1" />
<text x="824" y="387.5" font-size="14" fill="#111" stroke="#111" stroke-width="0.4" font-weight="normal" text-anchor="middle" style="white-space:pre" >-Inf</text>
<rect x="799" y="400" width="50" height="18" fill="#c5c8c8" stroke="#555" stroke-width="1" />
<text x="824" y="414.0" font-size="14" fill="#111" stroke="#111" stroke-width="0.4" font-weight="normal" text-anchor="middle" style="white-space:pre" >-5.5</text>
<circle cx="801" cy="404" r="4" fill="#f25545" stroke="#111" stroke-width="1.3" />
<text x="790" y="465.7" font-size="13" fill="#111" stroke="#111" stroke-width="0.4" font-weight="normal" text-anchor="start" style="white-space:pre" >L</text>
<text x="790" y="489.2" font-size="13" fill="#111" stroke="#111" stroke-width="0.4" font-weight="normal" text-anchor="start" style="white-space:pre" >R</text>
<rect x="799" y="453" width="50" height="17" fill="#c5c8c8" stroke="#555" stroke-width="1" />
<rect x="799" y="476" width="50" height="17" fill="#c5c8c8" stroke="#555" stroke-width="1" />
<rect x="810" y="454" width="14" height="15" fill="#1ab6e6" />
<rect x="824" y="477" width="14" height="15" fill="#1ab6e6" />
<text x="824" y="466.5" font-size="14" fill="#111" stroke="#111" stroke-width="0.4" font-weight="normal" text-anchor="middle" style="white-space:pre" >28L</text>
<text x="824" y="489.5" font-size="14" fill="#111" stroke="#111" stroke-width="0.4" font-weight="normal" text-anchor="middle" style="white-space:pre" >28R</text>
<rect x="808" y="503" width="31" height="32" fill="#f0a830" stroke="#555" stroke-width="1" />
<text x="823.5" y="525.5" font-size="18" fill="#111" font-weight="bold" text-anchor="middle" style="white-space:pre" >3</text>
<rect x="808" y="542" width="31" height="17" fill="#a0a3a3" stroke="#555" stroke-width="1" />
<text x="823.5" y="555.2" font-size="13" fill="#111" font-weight="bold" text-anchor="middle" style="white-space:pre" >S</text>
<rect x="808" y="566" width="31" height="18" fill="#a0a3a3" stroke="#555" stroke-width="1" />
<circle cx="823.5" cy="575" r="5" fill="#111" />
<path d="M823.5,570 A5,5 0 0 1 828.5,575 L823.5,575 Z" stroke="none" stroke-width="1" fill="#ddd" />
<rect x="858" y="372" width="7.5" height="212" fill="#1e1f1f" />
<rect x="867" y="372" width="7.5" height="212" fill="#1e1f1f" />
<rect x="858" y="394.5" width="16.5" height="1.2" fill="#858888" />
<line x1="877" y1="373" x2="883" y2="373" stroke="#222" stroke-width="1.6" />
<line x1="877" y1="394" x2="883" y2="394" stroke="#222" stroke-width="1.6" />
<line x1="877" y1="415" x2="883" y2="415" stroke="#222" stroke-width="1.6" />
<line x1="877" y1="436" x2="883" y2="436" stroke="#222" stroke-width="1.6" />
<line x1="877" y1="457" x2="883" y2="457" stroke="#222" stroke-width="1.6" />
<line x1="877" y1="478" x2="883" y2="478" stroke="#222" stroke-width="1.6" />
<line x1="877" y1="499" x2="883" y2="499" stroke="#222" stroke-width="1.6" />
<line x1="877" y1="517" x2="883" y2="517" stroke="#222" stroke-width="1.6" />
<line x1="877" y1="533" x2="883" y2="533" stroke="#222" stroke-width="1.6" />
<line x1="877" y1="547.5" x2="883" y2="547.5" stroke="#222" stroke-width="1.6" />
<line x1="877" y1="560" x2="883" y2="560" stroke="#222" stroke-width="1.6" />
<line x1="877" y1="571" x2="883" y2="571" stroke="#222" stroke-width="1.6" />
<line x1="877" y1="579.5" x2="883" y2="579.5" stroke="#222" stroke-width="1.6" />
<text x="907" y="400.0" font-size="14" fill="#111" stroke="#111" stroke-width="0.4" font-weight="normal" text-anchor="end" style="white-space:pre" >0</text>
<text x="907" y="419.0" font-size="14" fill="#111" stroke="#111" stroke-width="0.4" font-weight="normal" text-anchor="end" style="white-space:pre" >6</text>
<text x="907" y="441.0" font-size="14" fill="#111" stroke="#111" stroke-width="0.4" font-weight="normal" text-anchor="end" style="white-space:pre" >12</text>
<text x="907" y="462.0" font-size="14" fill="#111" stroke="#111" stroke-width="0.4" font-weight="normal" text-anchor="end" style="white-space:pre" >18</text>
<text x="907" y="482.0" font-size="14" fill="#111" stroke="#111" stroke-width="0.4" font-weight="normal" text-anchor="end" style="white-space:pre" >24</text>
<text x="907" y="504.0" font-size="14" fill="#111" stroke="#111" stroke-width="0.4" font-weight="normal" text-anchor="end" style="white-space:pre" >30</text>
<text x="907" y="523.0" font-size="14" fill="#111" stroke="#111" stroke-width="0.4" font-weight="normal" text-anchor="end" style="white-space:pre" >36</text>
<text x="907" y="553.0" font-size="14" fill="#111" stroke="#111" stroke-width="0.4" font-weight="normal" text-anchor="end" style="white-space:pre" >48</text>
<text x="907" y="577.0" font-size="14" fill="#111" stroke="#111" stroke-width="0.4" font-weight="normal" text-anchor="end" style="white-space:pre" >60</text>
<path d="M889,407 L876,414 L889,421 Z" stroke="#4a4e4d" stroke-width="1.2" fill="#8a8d8d" />
<circle cx="885" cy="414" r="4.2" fill="#f25545" stroke="#111" stroke-width="1.3" />
<rect x="926" y="374" width="50" height="17" fill="#c2c5c5" rx="8.5" stroke="#555" stroke-width="1" />
<text x="951" y="387.5" font-size="14" fill="#111" stroke="#111" stroke-width="0.4" font-weight="normal" text-anchor="middle" style="white-space:pre" >-Inf</text>
<rect x="926" y="400" width="50" height="18" fill="#c5c8c8" stroke="#555" stroke-width="1" />
<text x="951" y="414.0" font-size="14" fill="#111" stroke="#111" stroke-width="0.4" font-weight="normal" text-anchor="middle" style="white-space:pre" >-16.0</text>
<circle cx="928" cy="404" r="4" fill="#f25545" stroke="#111" stroke-width="1.3" />
<path d="M940.73,493.84 A17.5,17.5 0 0 1 944.01,462.56" stroke="#1a1a1a" stroke-width="3.2" fill="none" />
<path d="M955.99,462.56 A17.5,17.5 0 0 1 959.27,493.84" stroke="#1a1a1a" stroke-width="3.2" fill="none" />
<line x1="950" y1="458" x2="950" y2="480" stroke="#1a1a1a" stroke-width="3.2" />
<path d="M944.5,451 L955.5,451 L950,458 Z" stroke="none" stroke-width="1" fill="#1a1a1a" />
<rect x="935" y="503" width="31" height="32" fill="#f0a830" stroke="#555" stroke-width="1" />
<text x="950.5" y="525.5" font-size="18" fill="#111" font-weight="bold" text-anchor="middle" style="white-space:pre" >4</text>
<rect x="935" y="542" width="31" height="17" fill="#a0a3a3" stroke="#555" stroke-width="1" />
<text x="950.5" y="555.2" font-size="13" fill="#111" font-weight="bold" text-anchor="middle" style="white-space:pre" >S</text>
<rect x="935" y="566" width="31" height="18" fill="#a0a3a3" stroke="#555" stroke-width="1" />
<circle cx="950.5" cy="575" r="5" fill="#111" />
<path d="M950.5,570 A5,5 0 0 1 955.5,575 L950.5,575 Z" stroke="none" stroke-width="1" fill="#ddd" />
<rect x="985" y="372" width="7.5" height="212" fill="#1e1f1f" />
<rect x="994" y="372" width="7.5" height="212" fill="#1e1f1f" />
<rect x="985" y="394.5" width="16.5" height="1.2" fill="#858888" />
<line x1="1004" y1="373" x2="1010" y2="373" stroke="#222" stroke-width="1.6" />
<line x1="1004" y1="394" x2="1010" y2="394" stroke="#222" stroke-width="1.6" />
<line x1="1004" y1="415" x2="1010" y2="415" stroke="#222" stroke-width="1.6" />
<line x1="1004" y1="436" x2="1010" y2="436" stroke="#222" stroke-width="1.6" />
<line x1="1004" y1="457" x2="1010" y2="457" stroke="#222" stroke-width="1.6" />
<line x1="1004" y1="478" x2="1010" y2="478" stroke="#222" stroke-width="1.6" />
<line x1="1004" y1="499" x2="1010" y2="499" stroke="#222" stroke-width="1.6" />
<line x1="1004" y1="517" x2="1010" y2="517" stroke="#222" stroke-width="1.6" />
<line x1="1004" y1="533" x2="1010" y2="533" stroke="#222" stroke-width="1.6" />
<line x1="1004" y1="547.5" x2="1010" y2="547.5" stroke="#222" stroke-width="1.6" />
<line x1="1004" y1="560" x2="1010" y2="560" stroke="#222" stroke-width="1.6" />
<line x1="1004" y1="571" x2="1010" y2="571" stroke="#222" stroke-width="1.6" />
<line x1="1004" y1="579.5" x2="1010" y2="579.5" stroke="#222" stroke-width="1.6" />
<path d="M1016,444 L1003,451 L1016,458 Z" stroke="#4a4e4d" stroke-width="1.2" fill="#8a8d8d" />
<circle cx="1012" cy="451" r="4.2" fill="#f25545" stroke="#111" stroke-width="1.3" />
<rect x="1035" y="374" width="50" height="17" fill="#c2c5c5" rx="8.5" stroke="#555" stroke-width="1" />
<text x="1060" y="387.5" font-size="14" fill="#111" stroke="#111" stroke-width="0.4" font-weight="normal" text-anchor="middle" style="white-space:pre" >-Inf</text>
<rect x="1035" y="400" width="50" height="18" fill="#c5c8c8" stroke="#555" stroke-width="1" />
<text x="1060" y="414.0" font-size="14" fill="#111" stroke="#111" stroke-width="0.4" font-weight="normal" text-anchor="middle" style="white-space:pre" >-14.9</text>
<path d="M1049.73,493.84 A17.5,17.5 0 0 1 1053.01,462.56" stroke="#1a1a1a" stroke-width="3.2" fill="none" />
<path d="M1064.99,462.56 A17.5,17.5 0 0 1 1068.27,493.84" stroke="#1a1a1a" stroke-width="3.2" fill="none" />
<line x1="1059" y1="458" x2="1059" y2="480" stroke="#1a1a1a" stroke-width="3.2" />
<path d="M1053.5,451 L1064.5,451 L1059,458 Z" stroke="none" stroke-width="1" fill="#1a1a1a" />
<rect x="1044" y="503" width="31" height="32" fill="#f0a830" stroke="#555" stroke-width="1" />
<text x="1059.5" y="525.5" font-size="18" fill="#111" font-weight="bold" text-anchor="middle" style="white-space:pre" >5</text>
<rect x="1044" y="542" width="31" height="17" fill="#a0a3a3" stroke="#555" stroke-width="1" />
<text x="1059.5" y="555.2" font-size="13" fill="#111" font-weight="bold" text-anchor="middle" style="white-space:pre" >S</text>
<rect x="1044" y="566" width="31" height="18" fill="#a0a3a3" stroke="#555" stroke-width="1" />
<circle cx="1059.5" cy="575" r="5" fill="#111" />
<path d="M1059.5,570 A5,5 0 0 1 1064.5,575 L1059.5,575 Z" stroke="none" stroke-width="1" fill="#ddd" />
<rect x="1094" y="372" width="7.5" height="212" fill="#1e1f1f" />
<rect x="1103" y="372" width="7.5" height="212" fill="#1e1f1f" />
<rect x="1094" y="394.5" width="16.5" height="1.2" fill="#858888" />
<line x1="1113" y1="373" x2="1119" y2="373" stroke="#222" stroke-width="1.6" />
<line x1="1113" y1="394" x2="1119" y2="394" stroke="#222" stroke-width="1.6" />
<line x1="1113" y1="415" x2="1119" y2="415" stroke="#222" stroke-width="1.6" />
<line x1="1113" y1="436" x2="1119" y2="436" stroke="#222" stroke-width="1.6" />
<line x1="1113" y1="457" x2="1119" y2="457" stroke="#222" stroke-width="1.6" />
<line x1="1113" y1="478" x2="1119" y2="478" stroke="#222" stroke-width="1.6" />
<line x1="1113" y1="499" x2="1119" y2="499" stroke="#222" stroke-width="1.6" />
<line x1="1113" y1="517" x2="1119" y2="517" stroke="#222" stroke-width="1.6" />
<line x1="1113" y1="533" x2="1119" y2="533" stroke="#222" stroke-width="1.6" />
<line x1="1113" y1="547.5" x2="1119" y2="547.5" stroke="#222" stroke-width="1.6" />
<line x1="1113" y1="560" x2="1119" y2="560" stroke="#222" stroke-width="1.6" />
<line x1="1113" y1="571" x2="1119" y2="571" stroke="#222" stroke-width="1.6" />
<line x1="1113" y1="579.5" x2="1119" y2="579.5" stroke="#222" stroke-width="1.6" />
<path d="M1125,439 L1112,446 L1125,453 Z" stroke="#4a4e4d" stroke-width="1.2" fill="#a9acac" />
<rect x="1143" y="374" width="50" height="17" fill="#c2c5c5" rx="8.5" stroke="#555" stroke-width="1" />
<text x="1168" y="387.5" font-size="14" fill="#111" stroke="#111" stroke-width="0.4" font-weight="normal" text-anchor="middle" style="white-space:pre" >-Inf</text>
<rect x="1143" y="400" width="50" height="18" fill="#c5c8c8" stroke="#555" stroke-width="1" />
<text x="1168" y="414.0" font-size="14" fill="#111" stroke="#111" stroke-width="0.4" font-weight="normal" text-anchor="middle" style="white-space:pre" >-6.0</text>
<circle cx="1145" cy="404" r="4" fill="#f25545" stroke="#111" stroke-width="1.3" />
<path d="M1157.73,493.84 A17.5,17.5 0 0 1 1161.01,462.56" stroke="#1a1a1a" stroke-width="3.2" fill="none" />
<path d="M1172.99,462.56 A17.5,17.5 0 0 1 1176.27,493.84" stroke="#1a1a1a" stroke-width="3.2" fill="none" />
<line x1="1167" y1="458" x2="1167" y2="480" stroke="#1a1a1a" stroke-width="3.2" />
<path d="M1161.5,451 L1172.5,451 L1167,458 Z" stroke="none" stroke-width="1" fill="#1a1a1a" />
<rect x="1152" y="503" width="31" height="32" fill="#f0a830" stroke="#555" stroke-width="1" />
<text x="1167.5" y="525.5" font-size="18" fill="#111" font-weight="bold" text-anchor="middle" style="white-space:pre" >6</text>
<rect x="1152" y="542" width="31" height="17" fill="#a0a3a3" stroke="#555" stroke-width="1" />
<text x="1167.5" y="555.2" font-size="13" fill="#111" font-weight="bold" text-anchor="middle" style="white-space:pre" >S</text>
<rect x="1152" y="566" width="31" height="18" fill="#a0a3a3" stroke="#555" stroke-width="1" />
<circle cx="1167.5" cy="575" r="5" fill="#111" />
<path d="M1167.5,570 A5,5 0 0 1 1172.5,575 L1167.5,575 Z" stroke="none" stroke-width="1" fill="#ddd" />
<rect x="1202" y="372" width="7.5" height="212" fill="#1e1f1f" />
<rect x="1211" y="372" width="7.5" height="212" fill="#1e1f1f" />
<rect x="1202" y="394.5" width="16.5" height="1.2" fill="#858888" />
<line x1="1221" y1="373" x2="1227" y2="373" stroke="#222" stroke-width="1.6" />
<line x1="1221" y1="394" x2="1227" y2="394" stroke="#222" stroke-width="1.6" />
<line x1="1221" y1="415" x2="1227" y2="415" stroke="#222" stroke-width="1.6" />
<line x1="1221" y1="436" x2="1227" y2="436" stroke="#222" stroke-width="1.6" />
<line x1="1221" y1="457" x2="1227" y2="457" stroke="#222" stroke-width="1.6" />
<line x1="1221" y1="478" x2="1227" y2="478" stroke="#222" stroke-width="1.6" />
<line x1="1221" y1="499" x2="1227" y2="499" stroke="#222" stroke-width="1.6" />
<line x1="1221" y1="517" x2="1227" y2="517" stroke="#222" stroke-width="1.6" />
<line x1="1221" y1="533" x2="1227" y2="533" stroke="#222" stroke-width="1.6" />
<line x1="1221" y1="547.5" x2="1227" y2="547.5" stroke="#222" stroke-width="1.6" />
<line x1="1221" y1="560" x2="1227" y2="560" stroke="#222" stroke-width="1.6" />
<line x1="1221" y1="571" x2="1227" y2="571" stroke="#222" stroke-width="1.6" />
<line x1="1221" y1="579.5" x2="1227" y2="579.5" stroke="#222" stroke-width="1.6" />
<path d="M1233,408 L1220,415 L1233,422 Z" stroke="#4a4e4d" stroke-width="1.2" fill="#8a8d8d" />
<circle cx="1229" cy="415" r="4.2" fill="#f25545" stroke="#111" stroke-width="1.3" />
<rect x="1252" y="374" width="50" height="17" fill="#c2c5c5" rx="8.5" stroke="#555" stroke-width="1" />
<text x="1277" y="387.5" font-size="14" fill="#111" stroke="#111" stroke-width="0.4" font-weight="normal" text-anchor="middle" style="white-space:pre" >-15.8</text>
<rect x="1252" y="400" width="50" height="18" fill="#c5c8c8" stroke="#555" stroke-width="1" />
<text x="1277" y="414.0" font-size="14" fill="#111" stroke="#111" stroke-width="0.4" font-weight="normal" text-anchor="middle" style="white-space:pre" >-7.2</text>
<circle cx="1254" cy="404" r="4" fill="#f25545" stroke="#111" stroke-width="1.3" />
<path d="M1266.73,493.84 A17.5,17.5 0 0 1 1270.01,462.56" stroke="#1a1a1a" stroke-width="3.2" fill="none" />
<path d="M1281.99,462.56 A17.5,17.5 0 0 1 1285.27,493.84" stroke="#1a1a1a" stroke-width="3.2" fill="none" />
<line x1="1276" y1="458" x2="1276" y2="480" stroke="#1a1a1a" stroke-width="3.2" />
<path d="M1270.5,451 L1281.5,451 L1276,458 Z" stroke="none" stroke-width="1" fill="#1a1a1a" />
<rect x="1261" y="503" width="31" height="32" fill="#f0a830" stroke="#555" stroke-width="1" />
<text x="1276.5" y="525.5" font-size="18" fill="#111" font-weight="bold" text-anchor="middle" style="white-space:pre" >7</text>
<rect x="1261" y="542" width="31" height="17" fill="#a0a3a3" stroke="#555" stroke-width="1" />
<text x="1276.5" y="555.2" font-size="13" fill="#111" font-weight="bold" text-anchor="middle" style="white-space:pre" >S</text>
<rect x="1311" y="372" width="7.5" height="212" fill="#1e1f1f" />
<rect x="1320" y="372" width="7.5" height="212" fill="#1e1f1f" />
<rect x="1311" y="394.5" width="16.5" height="1.2" fill="#858888" />
<rect x="1311" y="460" width="7.5" height="124" fill="#18b050" />
<rect x="1320" y="468" width="7.5" height="116" fill="#18b050" />
<rect x="1311" y="460" width="7.5" height="30" fill="#2f8f52" />
<rect x="1320" y="468" width="7.5" height="30" fill="#2f8f52" />
<rect x="1311" y="460" width="7.5" height="1.5" fill="#30d060" />
<rect x="1320" y="468" width="7.5" height="1.5" fill="#30d060" />
<line x1="1330" y1="373" x2="1336" y2="373" stroke="#222" stroke-width="1.6" />
<line x1="1330" y1="394" x2="1336" y2="394" stroke="#222" stroke-width="1.6" />
<line x1="1330" y1="415" x2="1336" y2="415" stroke="#222" stroke-width="1.6" />
<line x1="1330" y1="436" x2="1336" y2="436" stroke="#222" stroke-width="1.6" />
<line x1="1330" y1="457" x2="1336" y2="457" stroke="#222" stroke-width="1.6" />
<line x1="1330" y1="478" x2="1336" y2="478" stroke="#222" stroke-width="1.6" />
<line x1="1330" y1="499" x2="1336" y2="499" stroke="#222" stroke-width="1.6" />
<line x1="1330" y1="517" x2="1336" y2="517" stroke="#222" stroke-width="1.6" />
<line x1="1330" y1="533" x2="1336" y2="533" stroke="#222" stroke-width="1.6" />
<line x1="1330" y1="547.5" x2="1336" y2="547.5" stroke="#222" stroke-width="1.6" />
<line x1="1330" y1="560" x2="1336" y2="560" stroke="#222" stroke-width="1.6" />
<line x1="1330" y1="571" x2="1336" y2="571" stroke="#222" stroke-width="1.6" />
<line x1="1330" y1="579.5" x2="1336" y2="579.5" stroke="#222" stroke-width="1.6" />
<path d="M1342,413 L1329,420 L1342,427 Z" stroke="#4a4e4d" stroke-width="1.2" fill="#8a8d8d" />
<circle cx="1338" cy="420" r="4.2" fill="#f25545" stroke="#111" stroke-width="1.3" />
<rect x="1360" y="374" width="50" height="17" fill="#c2c5c5" rx="8.5" stroke="#555" stroke-width="1" />
<text x="1385" y="387.5" font-size="14" fill="#111" stroke="#111" stroke-width="0.4" font-weight="normal" text-anchor="middle" style="white-space:pre" >-10.1</text>
<rect x="1360" y="400" width="50" height="18" fill="#c5c8c8" stroke="#555" stroke-width="1" />
<text x="1385" y="414.0" font-size="14" fill="#111" stroke="#111" stroke-width="0.4" font-weight="normal" text-anchor="middle" style="white-space:pre" >-8.0</text>
<path d="M1374.73,493.84 A17.5,17.5 0 0 1 1378.01,462.56" stroke="#1a1a1a" stroke-width="3.2" fill="none" />
<path d="M1389.99,462.56 A17.5,17.5 0 0 1 1393.27,493.84" stroke="#1a1a1a" stroke-width="3.2" fill="none" />
<line x1="1384" y1="458" x2="1384" y2="480" stroke="#1a1a1a" stroke-width="3.2" />
<path d="M1378.5,451 L1389.5,451 L1384,458 Z" stroke="none" stroke-width="1" fill="#1a1a1a" />
<rect x="1369" y="503" width="31" height="32" fill="#f0a830" stroke="#555" stroke-width="1" />
<text x="1384.5" y="525.5" font-size="18" fill="#111" font-weight="bold" text-anchor="middle" style="white-space:pre" >12</text>
<rect x="1369" y="542" width="31" height="17" fill="#a0a3a3" stroke="#555" stroke-width="1" />
<text x="1384.5" y="555.2" font-size="13" fill="#111" font-weight="bold" text-anchor="middle" style="white-space:pre" >S</text>
<rect x="1369" y="566" width="31" height="18" fill="#a0a3a3" stroke="#555" stroke-width="1" />
<circle cx="1384.5" cy="575" r="4.5" fill="#555" />
<rect x="1419" y="372" width="7.5" height="212" fill="#1e1f1f" />
<rect x="1428" y="372" width="7.5" height="212" fill="#1e1f1f" />
<rect x="1419" y="394.5" width="16.5" height="1.2" fill="#858888" />
<rect x="1419" y="444" width="7.5" height="140" fill="#18b050" />
<rect x="1428" y="444" width="7.5" height="140" fill="#18b050" />
<rect x="1419" y="444" width="7.5" height="30" fill="#2f8f52" />
<rect x="1428" y="444" width="7.5" height="30" fill="#2f8f52" />
<rect x="1419" y="430" width="7.5" height="1.5" fill="#30d060" />
<rect x="1428" y="430" width="7.5" height="1.5" fill="#30d060" />
<line x1="1438" y1="373" x2="1444" y2="373" stroke="#222" stroke-width="1.6" />
<line x1="1438" y1="394" x2="1444" y2="394" stroke="#222" stroke-width="1.6" />
<line x1="1438" y1="415" x2="1444" y2="415" stroke="#222" stroke-width="1.6" />
<line x1="1438" y1="436" x2="1444" y2="436" stroke="#222" stroke-width="1.6" />
<line x1="1438" y1="457" x2="1444" y2="457" stroke="#222" stroke-width="1.6" />
<line x1="1438" y1="478" x2="1444" y2="478" stroke="#222" stroke-width="1.6" />
<line x1="1438" y1="499" x2="1444" y2="499" stroke="#222" stroke-width="1.6" />
<line x1="1438" y1="517" x2="1444" y2="517" stroke="#222" stroke-width="1.6" />
<line x1="1438" y1="533" x2="1444" y2="533" stroke="#222" stroke-width="1.6" />
<line x1="1438" y1="547.5" x2="1444" y2="547.5" stroke="#222" stroke-width="1.6" />
<line x1="1438" y1="560" x2="1444" y2="560" stroke="#222" stroke-width="1.6" />
<line x1="1438" y1="571" x2="1444" y2="571" stroke="#222" stroke-width="1.6" />
<line x1="1438" y1="579.5" x2="1444" y2="579.5" stroke="#222" stroke-width="1.6" />
<path d="M1450,414 L1437,421 L1450,428 Z" stroke="#4a4e4d" stroke-width="1.2" fill="#a9acac" />
<rect x="1476" y="374" width="50" height="17" fill="#c2c5c5" rx="8.5" stroke="#555" stroke-width="1" />
<text x="1501" y="387.5" font-size="14" fill="#111" stroke="#111" stroke-width="0.4" font-weight="normal" text-anchor="middle" style="white-space:pre" >-Inf</text>
<rect x="1476" y="400" width="50" height="18" fill="#c5c8c8" stroke="#555" stroke-width="1" />
<text x="1501" y="414.0" font-size="14" fill="#111" stroke="#111" stroke-width="0.4" font-weight="normal" text-anchor="middle" style="white-space:pre" >-11.6</text>
<circle cx="1478" cy="404" r="4" fill="#f25545" stroke="#111" stroke-width="1.3" />
<path d="M1490.73,493.84 A17.5,17.5 0 0 1 1494.01,462.56" stroke="#1a1a1a" stroke-width="3.2" fill="none" />
<path d="M1505.99,462.56 A17.5,17.5 0 0 1 1509.27,493.84" stroke="#1a1a1a" stroke-width="3.2" fill="none" />
<line x1="1500" y1="458" x2="1500" y2="480" stroke="#1a1a1a" stroke-width="3.2" />
<path d="M1494.5,451 L1505.5,451 L1500,458 Z" stroke="none" stroke-width="1" fill="#1a1a1a" />
<rect x="1485" y="503" width="31" height="32" fill="#f0a830" stroke="#555" stroke-width="1" />
<text x="1500.5" y="525.5" font-size="18" fill="#111" font-weight="bold" text-anchor="middle" style="white-space:pre" >13</text>
<rect x="1485" y="542" width="31" height="17" fill="#a0a3a3" stroke="#555" stroke-width="1" />
<text x="1500.5" y="555.2" font-size="13" fill="#111" font-weight="bold" text-anchor="middle" style="white-space:pre" >S</text>
<rect x="1485" y="566" width="31" height="18" fill="#a0a3a3" stroke="#555" stroke-width="1" />
<circle cx="1500.5" cy="575" r="5" fill="#111" />
<path d="M1500.5,570 A5,5 0 0 1 1505.5,575 L1500.5,575 Z" stroke="none" stroke-width="1" fill="#ddd" />
<rect x="1535" y="372" width="7.5" height="212" fill="#1e1f1f" />
<rect x="1544" y="372" width="7.5" height="212" fill="#1e1f1f" />
<rect x="1535" y="394.5" width="16.5" height="1.2" fill="#858888" />
<line x1="1554" y1="373" x2="1560" y2="373" stroke="#222" stroke-width="1.6" />
<line x1="1554" y1="394" x2="1560" y2="394" stroke="#222" stroke-width="1.6" />
<line x1="1554" y1="415" x2="1560" y2="415" stroke="#222" stroke-width="1.6" />
<line x1="1554" y1="436" x2="1560" y2="436" stroke="#222" stroke-width="1.6" />
<line x1="1554" y1="457" x2="1560" y2="457" stroke="#222" stroke-width="1.6" />
<line x1="1554" y1="478" x2="1560" y2="478" stroke="#222" stroke-width="1.6" />
<line x1="1554" y1="499" x2="1560" y2="499" stroke="#222" stroke-width="1.6" />
<line x1="1554" y1="517" x2="1560" y2="517" stroke="#222" stroke-width="1.6" />
<line x1="1554" y1="533" x2="1560" y2="533" stroke="#222" stroke-width="1.6" />
<line x1="1554" y1="547.5" x2="1560" y2="547.5" stroke="#222" stroke-width="1.6" />
<line x1="1554" y1="560" x2="1560" y2="560" stroke="#222" stroke-width="1.6" />
<line x1="1554" y1="571" x2="1560" y2="571" stroke="#222" stroke-width="1.6" />
<line x1="1554" y1="579.5" x2="1560" y2="579.5" stroke="#222" stroke-width="1.6" />
<text x="1584" y="400.0" font-size="14" fill="#111" stroke="#111" stroke-width="0.4" font-weight="normal" text-anchor="end" style="white-space:pre" >0</text>
<text x="1584" y="419.0" font-size="14" fill="#111" stroke="#111" stroke-width="0.4" font-weight="normal" text-anchor="end" style="white-space:pre" >6</text>
<text x="1584" y="441.0" font-size="14" fill="#111" stroke="#111" stroke-width="0.4" font-weight="normal" text-anchor="end" style="white-space:pre" >12</text>
<text x="1584" y="462.0" font-size="14" fill="#111" stroke="#111" stroke-width="0.4" font-weight="normal" text-anchor="end" style="white-space:pre" >18</text>
<text x="1584" y="482.0" font-size="14" fill="#111" stroke="#111" stroke-width="0.4" font-weight="normal" text-anchor="end" style="white-space:pre" >24</text>
<text x="1584" y="504.0" font-size="14" fill="#111" stroke="#111" stroke-width="0.4" font-weight="normal" text-anchor="end" style="white-space:pre" >30</text>
<text x="1584" y="523.0" font-size="14" fill="#111" stroke="#111" stroke-width="0.4" font-weight="normal" text-anchor="end" style="white-space:pre" >36</text>
<text x="1584" y="553.0" font-size="14" fill="#111" stroke="#111" stroke-width="0.4" font-weight="normal" text-anchor="end" style="white-space:pre" >48</text>
<text x="1584" y="577.0" font-size="14" fill="#111" stroke="#111" stroke-width="0.4" font-weight="normal" text-anchor="end" style="white-space:pre" >60</text>
<path d="M1566,428 L1553,435 L1566,442 Z" stroke="#4a4e4d" stroke-width="1.2" fill="#8a8d8d" />
<circle cx="1562" cy="435" r="4.2" fill="#f25545" stroke="#111" stroke-width="1.3" />
<rect x="1614" y="374" width="50" height="17" fill="#c2c5c5" rx="8.5" stroke="#555" stroke-width="1" />
<text x="1639" y="387.5" font-size="14" fill="#111" stroke="#111" stroke-width="0.4" font-weight="normal" text-anchor="middle" style="white-space:pre" >-40.9</text>
<rect x="1614" y="400" width="50" height="18" fill="#c5c8c8" stroke="#555" stroke-width="1" />
<text x="1639" y="414.0" font-size="14" fill="#111" stroke="#111" stroke-width="0.4" font-weight="normal" text-anchor="middle" style="white-space:pre" >0</text>
<path d="M1628.73,493.84 A17.5,17.5 0 0 1 1632.01,462.56" stroke="#1a1a1a" stroke-width="3.2" fill="none" />
<path d="M1643.99,462.56 A17.5,17.5 0 0 1 1647.27,493.84" stroke="#1a1a1a" stroke-width="3.2" fill="none" />
<line x1="1638" y1="458" x2="1638" y2="480" stroke="#1a1a1a" stroke-width="3.2" />
<path d="M1632.5,451 L1643.5,451 L1638,458 Z" stroke="none" stroke-width="1" fill="#1a1a1a" />
<rect x="1623" y="503" width="31" height="32" fill="#f0a830" stroke="#555" stroke-width="1" />
<text x="1638.5" y="525.5" font-size="18" fill="#111" font-weight="bold" text-anchor="middle" style="white-space:pre" >A</text>
<rect x="1623" y="542" width="31" height="17" fill="#a0a3a3" stroke="#555" stroke-width="1" />
<text x="1638.5" y="555.2" font-size="13" fill="#111" font-weight="bold" text-anchor="middle" style="white-space:pre" >S</text>
<rect x="1673" y="372" width="7.5" height="212" fill="#1e1f1f" />
<rect x="1682" y="372" width="7.5" height="212" fill="#1e1f1f" />
<rect x="1673" y="394.5" width="16.5" height="1.2" fill="#858888" />
<rect x="1673" y="548" width="7.5" height="36" fill="#18b050" />
<rect x="1682" y="544" width="7.5" height="40" fill="#18b050" />
<rect x="1673" y="548" width="7.5" height="1.5" fill="#30d060" />
<rect x="1682" y="544" width="7.5" height="1.5" fill="#30d060" />
<line x1="1692" y1="373" x2="1698" y2="373" stroke="#222" stroke-width="1.6" />
<line x1="1692" y1="394" x2="1698" y2="394" stroke="#222" stroke-width="1.6" />
<line x1="1692" y1="415" x2="1698" y2="415" stroke="#222" stroke-width="1.6" />
<line x1="1692" y1="436" x2="1698" y2="436" stroke="#222" stroke-width="1.6" />
<line x1="1692" y1="457" x2="1698" y2="457" stroke="#222" stroke-width="1.6" />
<line x1="1692" y1="478" x2="1698" y2="478" stroke="#222" stroke-width="1.6" />
<line x1="1692" y1="499" x2="1698" y2="499" stroke="#222" stroke-width="1.6" />
<line x1="1692" y1="517" x2="1698" y2="517" stroke="#222" stroke-width="1.6" />
<line x1="1692" y1="533" x2="1698" y2="533" stroke="#222" stroke-width="1.6" />
<line x1="1692" y1="547.5" x2="1698" y2="547.5" stroke="#222" stroke-width="1.6" />
<line x1="1692" y1="560" x2="1698" y2="560" stroke="#222" stroke-width="1.6" />
<line x1="1692" y1="571" x2="1698" y2="571" stroke="#222" stroke-width="1.6" />
<line x1="1692" y1="579.5" x2="1698" y2="579.5" stroke="#222" stroke-width="1.6" />
<text x="1722" y="400.0" font-size="14" fill="#111" stroke="#111" stroke-width="0.4" font-weight="normal" text-anchor="end" style="white-space:pre" >0</text>
<text x="1722" y="419.0" font-size="14" fill="#111" stroke="#111" stroke-width="0.4" font-weight="normal" text-anchor="end" style="white-space:pre" >6</text>
<text x="1722" y="441.0" font-size="14" fill="#111" stroke="#111" stroke-width="0.4" font-weight="normal" text-anchor="end" style="white-space:pre" >12</text>
<text x="1722" y="462.0" font-size="14" fill="#111" stroke="#111" stroke-width="0.4" font-weight="normal" text-anchor="end" style="white-space:pre" >18</text>
<text x="1722" y="482.0" font-size="14" fill="#111" stroke="#111" stroke-width="0.4" font-weight="normal" text-anchor="end" style="white-space:pre" >24</text>
<text x="1722" y="504.0" font-size="14" fill="#111" stroke="#111" stroke-width="0.4" font-weight="normal" text-anchor="end" style="white-space:pre" >30</text>
<text x="1722" y="523.0" font-size="14" fill="#111" stroke="#111" stroke-width="0.4" font-weight="normal" text-anchor="end" style="white-space:pre" >36</text>
<text x="1722" y="553.0" font-size="14" fill="#111" stroke="#111" stroke-width="0.4" font-weight="normal" text-anchor="end" style="white-space:pre" >48</text>
<text x="1722" y="577.0" font-size="14" fill="#111" stroke="#111" stroke-width="0.4" font-weight="normal" text-anchor="end" style="white-space:pre" >60</text>
<path d="M1704,389 L1691,396 L1704,403 Z" stroke="#4a4e4d" stroke-width="1.2" fill="#a9acac" />
<rect x="1750" y="374" width="50" height="17" fill="#c2c5c5" rx="8.5" stroke="#555" stroke-width="1" />
<text x="1775" y="387.5" font-size="14" fill="#111" stroke="#111" stroke-width="0.4" font-weight="normal" text-anchor="middle" style="white-space:pre" >-6.33</text>
<rect x="1750" y="400" width="50" height="18" fill="#c5c8c8" stroke="#555" stroke-width="1" />
<text x="1775" y="414.0" font-size="14" fill="#111" stroke="#111" stroke-width="0.4" font-weight="normal" text-anchor="middle" style="white-space:pre" >0</text>
<path d="M1764.73,493.84 A17.5,17.5 0 0 1 1768.01,462.56" stroke="#1a1a1a" stroke-width="3.2" fill="none" />
<path d="M1779.99,462.56 A17.5,17.5 0 0 1 1783.27,493.84" stroke="#1a1a1a" stroke-width="3.2" fill="none" />
<line x1="1774" y1="458" x2="1774" y2="480" stroke="#1a1a1a" stroke-width="3.2" />
<path d="M1768.5,451 L1779.5,451 L1774,458 Z" stroke="none" stroke-width="1" fill="#1a1a1a" />
<rect x="1759" y="503" width="31" height="32" fill="#f0a830" stroke="#555" stroke-width="1" />
<text x="1774.5" y="525.5" font-size="18" fill="#111" font-weight="bold" text-anchor="middle" style="white-space:pre" >B</text>
<rect x="1759" y="542" width="31" height="17" fill="#a0a3a3" stroke="#555" stroke-width="1" />
<text x="1774.5" y="555.2" font-size="13" fill="#111" font-weight="bold" text-anchor="middle" style="white-space:pre" >S</text>
<rect x="1809" y="372" width="7.5" height="212" fill="#1e1f1f" />
<rect x="1818" y="372" width="7.5" height="212" fill="#1e1f1f" />
<rect x="1809" y="394.5" width="16.5" height="1.2" fill="#858888" />
<rect x="1809" y="433" width="7.5" height="151" fill="#18b050" />
<rect x="1818" y="445" width="7.5" height="139" fill="#18b050" />
<rect x="1809" y="433" width="7.5" height="30" fill="#2f8f52" />
<rect x="1818" y="445" width="7.5" height="30" fill="#2f8f52" />
<rect x="1809" y="416" width="7.5" height="1.5" fill="#30d060" />
<rect x="1818" y="428" width="7.5" height="1.5" fill="#30d060" />
<line x1="1828" y1="373" x2="1834" y2="373" stroke="#222" stroke-width="1.6" />
<line x1="1828" y1="394" x2="1834" y2="394" stroke="#222" stroke-width="1.6" />
<line x1="1828" y1="415" x2="1834" y2="415" stroke="#222" stroke-width="1.6" />
<line x1="1828" y1="436" x2="1834" y2="436" stroke="#222" stroke-width="1.6" />
<line x1="1828" y1="457" x2="1834" y2="457" stroke="#222" stroke-width="1.6" />
<line x1="1828" y1="478" x2="1834" y2="478" stroke="#222" stroke-width="1.6" />
<line x1="1828" y1="499" x2="1834" y2="499" stroke="#222" stroke-width="1.6" />
<line x1="1828" y1="517" x2="1834" y2="517" stroke="#222" stroke-width="1.6" />
<line x1="1828" y1="533" x2="1834" y2="533" stroke="#222" stroke-width="1.6" />
<line x1="1828" y1="547.5" x2="1834" y2="547.5" stroke="#222" stroke-width="1.6" />
<line x1="1828" y1="560" x2="1834" y2="560" stroke="#222" stroke-width="1.6" />
<line x1="1828" y1="571" x2="1834" y2="571" stroke="#222" stroke-width="1.6" />
<line x1="1828" y1="579.5" x2="1834" y2="579.5" stroke="#222" stroke-width="1.6" />
<text x="1858" y="400.0" font-size="14" fill="#111" stroke="#111" stroke-width="0.4" font-weight="normal" text-anchor="end" style="white-space:pre" >0</text>
<text x="1858" y="419.0" font-size="14" fill="#111" stroke="#111" stroke-width="0.4" font-weight="normal" text-anchor="end" style="white-space:pre" >6</text>
<text x="1858" y="441.0" font-size="14" fill="#111" stroke="#111" stroke-width="0.4" font-weight="normal" text-anchor="end" style="white-space:pre" >12</text>
<text x="1858" y="462.0" font-size="14" fill="#111" stroke="#111" stroke-width="0.4" font-weight="normal" text-anchor="end" style="white-space:pre" >18</text>
<text x="1858" y="482.0" font-size="14" fill="#111" stroke="#111" stroke-width="0.4" font-weight="normal" text-anchor="end" style="white-space:pre" >24</text>
<text x="1858" y="504.0" font-size="14" fill="#111" stroke="#111" stroke-width="0.4" font-weight="normal" text-anchor="end" style="white-space:pre" >30</text>
<text x="1858" y="523.0" font-size="14" fill="#111" stroke="#111" stroke-width="0.4" font-weight="normal" text-anchor="end" style="white-space:pre" >36</text>
<text x="1858" y="553.0" font-size="14" fill="#111" stroke="#111" stroke-width="0.4" font-weight="normal" text-anchor="end" style="white-space:pre" >48</text>
<text x="1858" y="577.0" font-size="14" fill="#111" stroke="#111" stroke-width="0.4" font-weight="normal" text-anchor="end" style="white-space:pre" >60</text>
<path d="M1840,389 L1827,396 L1840,403 Z" stroke="#4a4e4d" stroke-width="1.2" fill="#a9acac" />
<rect x="1885" y="374" width="50" height="17" fill="#c2c5c5" rx="8.5" stroke="#555" stroke-width="1" />
<text x="1910" y="387.5" font-size="14" fill="#111" stroke="#111" stroke-width="0.4" font-weight="normal" text-anchor="middle" style="white-space:pre" >-0.49</text>
<rect x="1885" y="400" width="50" height="18" fill="#c5c8c8" stroke="#555" stroke-width="1" />
<text x="1910" y="414.0" font-size="14" fill="#111" stroke="#111" stroke-width="0.4" font-weight="normal" text-anchor="middle" style="white-space:pre" >0</text>
<circle cx="1887" cy="404" r="4" fill="#f25545" stroke="#111" stroke-width="1.3" />
<path d="M1899.73,493.84 A17.5,17.5 0 0 1 1903.01,462.56" stroke="#1a1a1a" stroke-width="3.2" fill="none" />
<path d="M1914.99,462.56 A17.5,17.5 0 0 1 1918.27,493.84" stroke="#1a1a1a" stroke-width="3.2" fill="none" />
<line x1="1909" y1="458" x2="1909" y2="480" stroke="#1a1a1a" stroke-width="3.2" />
<path d="M1903.5,451 L1914.5,451 L1909,458 Z" stroke="none" stroke-width="1" fill="#1a1a1a" />
<rect x="1893" y="517" width="34" height="17" fill="#b5b6b5" stroke="#555" stroke-width="1" />
<text x="1910" y="530.2" font-size="13" fill="#666" stroke="#666" stroke-width="0.4" font-weight="normal" text-anchor="middle" style="white-space:pre" >Solo</text>
<path d="M1899.07,573.02 A17,17 0 1 1 1920.93,573.02" stroke="#1a8ad0" stroke-width="3" fill="none" />
<line x1="1910" y1="560" x2="1917" y2="574" stroke="#1a1a1a" stroke-width="2.6" />
<path d="M1905,575 a4.5,4.5 0 0 1 9,0" stroke="#111" stroke-width="1.6" fill="none" />
<rect x="1944" y="372" width="7.5" height="212" fill="#1e1f1f" />
<rect x="1953" y="372" width="7.5" height="212" fill="#1e1f1f" />
<rect x="1944" y="394.5" width="16.5" height="1.2" fill="#858888" />
<rect x="1944" y="411" width="7.5" height="173" fill="#18b050" />
<rect x="1953" y="409" width="7.5" height="175" fill="#18b050" />
<rect x="1944" y="411" width="7.5" height="30" fill="#2f8f52" />
<rect x="1953" y="409" width="7.5" height="30" fill="#2f8f52" />
<rect x="1944" y="396" width="7.5" height="1.5" fill="#30d060" />
<rect x="1953" y="398" width="7.5" height="1.5" fill="#30d060" />
<line x1="1963" y1="373" x2="1969" y2="373" stroke="#222" stroke-width="1.6" />
<line x1="1963" y1="394" x2="1969" y2="394" stroke="#222" stroke-width="1.6" />
<line x1="1963" y1="415" x2="1969" y2="415" stroke="#222" stroke-width="1.6" />
<line x1="1963" y1="436" x2="1969" y2="436" stroke="#222" stroke-width="1.6" />
<line x1="1963" y1="457" x2="1969" y2="457" stroke="#222" stroke-width="1.6" />
<line x1="1963" y1="478" x2="1969" y2="478" stroke="#222" stroke-width="1.6" />
<line x1="1963" y1="499" x2="1969" y2="499" stroke="#222" stroke-width="1.6" />
<line x1="1963" y1="517" x2="1969" y2="517" stroke="#222" stroke-width="1.6" />
<line x1="1963" y1="533" x2="1969" y2="533" stroke="#222" stroke-width="1.6" />
<line x1="1963" y1="547.5" x2="1969" y2="547.5" stroke="#222" stroke-width="1.6" />
<line x1="1963" y1="560" x2="1969" y2="560" stroke="#222" stroke-width="1.6" />
<line x1="1963" y1="571" x2="1969" y2="571" stroke="#222" stroke-width="1.6" />
<line x1="1963" y1="579.5" x2="1969" y2="579.5" stroke="#222" stroke-width="1.6" />
<text x="1993" y="400.0" font-size="14" fill="#111" stroke="#111" stroke-width="0.4" font-weight="normal" text-anchor="end" style="white-space:pre" >0</text>
<text x="1993" y="419.0" font-size="14" fill="#111" stroke="#111" stroke-width="0.4" font-weight="normal" text-anchor="end" style="white-space:pre" >6</text>
<text x="1993" y="441.0" font-size="14" fill="#111" stroke="#111" stroke-width="0.4" font-weight="normal" text-anchor="end" style="white-space:pre" >12</text>
<text x="1993" y="462.0" font-size="14" fill="#111" stroke="#111" stroke-width="0.4" font-weight="normal" text-anchor="end" style="white-space:pre" >18</text>
<text x="1993" y="482.0" font-size="14" fill="#111" stroke="#111" stroke-width="0.4" font-weight="normal" text-anchor="end" style="white-space:pre" >24</text>
<text x="1993" y="504.0" font-size="14" fill="#111" stroke="#111" stroke-width="0.4" font-weight="normal" text-anchor="end" style="white-space:pre" >30</text>
<text x="1993" y="523.0" font-size="14" fill="#111" stroke="#111" stroke-width="0.4" font-weight="normal" text-anchor="end" style="white-space:pre" >36</text>
<text x="1993" y="553.0" font-size="14" fill="#111" stroke="#111" stroke-width="0.4" font-weight="normal" text-anchor="end" style="white-space:pre" >48</text>
<text x="1993" y="577.0" font-size="14" fill="#111" stroke="#111" stroke-width="0.4" font-weight="normal" text-anchor="end" style="white-space:pre" >60</text>
<path d="M1975,389 L1962,396 L1975,403 Z" stroke="#4a4e4d" stroke-width="1.2" fill="#8a8d8d" />
<circle cx="1971" cy="396" r="4.2" fill="#f25545" stroke="#111" stroke-width="1.3" />
<rect x="567" y="594" width="780" height="10" fill="#363a39" rx="5" />
<circle cx="2026" cy="108" r="13" fill="#6a6c6b" />
<line x1="2017" y1="103" x2="2035" y2="103" stroke="#7c7e7d" stroke-width="2" />
<line x1="2017" y1="108" x2="2035" y2="108" stroke="#7c7e7d" stroke-width="2" />
<line x1="2017" y1="113" x2="2035" y2="113" stroke="#7c7e7d" stroke-width="2" />
<circle cx="2026" cy="140" r="13" fill="#6a6c6b" />
<rect x="2018.5" y="132" width="3" height="17" fill="#f0a830" />
<rect x="2024.5" y="132" width="3" height="17" fill="#f0a830" />
<rect x="2030.5" y="132" width="3" height="17" fill="#f0a830" />
<rect x="2016" y="176" width="10" height="245" fill="#4a4d4c" rx="5" />
<circle cx="2021" cy="470" r="9" fill="#5d5f5e" />
<text x="2021" y="474" font-size="9" fill="#777" text-anchor="middle">I-O</text>
<rect x="2012" y="488" width="19" height="34" fill="#f0a830" rx="9" />
<line x1="2012" y1="505" x2="2031" y2="505" stroke="#666" stroke-width="1" />
<text x="2021.5" y="499.6" font-size="10" fill="#444" stroke="#444" stroke-width="0.4" font-weight="normal" text-anchor="middle" style="white-space:pre" >S</text>
<text x="2021.5" y="518.6" font-size="10" fill="#444" stroke="#444" stroke-width="0.4" font-weight="normal" text-anchor="middle" style="white-space:pre" >R</text>
<circle cx="2021.5" cy="542" r="9.5" fill="#f0a830" />
<text x="2021.5" y="545.2" font-size="9" fill="#444" stroke="#444" stroke-width="0.4" font-weight="normal" text-anchor="middle" style="white-space:pre" >M</text>
<circle cx="2021.5" cy="569" r="9.5" fill="#1e1f1f" />
<text x="2021.5" y="572.2" font-size="9" fill="#888" stroke="#888" stroke-width="0.4" font-weight="normal" text-anchor="middle" style="white-space:pre" >D</text>
<circle cx="2021.5" cy="596" r="9.5" fill="#1e1f1f" />
<path d="M2017,591.5 L2026,600.5 M2026,591.5 L2017,600.5" stroke="#888" stroke-width="1.3" fill="none" />
<rect x="560" y="627" width="1479" height="357" fill="#4e5251" rx="6" />
<rect x="566" y="633" width="242" height="345" fill="#1e1e1e" rx="4" />
<rect x="811" y="633" width="243" height="345" fill="#1e1e1e" rx="4" />
<rect x="1057" y="633" width="242" height="345" fill="#1e1e1e" rx="4" />
<rect x="1303" y="633" width="363" height="345" fill="#1e1e1e" rx="4" />
<rect x="1670" y="633" width="364" height="345" fill="#1e1e1e" rx="4" />
<line x1="566" y1="932" x2="808" y2="932" stroke="#444" stroke-width="1.5" />
<line x1="811" y1="932" x2="1054" y2="932" stroke="#444" stroke-width="1.5" />
<line x1="1057" y1="932" x2="1299" y2="932" stroke="#444" stroke-width="1.5" />
<line x1="1303" y1="932" x2="1666" y2="932" stroke="#444" stroke-width="1.5" />
<line x1="1670" y1="932" x2="2034" y2="932" stroke="#444" stroke-width="1.5" />
<text x="571" y="653.0" font-size="14" fill="#1ab4dc" stroke="#1ab4dc" stroke-width="0.4" font-weight="normal" text-anchor="start" style="white-space:pre" >Amp</text>
<text x="777" y="653.0" font-size="14" fill="#1ab4dc" font-weight="bold" text-anchor="end" style="white-space:pre" >None</text>
<path d="M790,645 L800,645 L795,651 Z" stroke="none" stroke-width="1" fill="#1ab4dc" />
<path d="M576,697 L576,685 L588,685" stroke="#1ab4dc" stroke-width="1.6" fill="none" />
<path d="M796,697 L796,685 L784,685" stroke="#1ab4dc" stroke-width="1.6" fill="none" />
<path d="M576,872 L576,884 L588,884" stroke="#1ab4dc" stroke-width="1.6" fill="none" />
<path d="M796,872 L796,884 L784,884" stroke="#1ab4dc" stroke-width="1.6" fill="none" />
<text x="665" y="924.0" font-size="14" fill="#eee" font-weight="bold" text-anchor="middle" style="white-space:pre" >Time</text>
<text x="708" y="924.0" font-size="14" fill="#777" stroke="#777" stroke-width="0.4" font-weight="normal" text-anchor="middle" style="white-space:pre" >Slope</text>
<line x1="645" y1="931.5" x2="685" y2="931.5" stroke="#ddd" stroke-width="2" />
<text x="571.0" y="949.7" font-size="13" fill="#888" stroke="#888" stroke-width="0.4" font-weight="normal" text-anchor="start" style="white-space:pre" >A</text>
<text x="634.5" y="949.7" font-size="13" fill="#888" stroke="#888" stroke-width="0.4" font-weight="normal" text-anchor="start" style="white-space:pre" >D</text>
<text x="693.0" y="949.7" font-size="13" fill="#888" stroke="#888" stroke-width="0.4" font-weight="normal" text-anchor="start" style="white-space:pre" >S</text>
<text x="751.5" y="949.7" font-size="13" fill="#888" stroke="#888" stroke-width="0.4" font-weight="normal" text-anchor="start" style="white-space:pre" >R</text>
<text x="571" y="969.0" font-size="14" fill="#888" stroke="#888" stroke-width="0.4" font-weight="normal" text-anchor="start" style="white-space:pre" >9.71 ms</text>
<text x="632" y="969.0" font-size="14" fill="#1ab4dc" font-weight="bold" text-anchor="start" style="white-space:pre" >445 ms</text>
<text x="691" y="969.0" font-size="14" fill="#1ab4dc" font-weight="bold" text-anchor="start" style="white-space:pre" >-1.6 dB</text>
<text x="750" y="969.0" font-size="14" fill="#888" stroke="#888" stroke-width="0.4" font-weight="normal" text-anchor="start" style="white-space:pre" >47.3 ms</text>
<circle cx="576" cy="959" r="3" fill="#1a9a4a" />
<circle cx="751" cy="959" r="3" fill="#1a9a4a" />
<text x="816" y="653.0" font-size="14" fill="#1ab4dc" stroke="#1ab4dc" stroke-width="0.4" font-weight="normal" text-anchor="start" style="white-space:pre" >Env 2</text>
<text x="1022" y="653.0" font-size="14" fill="#1ab4dc" font-weight="bold" text-anchor="end" style="white-space:pre" >None</text>
<path d="M1035,645 L1045,645 L1040,651 Z" stroke="none" stroke-width="1" fill="#1ab4dc" />
<path d="M821,697 L821,685 L833,685" stroke="#1ab4dc" stroke-width="1.6" fill="none" />
<path d="M1041,697 L1041,685 L1029,685" stroke="#1ab4dc" stroke-width="1.6" fill="none" />
<path d="M821,872 L821,884 L833,884" stroke="#1ab4dc" stroke-width="1.6" fill="none" />
<path d="M1041,872 L1041,884 L1029,884" stroke="#1ab4dc" stroke-width="1.6" fill="none" />
<text x="889" y="924.0" font-size="14" fill="#eee" font-weight="bold" text-anchor="middle" style="white-space:pre" >Time</text>
<text x="932" y="924.0" font-size="14" fill="#777" stroke="#777" stroke-width="0.4" font-weight="normal" text-anchor="middle" style="white-space:pre" >Slope</text>
<text x="975" y="924.0" font-size="14" fill="#777" stroke="#777" stroke-width="0.4" font-weight="normal" text-anchor="middle" style="white-space:pre" >Value</text>
<line x1="869" y1="931.5" x2="910" y2="931.5" stroke="#ddd" stroke-width="2" />
<text x="816.0" y="949.7" font-size="13" fill="#888" stroke="#888" stroke-width="0.4" font-weight="normal" text-anchor="start" style="white-space:pre" >A</text>
<text x="879.5" y="949.7" font-size="13" fill="#888" stroke="#888" stroke-width="0.4" font-weight="normal" text-anchor="start" style="white-space:pre" >D</text>
<text x="938.0" y="949.7" font-size="13" fill="#888" stroke="#888" stroke-width="0.4" font-weight="normal" text-anchor="start" style="white-space:pre" >S</text>
<text x="996.5" y="949.7" font-size="13" fill="#888" stroke="#888" stroke-width="0.4" font-weight="normal" text-anchor="start" style="white-space:pre" >R</text>
<text x="816" y="969.0" font-size="14" fill="#1ab4dc" font-weight="bold" text-anchor="start" style="white-space:pre" >4.15 ms</text>
<text x="877" y="969.0" font-size="14" fill="#1ab4dc" font-weight="bold" text-anchor="start" style="white-space:pre" >1.33 s</text>
<text x="936" y="969.0" font-size="14" fill="#1ab4dc" font-weight="bold" text-anchor="start" style="white-space:pre" >88 %</text>
<text x="995" y="969.0" font-size="14" fill="#1ab4dc" font-weight="bold" text-anchor="start" style="white-space:pre" >2.12 s</text>
<text x="1062" y="653.0" font-size="14" fill="#1ab4dc" stroke="#1ab4dc" stroke-width="0.4" font-weight="normal" text-anchor="start" style="white-space:pre" >Env 3</text>
<text x="1268" y="653.0" font-size="14" fill="#1ab4dc" font-weight="bold" text-anchor="end" style="white-space:pre" >None</text>
<path d="M1281,645 L1291,645 L1286,651 Z" stroke="none" stroke-width="1" fill="#1ab4dc" />
<path d="M1067,697 L1067,685 L1079,685" stroke="#1ab4dc" stroke-width="1.6" fill="none" />
<path d="M1287,697 L1287,685 L1275,685" stroke="#1ab4dc" stroke-width="1.6" fill="none" />
<path d="M1067,872 L1067,884 L1079,884" stroke="#1ab4dc" stroke-width="1.6" fill="none" />
<path d="M1287,872 L1287,884 L1275,884" stroke="#1ab4dc" stroke-width="1.6" fill="none" />
<text x="1135" y="924.0" font-size="14" fill="#eee" font-weight="bold" text-anchor="middle" style="white-space:pre" >Time</text>
<text x="1178" y="924.0" font-size="14" fill="#777" stroke="#777" stroke-width="0.4" font-weight="normal" text-anchor="middle" style="white-space:pre" >Slope</text>
<text x="1221" y="924.0" font-size="14" fill="#777" stroke="#777" stroke-width="0.4" font-weight="normal" text-anchor="middle" style="white-space:pre" >Value</text>
<line x1="1115" y1="931.5" x2="1156" y2="931.5" stroke="#ddd" stroke-width="2" />
<text x="1062.0" y="949.7" font-size="13" fill="#888" stroke="#888" stroke-width="0.4" font-weight="normal" text-anchor="start" style="white-space:pre" >A</text>
<text x="1125.5" y="949.7" font-size="13" fill="#888" stroke="#888" stroke-width="0.4" font-weight="normal" text-anchor="start" style="white-space:pre" >D</text>
<text x="1184.0" y="949.7" font-size="13" fill="#888" stroke="#888" stroke-width="0.4" font-weight="normal" text-anchor="start" style="white-space:pre" >S</text>
<text x="1242.5" y="949.7" font-size="13" fill="#888" stroke="#888" stroke-width="0.4" font-weight="normal" text-anchor="start" style="white-space:pre" >R</text>
<text x="1062" y="969.0" font-size="14" fill="#1ab4dc" font-weight="bold" text-anchor="start" style="white-space:pre" >99.6 ms</text>
<text x="1123" y="969.0" font-size="14" fill="#1ab4dc" font-weight="bold" text-anchor="start" style="white-space:pre" >6.33 s</text>
<text x="1182" y="969.0" font-size="14" fill="#1ab4dc" font-weight="bold" text-anchor="start" style="white-space:pre" >48 %</text>
<text x="1241" y="969.0" font-size="14" fill="#1ab4dc" font-weight="bold" text-anchor="start" style="white-space:pre" >5.34 s</text>
<path d="M582,878 C584,800 585,720 592,690 C596,698 604,706 618,708 L722,708 C726,740 730,800 734,876" stroke="#1ab4dc" stroke-width="2.2" fill="none" />
<rect x="587.5" y="686.5" width="9" height="9" fill="none" stroke="#f0a830" stroke-width="1.6" />
<rect x="613.5" y="703.5" width="9" height="9" fill="none" stroke="#f0a830" stroke-width="1.6" />
<rect x="729.5" y="871.5" width="9" height="9" fill="none" stroke="#f0a830" stroke-width="1.6" />
<path d="M589,712.5 L592.5,716 L589,719.5 L585.5,716 Z" stroke="#e07070" stroke-width="1.2" fill="#1e1e1e" />
<path d="M606,701.5 L609.5,705 L606,708.5 L602.5,705 Z" stroke="#e07070" stroke-width="1.2" fill="#1e1e1e" />
<path d="M727,753.5 L730.5,757 L727,760.5 L723.5,757 Z" stroke="#e07070" stroke-width="1.2" fill="#1e1e1e" />
<path d="M828,724 C829,705 830,695 835,693 C845,694 860,700 869,715 L965,716 C990,745 1002,780 1004,859" stroke="#1ab4dc" stroke-width="2.2" fill="none" />
<rect x="830.5" y="689.5" width="9" height="9" fill="none" stroke="#f0a830" stroke-width="1.6" />
<rect x="823.5" y="719.5" width="9" height="9" fill="none" stroke="#f0a830" stroke-width="1.6" />
<rect x="864.5" y="710.5" width="9" height="9" fill="none" stroke="#f0a830" stroke-width="1.6" />
<rect x="999.5" y="854.5" width="9" height="9" fill="none" stroke="#f0a830" stroke-width="1.6" />
<path d="M853,695.5 L856.5,699 L853,702.5 L849.5,699 Z" stroke="#e07070" stroke-width="1.2" fill="#1e1e1e" />
<path d="M986,741.5 L989.5,745 L986,748.5 L982.5,745 Z" stroke="#e07070" stroke-width="1.2" fill="#1e1e1e" />
<path d="M1073,788 C1078,778 1083,772 1091,770 C1100,780 1120,786 1142,788 L1212,788 C1225,815 1235,835 1259,851" stroke="#1ab4dc" stroke-width="2.2" fill="none" />
<rect x="1068.5" y="783.5" width="9" height="9" fill="none" stroke="#f0a830" stroke-width="1.6" />
<rect x="1086.5" y="765.5" width="9" height="9" fill="none" stroke="#f0a830" stroke-width="1.6" />
<rect x="1137.5" y="783.5" width="9" height="9" fill="none" stroke="#f0a830" stroke-width="1.6" />
<rect x="1254.5" y="846.5" width="9" height="9" fill="none" stroke="#f0a830" stroke-width="1.6" />
<path d="M1083,771.5 L1086.5,775 L1083,778.5 L1079.5,775 Z" stroke="#e07070" stroke-width="1.2" fill="#1e1e1e" />
<path d="M1117,781.5 L1120.5,785 L1117,788.5 L1113.5,785 Z" stroke="#e07070" stroke-width="1.2" fill="#1e1e1e" />
<path d="M1236,829.5 L1239.5,833 L1236,836.5 L1232.5,833 Z" stroke="#e07070" stroke-width="1.2" fill="#1e1e1e" />
<path d="M1316.0,782.1 L1316.5,779.1 L1317.0,776.1 L1317.5,773.1 L1318.0,770.2 L1318.5,767.2 L1319.0,764.3 L1319.5,761.5 L1320.0,758.6 L1320.5,755.8 L1321.0,753.1 L1321.5,750.4 L1322.0,747.7 L1322.5,745.1 L1323.0,742.6 L1323.5,740.2 L1324.0,737.8 L1324.5,735.5 L1325.0,733.2 L1325.5,731.1 L1326.0,729.0 L1326.5,727.0 L1327.0,725.2 L1327.5,723.4 L1328.0,721.7 L1328.5,720.1 L1329.0,718.7 L1329.5,717.3 L1330.0,716.1 L1330.5,714.9 L1331.0,713.9 L1331.5,713.0 L1332.0,712.2 L1332.5,711.5 L1333.0,711.0 L1333.5,710.6 L1334.0,710.2 L1334.5,710.1 L1335.0,710.0 L1335.5,710.1 L1336.0,710.2 L1336.5,710.6 L1337.0,711.0 L1337.5,711.5 L1338.0,712.2 L1338.5,713.0 L1339.0,713.9 L1339.5,714.9 L1340.0,716.1 L1340.5,717.3 L1341.0,718.7 L1341.5,720.1 L1342.0,721.7 L1342.5,723.4 L1343.0,725.2 L1343.5,727.0 L1344.0,729.0 L1344.5,731.1 L1345.0,733.2 L1345.5,735.5 L1346.0,737.8 L1346.5,740.2 L1347.0,742.6 L1347.5,745.1 L1348.0,747.7 L1348.5,750.4 L1349.0,753.1 L1349.5,755.8 L1350.0,758.6 L1350.5,761.5 L1351.0,764.3 L1351.5,767.2 L1352.0,770.2 L1352.5,773.1 L1353.0,776.1 L1353.5,779.1 L1354.0,782.1 L1354.5,785.0 L1355.0,788.0 L1355.5,791.0 L1356.0,793.9 L1356.5,796.9 L1357.0,799.8 L1357.5,802.7 L1358.0,805.5 L1358.5,808.3 L1359.0,811.1 L1359.5,813.8 L1360.0,816.5 L1360.5,819.1 L1361.0,821.6 L1361.5,824.1 L1362.0,826.5 L1362.5,828.9 L1363.0,831.1 L1363.5,833.3 L1364.0,835.4 L1364.5,837.4 L1365.0,839.3 L1365.5,841.1 L1366.0,842.8 L1366.5,844.4 L1367.0,845.9 L1367.5,847.3 L1368.0,848.6 L1368.5,849.7 L1369.0,850.8 L1369.5,851.7 L1370.0,852.6 L1370.5,853.3 L1371.0,853.9 L1371.5,854.3 L1372.0,854.7 L1372.5,854.9 L1373.0,855.0 L1373.5,855.0 L1374.0,854.8 L1374.5,854.6 L1375.0,854.2 L1375.5,853.6 L1376.0,853.0 L1376.5,852.3 L1377.0,851.4 L1377.5,850.4 L1378.0,849.3 L1378.5,848.1 L1379.0,846.7 L1379.5,845.3 L1380.0,843.8 L1380.5,842.1 L1381.0,840.4 L1381.5,838.5 L1382.0,836.6 L1382.5,834.6 L1383.0,832.4 L1383.5,830.2 L1384.0,827.9 L1384.5,825.6 L1385.0,823.1 L1385.5,820.6 L1386.0,818.1 L1386.5,815.4 L1387.0,812.7 L1387.5,810.0 L1388.0,807.2 L1388.5,804.4 L1389.0,801.5 L1389.5,798.6 L1390.0,795.7 L1390.5,792.8 L1391.0,789.8 L1391.5,786.8 L1392.0,783.8 L1392.5,780.9 L1393.0,777.9 L1393.5,774.9 L1394.0,771.9 L1394.5,769.0 L1395.0,766.1 L1395.5,763.2 L1396.0,760.3 L1396.5,757.5 L1397.0,754.7 L1397.5,752.0 L1398.0,749.3 L1398.5,746.7 L1399.0,744.1 L1399.5,741.6 L1400.0,739.2 L1400.5,736.8 L1401.0,734.6 L1401.5,732.4 L1402.0,730.2 L1402.5,728.2 L1403.0,726.3 L1403.5,724.4 L1404.0,722.7 L1404.5,721.1 L1405.0,719.5 L1405.5,718.1 L1406.0,716.8 L1406.5,715.6 L1407.0,714.5 L1407.5,713.5 L1408.0,712.7 L1408.5,711.9 L1409.0,711.3 L1409.5,710.8 L1410.0,710.4 L1410.5,710.2 L1411.0,710.0 L1411.5,710.0 L1412.0,710.1 L1412.5,710.4 L1413.0,710.7 L1413.5,711.2 L1414.0,711.8 L1414.5,712.5 L1415.0,713.3 L1415.5,714.3 L1416.0,715.4 L1416.5,716.5 L1417.0,717.8 L1417.5,719.2 L1418.0,720.8 L1418.5,722.4 L1419.0,724.1 L1419.5,725.9 L1420.0,727.8 L1420.5,729.8 L1421.0,731.9 L1421.5,734.1 L1422.0,736.4 L1422.5,738.7 L1423.0,741.1 L1423.5,743.6 L1424.0,746.2 L1424.5,748.8 L1425.0,751.4 L1425.5,754.2 L1426.0,756.9 L1426.5,759.8 L1427.0,762.6 L1427.5,765.5 L1428.0,768.4 L1428.5,771.4 L1429.0,774.3 L1429.5,777.3 L1430.0,780.3 L1430.5,783.2 L1431.0,786.2 L1431.5,789.2 L1432.0,792.2 L1432.5,795.1 L1433.0,798.1 L1433.5,801.0 L1434.0,803.8 L1434.5,806.7 L1435.0,809.4 L1435.5,812.2 L1436.0,814.9 L1436.5,817.5 L1437.0,820.1 L1437.5,822.6 L1438.0,825.1 L1438.5,827.5 L1439.0,829.8 L1439.5,832.0 L1440.0,834.1 L1440.5,836.2 L1441.0,838.1 L1441.5,840.0 L1442.0,841.8 L1442.5,843.4 L1443.0,845.0 L1443.5,846.5 L1444.0,847.8 L1444.5,849.1 L1445.0,850.2 L1445.5,851.2 L1446.0,852.1 L1446.5,852.9 L1447.0,853.5 L1447.5,854.1 L1448.0,854.5 L1448.5,854.8 L1449.0,855.0 L1449.5,855.0 L1450.0,854.9 L1450.5,854.7 L1451.0,854.4 L1451.5,854.0 L1452.0,853.4 L1452.5,852.7 L1453.0,851.9 L1453.5,851.0 L1454.0,850.0 L1454.5,848.8 L1455.0,847.6 L1455.5,846.2 L1456.0,844.7 L1456.5,843.1 L1457.0,841.4 L1457.5,839.6 L1458.0,837.8 L1458.5,835.8 L1459.0,833.7 L1459.5,831.6 L1460.0,829.3 L1460.5,827.0 L1461.0,824.6 L1461.5,822.1 L1462.0,819.6 L1462.5,817.0 L1463.0,814.4 L1463.5,811.7 L1464.0,808.9 L1464.5,806.1 L1465.0,803.3 L1465.5,800.4 L1466.0,797.5 L1466.5,794.5 L1467.0,791.6 L1467.5,788.6 L1468.0,785.6 L1468.5,782.6 L1469.0,779.7 L1469.5,776.7 L1470.0,773.7 L1470.5,770.8 L1471.0,767.8 L1471.5,764.9 L1472.0,762.0 L1472.5,759.2 L1473.0,756.4 L1473.5,753.6 L1474.0,750.9 L1474.5,748.2 L1475.0,745.6 L1475.5,743.1 L1476.0,740.6 L1476.5,738.2 L1477.0,735.9 L1477.5,733.7 L1478.0,731.5 L1478.5,729.4 L1479.0,727.4 L1479.5,725.5 L1480.0,723.7 L1480.5,722.0 L1481.0,720.4 L1481.5,719.0 L1482.0,717.6 L1482.5,716.3 L1483.0,715.1 L1483.5,714.1 L1484.0,713.2 L1484.5,712.3 L1485.0,711.7 L1485.5,711.1 L1486.0,710.6 L1486.5,710.3 L1487.0,710.1 L1487.5,710.0 L1488.0,710.0 L1488.5,710.2 L1489.0,710.5 L1489.5,710.9 L1490.0,711.4 L1490.5,712.1 L1491.0,712.8 L1491.5,713.7 L1492.0,714.7 L1492.5,715.8 L1493.0,717.1 L1493.5,718.4 L1494.0,719.8 L1494.5,721.4 L1495.0,723.0 L1495.5,724.8 L1496.0,726.7 L1496.5,728.6 L1497.0,730.7 L1497.5,732.8 L1498.0,735.0 L1498.5,737.3 L1499.0,739.7 L1499.5,742.1 L1500.0,744.6 L1500.5,747.2 L1501.0,749.8 L1501.5,752.5 L1502.0,755.3 L1502.5,758.1 L1503.0,760.9 L1503.5,763.8 L1504.0,766.7 L1504.5,769.6 L1505.0,772.5 L1505.5,775.5 L1506.0,778.5 L1506.5,781.5 L1507.0,784.4 L1507.5,787.4 L1508.0,790.4 L1508.5,793.4 L1509.0,796.3 L1509.5,799.2 L1510.0,802.1 L1510.5,805.0 L1511.0,807.8 L1511.5,810.6 L1512.0,813.3 L1512.5,816.0 L1513.0,818.6 L1513.5,821.1 L1514.0,823.6 L1514.5,826.1 L1515.0,828.4 L1515.5,830.7 L1516.0,832.9 L1516.5,835.0 L1517.0,837.0 L1517.5,838.9 L1518.0,840.7 L1518.5,842.5 L1519.0,844.1 L1519.5,845.6 L1520.0,847.0 L1520.5,848.3 L1521.0,849.5 L1521.5,850.6 L1522.0,851.6 L1522.5,852.4 L1523.0,853.1 L1523.5,853.8 L1524.0,854.2 L1524.5,854.6 L1525.0,854.9 L1525.5,855.0 L1526.0,855.0 L1526.5,854.9 L1527.0,854.6 L1527.5,854.2 L1528.0,853.8 L1528.5,853.1 L1529.0,852.4 L1529.5,851.6 L1530.0,850.6 L1530.5,849.5 L1531.0,848.3 L1531.5,847.0 L1532.0,845.6 L1532.5,844.1 L1533.0,842.5 L1533.5,840.7 L1534.0,838.9 L1534.5,837.0 L1535.0,835.0 L1535.5,832.9 L1536.0,830.7 L1536.5,828.4 L1537.0,826.1 L1537.5,823.6 L1538.0,821.1 L1538.5,818.6 L1539.0,816.0 L1539.5,813.3 L1540.0,810.6 L1540.5,807.8 L1541.0,805.0 L1541.5,802.1 L1542.0,799.2 L1542.5,796.3 L1543.0,793.4 L1543.5,790.4 L1544.0,787.4 L1544.5,784.4 L1545.0,781.5 L1545.5,778.5 L1546.0,775.5 L1546.5,772.5 L1547.0,769.6 L1547.5,766.7 L1548.0,763.8 L1548.5,760.9 L1549.0,758.1 L1549.5,755.3 L1550.0,752.5 L1550.5,749.8 L1551.0,747.2 L1551.5,744.6 L1552.0,742.1 L1552.5,739.7 L1553.0,737.3 L1553.5,735.0 L1554.0,732.8 L1554.5,730.7 L1555.0,728.6 L1555.5,726.7 L1556.0,724.8 L1556.5,723.0 L1557.0,721.4 L1557.5,719.8 L1558.0,718.4 L1558.5,717.1 L1559.0,715.8 L1559.5,714.7 L1560.0,713.7 L1560.5,712.8 L1561.0,712.1 L1561.5,711.4 L1562.0,710.9 L1562.5,710.5 L1563.0,710.2 L1563.5,710.0 L1564.0,710.0 L1564.5,710.1 L1565.0,710.3 L1565.5,710.6 L1566.0,711.1 L1566.5,711.7 L1567.0,712.3 L1567.5,713.2 L1568.0,714.1 L1568.5,715.1 L1569.0,716.3 L1569.5,717.6 L1570.0,719.0 L1570.5,720.4 L1571.0,722.0 L1571.5,723.7 L1572.0,725.5 L1572.5,727.4 L1573.0,729.4 L1573.5,731.5 L1574.0,733.7 L1574.5,735.9 L1575.0,738.2 L1575.5,740.6 L1576.0,743.1 L1576.5,745.6 L1577.0,748.2 L1577.5,750.9 L1578.0,753.6 L1578.5,756.4 L1579.0,759.2 L1579.5,762.0 L1580.0,764.9 L1580.5,767.8 L1581.0,770.8 L1581.5,773.7 L1582.0,776.7 L1582.5,779.7 L1583.0,782.6 L1583.5,785.6 L1584.0,788.6 L1584.5,791.6 L1585.0,794.5 L1585.5,797.5 L1586.0,800.4 L1586.5,803.3 L1587.0,806.1 L1587.5,808.9 L1588.0,811.7 L1588.5,814.4 L1589.0,817.0 L1589.5,819.6 L1590.0,822.1 L1590.5,824.6 L1591.0,827.0 L1591.5,829.3 L1592.0,831.6 L1592.5,833.7 L1593.0,835.8 L1593.5,837.8 L1594.0,839.6 L1594.5,841.4 L1595.0,843.1 L1595.5,844.7 L1596.0,846.2 L1596.5,847.6 L1597.0,848.8 L1597.5,850.0 L1598.0,851.0 L1598.5,851.9 L1599.0,852.7 L1599.5,853.4 L1600.0,854.0 L1600.5,854.4 L1601.0,854.7 L1601.5,854.9 L1602.0,855.0 L1602.5,855.0 L1603.0,854.8 L1603.5,854.5 L1604.0,854.1 L1604.5,853.5 L1605.0,852.9 L1605.5,852.1 L1606.0,851.2 L1606.5,850.2 L1607.0,849.1 L1607.5,847.8 L1608.0,846.5 L1608.5,845.0 L1609.0,843.4 L1609.5,841.8 L1610.0,840.0 L1610.5,838.1 L1611.0,836.2 L1611.5,834.1 L1612.0,832.0 L1612.5,829.8 L1613.0,827.5 L1613.5,825.1 L1614.0,822.6 L1614.5,820.1 L1615.0,817.5 L1615.5,814.9 L1616.0,812.2 L1616.5,809.4 L1617.0,806.7 L1617.5,803.8 L1618.0,801.0 L1618.5,798.1 L1619.0,795.1 L1619.5,792.2 L1620.0,789.2 L1620.5,786.2 L1621.0,783.2 L1621.5,780.3 L1622.0,777.3 L1622.5,774.3 L1623.0,771.4 L1623.5,768.4 L1624.0,765.5 L1624.5,762.6 L1625.0,759.8 L1625.5,756.9 L1626.0,754.2 L1626.5,751.4 L1627.0,748.8 L1627.5,746.2 L1628.0,743.6 L1628.5,741.1 L1629.0,738.7 L1629.5,736.4 L1630.0,734.1 L1630.5,731.9 L1631.0,729.8 L1631.5,727.8 L1632.0,725.9 L1632.5,724.1 L1633.0,722.4 L1633.5,720.8 L1634.0,719.2 L1634.5,717.8 L1635.0,716.5 L1635.5,715.4 L1636.0,714.3 L1636.5,713.3 L1637.0,712.5 L1637.5,711.8 L1638.0,711.2 L1638.5,710.7 L1639.0,710.4 L1639.5,710.1 L1640.0,710.0 L1640.5,710.0 L1641.0,710.2 L1641.5,710.4 L1642.0,710.8 L1642.5,711.3 L1643.0,711.9 L1643.5,712.7 L1644.0,713.5 L1644.5,714.5 L1645.0,715.6 L1645.5,716.8 L1646.0,718.1 L1646.5,719.5 L1647.0,721.1" stroke="#f0a830" stroke-width="2.2" fill="none" />
<path d="M1684.0,778.3 L1684.5,775.8 L1685.0,773.3 L1685.5,770.8 L1686.0,768.4 L1686.5,765.9 L1687.0,763.5 L1687.5,761.1 L1688.0,758.8 L1688.5,756.5 L1689.0,754.2 L1689.5,751.9 L1690.0,749.7 L1690.5,747.6 L1691.0,745.5 L1691.5,743.4 L1692.0,741.4 L1692.5,739.5 L1693.0,737.6 L1693.5,735.8 L1694.0,734.0 L1694.5,732.3 L1695.0,730.7 L1695.5,729.2 L1696.0,727.7 L1696.5,726.4 L1697.0,725.1 L1697.5,723.8 L1698.0,722.7 L1698.5,721.6 L1699.0,720.7 L1699.5,719.8 L1700.0,719.0 L1700.5,718.3 L1701.0,717.7 L1701.5,717.2 L1702.0,716.8 L1702.5,716.4 L1703.0,716.2 L1703.5,716.0 L1704.0,716.0 L1704.5,716.0 L1705.0,716.2 L1705.5,716.4 L1706.0,716.8 L1706.5,717.2 L1707.0,717.7 L1707.5,718.3 L1708.0,719.0 L1708.5,719.8 L1709.0,720.7 L1709.5,721.6 L1710.0,722.7 L1710.5,723.8 L1711.0,725.1 L1711.5,726.4 L1712.0,727.7 L1712.5,729.2 L1713.0,730.7 L1713.5,732.3 L1714.0,734.0 L1714.5,735.8 L1715.0,737.6 L1715.5,739.5 L1716.0,741.4 L1716.5,743.4 L1717.0,745.5 L1717.5,747.6 L1718.0,749.7 L1718.5,751.9 L1719.0,754.2 L1719.5,756.5 L1720.0,758.8 L1720.5,761.1 L1721.0,763.5 L1721.5,765.9 L1722.0,768.4 L1722.5,770.8 L1723.0,773.3 L1723.5,775.8 L1724.0,778.3 L1724.5,780.8 L1725.0,783.2 L1725.5,785.7 L1726.0,788.2 L1726.5,790.7 L1727.0,793.2 L1727.5,795.6 L1728.0,798.1 L1728.5,800.5 L1729.0,802.9 L1729.5,805.2 L1730.0,807.5 L1730.5,809.8 L1731.0,812.1 L1731.5,814.3 L1732.0,816.4 L1732.5,818.5 L1733.0,820.6 L1733.5,822.6 L1734.0,824.5 L1734.5,826.4 L1735.0,828.2 L1735.5,830.0 L1736.0,831.7 L1736.5,833.3 L1737.0,834.8 L1737.5,836.3 L1738.0,837.6 L1738.5,838.9 L1739.0,840.2 L1739.5,841.3 L1740.0,842.4 L1740.5,843.3 L1741.0,844.2 L1741.5,845.0 L1742.0,845.7 L1742.5,846.3 L1743.0,846.8 L1743.5,847.2 L1744.0,847.6 L1744.5,847.8 L1745.0,848.0 L1745.5,848.0 L1746.0,848.0 L1746.5,847.8 L1747.0,847.6 L1747.5,847.2 L1748.0,846.8 L1748.5,846.3 L1749.0,845.7 L1749.5,845.0 L1750.0,844.2 L1750.5,843.3 L1751.0,842.4 L1751.5,841.3 L1752.0,840.2 L1752.5,838.9 L1753.0,837.6 L1753.5,836.3 L1754.0,834.8 L1754.5,833.3 L1755.0,831.7 L1755.5,830.0 L1756.0,828.2 L1756.5,826.4 L1757.0,824.5 L1757.5,822.6 L1758.0,820.6 L1758.5,818.5 L1759.0,816.4 L1759.5,814.3 L1760.0,812.1 L1760.5,809.8 L1761.0,807.5 L1761.5,805.2 L1762.0,802.9 L1762.5,800.5 L1763.0,798.1 L1763.5,795.6 L1764.0,793.2 L1764.5,790.7 L1765.0,788.2 L1765.5,785.7 L1766.0,783.2 L1766.5,780.8 L1767.0,778.3 L1767.5,775.8 L1768.0,773.3 L1768.5,770.8 L1769.0,768.4 L1769.5,765.9 L1770.0,763.5 L1770.5,761.1 L1771.0,758.8 L1771.5,756.5 L1772.0,754.2 L1772.5,751.9 L1773.0,749.7 L1773.5,747.6 L1774.0,745.5 L1774.5,743.4 L1775.0,741.4 L1775.5,739.5 L1776.0,737.6 L1776.5,735.8 L1777.0,734.0 L1777.5,732.3 L1778.0,730.7 L1778.5,729.2 L1779.0,727.7 L1779.5,726.4 L1780.0,725.1 L1780.5,723.8 L1781.0,722.7 L1781.5,721.6 L1782.0,720.7 L1782.5,719.8 L1783.0,719.0 L1783.5,718.3 L1784.0,717.7 L1784.5,717.2 L1785.0,716.8 L1785.5,716.4 L1786.0,716.2 L1786.5,716.0 L1787.0,716.0 L1787.5,716.0 L1788.0,716.2 L1788.5,716.4 L1789.0,716.8 L1789.5,717.2 L1790.0,717.7 L1790.5,718.3 L1791.0,719.0 L1791.5,719.8 L1792.0,720.7 L1792.5,721.6 L1793.0,722.7 L1793.5,723.8 L1794.0,725.1 L1794.5,726.4 L1795.0,727.7 L1795.5,729.2 L1796.0,730.7 L1796.5,732.3 L1797.0,734.0 L1797.5,735.8 L1798.0,737.6 L1798.5,739.5 L1799.0,741.4 L1799.5,743.4 L1800.0,745.5 L1800.5,747.6 L1801.0,749.7 L1801.5,751.9 L1802.0,754.2 L1802.5,756.5 L1803.0,758.8 L1803.5,761.1 L1804.0,763.5 L1804.5,765.9 L1805.0,768.4 L1805.5,770.8 L1806.0,773.3 L1806.5,775.8 L1807.0,778.3 L1807.5,780.8 L1808.0,783.2 L1808.5,785.7 L1809.0,788.2 L1809.5,790.7 L1810.0,793.2 L1810.5,795.6 L1811.0,798.1 L1811.5,800.5 L1812.0,802.9 L1812.5,805.2 L1813.0,807.5 L1813.5,809.8 L1814.0,812.1 L1814.5,814.3 L1815.0,816.4 L1815.5,818.5 L1816.0,820.6 L1816.5,822.6 L1817.0,824.5 L1817.5,826.4 L1818.0,828.2 L1818.5,830.0 L1819.0,831.7 L1819.5,833.3 L1820.0,834.8 L1820.5,836.3 L1821.0,837.6 L1821.5,838.9 L1822.0,840.2 L1822.5,841.3 L1823.0,842.4 L1823.5,843.3 L1824.0,844.2 L1824.5,845.0 L1825.0,845.7 L1825.5,846.3 L1826.0,846.8 L1826.5,847.2 L1827.0,847.6 L1827.5,847.8 L1828.0,848.0 L1828.5,848.0 L1829.0,848.0 L1829.5,847.8 L1830.0,847.6 L1830.5,847.2 L1831.0,846.8 L1831.5,846.3 L1832.0,845.7 L1832.5,845.0 L1833.0,844.2 L1833.5,843.3 L1834.0,842.4 L1834.5,841.3 L1835.0,840.2 L1835.5,838.9 L1836.0,837.6 L1836.5,836.3 L1837.0,834.8 L1837.5,833.3 L1838.0,831.7 L1838.5,830.0 L1839.0,828.2 L1839.5,826.4 L1840.0,824.5 L1840.5,822.6 L1841.0,820.6 L1841.5,818.5 L1842.0,816.4 L1842.5,814.3 L1843.0,812.1 L1843.5,809.8 L1844.0,807.5 L1844.5,805.2 L1845.0,802.9 L1845.5,800.5 L1846.0,798.1 L1846.5,795.6 L1847.0,793.2 L1847.5,790.7 L1848.0,788.2 L1848.5,785.7 L1849.0,783.2 L1849.5,780.8 L1850.0,778.3 L1850.5,775.8 L1851.0,773.3 L1851.5,770.8 L1852.0,768.4 L1852.5,765.9 L1853.0,763.5 L1853.5,761.1 L1854.0,758.8 L1854.5,756.5 L1855.0,754.2 L1855.5,751.9 L1856.0,749.7 L1856.5,747.6 L1857.0,745.5 L1857.5,743.4 L1858.0,741.4 L1858.5,739.5 L1859.0,737.6 L1859.5,735.8 L1860.0,734.0 L1860.5,732.3 L1861.0,730.7 L1861.5,729.2 L1862.0,727.7 L1862.5,726.4 L1863.0,725.1 L1863.5,723.8 L1864.0,722.7 L1864.5,721.6 L1865.0,720.7 L1865.5,719.8 L1866.0,719.0 L1866.5,718.3 L1867.0,717.7 L1867.5,717.2 L1868.0,716.8 L1868.5,716.4 L1869.0,716.2 L1869.5,716.0 L1870.0,716.0 L1870.5,716.0 L1871.0,716.2 L1871.5,716.4 L1872.0,716.8 L1872.5,717.2 L1873.0,717.7 L1873.5,718.3 L1874.0,719.0 L1874.5,719.8 L1875.0,720.7 L1875.5,721.6 L1876.0,722.7 L1876.5,723.8 L1877.0,725.1 L1877.5,726.4 L1878.0,727.7 L1878.5,729.2 L1879.0,730.7 L1879.5,732.3 L1880.0,734.0 L1880.5,735.8 L1881.0,737.6 L1881.5,739.5 L1882.0,741.4 L1882.5,743.4 L1883.0,745.5 L1883.5,747.6 L1884.0,749.7 L1884.5,751.9 L1885.0,754.2 L1885.5,756.5 L1886.0,758.8 L1886.5,761.1 L1887.0,763.5 L1887.5,765.9 L1888.0,768.4 L1888.5,770.8 L1889.0,773.3 L1889.5,775.8 L1890.0,778.3 L1890.5,780.8 L1891.0,783.2 L1891.5,785.7 L1892.0,788.2 L1892.5,790.7 L1893.0,793.2 L1893.5,795.6 L1894.0,798.1 L1894.5,800.5 L1895.0,802.9 L1895.5,805.2 L1896.0,807.5 L1896.5,809.8 L1897.0,812.1 L1897.5,814.3 L1898.0,816.4 L1898.5,818.5 L1899.0,820.6 L1899.5,822.6 L1900.0,824.5 L1900.5,826.4 L1901.0,828.2 L1901.5,830.0 L1902.0,831.7 L1902.5,833.3 L1903.0,834.8 L1903.5,836.3 L1904.0,837.6 L1904.5,838.9 L1905.0,840.2 L1905.5,841.3 L1906.0,842.4 L1906.5,843.3 L1907.0,844.2 L1907.5,845.0 L1908.0,845.7 L1908.5,846.3 L1909.0,846.8 L1909.5,847.2 L1910.0,847.6 L1910.5,847.8 L1911.0,848.0 L1911.5,848.0 L1912.0,848.0 L1912.5,847.8 L1913.0,847.6 L1913.5,847.2 L1914.0,846.8 L1914.5,846.3 L1915.0,845.7 L1915.5,845.0 L1916.0,844.2 L1916.5,843.3 L1917.0,842.4 L1917.5,841.3 L1918.0,840.2 L1918.5,838.9 L1919.0,837.6 L1919.5,836.3 L1920.0,834.8 L1920.5,833.3 L1921.0,831.7 L1921.5,830.0 L1922.0,828.2 L1922.5,826.4 L1923.0,824.5 L1923.5,822.6 L1924.0,820.6 L1924.5,818.5 L1925.0,816.4 L1925.5,814.3 L1926.0,812.1 L1926.5,809.8 L1927.0,807.5 L1927.5,805.2 L1928.0,802.9 L1928.5,800.5 L1929.0,798.1 L1929.5,795.6 L1930.0,793.2 L1930.5,790.7 L1931.0,788.2 L1931.5,785.7 L1932.0,783.2 L1932.5,780.8 L1933.0,778.3 L1933.5,775.8 L1934.0,773.3 L1934.5,770.8 L1935.0,768.4 L1935.5,765.9 L1936.0,763.5 L1936.5,761.1 L1937.0,758.8 L1937.5,756.5 L1938.0,754.2 L1938.5,751.9 L1939.0,749.7 L1939.5,747.6 L1940.0,745.5 L1940.5,743.4 L1941.0,741.4 L1941.5,739.5 L1942.0,737.6 L1942.5,735.8 L1943.0,734.0 L1943.5,732.3 L1944.0,730.7 L1944.5,729.2 L1945.0,727.7 L1945.5,726.4 L1946.0,725.1 L1946.5,723.8 L1947.0,722.7 L1947.5,721.6 L1948.0,720.7 L1948.5,719.8 L1949.0,719.0 L1949.5,718.3 L1950.0,717.7 L1950.5,717.2 L1951.0,716.8 L1951.5,716.4 L1952.0,716.2 L1952.5,716.0 L1953.0,716.0 L1953.5,716.0 L1954.0,716.2 L1954.5,716.4 L1955.0,716.8 L1955.5,717.2 L1956.0,717.7 L1956.5,718.3 L1957.0,719.0 L1957.5,719.8 L1958.0,720.7 L1958.5,721.6 L1959.0,722.7 L1959.5,723.8 L1960.0,725.1 L1960.5,726.4 L1961.0,727.7 L1961.5,729.2 L1962.0,730.7 L1962.5,732.3 L1963.0,734.0 L1963.5,735.8 L1964.0,737.6 L1964.5,739.5 L1965.0,741.4 L1965.5,743.4 L1966.0,745.5 L1966.5,747.6 L1967.0,749.7 L1967.5,751.9 L1968.0,754.2 L1968.5,756.5 L1969.0,758.8 L1969.5,761.1 L1970.0,763.5 L1970.5,765.9 L1971.0,768.4 L1971.5,770.8 L1972.0,773.3 L1972.5,775.8 L1973.0,778.3 L1973.5,780.8 L1974.0,783.2 L1974.5,785.7 L1975.0,788.2 L1975.5,790.7 L1976.0,793.2 L1976.5,795.6 L1977.0,798.1 L1977.5,800.5 L1978.0,802.9 L1978.5,805.2 L1979.0,807.5 L1979.5,809.8 L1980.0,812.1 L1980.5,814.3 L1981.0,816.4 L1981.5,818.5 L1982.0,820.6 L1982.5,822.6 L1983.0,824.5 L1983.5,826.4 L1984.0,828.2 L1984.5,830.0 L1985.0,831.7 L1985.5,833.3 L1986.0,834.8 L1986.5,836.3 L1987.0,837.6 L1987.5,838.9 L1988.0,840.2 L1988.5,841.3 L1989.0,842.4 L1989.5,843.3 L1990.0,844.2 L1990.5,845.0 L1991.0,845.7 L1991.5,846.3 L1992.0,846.8 L1992.5,847.2 L1993.0,847.6 L1993.5,847.8 L1994.0,848.0 L1994.5,848.0 L1995.0,848.0 L1995.5,847.8 L1996.0,847.6 L1996.5,847.2 L1997.0,846.8 L1997.5,846.3 L1998.0,845.7 L1998.5,845.0 L1999.0,844.2 L1999.5,843.3 L2000.0,842.4 L2000.5,841.3 L2001.0,840.2 L2001.5,838.9 L2002.0,837.6 L2002.5,836.3 L2003.0,834.8 L2003.5,833.3 L2004.0,831.7 L2004.5,830.0 L2005.0,828.2 L2005.5,826.4 L2006.0,824.5 L2006.5,822.6 L2007.0,820.6 L2007.5,818.5 L2008.0,816.4 L2008.5,814.3 L2009.0,812.1 L2009.5,809.8 L2010.0,807.5 L2010.5,805.2 L2011.0,802.9 L2011.5,800.5 L2012.0,798.1 L2012.5,795.6 L2013.0,793.2 L2013.5,790.7 L2014.0,788.2 L2014.5,785.7 L2015.0,783.2 L2015.5,780.8 L2016.0,778.3" stroke="#f0a830" stroke-width="2.2" fill="none" />
<text x="1308" y="653.0" font-size="14" fill="#f0a830" stroke="#f0a830" stroke-width="0.4" font-weight="normal" text-anchor="start" style="white-space:pre" >LFO 1</text>
<text x="1497" y="653.0" font-size="14" fill="#888" stroke="#888" stroke-width="0.4" font-weight="normal" text-anchor="end" style="white-space:pre" >A</text>
<text x="1509" y="653.0" font-size="14" fill="#f0a830" font-weight="bold" text-anchor="start" style="white-space:pre" >0.00 ms</text>
<text x="1579" y="653.0" font-size="14" fill="#777" stroke="#777" stroke-width="0.4" font-weight="normal" text-anchor="start" style="white-space:pre" >Hz</text>
<rect x="1603" y="640" width="22" height="17" fill="#2c2a25" />
<text x="1614" y="653.2" font-size="13" fill="#f0a830" stroke="#f0a830" stroke-width="0.4" font-weight="normal" text-anchor="middle" style="white-space:pre" >♪</text>
<rect x="1632" y="640" width="16" height="16" fill="#f0a830" />
<text x="1640" y="652.5" font-size="11" fill="#222" font-weight="bold" text-anchor="middle" style="white-space:pre" >R</text>
<path d="M1401,923 C1404,913 1407,913 1411.5,919 C1416,925 1419,925 1422,915" stroke="#f0a830" stroke-width="1.6" fill="none" />
<path d="M1436,925 l11,-9 l11,9" stroke="#999" stroke-width="1.4" fill="none" />
<path d="M1471,925 v-9 l21,9" stroke="#999" stroke-width="1.4" fill="none" />
<path d="M1507,925 v-9 h10 v9 h10 v-9" stroke="#999" stroke-width="1.4" fill="none" />
<path d="M1543,925 h4 v-9 h5 v9 h4 v-5 h4 v-3 h4" stroke="#999" stroke-width="1.4" fill="none" />
<text x="1369" y="949.7" font-size="13" fill="#888" stroke="#888" stroke-width="0.4" font-weight="normal" text-anchor="middle" style="white-space:pre" >Rate</text>
<text x="1437" y="949.7" font-size="13" fill="#888" stroke="#888" stroke-width="0.4" font-weight="normal" text-anchor="middle" style="white-space:pre" >Amount</text>
<text x="1505" y="949.7" font-size="13" fill="#888" stroke="#888" stroke-width="0.4" font-weight="normal" text-anchor="middle" style="white-space:pre" >Shape</text>
<text x="1571" y="949.7" font-size="13" fill="#888" stroke="#888" stroke-width="0.4" font-weight="normal" text-anchor="middle" style="white-space:pre" >Offset</text>
<text x="1369" y="969.0" font-size="14" fill="#f0a830" font-weight="bold" text-anchor="middle" style="white-space:pre" >1/4</text>
<text x="1437" y="969.0" font-size="14" fill="#f0a830" font-weight="bold" text-anchor="middle" style="white-space:pre" >73 %</text>
<text x="1505" y="969.0" font-size="14" fill="#f0a830" font-weight="bold" text-anchor="middle" style="white-space:pre" >0.0 %</text>
<text x="1567" y="969.0" font-size="14" fill="#f0a830" font-weight="bold" text-anchor="middle" style="white-space:pre" >0.0°</text>
<text x="1675" y="653.0" font-size="14" fill="#f0a830" stroke="#f0a830" stroke-width="0.4" font-weight="normal" text-anchor="start" style="white-space:pre" >LFO 2</text>
<text x="1864" y="653.0" font-size="14" fill="#888" stroke="#888" stroke-width="0.4" font-weight="normal" text-anchor="end" style="white-space:pre" >A</text>
<text x="1876" y="653.0" font-size="14" fill="#f0a830" font-weight="bold" text-anchor="start" style="white-space:pre" >0.00 ms</text>
<text x="1946" y="653.0" font-size="14" fill="#777" stroke="#777" stroke-width="0.4" font-weight="normal" text-anchor="start" style="white-space:pre" >Hz</text>
<rect x="1970" y="640" width="22" height="17" fill="#2c2a25" />
<text x="1981" y="653.2" font-size="13" fill="#f0a830" stroke="#f0a830" stroke-width="0.4" font-weight="normal" text-anchor="middle" style="white-space:pre" >♪</text>
<rect x="1999" y="640" width="16" height="16" fill="#f0a830" />
<text x="2007" y="652.5" font-size="11" fill="#222" font-weight="bold" text-anchor="middle" style="white-space:pre" >R</text>
<path d="M1768,923 C1771,913 1774,913 1778.5,919 C1783,925 1786,925 1789,915" stroke="#f0a830" stroke-width="1.6" fill="none" />
<path d="M1803,925 l11,-9 l11,9" stroke="#999" stroke-width="1.4" fill="none" />
<path d="M1838,925 v-9 l21,9" stroke="#999" stroke-width="1.4" fill="none" />
<path d="M1874,925 v-9 h10 v9 h10 v-9" stroke="#999" stroke-width="1.4" fill="none" />
<path d="M1910,925 h4 v-9 h5 v9 h4 v-5 h4 v-3 h4" stroke="#999" stroke-width="1.4" fill="none" />
<text x="1736" y="949.7" font-size="13" fill="#888" stroke="#888" stroke-width="0.4" font-weight="normal" text-anchor="middle" style="white-space:pre" >Rate</text>
<text x="1804" y="949.7" font-size="13" fill="#888" stroke="#888" stroke-width="0.4" font-weight="normal" text-anchor="middle" style="white-space:pre" >Amount</text>
<text x="1872" y="949.7" font-size="13" fill="#888" stroke="#888" stroke-width="0.4" font-weight="normal" text-anchor="middle" style="white-space:pre" >Shape</text>
<text x="1938" y="949.7" font-size="13" fill="#888" stroke="#888" stroke-width="0.4" font-weight="normal" text-anchor="middle" style="white-space:pre" >Offset</text>
<text x="1736" y="969.0" font-size="14" fill="#f0a830" font-weight="bold" text-anchor="middle" style="white-space:pre" >1/3</text>
<text x="1804" y="969.0" font-size="14" fill="#f0a830" font-weight="bold" text-anchor="middle" style="white-space:pre" >66 %</text>
<text x="1872" y="969.0" font-size="14" fill="#f0a830" font-weight="bold" text-anchor="middle" style="white-space:pre" >0.0 %</text>
<text x="1934" y="969.0" font-size="14" fill="#f0a830" font-weight="bold" text-anchor="middle" style="white-space:pre" >0.0°</text>
<rect x="8" y="995" width="284" height="279" fill="#464a49" rx="6" />
<rect x="13" y="1001" width="274" height="24" fill="#a0a3a3" />
<rect x="13" y="1025" width="274" height="245" fill="#7e8181" />
<text x="20" y="1018.0" font-size="14" fill="#111" font-weight="bold" text-anchor="start" style="white-space:pre" >Browser Content Pane</text>
<text x="20.5" y="1044.0" font-size="14" fill="#111" stroke="#111" stroke-width="0.4" font-weight="normal" text-anchor="start" style="white-space:pre" textLength="219" lengthAdjust="spacingAndGlyphs">Shows the contents of the selected</text>
<text x="20.5" y="1065.5" font-size="14" fill="#111" stroke="#111" stroke-width="0.4" font-weight="normal" text-anchor="start" style="white-space:pre" textLength="253" lengthAdjust="spacingAndGlyphs">browser label. Double-click or drag a file</text>
<text x="20.5" y="1087.0" font-size="14" fill="#111" stroke="#111" stroke-width="0.4" font-weight="normal" text-anchor="start" style="white-space:pre" textLength="222" lengthAdjust="spacingAndGlyphs">from here to load it in your Live Set.</text>
<rect x="305" y="995" width="1734" height="279" fill="#464a49" rx="6" />
<rect x="318" y="1111" width="2" height="52" fill="#222" />
<rect x="322" y="1111" width="2" height="52" fill="#222" />
<rect x="318" y="1105" width="2" height="3" fill="#222" />
<rect x="322" y="1105" width="2" height="3" fill="#222" />
<rect x="950" y="1111" width="2" height="52" fill="#222" />
<rect x="954" y="1111" width="2" height="52" fill="#222" />
<rect x="950" y="1105" width="2" height="3" fill="#222" />
<rect x="954" y="1105" width="2" height="3" fill="#222" />
<rect x="1683" y="1111" width="2" height="52" fill="#222" />
<rect x="1687" y="1111" width="2" height="52" fill="#222" />
<rect x="1683" y="1105" width="2" height="3" fill="#222" />
<rect x="1687" y="1105" width="2" height="3" fill="#222" />
<rect x="312" y="1005" width="3" height="265" fill="#8c8d8c" />
<rect x="330" y="1002" width="615" height="266" fill="#8d9090" rx="5" />
<rect x="330" y="1002" width="615" height="23" fill="#a2a5a5" rx="5" />
<circle cx="343" cy="1013.5" r="8.5" fill="#f0a830" stroke="#666" stroke-width="1" />
<text x="358" y="1018.5" font-size="14" fill="#111" font-weight="bold" text-anchor="start" style="white-space:pre" >Shaper</text>
<circle cx="886" cy="1013.5" r="8.5" fill="#a2a5a5" stroke="#333" stroke-width="1.4" />
<circle cx="909" cy="1013.5" r="8.5" fill="#a2a5a5" stroke="#333" stroke-width="1.4" />
<circle cx="932" cy="1013.5" r="8.5" fill="#a2a5a5" stroke="#333" stroke-width="1.4" />
<path d="M881,1009 h10 v9 h-10 z M879,1013.5 h2 M891,1013.5 h2" stroke="#111" stroke-width="1.3" fill="none" />
<path d="M904,1011 a5,5 0 0 1 9,1 M914,1016 a5,5 0 0 1 -9,-1" stroke="#111" stroke-width="1.5" fill="none" />
<rect x="927" y="1008.5" width="10" height="10" fill="#111" rx="1" />
<rect x="929" y="1009.5" width="6" height="3.5" fill="#ddd" />
<rect x="336" y="1031" width="402" height="232" fill="#1e1e1e" rx="4" />
<rect x="341" y="1037" width="103" height="18" fill="none" stroke="#f0a830" stroke-width="1.6" />
<text x="392.5" y="1051.0" font-size="14" fill="#f0a830" font-weight="bold" text-anchor="middle" style="white-space:pre" >Map</text>
<text x="485" y="1051.0" font-size="14" fill="#f0a830" font-weight="bold" text-anchor="middle" style="white-space:pre" >0 %</text>
<text x="541" y="1051.0" font-size="14" fill="#f0a830" font-weight="bold" text-anchor="middle" style="white-space:pre" >100 %</text>
<rect x="712" y="1038" width="16" height="16" fill="none" stroke="#f0a830" stroke-width="1.3" />
<line x1="715" y1="1042" x2="725" y2="1042" stroke="#f0a830" stroke-width="1" />
<line x1="715" y1="1044.5" x2="725" y2="1044.5" stroke="#f0a830" stroke-width="1" />
<line x1="715" y1="1047" x2="725" y2="1047" stroke="#f0a830" stroke-width="1" />
<line x1="715" y1="1049.5" x2="725" y2="1049.5" stroke="#f0a830" stroke-width="1" />
<rect x="344" y="1062" width="386" height="168" fill="none" stroke="#4a4d4d" stroke-width="1.5" />
<line x1="399.1" y1="1062" x2="399.1" y2="1230" stroke="#4a4d4d" stroke-width="1.5" />
<line x1="454.3" y1="1062" x2="454.3" y2="1230" stroke="#4a4d4d" stroke-width="1.5" />
<line x1="509.4" y1="1062" x2="509.4" y2="1230" stroke="#4a4d4d" stroke-width="1.5" />
<line x1="564.6" y1="1062" x2="564.6" y2="1230" stroke="#4a4d4d" stroke-width="1.5" />
<line x1="619.7" y1="1062" x2="619.7" y2="1230" stroke="#4a4d4d" stroke-width="1.5" />
<line x1="674.9" y1="1062" x2="674.9" y2="1230" stroke="#4a4d4d" stroke-width="1.5" />
<line x1="344" y1="1146" x2="730" y2="1146" stroke="#4a4d4d" stroke-width="1.5" />
<path d="M344.0,1230.0 L346.4,1229.9 L348.8,1229.8 L351.2,1229.4 L353.6,1228.9 L356.1,1228.3 L358.5,1227.4 L360.9,1226.4 L363.3,1225.1 L365.7,1223.7 L368.1,1222.0 L370.5,1220.2 L372.9,1218.1 L375.4,1215.8 L377.8,1213.3 L380.2,1210.6 L382.6,1207.6 L385.0,1204.4 L387.4,1201.0 L389.8,1197.3 L392.2,1193.4 L394.7,1189.3 L397.1,1184.9 L399.5,1180.3 L401.9,1175.4 L404.3,1170.3 L406.7,1164.9 L409.1,1159.2 L411.6,1153.3 L414.0,1147.2 L416.4,1140.8 L418.8,1134.1 L421.2,1127.2 L423.6,1120.0 L426.0,1112.5 L428.4,1104.8 L430.9,1096.8 L433.3,1088.5 L435.7,1079.9 L438.1,1071.1 L440.5,1062.0" stroke="#f0a830" stroke-width="2" fill="none" />
<line x1="440.5" y1="1062" x2="440.5" y2="1230" stroke="#f0a830" stroke-width="2.2" />
<circle cx="440.5" cy="1062" r="3.5" fill="#f0a830" />
<path d="M440.5,1230.0 L442.9,1229.9 L445.3,1229.8 L447.7,1229.4 L450.1,1228.9 L452.6,1228.3 L455.0,1227.4 L457.4,1226.4 L459.8,1225.1 L462.2,1223.7 L464.6,1222.0 L467.0,1220.2 L469.4,1218.1 L471.9,1215.8 L474.3,1213.3 L476.7,1210.6 L479.1,1207.6 L481.5,1204.4 L483.9,1201.0 L486.3,1197.3 L488.8,1193.4 L491.2,1189.3 L493.6,1184.9 L496.0,1180.3 L498.4,1175.4 L500.8,1170.3 L503.2,1164.9 L505.6,1159.2 L508.1,1153.3 L510.5,1147.2 L512.9,1140.8 L515.3,1134.1 L517.7,1127.2 L520.1,1120.0 L522.5,1112.5 L524.9,1104.8 L527.4,1096.8 L529.8,1088.5 L532.2,1079.9 L534.6,1071.1 L537.0,1062.0" stroke="#f0a830" stroke-width="2" fill="none" />
<line x1="537" y1="1062" x2="537" y2="1230" stroke="#f0a830" stroke-width="2.2" />
<circle cx="537" cy="1062" r="3.5" fill="#f0a830" />
<path d="M537.0,1230.0 L539.4,1229.9 L541.8,1229.8 L544.2,1229.4 L546.6,1228.9 L549.0,1228.3 L551.4,1227.4 L553.8,1226.4 L556.2,1225.1 L558.6,1223.7 L561.0,1222.0 L563.4,1220.2 L565.8,1218.1 L568.2,1215.8 L570.6,1213.3 L573.0,1210.6 L575.4,1207.6 L577.8,1204.4 L580.2,1201.0 L582.6,1197.3 L585.0,1193.4 L587.4,1189.3 L589.8,1184.9 L592.2,1180.3 L594.6,1175.4 L597.0,1170.3 L599.4,1164.9 L601.8,1159.2 L604.2,1153.3 L606.6,1147.2 L609.0,1140.8 L611.4,1134.1 L613.8,1127.2 L616.2,1120.0 L618.6,1112.5 L621.0,1104.8 L623.4,1096.8 L625.8,1088.5 L628.2,1079.9 L630.6,1071.1 L633.0,1062.0" stroke="#f0a830" stroke-width="2" fill="none" />
<line x1="633" y1="1062" x2="633" y2="1230" stroke="#f0a830" stroke-width="2.2" />
<circle cx="633" cy="1062" r="3.5" fill="#f0a830" />
<path d="M633.0,1230.0 L635.4,1229.9 L637.9,1229.8 L640.3,1229.4 L642.7,1228.9 L645.1,1228.3 L647.5,1227.4 L650.0,1226.4 L652.4,1225.1 L654.8,1223.7 L657.2,1222.0 L659.7,1220.2 L662.1,1218.1 L664.5,1215.8 L667.0,1213.3 L669.4,1210.6 L671.8,1207.6 L674.2,1204.4 L676.6,1201.0 L679.1,1197.3 L681.5,1193.4 L683.9,1189.3 L686.4,1184.9 L688.8,1180.3 L691.2,1175.4 L693.6,1170.3 L696.0,1164.9 L698.5,1159.2 L700.9,1153.3 L703.3,1147.2 L705.8,1140.8 L708.2,1134.1 L710.6,1127.2 L713.0,1120.0 L715.5,1112.5 L717.9,1104.8 L720.3,1096.8 L722.7,1088.5 L725.1,1079.9 L727.6,1071.1 L730.0,1062.0" stroke="#f0a830" stroke-width="2" fill="none" />
<circle cx="730" cy="1062" r="3.5" fill="#f0a830" />
<circle cx="344" cy="1230" r="4" fill="#1e1e1e" stroke="#f0a830" stroke-width="1.8" />
<circle cx="440.5" cy="1230" r="4" fill="#1e1e1e" stroke="#f0a830" stroke-width="1.8" />
<circle cx="537" cy="1230" r="4" fill="#1e1e1e" stroke="#f0a830" stroke-width="1.8" />
<circle cx="633" cy="1230" r="3.5" fill="#f0a830" />
<path d="M347,1242 l10,11 M357,1242 l-10,11" stroke="#9a9d9d" stroke-width="1.4" fill="none" />
<path d="M381,1241 v13 M381,1242 q10,10 27,11" stroke="#9a9d9d" stroke-width="1.4" fill="none" />
<path d="M418,1253 q17,-1 27,-11 M445,1241 v13" stroke="#9a9d9d" stroke-width="1.4" fill="none" />
<path d="M456,1254 q0,-12 8,-12 q5,0 5,6 q0,6 5,6 q8,0 8,-12" stroke="#9a9d9d" stroke-width="1.4" fill="none" />
<path d="M493,1254 q4,-2 6,-12 q2,10 4,12 q3,-2 5,-12 q2,10 4,12 q3,-2 5,-12 l2,12" stroke="#9a9d9d" stroke-width="1.4" fill="none" />
<path d="M531,1243 q5,0 7,5 q2,5 5,0 q3,-4 6,0 q3,4 6,-2 q2,-3 4,-2" stroke="#9a9d9d" stroke-width="1.4" fill="none" />
<path d="M567,1249 h10 l3,-7 l3,12 l3,-9 l3,6 h3" stroke="#9a9d9d" stroke-width="1.4" fill="none" />
<text x="618" y="1253.0" font-size="14" fill="#888" stroke="#888" stroke-width="0.4" font-weight="normal" text-anchor="start" style="white-space:pre" >Grid</text>
<text x="652" y="1253.0" font-size="14" fill="#f0a830" font-weight="bold" text-anchor="start" style="white-space:pre" >7</text>
<rect x="689" y="1239" width="42" height="18" fill="#f0a830" />
<text x="710" y="1253.0" font-size="14" fill="#111" stroke="#111" stroke-width="0.4" font-weight="normal" text-anchor="middle" style="white-space:pre" >Snap</text>
<rect x="744" y="1031" width="195" height="108" fill="#1e1e1e" rx="4" />
<line x1="744" y1="1078" x2="939" y2="1078" stroke="#555" stroke-width="1.5" />
<path d="M754.0,1111 L764.7,1048 L765.9,1111 M765.9,1111 L776.5,1048 L777.7,1111 M777.7,1111 L788.4,1048 L789.6,1111 M789.6,1111 L800.3,1048 L801.5,1111 M801.5,1111 L812.1,1048 L813.3,1111 M813.3,1111 L824.0,1048 L825.2,1111 M825.2,1111 L835.9,1048 L837.1,1111 M837.1,1111 L847.7,1048 L848.9,1111 M848.9,1111 L859.6,1048 L860.8,1111 M860.8,1111 L871.5,1048 L872.7,1111 M872.7,1111 L883.3,1048 L884.5,1111 M884.5,1111 L895.2,1048 L896.4,1111 M896.4,1111 L907.1,1048 L908.3,1111 M908.3,1111 L918.9,1048 L920.1,1111 M920.1,1111 L930.8,1048 L932.0,1111" stroke="#f0a830" stroke-width="4" fill="none" stroke-linejoin="miter"/>
<text x="751" y="1131.0" font-size="14" fill="#888" stroke="#888" stroke-width="0.4" font-weight="normal" text-anchor="start" style="white-space:pre" >Jitter</text>
<text x="791" y="1131.0" font-size="14" fill="#f0a830" font-weight="bold" text-anchor="start" style="white-space:pre" >0 %</text>
<text x="839" y="1131.0" font-size="14" fill="#888" stroke="#888" stroke-width="0.4" font-weight="normal" text-anchor="start" style="white-space:pre" >Smooth</text>
<text x="893" y="1131.0" font-size="14" fill="#f0a830" font-weight="bold" text-anchor="start" style="white-space:pre" >0 %</text>
<text x="787" y="1163.0" font-size="14" fill="#111" stroke="#111" stroke-width="0.4" font-weight="normal" text-anchor="middle" style="white-space:pre" >Rate</text>
<path d="M777.82,1199.11 A16,16 0 1 1 796.18,1199.11" stroke="#1a1a1a" stroke-width="3" fill="none" stroke-linecap="butt"/>
<path d="M777.82,1199.11 A16,16 0 0 1 777.87,1172.86" stroke="#1ab6e6" stroke-width="3" fill="none" />
<line x1="787.00" y1="1186.00" x2="777.87" y2="1172.86" stroke="#1a1a1a" stroke-width="3" />
<text x="787" y="1216.0" font-size="14" fill="#111" stroke="#111" stroke-width="0.4" font-weight="normal" text-anchor="middle" style="white-space:pre" >1/4</text>
<line x1="807" y1="1182" x2="815" y2="1182" stroke="#777" stroke-width="1" />
<rect x="825" y="1162" width="25" height="16" fill="#a6a9a9" stroke="#555" stroke-width="1" />
<text x="837.5" y="1174.0" font-size="11" fill="#111" stroke="#111" stroke-width="0.4" font-weight="normal" text-anchor="middle" style="white-space:pre" >Hz</text>
<rect x="825" y="1185" width="25" height="16" fill="#f0a830" stroke="#555" stroke-width="1" />
<text x="837.5" y="1197.0" font-size="11" fill="#111" stroke="#111" stroke-width="0.4" font-weight="normal" text-anchor="middle" style="white-space:pre" >♪</text>
<text x="896" y="1163.0" font-size="14" fill="#111" stroke="#111" stroke-width="0.4" font-weight="normal" text-anchor="middle" style="white-space:pre" >Depth</text>
<path d="M886.82,1199.11 A16,16 0 1 1 905.18,1199.11" stroke="#1a1a1a" stroke-width="3" fill="none" stroke-linecap="butt"/>
<path d="M886.82,1199.11 A16,16 0 1 1 905.18,1199.11" stroke="#1ab6e6" stroke-width="3" fill="none" />
<line x1="896.00" y1="1186.00" x2="905.18" y2="1199.11" stroke="#1a1a1a" stroke-width="3" />
<text x="896" y="1216.0" font-size="14" fill="#111" stroke="#111" stroke-width="0.4" font-weight="normal" text-anchor="middle" style="white-space:pre" >100 %</text>
<text x="772" y="1237.0" font-size="14" fill="#111" stroke="#111" stroke-width="0.4" font-weight="normal" text-anchor="middle" style="white-space:pre" >Phase</text>
<rect x="756" y="1241" width="63" height="18" fill="#c2c5c5" stroke="#555" stroke-width="1" />
<text x="785" y="1255.0" font-size="14" fill="#111" stroke="#111" stroke-width="0.4" font-weight="normal" text-anchor="middle" style="white-space:pre" >0.00 %</text>
<path d="M817,1243 L808,1250 L817,1257 Z" stroke="none" stroke-width="1" fill="#aaa" />
<circle cx="832" cy="1250" r="7" fill="none" stroke="#777" stroke-width="1.2" />
<text x="832" y="1253.6" font-size="10" fill="#777" stroke="#777" stroke-width="0.4" font-weight="normal" text-anchor="middle" style="white-space:pre" >R</text>
<text x="884" y="1237.0" font-size="14" fill="#111" stroke="#111" stroke-width="0.4" font-weight="normal" text-anchor="middle" style="white-space:pre" >Offset</text>
<rect x="865" y="1241" width="63" height="18" fill="#c2c5c5" stroke="#555" stroke-width="1" />
<text x="894" y="1255.0" font-size="14" fill="#111" stroke="#111" stroke-width="0.4" font-weight="normal" text-anchor="middle" style="white-space:pre" >0 %</text>
<path d="M926,1243 L917,1250 L926,1257 Z" stroke="none" stroke-width="1" fill="#aaa" />
<rect x="961" y="1002" width="718" height="266" fill="#8d9090" rx="5" />
<rect x="961" y="1002" width="718" height="24" fill="#a2bec6" rx="5" />
<circle cx="974" cy="1013.5" r="8.5" fill="#f0a830" stroke="#666" stroke-width="1" />
<text x="990" y="1018.5" font-size="14" fill="#111" font-weight="bold" text-anchor="start" style="white-space:pre" >Echo</text>
<rect x="1214" y="1004" width="50" height="22" fill="#1e1e1e" rx="3" />
<text x="1239" y="1019.0" font-size="14" fill="#bbb" stroke="#bbb" stroke-width="0.4" font-weight="normal" text-anchor="middle" style="white-space:pre" >Echo</text>
<rect x="1267" y="1004" width="90" height="19" fill="#7e8181" rx="3" />
<text x="1312" y="1018.5" font-size="14" fill="#111" stroke="#111" stroke-width="0.4" font-weight="normal" text-anchor="middle" style="white-space:pre" >Modulation</text>
<rect x="1361" y="1004" width="82" height="19" fill="#7e8181" rx="3" />
<text x="1402" y="1018.5" font-size="14" fill="#111" stroke="#111" stroke-width="0.4" font-weight="normal" text-anchor="middle" style="white-space:pre" >Character</text>
<circle cx="1642" cy="1013.5" r="8.5" fill="#a2bec6" stroke="#333" stroke-width="1.4" />
<path d="M1637,1011 a5,5 0 0 1 9,1 M1647,1016 a5,5 0 0 1 -9,-1" stroke="#111" stroke-width="1.5" fill="none" />
<circle cx="1665" cy="1013.5" r="8.5" fill="#a2bec6" stroke="#333" stroke-width="1.4" />
<rect x="1660" y="1008.5" width="10" height="10" fill="#111" rx="1" />
<rect x="1662" y="1009.5" width="6" height="3.5" fill="#ddd" />
<rect x="964" y="1026" width="167" height="240" fill="#7e8181" rx="3" />
<line x1="1047" y1="1029" x2="1047" y2="1053" stroke="#666" stroke-width="1.5" />
<line x1="1047" y1="1077" x2="1047" y2="1185" stroke="#666" stroke-width="1.5" />
<text x="1001" y="1041.0" font-size="14" fill="#111" stroke="#111" stroke-width="0.4" font-weight="normal" text-anchor="middle" style="white-space:pre" >Left</text>
<path d="M991.82,1077.11 A16,16 0 1 1 1010.18,1077.11" stroke="#1a1a1a" stroke-width="3" fill="none" stroke-linecap="butt"/>
<path d="M991.82,1077.11 A16,16 0 0 1 1001.00,1048.00" stroke="#1ab6e6" stroke-width="3" fill="none" />
<line x1="1001.00" y1="1064.00" x2="1001.00" y2="1048.00" stroke="#1a1a1a" stroke-width="3" />
<text x="1001" y="1094.0" font-size="14" fill="#111" stroke="#111" stroke-width="0.4" font-weight="normal" text-anchor="middle" style="white-space:pre" >1/8</text>
<text x="1092" y="1041.0" font-size="14" fill="#111" stroke="#111" stroke-width="0.4" font-weight="normal" text-anchor="middle" style="white-space:pre" >Right</text>
<path d="M1082.82,1077.11 A16,16 0 1 1 1101.18,1077.11" stroke="#1a1a1a" stroke-width="3" fill="none" stroke-linecap="butt"/>
<path d="M1082.82,1077.11 A16,16 0 0 1 1092.00,1048.00" stroke="#1ab6e6" stroke-width="3" fill="none" />
<line x1="1092.00" y1="1064.00" x2="1092.00" y2="1048.00" stroke="#1a1a1a" stroke-width="3" />
<text x="1092" y="1094.0" font-size="14" fill="#111" stroke="#111" stroke-width="0.4" font-weight="normal" text-anchor="middle" style="white-space:pre" >1/8</text>
<rect x="1035" y="1057" width="25" height="17" fill="#f0a830" stroke="#555" stroke-width="1" />
<path d="M1041,1065.5 h13 M1043,1062 h9 v7 h-9 z" stroke="#111" stroke-width="1.4" fill="none" />
<rect x="968" y="1115" width="65" height="17" fill="#f0a830" stroke="#555" stroke-width="1" />
<text x="1001" y="1128.5" font-size="14" fill="#111" stroke="#111" stroke-width="0.4" font-weight="normal" text-anchor="middle" style="white-space:pre" >Sync</text>
<rect x="968" y="1138" width="65" height="17" fill="#a6a9a9" stroke="#555" stroke-width="1" />
<text x="973" y="1151.5" font-size="14" fill="#111" stroke="#111" stroke-width="0.4" font-weight="normal" text-anchor="start" style="white-space:pre" >Dotted</text>
<path d="M1017,1142 L1027,1142 L1022,1150 Z" stroke="none" stroke-width="1" fill="#111" />
<rect x="968" y="1161" width="65" height="17" fill="#c4c5c4" stroke="#777" stroke-width="1" />
<text x="999" y="1174.5" font-size="14" fill="#333" stroke="#333" stroke-width="0.4" font-weight="normal" text-anchor="middle" style="white-space:pre" >0.0 %</text>
<path d="M1029,1163 L1021,1169.5 L1029,1176 Z" stroke="none" stroke-width="1" fill="#aaa" />
<rect x="1060" y="1115" width="65" height="17" fill="#f0a830" stroke="#555" stroke-width="1" />
<text x="1093" y="1128.5" font-size="14" fill="#111" stroke="#111" stroke-width="0.4" font-weight="normal" text-anchor="middle" style="white-space:pre" >Sync</text>
<rect x="1060" y="1138" width="65" height="17" fill="#a6a9a9" stroke="#555" stroke-width="1" />
<text x="1065" y="1151.5" font-size="14" fill="#111" stroke="#111" stroke-width="0.4" font-weight="normal" text-anchor="start" style="white-space:pre" >Dotted</text>
<path d="M1109,1142 L1119,1142 L1114,1150 Z" stroke="none" stroke-width="1" fill="#111" />
<rect x="1060" y="1161" width="65" height="17" fill="#c4c5c4" stroke="#777" stroke-width="1" />
<text x="1091" y="1174.5" font-size="14" fill="#333" stroke="#333" stroke-width="0.4" font-weight="normal" text-anchor="middle" style="white-space:pre" >0.0 %</text>
<path d="M1121,1163 L1113,1169.5 L1121,1176 Z" stroke="none" stroke-width="1" fill="#aaa" />
<text x="1001" y="1208.0" font-size="14" fill="#111" stroke="#111" stroke-width="0.4" font-weight="normal" text-anchor="middle" style="white-space:pre" >Input</text>
<path d="M991.82,1243.11 A16,16 0 1 1 1010.18,1243.11" stroke="#1a1a1a" stroke-width="3" fill="none" stroke-linecap="butt"/>
<path d="M991.82,1243.11 A16,16 0 0 1 1001.00,1214.00" stroke="#1ab6e6" stroke-width="3" fill="none" />
<line x1="1001.00" y1="1230.00" x2="1001.00" y2="1214.00" stroke="#1a1a1a" stroke-width="3" />
<text x="1001" y="1260.0" font-size="14" fill="#111" stroke="#111" stroke-width="0.4" font-weight="normal" text-anchor="middle" style="white-space:pre" >0.0 dB</text>
<text x="1093" y="1208.0" font-size="14" fill="#111" stroke="#111" stroke-width="0.4" font-weight="normal" text-anchor="middle" style="white-space:pre" >Feedback</text>
<path d="M1083.82,1243.11 A16,16 0 1 1 1102.18,1243.11" stroke="#1a1a1a" stroke-width="3" fill="none" stroke-linecap="butt"/>
<path d="M1083.82,1243.11 A16,16 0 0 1 1079.43,1221.52" stroke="#1ab6e6" stroke-width="3" fill="none" />
<line x1="1093.00" y1="1230.00" x2="1079.43" y2="1221.52" stroke="#1a1a1a" stroke-width="3" />
<text x="1093" y="1260.0" font-size="14" fill="#111" stroke="#111" stroke-width="0.4" font-weight="normal" text-anchor="middle" style="white-space:pre" >50 %</text>
<rect x="1038" y="1209" width="18" height="17" fill="#a6a9a9" stroke="#555" stroke-width="1" />
<text x="1047" y="1222.2" font-size="13" fill="#111" stroke="#111" stroke-width="0.4" font-weight="normal" text-anchor="middle" style="white-space:pre" >D</text>
<rect x="1038" y="1232" width="18" height="17" fill="#a6a9a9" stroke="#555" stroke-width="1" />
<text x="1047" y="1245.2" font-size="13" fill="#111" stroke="#111" stroke-width="0.4" font-weight="normal" text-anchor="middle" style="white-space:pre" >Ø</text>
<line x1="1023" y1="1217" x2="1036" y2="1217" stroke="#666" stroke-width="1" />
<line x1="1058" y1="1240" x2="1070" y2="1240" stroke="#666" stroke-width="1" />
<rect x="1134" y="1025" width="382" height="241" fill="#1e1e1e" rx="3" />
<path d="M1145,1238 A180,180 0 0 1 1505,1238" stroke="#f0a830" stroke-width="2.2" fill="none" stroke-opacity="1.0"/>
<path d="M1194,1238 A131,131 0 0 1 1456,1238" stroke="#f0a830" stroke-width="2.2" fill="none" stroke-opacity="1.0"/>
<path d="M1222,1238 A103,103 0 0 1 1428,1238" stroke="#f0a830" stroke-width="2.0" fill="none" stroke-opacity="1.0"/>
<path d="M1240,1238 A85,85 0 0 1 1410,1238" stroke="#f0a830" stroke-width="1.8" fill="none" stroke-opacity="0.85"/>
<path d="M1250,1238 A75,75 0 0 1 1400,1238" stroke="#f0a830" stroke-width="1.5" fill="none" stroke-opacity="0.7"/>
<path d="M1257,1238 A68,68 0 0 1 1393,1238" stroke="#f0a830" stroke-width="1.3" fill="none" stroke-opacity="0.55"/>
<path d="M1263,1238 A62,62 0 0 1 1387,1238" stroke="#f0a830" stroke-width="1.2" fill="none" stroke-opacity="0.45"/>
<path d="M1268,1238 A57,57 0 0 1 1382,1238" stroke="#f0a830" stroke-width="1.1" fill="none" stroke-opacity="0.38"/>
<path d="M1272,1238 A53,53 0 0 1 1378,1238" stroke="#f0a830" stroke-width="1.0" fill="none" stroke-opacity="0.3"/>
<path d="M1275,1238 A50,50 0 0 1 1375,1238" stroke="#f0a830" stroke-width="1.0" fill="none" stroke-opacity="0.25"/>
<path d="M1278,1238 A47,47 0 0 1 1372,1238" stroke="#f0a830" stroke-width="1.0" fill="none" stroke-opacity="0.2"/>
<circle cx="1325" cy="1058" r="3.5" fill="#fff" />
<circle cx="1325" cy="1094" r="2.5" fill="#fff" />
<circle cx="1325" cy="1118" r="2.2" fill="#fff" />
<circle cx="1325" cy="1135" r="2" fill="#fff" />
<circle cx="1325" cy="1148" r="1.8" fill="#fff" />
<circle cx="1325" cy="1158" r="1.6" fill="#fff" />
<circle cx="1325" cy="1166" r="1.4" fill="#fff" />
<circle cx="1325" cy="1173" r="1.2" fill="#fff" />
<line x1="1134" y1="1239" x2="1516" y2="1239" stroke="#3a3a3a" stroke-width="1.5" />
<path d="M1143,1246 L1153,1253 L1143,1260 Z" stroke="none" stroke-width="1" fill="#777" />
<rect x="1162" y="1246" width="13" height="14" fill="#1ab4dc" />
<text x="1181" y="1258.0" font-size="14" fill="#999" stroke="#999" stroke-width="0.4" font-weight="normal" text-anchor="start" style="white-space:pre" >Filter HP</text>
<text x="1241" y="1258.0" font-size="14" fill="#1ab4dc" font-weight="bold" text-anchor="start" style="white-space:pre" >50.0 Hz</text>
<text x="1303" y="1258.0" font-size="14" fill="#999" stroke="#999" stroke-width="0.4" font-weight="normal" text-anchor="start" style="white-space:pre" >Res</text>
<text x="1330" y="1258.0" font-size="14" fill="#1ab4dc" font-weight="bold" text-anchor="start" style="white-space:pre" >0.00</text>
<text x="1369" y="1258.0" font-size="14" fill="#999" stroke="#999" stroke-width="0.4" font-weight="normal" text-anchor="start" style="white-space:pre" >LP</text>
<text x="1389" y="1258.0" font-size="14" fill="#1ab4dc" font-weight="bold" text-anchor="start" style="white-space:pre" >5.00 kHz</text>
<text x="1452" y="1258.0" font-size="14" fill="#999" stroke="#999" stroke-width="0.4" font-weight="normal" text-anchor="start" style="white-space:pre" >Res</text>
<text x="1479" y="1258.0" font-size="14" fill="#1ab4dc" font-weight="bold" text-anchor="start" style="white-space:pre" >0.00</text>
<rect x="1519" y="1026" width="158" height="240" fill="#7e8181" rx="3" />
<text x="1562" y="1041.0" font-size="14" fill="#111" stroke="#111" stroke-width="0.4" font-weight="normal" text-anchor="middle" style="white-space:pre" >Reverb</text>
<path d="M1552.82,1077.11 A16,16 0 1 1 1571.18,1077.11" stroke="#1a1a1a" stroke-width="3" fill="none" stroke-linecap="butt"/>
<line x1="1562.00" y1="1064.00" x2="1552.82" y2="1077.11" stroke="#1a1a1a" stroke-width="3" />
<text x="1562" y="1093.0" font-size="14" fill="#111" stroke="#111" stroke-width="0.4" font-weight="normal" text-anchor="middle" style="white-space:pre" >0.0 %</text>
<text x="1640" y="1041.0" font-size="14" fill="#111" stroke="#111" stroke-width="0.4" font-weight="normal" text-anchor="middle" style="white-space:pre" >Stereo</text>
<path d="M1630.82,1077.11 A16,16 0 1 1 1649.18,1077.11" stroke="#1a1a1a" stroke-width="3" fill="none" stroke-linecap="butt"/>
<path d="M1630.82,1077.11 A16,16 0 0 1 1640.00,1048.00" stroke="#1ab6e6" stroke-width="3" fill="none" />
<line x1="1640.00" y1="1064.00" x2="1640.00" y2="1048.00" stroke="#1a1a1a" stroke-width="3" />
<text x="1640" y="1093.0" font-size="14" fill="#111" stroke="#111" stroke-width="0.4" font-weight="normal" text-anchor="middle" style="white-space:pre" >100 %</text>
<rect x="1524" y="1116" width="75" height="17" fill="#c2c5c5" stroke="#555" stroke-width="1" />
<text x="1528" y="1129.5" font-size="14" fill="#111" stroke="#111" stroke-width="0.4" font-weight="normal" text-anchor="start" style="white-space:pre" >Post</text>
<path d="M1585,1120 L1595,1120 L1590,1128 Z" stroke="none" stroke-width="1" fill="#111" />
<text x="1524" y="1152.0" font-size="14" fill="#111" stroke="#111" stroke-width="0.4" font-weight="normal" text-anchor="start" style="white-space:pre" >Decay</text>
<rect x="1524" y="1157" width="75" height="17" fill="#c2c5c5" stroke="#555" stroke-width="1" />
<rect x="1525" y="1158" width="37" height="15" fill="#1ab4dc" />
<text x="1561" y="1170.5" font-size="14" fill="#111" stroke="#111" stroke-width="0.4" font-weight="normal" text-anchor="middle" style="white-space:pre" >50 %</text>
<text x="1640" y="1124.0" font-size="14" fill="#111" stroke="#111" stroke-width="0.4" font-weight="normal" text-anchor="middle" style="white-space:pre" >Output</text>
<path d="M1630.82,1159.11 A16,16 0 1 1 1649.18,1159.11" stroke="#1a1a1a" stroke-width="3" fill="none" stroke-linecap="butt"/>
<path d="M1630.82,1159.11 A16,16 0 0 1 1640.00,1130.00" stroke="#1ab6e6" stroke-width="3" fill="none" />
<line x1="1640.00" y1="1146.00" x2="1640.00" y2="1130.00" stroke="#1a1a1a" stroke-width="3" />
<text x="1640" y="1175.0" font-size="14" fill="#111" stroke="#111" stroke-width="0.4" font-weight="normal" text-anchor="middle" style="white-space:pre" >0.0 dB</text>
<rect x="1524" y="1198" width="75" height="17" fill="#f0a830" stroke="#555" stroke-width="1" />
<text x="1561.5" y="1211.5" font-size="14" fill="#111" stroke="#111" stroke-width="0.4" font-weight="normal" text-anchor="middle" style="white-space:pre" >Stereo</text>
<rect x="1524" y="1221" width="75" height="17" fill="#b9bab9" stroke="#555" stroke-width="1" />
<text x="1561.5" y="1234.5" font-size="14" fill="#111" stroke="#111" stroke-width="0.4" font-weight="normal" text-anchor="middle" style="white-space:pre" >Ping Pong</text>
<rect x="1524" y="1244" width="75" height="17" fill="#b9bab9" stroke="#555" stroke-width="1" />
<text x="1561.5" y="1257.5" font-size="14" fill="#111" stroke="#111" stroke-width="0.4" font-weight="normal" text-anchor="middle" style="white-space:pre" >Mid/Side</text>
<text x="1640" y="1208.0" font-size="14" fill="#111" stroke="#111" stroke-width="0.4" font-weight="normal" text-anchor="middle" style="white-space:pre" >Dry/Wet</text>
<path d="M1630.82,1243.11 A16,16 0 1 1 1649.18,1243.11" stroke="#1a1a1a" stroke-width="3" fill="none" stroke-linecap="butt"/>
<path d="M1630.82,1243.11 A16,16 0 1 1 1655.48,1225.97" stroke="#1ab6e6" stroke-width="3" fill="none" />
<line x1="1640.00" y1="1230.00" x2="1655.48" y2="1225.97" stroke="#1a1a1a" stroke-width="3" />
<text x="1640" y="1260.0" font-size="14" fill="#111" stroke="#111" stroke-width="0.4" font-weight="normal" text-anchor="middle" style="white-space:pre" >70 %</text>
<rect x="1695" y="1002" width="342" height="266" fill="#8d9090" rx="5" />
<rect x="1695" y="1002" width="342" height="23" fill="#a2a5a5" rx="5" />
<circle cx="1708" cy="1013.5" r="8.5" fill="#f0a830" stroke="#666" stroke-width="1" />
<text x="1724" y="1018.5" font-size="14" fill="#111" font-weight="bold" text-anchor="start" style="white-space:pre" >Drum Buss</text>
<circle cx="2033" cy="1013.5" r="8.5" fill="#a2a5a5" stroke="#333" stroke-width="1.4" />
<line x1="1777" y1="1036" x2="1777" y2="1260" stroke="#777" stroke-width="1.5" />
<line x1="1859" y1="1036" x2="1859" y2="1260" stroke="#777" stroke-width="1.5" />
<text x="1736" y="1046.0" font-size="14" fill="#111" stroke="#111" stroke-width="0.4" font-weight="normal" text-anchor="middle" style="white-space:pre" >Drive</text>
<path d="M1726.82,1081.11 A16,16 0 1 1 1745.18,1081.11" stroke="#1a1a1a" stroke-width="3" fill="none" stroke-linecap="butt"/>
<path d="M1726.82,1081.11 A16,16 0 0 1 1720.02,1068.78" stroke="#1ab6e6" stroke-width="3" fill="none" />
<line x1="1736.00" y1="1068.00" x2="1720.02" y2="1068.78" stroke="#1a1a1a" stroke-width="3" />
<text x="1736" y="1097.0" font-size="14" fill="#111" stroke="#111" stroke-width="0.4" font-weight="normal" text-anchor="middle" style="white-space:pre" >20 %</text>
<rect x="1703" y="1109" width="66" height="17" fill="#f0a830" stroke="#555" stroke-width="1" />
<text x="1736" y="1122.5" font-size="14" fill="#111" stroke="#111" stroke-width="0.4" font-weight="normal" text-anchor="middle" style="white-space:pre" >Soft</text>
<rect x="1703" y="1132" width="66" height="17" fill="#b9bab9" stroke="#555" stroke-width="1" />
<text x="1736" y="1145.5" font-size="14" fill="#111" stroke="#111" stroke-width="0.4" font-weight="normal" text-anchor="middle" style="white-space:pre" >Medium</text>
<rect x="1703" y="1155" width="66" height="17" fill="#b9bab9" stroke="#555" stroke-width="1" />
<text x="1736" y="1168.5" font-size="14" fill="#111" stroke="#111" stroke-width="0.4" font-weight="normal" text-anchor="middle" style="white-space:pre" >Hard</text>
<text x="1703" y="1197.0" font-size="14" fill="#111" stroke="#111" stroke-width="0.4" font-weight="normal" text-anchor="start" style="white-space:pre" >Trim</text>
<rect x="1703" y="1205" width="66" height="17" fill="#1ab4dc" stroke="#555" stroke-width="1" />
<text x="1736" y="1218.5" font-size="14" fill="#111" stroke="#111" stroke-width="0.4" font-weight="normal" text-anchor="middle" style="white-space:pre" >0.00 dB</text>
<rect x="1703" y="1242" width="66" height="17" fill="#a6a9a9" stroke="#555" stroke-width="1" />
<text x="1736" y="1255.5" font-size="14" fill="#111" stroke="#111" stroke-width="0.4" font-weight="normal" text-anchor="middle" style="white-space:pre" >Comp</text>
<text x="1819" y="1046.0" font-size="14" fill="#111" stroke="#111" stroke-width="0.4" font-weight="normal" text-anchor="middle" style="white-space:pre" >Crunch</text>
<path d="M1809.82,1081.11 A16,16 0 1 1 1828.18,1081.11" stroke="#1a1a1a" stroke-width="3" fill="none" stroke-linecap="butt"/>
<line x1="1819.00" y1="1068.00" x2="1809.82" y2="1081.11" stroke="#1a1a1a" stroke-width="3" />
<text x="1819" y="1097.0" font-size="14" fill="#111" stroke="#111" stroke-width="0.4" font-weight="normal" text-anchor="middle" style="white-space:pre" >0.0 %</text>
<text x="1819" y="1122.0" font-size="14" fill="#111" stroke="#111" stroke-width="0.4" font-weight="normal" text-anchor="middle" style="white-space:pre" >Damp</text>
<path d="M1809.82,1156.11 A16,16 0 1 1 1828.18,1156.11" stroke="#1a1a1a" stroke-width="3" fill="none" stroke-linecap="butt"/>
<path d="M1809.82,1156.11 A16,16 0 1 1 1834.81,1140.55" stroke="#1ab6e6" stroke-width="3" fill="none" />
<line x1="1819.00" y1="1143.00" x2="1834.81" y2="1140.55" stroke="#1a1a1a" stroke-width="3" />
<text x="1819" y="1172.0" font-size="14" fill="#111" stroke="#111" stroke-width="0.4" font-weight="normal" text-anchor="middle" style="white-space:pre" >9.20 kHz</text>
<text x="1819" y="1197.0" font-size="14" fill="#111" stroke="#111" stroke-width="0.4" font-weight="normal" text-anchor="middle" style="white-space:pre" >Transients</text>
<path d="M1809.82,1242.11 A16,16 0 0 1 1812.24,1214.50" stroke="#1a1a1a" stroke-width="3" fill="none" />
<path d="M1825.76,1214.50 A16,16 0 0 1 1828.18,1242.11" stroke="#1a1a1a" stroke-width="3" fill="none" />
<line x1="1819" y1="1212" x2="1819" y2="1230" stroke="#1a1a1a" stroke-width="2.6" />
<path d="M1814,1205 L1824,1205 L1819,1210 Z" stroke="none" stroke-width="1" fill="#1a1a1a" />
<text x="1819" y="1260.0" font-size="14" fill="#111" stroke="#111" stroke-width="0.4" font-weight="normal" text-anchor="middle" style="white-space:pre" >0.00</text>
<text x="1900" y="1046.0" font-size="14" fill="#111" stroke="#111" stroke-width="0.4" font-weight="normal" text-anchor="middle" style="white-space:pre" >Boom</text>
<path d="M1890.82,1081.11 A16,16 0 1 1 1909.18,1081.11" stroke="#1a1a1a" stroke-width="3" fill="none" stroke-linecap="butt"/>
<line x1="1900.00" y1="1068.00" x2="1890.82" y2="1081.11" stroke="#1a1a1a" stroke-width="3" />
<text x="1900" y="1097.0" font-size="14" fill="#111" stroke="#111" stroke-width="0.4" font-weight="normal" text-anchor="middle" style="white-space:pre" >0.0 %</text>
<text x="1900" y="1122.0" font-size="14" fill="#111" stroke="#111" stroke-width="0.4" font-weight="normal" text-anchor="middle" style="white-space:pre" >Freq</text>
<path d="M1890.82,1156.11 A16,16 0 1 1 1909.18,1156.11" stroke="#1a1a1a" stroke-width="3" fill="none" stroke-linecap="butt"/>
<path d="M1890.82,1156.11 A16,16 0 0 1 1895.99,1127.51" stroke="#1ab6e6" stroke-width="3" fill="none" />
<line x1="1900.00" y1="1143.00" x2="1895.99" y2="1127.51" stroke="#1a1a1a" stroke-width="3" />
<text x="1900" y="1172.0" font-size="14" fill="#111" stroke="#111" stroke-width="0.4" font-weight="normal" text-anchor="middle" style="white-space:pre" >50.0 Hz</text>
<text x="1867" y="1197.0" font-size="14" fill="#111" stroke="#111" stroke-width="0.4" font-weight="normal" text-anchor="start" style="white-space:pre" >Decay</text>
<rect x="1867" y="1205" width="65" height="17" fill="#1ab4dc" stroke="#555" stroke-width="1" />
<text x="1899.5" y="1218.5" font-size="14" fill="#111" stroke="#111" stroke-width="0.4" font-weight="normal" text-anchor="middle" style="white-space:pre" >100 %</text>
<rect x="1867" y="1241" width="42" height="19" fill="#b9bab9" rx="9.5" stroke="#555" stroke-width="1" />
<text x="1888" y="1255.2" font-size="13" fill="#111" stroke="#111" stroke-width="0.4" font-weight="normal" text-anchor="middle" style="white-space:pre" >G0+</text>
<circle cx="1924" cy="1250" r="8" fill="#a6a9a9" stroke="#555" stroke-width="1" />
<path d="M1919,1253 v-3 a5,5 0 0 1 10,0 v3" stroke="#111" stroke-width="1.4" fill="none" />
<rect x="1940" y="1031" width="97" height="232" fill="#1e1e1e" rx="4" />
<text x="1976" y="1049.7" font-size="13" fill="#888" stroke="#888" stroke-width="0.4" font-weight="normal" text-anchor="middle" style="white-space:pre" >Bass</text>
<text x="2018" y="1049.7" font-size="13" fill="#888" stroke="#888" stroke-width="0.4" font-weight="normal" text-anchor="start" style="white-space:pre" >Ou</text>
<rect x="1967" y="1056" width="17" height="155" fill="none" stroke="#444" stroke-width="1.5" />
<line x1="1967" y1="1068" x2="1984" y2="1068" stroke="#444" stroke-width="1.5" />
<rect x="2022" y="1056" width="17" height="155" fill="none" stroke="#444" stroke-width="1.5" />
<text x="1975" y="1226.7" font-size="13" fill="#999" stroke="#999" stroke-width="0.4" font-weight="normal" text-anchor="middle" style="white-space:pre" >0.0 %</text>
<text x="2008" y="1226.7" font-size="13" fill="#999" stroke="#999" stroke-width="0.4" font-weight="normal" text-anchor="start" style="white-space:pre" >0.00</text>
<line x1="1940" y1="1233" x2="2037" y2="1233" stroke="#3a3a3a" stroke-width="1.5" />
<text x="1951" y="1255.0" font-size="14" fill="#999" stroke="#999" stroke-width="0.4" font-weight="normal" text-anchor="start" style="white-space:pre" >Dry / Wet</text>
<text x="2019" y="1255.0" font-size="14" fill="#1ab4dc" font-weight="bold" text-anchor="start" style="white-space:pre" >10</text>
<rect x="2037" y="995" width="11" height="279" fill="#636665" />
<rect x="2037" y="995" width="2" height="279" fill="#464a49" />
<circle cx="21" cy="1301" r="13" fill="#555857" />
<path d="M14,1308 L21,1294 L28,1308 Z" stroke="none" stroke-width="1" fill="#8a8b8a" />
<rect x="43" y="1284" width="1237" height="37" fill="#464a49" rx="4" />
<rect x="48" y="1288" width="1227" height="29" fill="#7f8282" />
<rect x="1286" y="1284" width="301" height="37" fill="#464a49" rx="4" />
<rect x="1290" y="1288" width="293" height="29" fill="#7f8282" />
<rect x="1595" y="1276" width="406" height="42" fill="#5a5c5b" rx="5" />
<text x="1601" y="1308.0" font-size="14" fill="#111" stroke="#111" stroke-width="0.4" font-weight="normal" text-anchor="start" style="white-space:pre" >6 Crossover Syn Bass</text>
<rect x="1742" y="1291" width="124" height="22" fill="#9a9d9d" />
<rect x="1772" y="1292" width="30" height="20" fill="#2b2c2c" />
<rect x="1803" y="1292" width="20" height="20" fill="#4a4d4d" />
<rect x="1806" y="1301" width="15" height="10" fill="#9a9d9d" />
<rect x="1826" y="1292" width="32" height="20" fill="#2b2c2c" />
<rect x="1746" y="1295" width="20" height="2" fill="#777a7a" />
<rect x="1746" y="1300" width="20" height="2" fill="#777a7a" />
<rect x="1746" y="1305" width="20" height="2" fill="#777a7a" />
<rect x="1768" y="1296" width="3" height="3" fill="#f0a830" />
<rect x="1860" y="1294" width="4" height="3" fill="#1ab4dc" />
<rect x="1860" y="1302" width="4" height="3" fill="#1ab4dc" />
<rect x="1868" y="1288" width="117" height="30" fill="#111" />
<rect x="1870" y="1290" width="113" height="26" fill="#9a9d9d" />
<text x="1893" y="1308.0" font-size="11" fill="#111" stroke="#111" stroke-width="0.4" font-weight="normal" text-anchor="middle" style="white-space:pre" >Shaper</text>
<rect x="1930" y="1291" width="26" height="24" fill="#2b2c2c" />
<path d="M1933,1314 a10,10 0 0 1 20,0" stroke="#6a5a30" stroke-width="1" fill="none" />
<rect x="1920" y="1296" width="3" height="3" fill="#f0a830" />
<rect x="1962" y="1302" width="3" height="3" fill="#1ab4dc" />
<rect x="1986" y="1291" width="10" height="23" fill="#2b2c2c" />
<circle cx="2026" cy="1301" r="13" fill="#555857" />
<path d="M2019,1308 L2026,1294 L2033,1308 Z" stroke="none" stroke-width="1" fill="#8a8b8a" />
</svg>
</body></html>
